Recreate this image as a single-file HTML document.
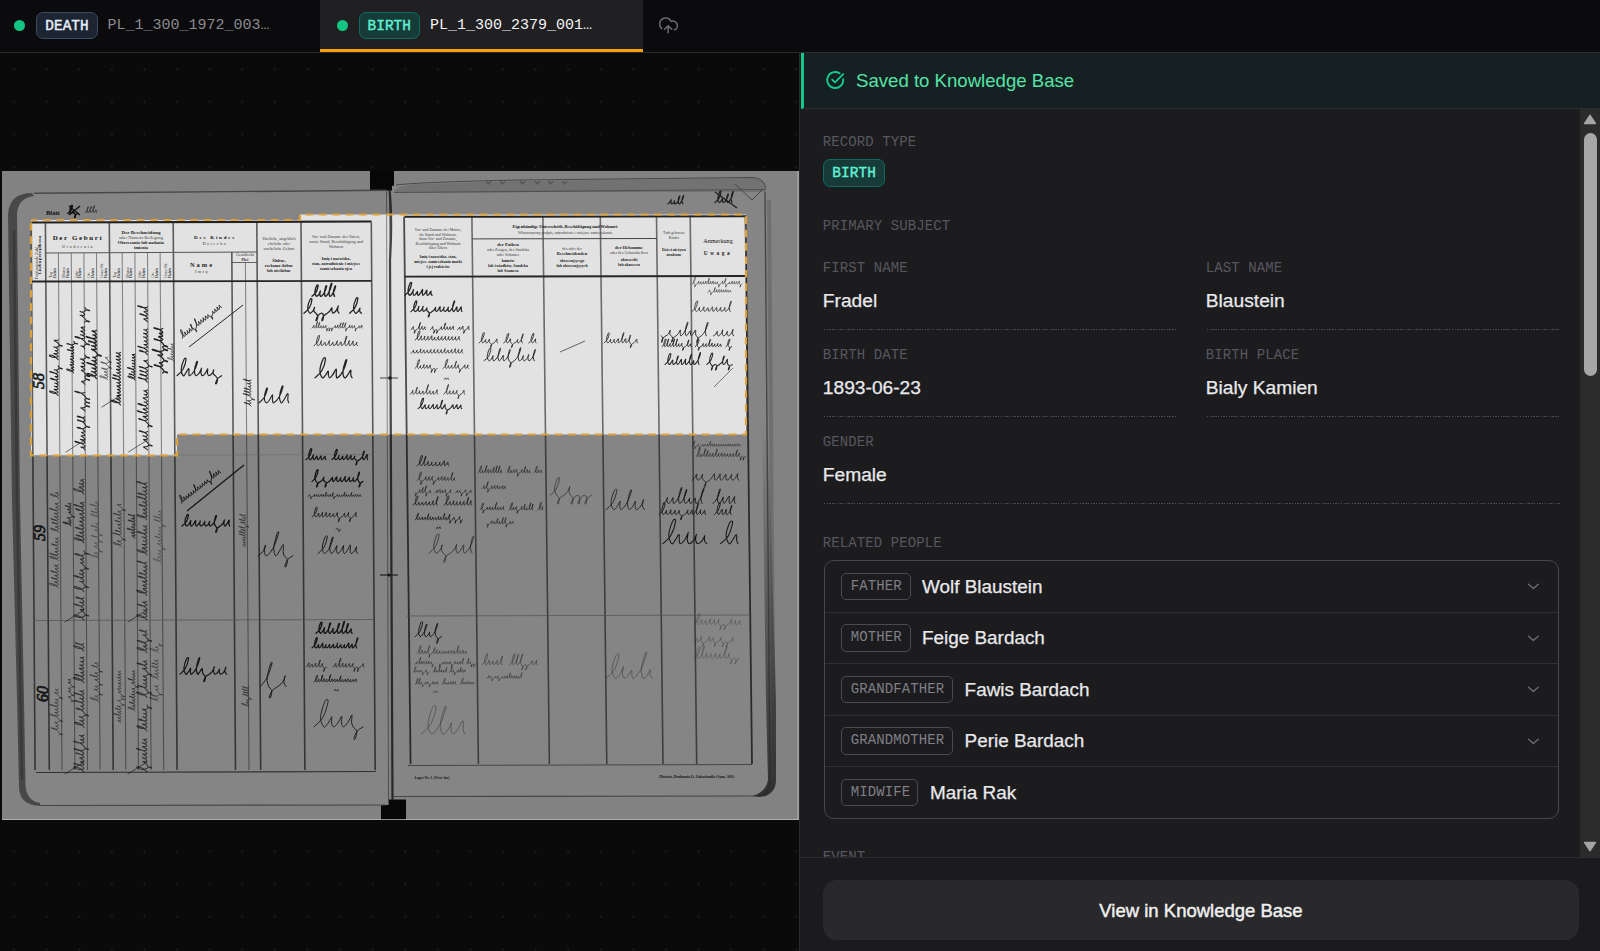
<!DOCTYPE html>
<html><head><meta charset="utf-8">
<style>
*{box-sizing:border-box;margin:0;padding:0}
html,body{width:1600px;height:951px;overflow:hidden;background:#0b0b0d;font-family:"Liberation Sans",sans-serif}
.mono{font-family:"Liberation Mono",monospace}
#tabs{position:absolute;left:0;top:0;width:1600px;height:53px;background:#0b0b0d;border-bottom:1px solid #2a2a2d}
.tab{position:absolute;top:0;height:52px}
.dot{position:absolute;width:11px;height:11px;border-radius:50%;background:#12c585;top:19.5px}
.badge{position:absolute;top:12px;height:27px;border-radius:7px;font-family:"Liberation Mono",monospace;font-weight:400;-webkit-text-stroke:0.45px currentColor;font-size:14.4px;line-height:26.5px;text-align:center;border:1.4px solid;letter-spacing:0.1px}
.fname{position:absolute;top:16px;font-family:"Liberation Mono",monospace;font-size:15px;line-height:20px;white-space:pre}
#canvas{position:absolute;left:0;top:53px;width:799px;height:898px;background-color:#0a0a0b;
 background-image:radial-gradient(circle at 50% 50%, #1d1d20 0.9px, transparent 1.3px);
 background-size:32.6px 32.6px;background-position:-2.2px 0px}
#doc{position:absolute;left:0;top:0}
#panel{position:absolute;left:799px;top:53px;width:801px;height:898px;background:#1c1c1f;border-left:1px solid #2a2a2d}
#banner{position:absolute;left:1px;top:0;width:800px;height:56px;background:#152022;border-left:3px solid #12c98a;border-bottom:1px solid #2b3032}
#banner .txt{position:absolute;left:52px;top:15.9px;font-size:18.6px;line-height:24px;color:#55e3a8;white-space:pre}
.lbl{position:absolute;font-family:"Liberation Mono",monospace;font-size:14px;letter-spacing:0.1px;color:#57575e;line-height:16px;white-space:pre;margin-top:1.3px;margin-left:-1.3px}
.val{position:absolute;font-size:19.2px;color:#e9e9eb;-webkit-text-stroke:0.25px #e9e9eb;line-height:22px;white-space:pre;margin-top:1.5px;margin-left:-1.2px}
.dl{position:absolute;height:1px;width:352px;margin-left:-0.4px;background:repeating-linear-gradient(to right,#4d4d53 0 1.4px,transparent 1.4px 2.72px)}
#people{position:absolute;left:24px;top:507px;width:735px;height:259px;border:1.4px solid #46464d;border-radius:10px;overflow:hidden}
.prow{position:absolute;left:0;width:100%;height:51.5px;border-bottom:1.3px solid #313135}
.role{position:absolute;left:16.2px;top:11.5px;height:27.5px;border:1.3px solid #4a4a51;border-radius:5px;font-family:"Liberation Mono",monospace;font-size:14px;letter-spacing:0.1px;color:#7f7f86;line-height:25.5px;padding-left:8.5px}
.pname{position:absolute;top:14.8px;font-size:18.9px;color:#e9e9eb;-webkit-text-stroke:0.25px #e9e9eb;line-height:22px;white-space:pre;margin-left:-1px}
.chev{position:absolute;left:702px;top:20px}
#sb{position:absolute;left:780px;top:55px;width:21px;height:749px;background:#2b2b2c}
#footer{position:absolute;left:0;top:804px;width:801px;height:94px;background:#1b1b1e;border-top:1px solid #2c2c30}
#btn{position:absolute;left:23px;top:22px;width:756px;height:60px;border-radius:14px;background:#29292c;color:#f0f0f0;text-align:center;font-size:18.5px;font-weight:400;-webkit-text-stroke:0.45px #f0f0f0;line-height:61.5px}
</style></head><body>

<div id="canvas"></div>
<svg id="doc" width="799" height="951" viewBox="0 0 799 951">
<rect x="2" y="171" width="797" height="649" fill="#dedede"/>
<rect x="370" y="171" width="24" height="19.5" fill="#0d0d0e"/>
<rect x="381" y="799.5" width="25" height="20.5" fill="#0d0d0e"/>
<path d="M8 215 Q9 193 32 193 L386 190 L388 805 L40 806 Q20 805 19 788 L17 700 L12 500 Z" fill="#e2e2e2"/>
<path d="M8 215 Q9 193 32 193 L34 196 Q18 198 17 214 L20 500 L24 700 L25.5 786 Q27 801 40 803 L40 806 Q20 805 19 788 L17 700 L12 500 Z" fill="#626262" opacity="0.8"/>
<path d="M14 230 L17 500 L20.5 700 L22 780" stroke="#4a4a4a" stroke-width="2.5" opacity="0.5"/>
<path d="M40 805.5 L386 805" stroke="#777" stroke-width="1.2"/>
<path d="M34 193.3 L386 190.3" stroke="#7a7a7a" stroke-width="1.4"/>
<path d="M392 186 Q420 180 470 180 L754 177 Q765 178 765 190 L770 780 Q770 795 758 796 L392 797 Z" fill="#e2e2e2"/>
<path d="M394 192 Q396 185 420 184 L520 181 L754 178 Q764 179 766 188 L766 192 Z" fill="#c2c2c2"/>
<path d="M396 185 Q420 182 520 180 L754 177.5 Q764 179 766 188" fill="none" stroke="#7a7a7a" stroke-width="1"/>
<path d="M394 192.5 L766 189.5" stroke="#8a8a8a" stroke-width="1.2"/>
<path d="M486 181 l2.5 3 l2.5 -3" fill="none" stroke="#444" stroke-width="1.3" opacity="0.4"/>
<path d="M500 181 l2.5 3 l2.5 -3" fill="none" stroke="#444" stroke-width="1.3" opacity="0.4"/>
<path d="M520 181 l2.5 3 l2.5 -3" fill="none" stroke="#444" stroke-width="1.3" opacity="0.4"/>
<path d="M535 181 l2.5 3 l2.5 -3" fill="none" stroke="#444" stroke-width="1.3" opacity="0.4"/>
<path d="M548 181 l2.5 3 l2.5 -3" fill="none" stroke="#444" stroke-width="1.3" opacity="0.4"/>
<path d="M562 181 l2.5 3 l2.5 -3" fill="none" stroke="#444" stroke-width="1.3" opacity="0.4"/>
<path d="M735 184 L752 200 L762 190" fill="none" stroke="#777" stroke-width="1"/>
<path d="M765 192 L770 780 Q770 795 758 796" fill="none" stroke="#777" stroke-width="1.4"/>
<path d="M769 200 L774 770" stroke="#a8a8a8" stroke-width="4" opacity="0.6"/>
<defs><linearGradient id="rg" x1="0" y1="0" x2="0" y2="1"><stop offset="0" stop-color="#555" stop-opacity="0"/><stop offset="0.55" stop-color="#555" stop-opacity="0.55"/><stop offset="1" stop-color="#444" stop-opacity="0.9"/></linearGradient></defs>
<path d="M762 420 L768 420 L776 700 L776 782 Q774 797 758 797 L752 796 Q766 792 768 780 L766 700 Z" fill="url(#rg)"/>
<path d="M392 796.5 L758 796" stroke="#777" stroke-width="1.2"/>
<path d="M386.5 190 L388.5 805" stroke="#888" stroke-width="1"/>
<path d="M389.5 190 Q392.5 220 390 260 L392.5 800" stroke="#444" stroke-width="2.2"/>
<path d="M380 575 H398" stroke="#333" stroke-width="1.2"/>
<circle cx="389" cy="575" r="1.6" fill="#222"/>
<path d="M380 378 H398" stroke="#444" stroke-width="1"/>
<circle cx="390" cy="378" r="1.8" fill="#222"/>
<line x1="31.2" y1="222.5" x2="35.1" y2="770" stroke="#5a5a5a" stroke-width="1.6"/>
<line x1="45.4" y1="222.5" x2="49.3" y2="770" stroke="#5a5a5a" stroke-width="1.6"/>
<line x1="58.4" y1="253" x2="62" y2="770" stroke="#858585" stroke-width="1.1"/>
<line x1="71.3" y1="253" x2="74.9" y2="770" stroke="#858585" stroke-width="1.1"/>
<line x1="83.9" y1="253" x2="87.5" y2="770" stroke="#858585" stroke-width="1.1"/>
<line x1="96.5" y1="253" x2="100.1" y2="770" stroke="#858585" stroke-width="1.1"/>
<line x1="109.3" y1="222.5" x2="113.2" y2="770" stroke="#5a5a5a" stroke-width="1.6"/>
<line x1="122.2" y1="253" x2="125.8" y2="770" stroke="#858585" stroke-width="1.1"/>
<line x1="134.9" y1="253" x2="138.5" y2="770" stroke="#858585" stroke-width="1.1"/>
<line x1="147.5" y1="253" x2="151.1" y2="770" stroke="#858585" stroke-width="1.1"/>
<line x1="160.1" y1="253" x2="163.7" y2="770" stroke="#858585" stroke-width="1.1"/>
<line x1="173.2" y1="222.5" x2="177.1" y2="770" stroke="#5a5a5a" stroke-width="1.6"/>
<line x1="231.8" y1="252" x2="235.5" y2="770" stroke="#5a5a5a" stroke-width="1.6"/>
<line x1="245.4" y1="262.5" x2="249" y2="770" stroke="#858585" stroke-width="1.1"/>
<line x1="256.8" y1="222.5" x2="260.7" y2="770" stroke="#5a5a5a" stroke-width="1.6"/>
<line x1="301" y1="222.5" x2="304.9" y2="770" stroke="#5a5a5a" stroke-width="1.6"/>
<line x1="371.3" y1="222.5" x2="375.2" y2="770" stroke="#5a5a5a" stroke-width="1.6"/>
<line x1="31.5" y1="222.5" x2="371.6" y2="221.5" stroke="#222" stroke-width="2.2"/>
<line x1="45.7" y1="253" x2="257" y2="252" stroke="#555" stroke-width="1"/>
<line x1="231.9" y1="262.5" x2="257" y2="262.5" stroke="#444" stroke-width="0.8"/>
<line x1="31.5" y1="281.5" x2="371.6" y2="280.8" stroke="#262626" stroke-width="1.8"/>
<line x1="33" y1="620.5" x2="374" y2="619.5" stroke="#888" stroke-width="0.7"/>
<line x1="33" y1="455.5" x2="374" y2="454.5" stroke="#aaa" stroke-width="0.5"/>
<line x1="36" y1="772.5" x2="376" y2="771.5" stroke="#555" stroke-width="1.2"/>
<text transform="rotate(-90 38 263)" x="38" y="263" font-family="Liberation Serif" font-size="4.6"  text-anchor="middle" fill="#3a3a3a" letter-spacing="0">Fortlaufende Zahl</text>
<g transform="rotate(-90 41 255)"><text x="41" y="255" font-family="Liberation Serif" font-size="4.6" font-weight="bold" text-anchor="middle" fill="#1e1e1e" letter-spacing="0">Liczba porządkowa</text></g>
<text x="78" y="240" font-family="Liberation Serif" font-size="7" font-weight="bold" text-anchor="middle" fill="#151515" letter-spacing="1.6">Der Geburt</text>
<text x="78" y="248" font-family="Liberation Serif" font-size="4.5"  text-anchor="middle" fill="#3a3a3a" letter-spacing="1.5">Urodzenia</text>
<text x="141" y="234" font-family="Liberation Serif" font-size="5" font-weight="bold" text-anchor="middle" fill="#1e1e1e" letter-spacing="0">Der Beschneidung</text>
<text x="141" y="238.5" font-family="Liberation Serif" font-size="4.5"  text-anchor="middle" fill="#444" letter-spacing="0">oder Namens-Beilegung</text>
<text x="141" y="244" font-family="Liberation Serif" font-size="4.5" font-weight="bold" text-anchor="middle" fill="#1e1e1e" letter-spacing="0">Obrzezania lub nadania</text>
<text x="141" y="249" font-family="Liberation Serif" font-size="4.5" font-weight="bold" text-anchor="middle" fill="#1e1e1e" letter-spacing="0">imienia</text>
<g transform="rotate(-90 52 278)"><text x="52" y="278" font-family="Liberation Serif" font-size="4.2"  text-anchor="start" fill="#444" letter-spacing="0">Tag</text><text x="52" y="281.5" font-family="Liberation Serif" font-size="4" font-weight="bold" text-anchor="start" fill="#1e1e1e" letter-spacing="0">Dzień</text></g>
<g transform="rotate(-90 65 278)"><text x="65" y="278" font-family="Liberation Serif" font-size="4.2"  text-anchor="start" fill="#444" letter-spacing="0">Monat</text><text x="65" y="281.5" font-family="Liberation Serif" font-size="4" font-weight="bold" text-anchor="start" fill="#1e1e1e" letter-spacing="0">Dzień</text></g>
<g transform="rotate(-90 77.5 278)"><text x="77.5" y="278" font-family="Liberation Serif" font-size="4.2"  text-anchor="start" fill="#444" letter-spacing="0">Jahr</text><text x="77.5" y="281.5" font-family="Liberation Serif" font-size="4" font-weight="bold" text-anchor="start" fill="#1e1e1e" letter-spacing="0">Dzień</text></g>
<g transform="rotate(-90 90 278)"><text x="90" y="278" font-family="Liberation Serif" font-size="4.2"  text-anchor="start" fill="#444" letter-spacing="0">Ort</text><text x="90" y="281.5" font-family="Liberation Serif" font-size="4" font-weight="bold" text-anchor="start" fill="#1e1e1e" letter-spacing="0">Dzień</text></g>
<g transform="rotate(-90 103 278)"><text x="103" y="278" font-family="Liberation Serif" font-size="4.2"  text-anchor="start" fill="#444" letter-spacing="0">Haus-Nr.</text><text x="103" y="281.5" font-family="Liberation Serif" font-size="4" font-weight="bold" text-anchor="start" fill="#1e1e1e" letter-spacing="0">Dzień</text></g>
<g transform="rotate(-90 116 278)"><text x="116" y="278" font-family="Liberation Serif" font-size="4.2"  text-anchor="start" fill="#444" letter-spacing="0">Tag</text><text x="116" y="281.5" font-family="Liberation Serif" font-size="4" font-weight="bold" text-anchor="start" fill="#1e1e1e" letter-spacing="0">Dzień</text></g>
<g transform="rotate(-90 128.5 278)"><text x="128.5" y="278" font-family="Liberation Serif" font-size="4.2"  text-anchor="start" fill="#444" letter-spacing="0">Monat</text><text x="128.5" y="281.5" font-family="Liberation Serif" font-size="4" font-weight="bold" text-anchor="start" fill="#1e1e1e" letter-spacing="0">Dzień</text></g>
<g transform="rotate(-90 141 278)"><text x="141" y="278" font-family="Liberation Serif" font-size="4.2"  text-anchor="start" fill="#444" letter-spacing="0">Jahr</text><text x="141" y="281.5" font-family="Liberation Serif" font-size="4" font-weight="bold" text-anchor="start" fill="#1e1e1e" letter-spacing="0">Dzień</text></g>
<g transform="rotate(-90 154 278)"><text x="154" y="278" font-family="Liberation Serif" font-size="4.2"  text-anchor="start" fill="#444" letter-spacing="0">Ort</text><text x="154" y="281.5" font-family="Liberation Serif" font-size="4" font-weight="bold" text-anchor="start" fill="#1e1e1e" letter-spacing="0">Dzień</text></g>
<g transform="rotate(-90 167 278)"><text x="167" y="278" font-family="Liberation Serif" font-size="4.2"  text-anchor="start" fill="#444" letter-spacing="0">Haus-Nr.</text><text x="167" y="281.5" font-family="Liberation Serif" font-size="4" font-weight="bold" text-anchor="start" fill="#1e1e1e" letter-spacing="0">Dzień</text></g>
<text x="215" y="239" font-family="Liberation Serif" font-size="5" font-weight="bold" text-anchor="middle" fill="#151515" letter-spacing="1.8">Des Kindes</text>
<text x="215" y="245" font-family="Liberation Serif" font-size="4.5"  text-anchor="middle" fill="#444" letter-spacing="1.5">Dziecka</text>
<text x="202" y="267" font-family="Liberation Serif" font-size="6.5" font-weight="bold" text-anchor="middle" fill="#1e1e1e" letter-spacing="2">Name</text>
<text x="202" y="273" font-family="Liberation Serif" font-size="4.5"  text-anchor="middle" fill="#3a3a3a" letter-spacing="1.5">Imię</text>
<text x="245" y="256" font-family="Liberation Serif" font-size="4"  text-anchor="middle" fill="#2e2e2e" letter-spacing="0">Geschlecht</text>
<text x="245" y="260.5" font-family="Liberation Serif" font-size="4" font-weight="bold" text-anchor="middle" fill="#1e1e1e" letter-spacing="0">Płeć</text>
<text x="279" y="240" font-family="Liberation Serif" font-size="4.2"  text-anchor="middle" fill="#3a3a3a" letter-spacing="0">Eheliche, angeblich</text>
<text x="279" y="245" font-family="Liberation Serif" font-size="4.2"  text-anchor="middle" fill="#3a3a3a" letter-spacing="0">eheliche oder</text>
<text x="279" y="250" font-family="Liberation Serif" font-size="4.2"  text-anchor="middle" fill="#3a3a3a" letter-spacing="0">uneheliche Geburt</text>
<text x="279" y="262" font-family="Liberation Serif" font-size="4.2" font-weight="bold" text-anchor="middle" fill="#1e1e1e" letter-spacing="0">Ślubne,</text>
<text x="279" y="267" font-family="Liberation Serif" font-size="4.2" font-weight="bold" text-anchor="middle" fill="#1e1e1e" letter-spacing="0">rzekomo ślubne</text>
<text x="279" y="272" font-family="Liberation Serif" font-size="4.2" font-weight="bold" text-anchor="middle" fill="#1e1e1e" letter-spacing="0">lub nieślubne</text>
<text x="336" y="238" font-family="Liberation Serif" font-size="4.2"  text-anchor="middle" fill="#3a3a3a" letter-spacing="0">Vor- und Zuname des Vaters,</text>
<text x="336" y="243" font-family="Liberation Serif" font-size="4.2"  text-anchor="middle" fill="#3a3a3a" letter-spacing="0">sowie Stand, Beschäftigung und</text>
<text x="336" y="248" font-family="Liberation Serif" font-size="4.2"  text-anchor="middle" fill="#3a3a3a" letter-spacing="0">Wohnort</text>
<text x="336" y="260" font-family="Liberation Serif" font-size="4.2" font-weight="bold" text-anchor="middle" fill="#1e1e1e" letter-spacing="0">Imię i nazwisko,</text>
<text x="336" y="265" font-family="Liberation Serif" font-size="4.2" font-weight="bold" text-anchor="middle" fill="#1e1e1e" letter-spacing="0">stan, zatrudnienie i miejsce</text>
<text x="336" y="270" font-family="Liberation Serif" font-size="4.2" font-weight="bold" text-anchor="middle" fill="#1e1e1e" letter-spacing="0">zamieszkania ojca</text>
<text x="46" y="215" font-family="Liberation Serif" font-size="6.5" font-weight="bold" text-anchor="start" fill="#151515" letter-spacing="0">Blatt</text>
<path d="M68 213.4C68.5 212.9 70.1 211.8 70.8 210.5C71.6 209.3 72.3 206.7 72.3 206C72.4 205.2 71.7 205.2 71.3 206C70.9 206.7 70 209.3 70 210.5C70 211.8 70.8 213.1 71.2 213.4C71.6 213.7 72.2 212.8 72.5 212.4C72.9 211.9 73.3 211 73.5 210.7C73.7 210.5 73.6 210.5 73.6 210.7C73.6 211 73.5 211.9 73.6 212.4C73.7 212.8 74.1 212.9 74.4 213.4C74.7 213.8 75.4 214.2 75.5 214.8C75.6 215.5 75.2 216.8 75.1 217.2C74.9 217.6 74.5 217.6 74.6 217.2C74.7 216.8 75.1 215.5 75.6 214.8C76.1 214.2 77.2 213.6 77.5 213.4" stroke="#222" stroke-width="1.6" fill="none" stroke-linecap="round" stroke-linejoin="round"/>
<line x1="69" y1="206" x2="80" y2="215" stroke="#222" stroke-width="1.4"/>
<line x1="80" y1="206" x2="69" y2="215" stroke="#222" stroke-width="1.4"/>
<path d="M85 212.6C85.3 212.2 86.5 211.4 87 210.5C87.6 209.6 88.2 207.6 88.3 207.1C88.5 206.5 88.1 206.5 87.9 207.1C87.7 207.6 87.1 209.6 87.1 210.5C87.1 211.4 87.4 212.6 87.9 212.6C88.4 212.6 89.4 211.4 90 210.4C90.5 209.5 91.1 207.6 91.3 207C91.4 206.4 91 206.4 90.8 207C90.6 207.6 90.1 209.5 90.1 210.4C90.1 211.4 90.3 212.6 90.8 212.6C91.3 212.5 92.4 211.2 93 210.1C93.6 209.1 94.3 206.8 94.4 206.2C94.6 205.5 94.2 205.5 94 206.2C93.8 206.8 93.1 209.1 93.1 210.1C93 211.2 93.5 212.3 93.8 212.6C94.1 212.8 94.5 212 94.9 211.6C95.2 211.2 95.6 210.4 95.8 210.1C96 209.8 96 209.8 96.1 210.1C96.1 210.4 96 211.2 96.1 211.6C96.2 212 96.6 212.4 96.7 212.6" stroke="#555" stroke-width="1" fill="none" stroke-linecap="round" stroke-linejoin="round"/>
<line x1="404.1" y1="216.8" x2="410.6" y2="764" stroke="#4a4a4a" stroke-width="1.8"/>
<line x1="471.9" y1="216.8" x2="478.4" y2="764" stroke="#6a6a6a" stroke-width="1.6"/>
<line x1="542.9" y1="216.8" x2="549.4" y2="764" stroke="#6a6a6a" stroke-width="1.6"/>
<line x1="600.3" y1="216.8" x2="606.8" y2="764" stroke="#6a6a6a" stroke-width="1.6"/>
<line x1="656.5" y1="216.8" x2="663" y2="764" stroke="#6a6a6a" stroke-width="1.6"/>
<line x1="690.2" y1="216.8" x2="696.7" y2="764" stroke="#6a6a6a" stroke-width="1.6"/>
<line x1="745.5" y1="216.8" x2="752" y2="764" stroke="#4a4a4a" stroke-width="1.8"/>
<line x1="404.6" y1="216.8" x2="746" y2="216.3" stroke="#222" stroke-width="2"/>
<line x1="472.4" y1="238.9" x2="657" y2="238.5" stroke="#444" stroke-width="1"/>
<line x1="404.6" y1="276.7" x2="746" y2="276" stroke="#262626" stroke-width="1.8"/>
<line x1="406" y1="616" x2="750" y2="615" stroke="#888" stroke-width="0.7"/>
<line x1="408" y1="765.5" x2="752" y2="764.5" stroke="#777" stroke-width="1"/>
<text x="438" y="231" font-family="Liberation Serif" font-size="4"  text-anchor="middle" fill="#3a3a3a" letter-spacing="0">Vor- und Zuname der Mutter,</text>
<text x="438" y="235.5" font-family="Liberation Serif" font-size="4"  text-anchor="middle" fill="#3a3a3a" letter-spacing="0">ihr Stand und Wohnort,</text>
<text x="438" y="240" font-family="Liberation Serif" font-size="4"  text-anchor="middle" fill="#3a3a3a" letter-spacing="0">dann Vor- und Zuname,</text>
<text x="438" y="244.5" font-family="Liberation Serif" font-size="4"  text-anchor="middle" fill="#3a3a3a" letter-spacing="0">Beschäftigung und Wohnort</text>
<text x="438" y="249" font-family="Liberation Serif" font-size="4"  text-anchor="middle" fill="#3a3a3a" letter-spacing="0">ihrer Eltern</text>
<text x="438" y="258" font-family="Liberation Serif" font-size="4" font-weight="bold" text-anchor="middle" fill="#1e1e1e" letter-spacing="0">Imię i nazwisko, stan,</text>
<text x="438" y="263" font-family="Liberation Serif" font-size="4" font-weight="bold" text-anchor="middle" fill="#1e1e1e" letter-spacing="0">miejsce zamieszkania matki</text>
<text x="438" y="268" font-family="Liberation Serif" font-size="4" font-weight="bold" text-anchor="middle" fill="#1e1e1e" letter-spacing="0">i jej rodziców</text>
<text x="565" y="228" font-family="Liberation Serif" font-size="4.4" font-weight="bold" text-anchor="middle" fill="#151515" letter-spacing="0">Eigenhändige Unterschrift, Beschäftigung und Wohnort</text>
<text x="565" y="233.5" font-family="Liberation Serif" font-size="4"  text-anchor="middle" fill="#3a3a3a" letter-spacing="0">Własnoręczny podpis, zatrudnienie i miejsce zamieszkania</text>
<text x="508" y="246" font-family="Liberation Serif" font-size="4.6" font-weight="bold" text-anchor="middle" fill="#1e1e1e" letter-spacing="0">der Pathen</text>
<text x="508" y="251" font-family="Liberation Serif" font-size="4"  text-anchor="middle" fill="#3a3a3a" letter-spacing="0">oder Zeugen, des Sandeka</text>
<text x="508" y="256" font-family="Liberation Serif" font-size="4"  text-anchor="middle" fill="#3a3a3a" letter-spacing="0">oder Schames</text>
<text x="508" y="262" font-family="Liberation Serif" font-size="4" font-weight="bold" text-anchor="middle" fill="#1e1e1e" letter-spacing="0">kumów</text>
<text x="508" y="267" font-family="Liberation Serif" font-size="4" font-weight="bold" text-anchor="middle" fill="#1e1e1e" letter-spacing="0">lub świadków, Sandeka</text>
<text x="508" y="272" font-family="Liberation Serif" font-size="4" font-weight="bold" text-anchor="middle" fill="#1e1e1e" letter-spacing="0">lub Szamesa</text>
<text x="572" y="250" font-family="Liberation Serif" font-size="4"  text-anchor="middle" fill="#3a3a3a" letter-spacing="0">des oder der</text>
<text x="572" y="255" font-family="Liberation Serif" font-size="4.4" font-weight="bold" text-anchor="middle" fill="#1e1e1e" letter-spacing="0">Beschneidenden</text>
<text x="572" y="262" font-family="Liberation Serif" font-size="4" font-weight="bold" text-anchor="middle" fill="#1e1e1e" letter-spacing="0">obrzezującego</text>
<text x="572" y="267" font-family="Liberation Serif" font-size="4" font-weight="bold" text-anchor="middle" fill="#1e1e1e" letter-spacing="0">lub obrzezujących</text>
<text x="629" y="249" font-family="Liberation Serif" font-size="4.6" font-weight="bold" text-anchor="middle" fill="#1e1e1e" letter-spacing="0">der Hebamme</text>
<text x="629" y="254" font-family="Liberation Serif" font-size="4"  text-anchor="middle" fill="#3a3a3a" letter-spacing="0">oder des Geburtshelfers</text>
<text x="629" y="261" font-family="Liberation Serif" font-size="4" font-weight="bold" text-anchor="middle" fill="#1e1e1e" letter-spacing="0">akuszerki</text>
<text x="629" y="266" font-family="Liberation Serif" font-size="4" font-weight="bold" text-anchor="middle" fill="#1e1e1e" letter-spacing="0">lub akuszera</text>
<text x="674" y="234" font-family="Liberation Serif" font-size="3.8"  text-anchor="middle" fill="#3a3a3a" letter-spacing="0">Todt geborene</text>
<text x="674" y="239" font-family="Liberation Serif" font-size="3.8"  text-anchor="middle" fill="#3a3a3a" letter-spacing="0">Kinder</text>
<text x="674" y="251" font-family="Liberation Serif" font-size="3.8" font-weight="bold" text-anchor="middle" fill="#1e1e1e" letter-spacing="0">Dzieci nieżywo</text>
<text x="674" y="256" font-family="Liberation Serif" font-size="3.8" font-weight="bold" text-anchor="middle" fill="#1e1e1e" letter-spacing="0">urodzone</text>
<text x="718" y="243" font-family="Liberation Serif" font-size="6.2"  text-anchor="middle" fill="#151515" letter-spacing="0">Anmerkung</text>
<text x="718" y="255" font-family="Liberation Serif" font-size="5.4" font-weight="bold" text-anchor="middle" fill="#151515" letter-spacing="2.5">Uwaga</text>
<text x="432" y="779" font-family="Liberation Serif" font-size="3.6" font-weight="bold" text-anchor="middle" fill="#1e1e1e" letter-spacing="0">Lager Nr. 1. (Netz. lar)</text>
<text x="697" y="777.5" font-family="Liberation Serif" font-size="3.6" font-weight="bold" text-anchor="middle" fill="#1e1e1e" letter-spacing="0">Zbiorów, Drukarnia O. Zakarkanila i Syna. 3031.</text>
<path d="M668 203.9C668.3 203.7 669.1 203.1 669.6 202.4C670.1 201.8 670.6 200.4 670.9 200C671.2 199.6 671.1 199.6 671.1 200C671.1 200.4 670.9 201.8 671 202.4C671.1 203.1 671.3 203.9 671.7 203.9C672.1 204 673 203.3 673.5 202.8C674 202.3 674.4 201.2 674.5 200.9C674.7 200.6 674.5 200.6 674.4 200.9C674.4 201.2 674.2 202.3 674.3 202.8C674.5 203.3 674.8 204.2 675.4 203.9C676 203.6 677.3 202.3 678.1 201.1C678.8 199.9 679.6 197.3 679.8 196.6C680 195.8 679.5 195.8 679.2 196.6C678.9 197.3 678.2 199.9 678.2 201.1C678.2 202.3 678.5 204 679.1 203.9C679.7 203.9 681.1 202.2 681.8 200.9C682.6 199.6 683.4 196.9 683.6 196.1C683.8 195.3 683.3 195.3 683.1 196.1C682.8 196.9 682 199.6 681.9 200.9C681.9 202.2 682.7 203.4 682.9 203.9" stroke="#333" stroke-width="1.2" fill="none" stroke-linecap="round" stroke-linejoin="round"/>
<path d="M715 202.5C715.6 201.8 717.9 200.2 718.9 198.4C719.9 196.7 720.9 193 721 191.9C721.1 190.8 720.1 190.8 719.6 191.9C719.1 193 717.8 196.7 717.8 198.4C717.7 200.2 718.7 202.1 719.2 202.5C719.8 202.9 720.6 201.6 721.1 200.9C721.7 200.3 722.3 198.8 722.5 198.4C722.8 198 722.6 198 722.6 198.4C722.7 198.8 722.4 200.3 722.5 200.9C722.7 201.6 722.8 202.7 723.5 202.5C724.1 202.2 725.7 200.7 726.5 199.4C727.3 198 728.2 195.2 728.4 194.4C728.6 193.5 728 193.5 727.7 194.4C727.4 195.2 726.6 198 726.6 199.4C726.6 200.7 727 202.6 727.7 202.5C728.5 202.3 730 200.3 731 198.6C731.9 196.9 733 193.3 733.2 192.3C733.5 191.2 732.9 191.2 732.6 192.3C732.2 193.3 731.2 196.9 731.1 198.6C731 200.3 731.8 201.8 732 202.5" stroke="#333" stroke-width="1.2" fill="none" stroke-linecap="round" stroke-linejoin="round"/>
<line x1="715" y1="192" x2="737" y2="208" stroke="#333" stroke-width="1.2"/>
<text transform="rotate(-90 39 381) translate(0 5)" font-style="italic" stroke="#242424" stroke-width="0.7" x="39" y="381" font-family="Liberation Serif" font-size="16"  text-anchor="middle" fill="#242424" letter-spacing="0">58</text>
<g transform="translate(54.6 395.5) rotate(-90)"><path d="M0 3.5C0.5 3 2.2 1.8 3 0.5C3.7 -0.8 4.5 -3.6 4.5 -4.4C4.6 -5.2 3.9 -5.2 3.5 -4.4C3 -3.6 2.1 -0.8 2.1 0.5C2.1 1.8 2.9 3.2 3.3 3.5C3.7 3.7 4.2 2.7 4.6 2.1C5.1 1.5 5.6 0.2 5.9 -0.1C6.1 -0.5 6.1 -0.5 6.2 -0.1C6.2 0.2 6 1.5 6 2.1C6.1 2.7 6.2 3.5 6.6 3.5C6.9 3.5 7.8 2.7 8.2 2.2C8.7 1.6 9.1 0.5 9.3 0.1C9.4 -0.2 9.2 -0.2 9.2 0.1C9.1 0.5 8.9 1.6 9 2.2C9.1 2.7 9.4 3.5 9.9 3.5C10.3 3.5 11.1 2.8 11.5 2.3C12 1.8 12.4 0.8 12.5 0.4C12.6 0.1 12.4 0.1 12.3 0.4C12.3 0.8 12 1.8 12.2 2.3C12.3 2.8 12.6 3.7 13.2 3.5C13.7 3.2 14.9 1.9 15.6 0.7C16.3 -0.5 17 -3 17.2 -3.7C17.4 -4.5 17 -4.5 16.7 -3.7C16.5 -3 15.7 -0.5 15.7 0.7C15.6 1.9 16.1 3.2 16.4 3.5C16.8 3.8 17.4 2.9 17.8 2.4C18.2 1.9 18.7 0.9 18.9 0.6C19.1 0.3 19 0.3 19 0.6C19 0.9 18.9 1.9 19 2.4C19.1 2.9 19.2 3.8 19.7 3.5C20.3 3.2 21.5 1.8 22.2 0.5C22.9 -0.8 23.8 -3.6 24 -4.4C24.2 -5.2 23.8 -5.2 23.5 -4.4C23.2 -3.6 22.4 -0.8 22.3 0.5C22.2 1.8 22.6 3.2 23 3.5C23.4 3.8 24.2 2.7 24.7 2.2C25.1 1.6 25.6 0.4 25.7 0C25.9 -0.3 25.7 -0.3 25.6 0C25.6 0.4 25.3 1.6 25.4 2.2C25.5 2.7 26 3 26.3 3.5C26.6 3.9 27.3 4.3 27.5 5C27.6 5.6 27.2 7 27 7.4C26.9 7.8 26.4 7.8 26.5 7.4C26.6 7 27 5.6 27.5 5C28.1 4.3 29.3 3.7 29.6 3.5M35.8 3.5C36.3 3 38 1.7 38.8 0.4C39.6 -0.9 40.3 -3.7 40.4 -4.6C40.5 -5.4 39.8 -5.4 39.3 -4.6C38.9 -3.7 38 -0.9 38 0.4C37.9 1.7 38.7 3.2 39.1 3.5C39.6 3.7 40.2 2.6 40.6 2C41.1 1.3 41.6 -0.1 41.9 -0.5C42.1 -0.9 42 -0.9 42 -0.5C42 -0.1 41.7 1.3 41.8 2C41.9 2.6 42.1 3.4 42.4 3.5C42.8 3.6 43.5 2.9 43.9 2.4C44.3 2 44.7 1 44.9 0.8C45 0.5 44.9 0.5 44.9 0.8C44.9 1 44.7 2 44.8 2.4C45 2.9 45.3 3.6 45.7 3.5C46.1 3.4 46.9 2.6 47.4 1.9C47.9 1.3 48.4 -0.1 48.6 -0.5C48.8 -1 48.6 -1 48.5 -0.5C48.4 -0.1 48.1 1.3 48.2 1.9C48.3 2.6 48.7 3 49 3.5C49.3 4 50 4.3 50.1 5C50.2 5.6 49.9 7 49.7 7.4C49.5 7.8 49.1 7.8 49.2 7.4C49.3 7 49.7 5.6 50.2 5C50.7 4.3 51.7 3.9 52.3 3.5C52.8 3 53.1 2.7 53.5 2.1C53.9 1.5 54.5 0.3 54.8 -0.1C55 -0.5 55.1 -0.5 55.2 -0.1C55.3 0.3 55.1 1.5 55.1 2.1C55.2 2.7 55.5 3.2 55.6 3.5" stroke="#242424" stroke-width="1.02" fill="none" stroke-linecap="round" stroke-linejoin="round"/></g>
<g transform="translate(70.7 373) rotate(-90)"><path d="M0 3C0.4 2.6 1.9 1.6 2.6 0.5C3.2 -0.6 3.8 -2.9 3.9 -3.5C3.9 -4.2 3.3 -4.2 2.9 -3.5C2.6 -2.9 1.8 -0.6 1.8 0.5C1.8 1.6 2.5 2.8 2.9 3C3.2 3.3 3.6 2.5 4 2.1C4.3 1.7 4.7 0.8 4.9 0.6C5.1 0.3 5.1 0.3 5.2 0.6C5.2 0.8 5.1 1.7 5.2 2.1C5.3 2.5 5.5 3.1 5.8 3C6 3 6.5 2.3 6.9 1.8C7.3 1.2 7.8 0 8 -0.3C8.3 -0.7 8.3 -0.7 8.4 -0.3C8.4 0 8.2 1.2 8.3 1.8C8.3 2.3 8.3 3 8.6 3C8.9 3.1 9.7 2.4 10.1 1.9C10.5 1.4 10.9 0.4 11 0.1C11.1 -0.2 11 -0.2 10.9 0.1C10.9 0.4 10.6 1.4 10.7 1.9C10.8 2.4 11.2 3.1 11.5 3C11.8 3 12.3 2.3 12.7 1.8C13.1 1.2 13.6 0 13.8 -0.3C14.1 -0.7 14.1 -0.7 14.1 -0.3C14.1 0 13.9 1.2 13.9 1.8C14 2.3 14.1 3 14.4 3C14.7 3.1 15.4 2.4 15.8 2C16.2 1.5 16.6 0.6 16.7 0.3C16.8 0 16.6 0 16.6 0.3C16.6 0.6 16.3 1.5 16.5 2C16.6 2.4 16.9 3 17.3 3C17.6 3.1 18 2.5 18.3 2.1C18.7 1.7 19.1 0.8 19.3 0.6C19.5 0.3 19.5 0.3 19.6 0.6C19.7 0.8 19.5 1.7 19.6 2.1C19.7 2.5 19.7 3.3 20.1 3C20.6 2.8 21.6 1.8 22.2 0.8C22.8 -0.2 23.4 -2.2 23.6 -2.9C23.7 -3.5 23.3 -3.5 23.1 -2.9C22.9 -2.2 22.3 -0.2 22.3 0.8C22.3 1.8 22.7 2.9 23 3C23.3 3.2 23.8 2.4 24.2 1.9C24.6 1.4 25 0.3 25.2 0C25.5 -0.3 25.5 -0.3 25.5 0C25.5 0.3 25.3 1.4 25.4 1.9C25.5 2.4 25.5 3.2 25.9 3C26.3 2.8 27.4 1.7 28 0.6C28.6 -0.4 29.3 -2.6 29.5 -3.3C29.6 -3.9 29.2 -3.9 29 -3.3C28.8 -2.6 28.1 -0.4 28.1 0.6C28.1 1.7 28.5 2.4 28.8 3C29.1 3.7 29.7 3.8 29.8 4.4C29.9 4.9 29.5 6.1 29.4 6.5C29.3 6.8 28.9 6.8 29 6.5C29 6.1 29.4 4.9 29.9 4.4C30.3 3.8 31.4 3.3 31.7 3" stroke="#242424" stroke-width="1.02" fill="none" stroke-linecap="round" stroke-linejoin="round"/></g>
<g transform="translate(81 450) rotate(-90)"><path d="M0 3.9C0.3 3.7 1.3 3.1 1.8 2.4C2.3 1.8 2.8 0.4 3 -0C3.2 -0.4 3.1 -0.4 3 -0C3 0.4 2.7 1.8 2.8 2.4C2.9 3.1 3.1 4.3 3.7 3.9C4.3 3.5 5.8 1.9 6.6 0.3C7.4 -1.3 8.4 -4.7 8.7 -5.6C9 -6.6 8.5 -6.6 8.1 -5.6C7.8 -4.7 6.8 -1.3 6.7 0.3C6.6 1.9 7 3.6 7.4 3.9C7.8 4.2 8.8 3 9.3 2.3C9.8 1.5 10.4 0 10.6 -0.4C10.8 -0.9 10.6 -0.9 10.5 -0.4C10.5 0 10.1 1.5 10.2 2.3C10.3 3 10.7 3.9 11.1 3.9C11.5 4 12 3.1 12.5 2.5C12.9 1.9 13.5 0.7 13.8 0.3C14.1 -0 14.2 -0 14.2 0.3C14.3 0.7 14.1 1.9 14.2 2.5C14.3 3.1 14.5 3.9 14.8 3.9C15.1 3.9 15.7 3.2 16.1 2.7C16.5 2.2 17 1.2 17.3 0.9C17.6 0.5 17.7 0.5 17.8 0.9C17.9 1.2 17.8 2.2 17.9 2.7C18 3.2 18 4.2 18.5 3.9C19 3.6 20.4 2.3 21.1 1.1C21.9 -0.1 22.7 -2.7 22.8 -3.5C23 -4.2 22.5 -4.2 22.3 -3.5C22 -2.7 21.3 -0.1 21.2 1.1C21.2 2.3 21.8 3.2 22.2 3.9C22.6 4.7 23.4 4.9 23.5 5.6C23.6 6.3 23.2 7.9 23 8.3C22.8 8.8 22.3 8.8 22.4 8.3C22.5 7.9 23 6.3 23.6 5.6C24.2 4.9 25.1 4.6 25.9 3.9C26.7 3.2 27.8 2.4 28.5 1.3C29.2 0.1 29.9 -2.3 30.1 -3C30.3 -3.7 29.8 -3.7 29.5 -3C29.3 -2.3 28.6 0.1 28.6 1.3C28.6 2.4 29 3.9 29.6 3.9C30.2 3.9 31.5 2.4 32.2 1.2C32.9 -0 33.7 -2.5 33.9 -3.3C34.1 -4 33.6 -4 33.3 -3.3C33.1 -2.5 32.3 -0 32.3 1.2C32.3 2.4 33.1 3.4 33.3 3.9M39.1 3.9C39.3 3.7 40.1 3.1 40.5 2.4C41 1.8 41.6 0.4 41.9 -0C42.2 -0.4 42.3 -0.4 42.3 -0C42.4 0.4 42.1 1.8 42.2 2.4C42.3 3.1 42.5 3.4 42.8 3.9C43.1 4.4 43.9 4.9 44.1 5.6C44.2 6.3 43.8 7.9 43.6 8.3C43.4 8.8 42.9 8.8 43 8.3C43.1 7.9 43.6 6.3 44.2 5.6C44.8 4.9 45.9 3.9 46.5 3.9C47.1 3.9 47.6 4.9 47.8 5.6C47.9 6.3 47.5 7.9 47.3 8.3C47.1 8.8 46.6 8.8 46.7 8.3C46.8 7.9 47.3 6.3 47.9 5.6C48.5 4.9 49.6 3.9 50.2 3.9C50.8 3.9 51.3 4.9 51.5 5.6C51.6 6.3 51.2 7.9 51 8.3C50.8 8.8 50.3 8.8 50.4 8.3C50.5 7.9 51 6.3 51.6 5.6C52.2 4.9 53 4.8 53.9 3.9C54.7 3 55.9 1.9 56.8 0.3C57.6 -1.2 58.6 -4.5 58.8 -5.5C59.1 -6.5 58.6 -6.5 58.3 -5.5C57.9 -4.5 57 -1.2 56.9 0.3C56.7 1.9 57.5 3.3 57.6 3.9M65.7 3.9C65.9 3.7 66.6 3.2 67 2.7C67.4 2.2 68 1.1 68.2 0.8C68.5 0.5 68.6 0.5 68.7 0.8C68.8 1.1 68.7 2.2 68.8 2.7C68.9 3.2 69.1 3.4 69.4 3.9C69.7 4.4 70.5 4.9 70.7 5.6C70.8 6.3 70.4 7.9 70.2 8.3C70 8.8 69.5 8.8 69.6 8.3C69.7 7.9 70.2 6.3 70.8 5.6C71.4 4.9 72.5 3.9 73.1 3.9C73.7 3.9 74.2 4.9 74.4 5.6C74.5 6.3 74.1 7.9 73.9 8.3C73.7 8.8 73.2 8.8 73.3 8.3C73.4 7.9 73.9 6.3 74.5 5.6C75.1 4.9 76.2 4.4 76.8 3.9C77.4 3.4 77.7 3.2 78.1 2.7C78.5 2.1 79.1 1 79.3 0.7C79.6 0.4 79.8 0.4 79.9 0.7C80 1 79.8 2.1 79.9 2.7C80 3.2 80.2 3.9 80.5 3.9C80.8 3.9 81.5 3.1 81.9 2.5C82.4 1.8 83 0.5 83.3 0.1C83.6 -0.3 83.6 -0.3 83.7 0.1C83.7 0.5 83.5 1.8 83.6 2.5C83.7 3.1 83.8 3.9 84.2 3.9C84.5 4 85.3 3.3 85.8 2.8C86.2 2.3 86.7 1.2 86.9 0.9C87.1 0.6 87 0.6 87 0.9C87 1.2 86.9 2.3 87 2.8C87.1 3.3 87.4 4 87.9 3.9C88.3 3.8 89.2 3 89.7 2.3C90.2 1.5 90.8 0 91 -0.4C91.2 -0.9 91.1 -0.9 91 -0.4C91 0 90.7 1.5 90.8 2.3C90.8 3 91.2 3.3 91.6 3.9C91.9 4.5 92.7 4.9 92.9 5.6C93 6.3 92.6 7.9 92.4 8.3C92.2 8.8 91.7 8.8 91.8 8.3C91.9 7.9 92.4 6.3 93 5.6C93.6 4.9 94.9 4.2 95.3 3.9M101.1 3.9C101.4 3.7 102.4 3.1 102.9 2.5C103.4 1.8 103.9 0.5 104.1 0.1C104.3 -0.3 104.1 -0.3 104 0.1C104 0.5 103.7 1.8 103.8 2.5C104 3.1 104.4 3.4 104.8 3.9C105.2 4.4 105.9 4.9 106.1 5.6C106.2 6.3 105.8 7.9 105.6 8.3C105.4 8.8 104.9 8.8 105 8.3C105.1 7.9 105.6 6.3 106.2 5.6C106.8 4.9 107.6 4.8 108.5 3.9C109.3 3 110.5 1.9 111.3 0.4C112.2 -1.2 113.2 -4.4 113.4 -5.4C113.6 -6.3 113.2 -6.3 112.8 -5.4C112.5 -4.4 111.6 -1.2 111.5 0.4C111.3 1.9 111.7 3.6 112.2 3.9C112.6 4.2 113.5 3 114.1 2.3C114.6 1.5 115.2 0.1 115.4 -0.4C115.6 -0.8 115.3 -0.8 115.3 -0.4C115.2 0.1 114.9 1.5 115 2.3C115.1 3 115.5 3.9 115.9 3.9C116.3 3.9 116.9 3 117.4 2.3C117.9 1.6 118.5 0.2 118.8 -0.2C119.1 -0.6 119.1 -0.6 119.1 -0.2C119.2 0.2 118.9 1.6 119 2.3C119.1 3 119.3 3.9 119.6 3.9C119.9 3.9 120.5 3.1 120.9 2.6C121.4 2 121.9 0.8 122.2 0.4C122.5 0 122.6 0 122.7 0.4C122.8 0.8 122.7 2 122.8 2.6C122.8 3.1 123.2 3.7 123.3 3.9M127.8 3.9C128 4.2 129 4.9 129.1 5.6C129.2 6.3 128.8 7.9 128.6 8.3C128.5 8.8 128 8.8 128.1 8.3C128.2 7.9 128.6 6.3 129.2 5.6C129.8 4.9 130.9 4.5 131.5 3.9C132.2 3.3 132.7 2.9 133.2 2.2C133.7 1.5 134.4 -0.1 134.6 -0.6C134.9 -1 134.8 -1 134.8 -0.6C134.8 -0.1 134.5 1.5 134.6 2.2C134.6 2.9 134.8 3.9 135.2 3.9C135.7 3.9 136.7 2.9 137.2 2.2C137.8 1.4 138.3 -0.1 138.5 -0.6C138.7 -1.1 138.4 -1.1 138.3 -0.6C138.2 -0.1 137.9 1.4 138 2.2C138.1 2.9 138.5 3.3 138.9 3.9C139.3 4.5 140.1 4.9 140.2 5.6C140.3 6.3 139.9 7.9 139.7 8.3C139.6 8.8 139.1 8.8 139.2 8.3C139.3 7.9 139.7 6.3 140.3 5.6C140.9 4.9 142.2 4.2 142.6 3.9" stroke="#242424" stroke-width="1.02" fill="none" stroke-linecap="round" stroke-linejoin="round"/><path d="M-2 -15 Q4 -6 10 4" stroke="#242424" stroke-width="0.918" fill="none" stroke-linecap="round" opacity="0.7"/></g>
<g transform="translate(92.5 378.5) rotate(-90)"><path d="M0 3.9C0.6 3.4 2.5 2 3.3 0.6C4.2 -0.8 5 -3.9 5.1 -4.8C5.1 -5.7 4.3 -5.7 3.8 -4.8C3.4 -3.9 2.4 -0.8 2.4 0.6C2.3 2 3.2 3.6 3.7 3.9C4.2 4.2 5.1 3 5.6 2.2C6.2 1.5 6.7 -0 6.9 -0.5C7.1 -0.9 6.9 -0.9 6.8 -0.5C6.7 -0 6.4 1.5 6.5 2.2C6.6 3 6.9 3.9 7.4 3.9C7.9 3.9 8.7 3 9.2 2.4C9.8 1.7 10.3 0.3 10.5 -0.1C10.7 -0.5 10.5 -0.5 10.4 -0.1C10.4 0.3 10 1.7 10.2 2.4C10.3 3 10.5 4.2 11.1 3.9C11.7 3.6 13.1 2 13.9 0.5C14.7 -0.9 15.6 -4 15.9 -4.9C16.1 -5.8 15.6 -5.8 15.3 -4.9C15 -4 14.1 -0.9 14 0.5C13.9 2 14.4 3.6 14.8 3.9C15.2 4.2 16.1 3 16.6 2.3C17.2 1.6 17.7 0.2 17.9 -0.3C18.1 -0.7 17.9 -0.7 17.9 -0.3C17.8 0.2 17.5 1.6 17.6 2.3C17.7 3 18.1 3.8 18.5 3.9C18.9 4 19.8 3.2 20.3 2.7C20.7 2.1 21.2 1 21.3 0.7C21.5 0.3 21.3 0.3 21.3 0.7C21.3 1 21 2.1 21.2 2.7C21.3 3.2 21.8 3.4 22.2 3.9C22.6 4.4 23.4 4.9 23.5 5.6C23.6 6.3 23.2 7.9 23 8.3C22.8 8.8 22.3 8.8 22.4 8.3C22.5 7.9 23 6.3 23.6 5.6C24.2 4.9 25.2 4.5 25.9 3.9C26.6 3.3 27 2.9 27.6 2.2C28.1 1.4 28.7 -0.1 29 -0.6C29.3 -1 29.2 -1 29.2 -0.6C29.2 -0.1 28.9 1.4 29 2.2C29 2.9 29.2 3.9 29.6 3.9C30 3.9 30.9 2.9 31.5 2.2C32 1.5 32.6 -0.1 32.8 -0.5C33 -1 32.8 -1 32.8 -0.5C32.7 -0.1 32.4 1.5 32.5 2.2C32.5 2.9 32.7 4.1 33.3 3.9C33.9 3.7 35.2 2.3 35.9 1.1C36.6 -0.1 37.4 -2.6 37.6 -3.4C37.8 -4.1 37.3 -4.1 37 -3.4C36.8 -2.6 36 -0.1 36 1.1C36 2.3 36.4 4.1 37 3.9C37.6 3.8 39.1 1.8 39.9 0.3C40.7 -1.3 41.7 -4.7 42 -5.7C42.3 -6.6 41.8 -6.6 41.4 -5.7C41.1 -4.7 40.1 -1.3 40 0.3C39.9 1.8 40.3 3.5 40.7 3.9C41.1 4.3 42 3.2 42.5 2.7C42.9 2.2 43.4 1.1 43.5 0.7C43.7 0.4 43.5 0.4 43.5 0.7C43.4 1.1 43.2 2.2 43.3 2.7C43.5 3.2 44 4 44.4 3.9C44.8 3.9 45.5 3 46 2.4C46.5 1.7 47 0.3 47.3 -0.1C47.6 -0.5 47.6 -0.5 47.6 -0.1C47.6 0.3 47.3 1.7 47.4 2.4C47.5 3 48 3.7 48.1 3.9" stroke="#242424" stroke-width="1.36" fill="none" stroke-linecap="round" stroke-linejoin="round"/></g>
<g transform="translate(104.8 380) rotate(-90)"><path d="M0 3C0.4 2.6 2 1.4 2.7 0.1C3.4 -1.1 4.1 -3.8 4.2 -4.6C4.3 -5.4 3.6 -5.4 3.3 -4.6C2.9 -3.8 2 -1.1 1.9 0.1C1.9 1.4 2.5 2.7 2.9 3C3.3 3.3 4 2.4 4.4 1.9C4.8 1.4 5.1 0.4 5.3 0.1C5.4 -0.2 5.2 -0.2 5.1 0.1C5.1 0.4 4.8 1.4 4.9 1.9C5 2.4 5.4 3.1 5.8 3C6.1 3 6.8 2.3 7.2 1.8C7.7 1.2 8.1 0 8.2 -0.3C8.4 -0.7 8.2 -0.7 8.2 -0.3C8.1 0 7.8 1.2 7.9 1.8C8 2.3 8.2 3.2 8.6 3C9.1 2.9 10.1 1.8 10.7 0.8C11.3 -0.2 11.9 -2.3 12.1 -2.9C12.2 -3.5 11.8 -3.5 11.6 -2.9C11.4 -2.3 10.8 -0.2 10.8 0.8C10.8 1.8 11.2 2.4 11.5 3C11.8 3.6 12.4 3.8 12.5 4.4C12.6 4.9 12.3 6.1 12.1 6.5C12 6.8 11.6 6.8 11.7 6.5C11.8 6.1 12.1 4.9 12.6 4.4C13 3.8 13.7 3.7 14.4 3C15 2.4 15.9 1.6 16.6 0.5C17.2 -0.6 17.9 -3 18.1 -3.7C18.2 -4.4 17.9 -4.4 17.6 -3.7C17.4 -3 16.7 -0.6 16.6 0.5C16.6 1.6 17 2.4 17.3 3C17.5 3.7 18.2 3.8 18.3 4.4C18.4 4.9 18 6.1 17.9 6.5C17.8 6.8 17.4 6.8 17.5 6.5C17.5 6.1 17.9 4.9 18.4 4.4C18.8 3.8 19.6 3.4 20.1 3C20.7 2.7 21.2 2.5 21.6 2.1C21.9 1.7 22.3 0.8 22.4 0.6C22.5 0.3 22.3 0.3 22.3 0.6C22.2 0.8 22 1.7 22.2 2.1C22.3 2.5 22.9 2.9 23 3" stroke="#242424" stroke-width="0.935" fill="none" stroke-linecap="round" stroke-linejoin="round" opacity="0.7"/></g>
<g transform="translate(117 405) rotate(-90)"><path d="M0 3.5C0.5 2.9 2.3 1.6 3.1 0.2C3.8 -1.3 4.7 -4.3 4.8 -5.2C4.9 -6 4.1 -6 3.7 -5.2C3.3 -4.3 2.3 -1.3 2.2 0.2C2.1 1.6 2.9 3.2 3.3 3.5C3.7 3.8 4.4 2.6 4.8 2C5.3 1.3 5.8 -0 6 -0.4C6.3 -0.8 6.2 -0.8 6.2 -0.4C6.2 -0 5.9 1.3 5.9 2C6 2.6 6.3 3.4 6.6 3.5C6.9 3.5 7.4 2.7 7.8 2.2C8.2 1.6 8.7 0.5 9 0.1C9.3 -0.2 9.4 -0.2 9.5 0.1C9.5 0.5 9.4 1.6 9.4 2.2C9.5 2.7 9.6 3.4 9.9 3.5C10.1 3.5 10.6 2.9 11 2.4C11.4 1.9 11.9 0.9 12.1 0.6C12.4 0.3 12.5 0.3 12.6 0.6C12.7 0.9 12.6 1.9 12.7 2.4C12.8 2.9 12.8 3.5 13.2 3.5C13.5 3.5 14.1 2.9 14.5 2.4C15 1.9 15.4 0.9 15.6 0.6C15.8 0.3 15.7 0.3 15.7 0.6C15.8 0.9 15.6 1.9 15.7 2.4C15.8 2.9 16.1 3.5 16.4 3.5C16.8 3.4 17.4 2.7 17.8 2.2C18.2 1.6 18.7 0.4 19 0.1C19.2 -0.3 19.2 -0.3 19.2 0.1C19.3 0.4 19.1 1.6 19.1 2.2C19.2 2.7 19.4 3.5 19.7 3.5C20.1 3.5 20.9 2.7 21.4 2.2C21.8 1.6 22.3 0.4 22.4 0.1C22.6 -0.3 22.4 -0.3 22.4 0.1C22.3 0.4 22.1 1.6 22.2 2.2C22.3 2.7 22.5 3.7 23 3.5C23.6 3.2 24.8 1.8 25.5 0.6C26.2 -0.7 27 -3.3 27.2 -4.1C27.4 -4.9 27 -4.9 26.7 -4.1C26.4 -3.3 25.6 -0.7 25.6 0.6C25.5 1.8 25.8 3.4 26.3 3.5C26.8 3.5 28 2 28.7 0.9C29.3 -0.3 30.1 -2.7 30.3 -3.4C30.4 -4.1 30 -4.1 29.8 -3.4C29.5 -2.7 28.8 -0.3 28.8 0.9C28.8 2 29.2 3.2 29.6 3.5C30 3.7 30.7 2.8 31.1 2.2C31.5 1.6 32 0.5 32.2 0.1C32.4 -0.2 32.3 -0.2 32.3 0.1C32.3 0.5 32.1 1.6 32.2 2.2C32.3 2.8 32.5 3.5 32.9 3.5C33.3 3.4 33.9 2.6 34.4 2C34.8 1.3 35.4 -0 35.6 -0.4C35.8 -0.8 35.8 -0.8 35.8 -0.4C35.8 -0 35.5 1.3 35.6 2C35.6 2.6 35.8 3.4 36.2 3.5C36.5 3.5 37.2 2.8 37.6 2.2C38.1 1.6 38.5 0.5 38.8 0.1C39 -0.2 38.9 -0.2 38.9 0.1C38.9 0.5 38.7 1.6 38.8 2.2C38.9 2.8 39.1 3.5 39.5 3.5C39.8 3.5 40.5 2.8 40.9 2.2C41.4 1.7 41.8 0.5 42 0.2C42.2 -0.1 42.1 -0.1 42.1 0.2C42.1 0.5 41.9 1.7 42 2.2C42.1 2.8 42.4 3.5 42.8 3.5C43.1 3.4 43.9 2.6 44.4 2C44.9 1.3 45.4 -0.1 45.6 -0.5C45.8 -0.9 45.6 -0.9 45.6 -0.5C45.5 -0.1 45.2 1.3 45.3 2C45.4 2.6 45.7 3.5 46 3.5C46.4 3.5 47 2.6 47.4 2C47.9 1.3 48.5 -0.1 48.7 -0.5C49 -0.9 49 -0.9 49 -0.5C49 -0.1 48.8 1.3 48.8 2C48.9 2.6 49 3.5 49.3 3.5C49.7 3.5 50.6 2.6 51 2C51.5 1.3 52 -0.1 52.2 -0.5C52.4 -0.9 52.2 -0.9 52.1 -0.5C52 -0.1 51.7 1.3 51.8 2C51.9 2.6 52.5 3.2 52.6 3.5" stroke="#242424" stroke-width="1.105" fill="none" stroke-linecap="round" stroke-linejoin="round"/><path d="M-2 -15 Q4 -6 10 4" stroke="#242424" stroke-width="0.9945" fill="none" stroke-linecap="round" opacity="0.7"/></g>
<g transform="translate(132 380) rotate(-90)"><path d="M0 3C0.4 2.6 1.9 1.6 2.6 0.5C3.2 -0.6 3.8 -2.9 3.9 -3.6C4 -4.2 3.3 -4.2 2.9 -3.6C2.6 -2.9 1.8 -0.6 1.8 0.5C1.8 1.6 2.4 3 2.9 3C3.4 3.1 4.4 1.8 4.9 0.9C5.5 0 6.1 -1.9 6.2 -2.5C6.3 -3.1 6 -3.1 5.8 -2.5C5.6 -1.9 5 0 5 0.9C5 1.8 5.4 2.9 5.8 3C6.1 3.2 6.8 2.3 7.3 1.8C7.7 1.3 8.1 0.1 8.2 -0.2C8.4 -0.6 8.2 -0.6 8.1 -0.2C8.1 0.1 7.8 1.3 7.9 1.8C8 2.3 8.1 3.3 8.6 3C9.1 2.8 10.2 1.5 10.8 0.4C11.5 -0.8 12.2 -3.2 12.4 -4C12.6 -4.7 12.2 -4.7 12 -4C11.7 -3.2 11 -0.8 10.9 0.4C10.8 1.5 11.2 2.7 11.5 3C11.8 3.3 12.5 2.5 12.9 2.1C13.3 1.7 13.6 0.8 13.7 0.6C13.9 0.3 13.7 0.3 13.6 0.6C13.6 0.8 13.4 1.7 13.5 2.1C13.7 2.5 14 3 14.4 3C14.8 3 15.5 2.5 15.8 2.1C16.2 1.6 16.6 0.7 16.7 0.5C16.8 0.2 16.6 0.2 16.5 0.5C16.5 0.7 16.3 1.6 16.4 2.1C16.5 2.5 16.9 3.1 17.3 3C17.7 3 18.4 2.4 18.8 1.9C19.2 1.5 19.5 0.4 19.7 0.1C19.8 -0.2 19.5 -0.2 19.5 0.1C19.4 0.4 19.2 1.5 19.3 1.9C19.4 2.4 19.8 3 20.1 3C20.5 3.1 21 2.5 21.3 2.1C21.7 1.7 22.1 0.8 22.2 0.5C22.4 0.3 22.4 0.3 22.4 0.5C22.4 0.8 22.3 1.7 22.4 2.1C22.5 2.5 22.7 3.1 23 3C23.3 3 23.8 2.5 24.1 2C24.5 1.6 24.9 0.6 25.1 0.3C25.3 0 25.4 0 25.4 0.3C25.5 0.6 25.3 1.6 25.4 2C25.5 2.5 25.8 2.9 25.9 3" stroke="#242424" stroke-width="1.02" fill="none" stroke-linecap="round" stroke-linejoin="round"/></g>
<g transform="translate(143.6 450) rotate(-90)"><path d="M0 3.9C0.2 3.7 0.9 3.1 1.3 2.5C1.8 1.9 2.4 0.6 2.7 0.3C3 -0.1 3.1 -0.1 3.2 0.3C3.3 0.6 3.1 1.9 3.2 2.5C3.3 3.1 3.4 3.4 3.7 3.9C4 4.4 4.9 4.9 5 5.6C5.1 6.3 4.7 7.9 4.5 8.3C4.3 8.8 3.8 8.8 3.9 8.3C4 7.9 4.5 6.3 5.1 5.6C5.7 4.9 6.8 4.4 7.4 3.9C8 3.4 8.3 3.1 8.8 2.5C9.2 1.8 9.8 0.5 10.1 0.1C10.4 -0.2 10.5 -0.2 10.6 0.1C10.7 0.5 10.5 1.8 10.6 2.5C10.7 3.1 10.7 3.9 11.1 3.9C11.5 3.9 12.5 3 13.1 2.3C13.6 1.6 14.1 0.1 14.3 -0.3C14.5 -0.7 14.2 -0.7 14.1 -0.3C14 0.1 13.7 1.6 13.8 2.3C13.9 3 14.2 4.1 14.8 3.9C15.4 3.7 16.7 2.3 17.5 1C18.2 -0.3 19 -3 19.2 -3.8C19.4 -4.6 18.9 -4.6 18.7 -3.8C18.4 -3 17.6 -0.3 17.6 1C17.6 2.3 18.3 3.4 18.5 3.9M23.1 3.9C23.3 4.2 24.2 4.9 24.4 5.6C24.5 6.3 24.1 7.9 23.9 8.3C23.7 8.8 23.2 8.8 23.3 8.3C23.4 7.9 23.9 6.3 24.5 5.6C25.1 4.9 25.9 4.7 26.8 3.9C27.6 3.1 28.7 2.2 29.5 0.8C30.3 -0.6 31.1 -3.4 31.4 -4.2C31.6 -5.1 31.1 -5.1 30.8 -4.2C30.5 -3.4 29.7 -0.6 29.6 0.8C29.6 2.2 30.1 3.7 30.5 3.9C30.9 4.2 31.5 3 32 2.3C32.5 1.6 33.2 0.1 33.4 -0.3C33.7 -0.8 33.7 -0.8 33.8 -0.3C33.8 0.1 33.5 1.6 33.6 2.3C33.7 3 33.6 4.2 34.2 3.9C34.8 3.6 36.2 1.8 37.1 0.2C37.9 -1.4 38.9 -4.7 39.2 -5.7C39.5 -6.7 39 -6.7 38.6 -5.7C38.3 -4.7 37.3 -1.4 37.2 0.2C37.1 1.8 37.5 3.6 37.9 3.9C38.2 4.3 38.8 3 39.3 2.4C39.8 1.7 40.4 0.3 40.7 -0.1C41 -0.6 41.1 -0.6 41.2 -0.1C41.2 0.3 41 1.7 41.1 2.4C41.1 3 41 4.2 41.6 3.9C42.1 3.6 43.6 2 44.4 0.5C45.2 -1 46.2 -4.1 46.4 -5C46.6 -5.9 46.1 -5.9 45.8 -5C45.5 -4.1 44.6 -1 44.5 0.5C44.4 2 44.8 3.5 45.3 3.9C45.7 4.3 46.6 3.2 47.1 2.7C47.6 2.2 48 1.2 48.1 0.8C48.3 0.5 48 0.5 48 0.8C47.9 1.2 47.7 2.2 47.9 2.7C48 3.2 48.6 4 49 3.9C49.4 3.8 49.9 3 50.4 2.3C50.9 1.6 51.5 0.1 51.9 -0.3C52.2 -0.7 52.3 -0.7 52.3 -0.3C52.4 0.1 52.1 1.6 52.2 2.3C52.3 3 52.3 3.8 52.7 3.9C53.1 4 54 3.2 54.5 2.7C54.9 2.2 55.4 1.2 55.5 0.8C55.7 0.5 55.4 0.5 55.4 0.8C55.4 1.2 55.1 2.2 55.3 2.7C55.5 3.2 55.9 3.9 56.4 3.9C56.8 3.9 57.6 3.2 58 2.6C58.5 2 59 0.8 59.2 0.4C59.4 0.1 59.3 0.1 59.3 0.4C59.3 0.8 59.1 2 59.2 2.6C59.4 3.2 59.9 3.7 60.1 3.9M67.9 3.9C68.4 3.4 69.9 2.1 70.7 0.7C71.5 -0.7 72.4 -3.7 72.6 -4.5C72.8 -5.4 72.3 -5.4 72 -4.5C71.7 -3.7 70.9 -0.7 70.8 0.7C70.8 2.1 71.1 3.8 71.6 3.9C72.2 4 73.6 2.4 74.3 1.2C75 -0.1 75.8 -2.6 75.9 -3.3C76.1 -4 75.6 -4 75.4 -3.3C75.1 -2.6 74.4 -0.1 74.4 1.2C74.4 2.4 74.8 3.9 75.3 3.9C75.9 3.9 77.2 2.4 77.9 1.2C78.7 0 79.4 -2.4 79.6 -3.1C79.8 -3.9 79.3 -3.9 79 -3.1C78.8 -2.4 78.1 0 78.1 1.2C78.1 2.4 78.4 4 79 3.9C79.7 3.9 81 2.2 81.7 0.9C82.5 -0.4 83.3 -3.1 83.5 -3.9C83.7 -4.7 83.2 -4.7 83 -3.9C82.7 -3.1 81.9 -0.4 81.8 0.9C81.8 2.2 82.4 3.1 82.7 3.9C83.1 4.7 83.9 4.9 84 5.6C84.2 6.3 83.7 7.9 83.5 8.3C83.4 8.8 82.9 8.8 83 8.3C83.1 7.9 83.6 6.3 84.1 5.6C84.7 4.9 85.8 4.4 86.4 3.9C87.1 3.4 87.6 3.2 88.1 2.6C88.5 2 89 0.8 89.2 0.5C89.5 0.1 89.4 0.1 89.4 0.5C89.4 0.8 89.2 2 89.3 2.6C89.4 3.2 90 3.7 90.1 3.9M95.2 3.9C95.7 3.4 97.2 2.3 97.9 1C98.6 -0.3 99.5 -2.9 99.7 -3.7C99.9 -4.5 99.4 -4.5 99.1 -3.7C98.8 -2.9 98 -0.3 98 1C98 2.3 98.3 4 98.9 3.9C99.6 3.8 101 2 101.8 0.4C102.6 -1.1 103.5 -4.2 103.8 -5.1C104 -6.1 103.5 -6.1 103.2 -5.1C102.9 -4.2 102 -1.1 101.9 0.4C101.8 2 102.3 3.5 102.6 3.9C103 4.3 103.8 3.2 104.2 2.7C104.7 2.1 105.2 1 105.4 0.7C105.6 0.3 105.5 0.3 105.6 0.7C105.6 1 105.4 2.1 105.5 2.7C105.6 3.2 105.9 3.9 106.3 3.9C106.8 3.9 107.6 3.2 108.1 2.7C108.6 2.2 109 1.1 109.2 0.8C109.3 0.5 109.1 0.5 109.1 0.8C109.1 1.1 108.8 2.2 109 2.7C109.2 3.2 109.6 3.9 110 3.9C110.5 3.9 111.4 3.1 111.9 2.5C112.4 1.9 112.9 0.6 113.1 0.2C113.2 -0.2 113 -0.2 113 0.2C112.9 0.6 112.6 1.9 112.8 2.5C112.9 3.1 113.3 3.9 113.7 3.9C114.2 3.9 115 3.1 115.5 2.5C116 1.8 116.5 0.5 116.7 0.2C116.9 -0.2 116.7 -0.2 116.7 0.2C116.7 0.5 116.4 1.8 116.5 2.5C116.7 3.1 117 3.9 117.4 3.9C117.9 3.9 118.8 3.2 119.3 2.6C119.7 2 120.2 0.8 120.4 0.4C120.6 0.1 120.3 0.1 120.3 0.4C120.2 0.8 120 2 120.1 2.6C120.3 3.2 121 3.7 121.1 3.9M128.2 3.9C128.4 3.7 129.1 3.2 129.5 2.6C130 2 130.6 0.8 130.9 0.4C131.1 0 131.3 0 131.3 0.4C131.4 0.8 131.3 2 131.3 2.6C131.4 3.2 131.4 4.1 131.9 3.9C132.4 3.7 133.8 2.4 134.5 1.2C135.2 0 136 -2.5 136.2 -3.2C136.3 -3.9 135.8 -3.9 135.6 -3.2C135.3 -2.5 134.6 0 134.6 1.2C134.6 2.4 135.2 3.7 135.6 3.9C136 4.1 136.5 3.2 137 2.6C137.4 2.1 138 0.9 138.2 0.6C138.5 0.2 138.6 0.2 138.6 0.6C138.7 0.9 138.6 2.1 138.7 2.6C138.8 3.2 138.7 4.3 139.3 3.9C139.9 3.5 141.3 1.9 142.2 0.3C143 -1.2 144 -4.5 144.2 -5.5C144.5 -6.4 144 -6.4 143.7 -5.5C143.3 -4.5 142.4 -1.2 142.3 0.3C142.2 1.9 142.9 3.3 143 3.9" stroke="#242424" stroke-width="1.02" fill="none" stroke-linecap="round" stroke-linejoin="round"/><path d="M-2 -15 Q4 -6 10 4" stroke="#242424" stroke-width="0.918" fill="none" stroke-linecap="round" opacity="0.7"/></g>
<g transform="translate(158.8 373) rotate(-90)"><path d="M0 3.9C0.2 4.2 1.2 4.9 1.3 5.6C1.4 6.3 1 7.9 0.8 8.3C0.6 8.8 0.1 8.8 0.2 8.3C0.3 7.9 0.8 6.3 1.4 5.6C2 4.9 2.9 4.7 3.7 3.9C4.5 3.1 5.6 2.2 6.4 0.9C7.1 -0.3 8 -3 8.2 -3.8C8.4 -4.6 7.9 -4.6 7.6 -3.8C7.3 -3 6.5 -0.3 6.5 0.9C6.5 2.2 7 3.6 7.4 3.9C7.8 4.2 8.5 3.2 8.9 2.7C9.4 2.2 9.9 1 10.1 0.7C10.3 0.4 10.3 0.4 10.3 0.7C10.3 1 10.2 2.2 10.3 2.7C10.4 3.2 10.7 3.4 11.1 3.9C11.4 4.4 12.3 4.9 12.4 5.6C12.5 6.3 12.1 7.9 11.9 8.3C11.7 8.8 11.2 8.8 11.3 8.3C11.4 7.9 11.9 6.3 12.5 5.6C13.1 4.9 14.1 4.5 14.8 3.9C15.5 3.3 16 2.9 16.6 2.2C17.1 1.4 17.7 -0.1 17.9 -0.6C18.2 -1 18.1 -1 18.1 -0.6C18 -0.1 17.7 1.4 17.8 2.2C17.8 2.9 17.9 4.2 18.5 3.9C19.1 3.6 20.6 1.8 21.4 0.2C22.3 -1.4 23.3 -4.8 23.6 -5.8C23.8 -6.8 23.3 -6.8 23 -5.8C22.6 -4.8 21.6 -1.4 21.5 0.2C21.4 1.8 21.9 3 22.2 3.9C22.5 4.8 23.4 4.9 23.5 5.6C23.6 6.3 23.2 7.9 23 8.3C22.8 8.8 22.3 8.8 22.4 8.3C22.5 7.9 23 6.3 23.6 5.6C24.2 4.9 25.3 3.9 25.9 3.9C26.5 3.9 27.1 4.9 27.2 5.6C27.3 6.3 26.9 7.9 26.7 8.3C26.5 8.8 26 8.8 26.1 8.3C26.2 7.9 26.7 6.3 27.3 5.6C27.9 4.9 28.8 4.7 29.6 3.9C30.4 3.1 31.6 2.2 32.3 0.8C33.1 -0.5 33.9 -3.3 34.1 -4.1C34.3 -4.9 33.9 -4.9 33.6 -4.1C33.3 -3.3 32.5 -0.5 32.4 0.8C32.4 2.2 32.9 3.6 33.3 3.9C33.7 4.2 34.3 3.1 34.8 2.5C35.2 1.9 35.8 0.5 36.1 0.2C36.4 -0.2 36.4 -0.2 36.5 0.2C36.5 0.5 36.3 1.9 36.4 2.5C36.5 3.1 36.7 3.9 37 3.9C37.3 4 38 3.3 38.4 2.8C38.8 2.3 39.3 1.3 39.6 0.9C39.8 0.6 39.8 0.6 39.9 0.9C40 1.3 39.8 2.3 40 2.8C40.1 3.3 40.1 4.2 40.7 3.9C41.3 3.6 42.7 2.2 43.4 0.8C44.2 -0.5 45 -3.3 45.2 -4.2C45.5 -5 45 -5 44.7 -4.2C44.4 -3.3 43.6 -0.5 43.5 0.8C43.5 2.2 44.2 3.4 44.4 3.9" stroke="#242424" stroke-width="1.36" fill="none" stroke-linecap="round" stroke-linejoin="round"/></g>
<g transform="translate(171 361) rotate(-90)"><path d="M0 2.6C0.4 2.2 1.7 1.4 2.2 0.4C2.8 -0.6 3.3 -2.6 3.4 -3.2C3.4 -3.8 2.9 -3.8 2.6 -3.2C2.3 -2.6 1.6 -0.6 1.6 0.4C1.6 1.4 2.1 2.4 2.5 2.6C2.8 2.8 3.3 2.1 3.7 1.6C4 1.2 4.3 0.3 4.5 0.1C4.6 -0.2 4.5 -0.2 4.4 0.1C4.4 0.3 4.2 1.2 4.3 1.6C4.4 2.1 4.6 2.6 4.9 2.6C5.2 2.6 5.9 2 6.2 1.6C6.6 1.1 6.9 0.2 7 -0.1C7.1 -0.4 7 -0.4 6.9 -0.1C6.9 0.2 6.7 1.1 6.7 1.6C6.8 2 7.1 2.6 7.4 2.6C7.7 2.6 8.3 2.1 8.7 1.7C9 1.3 9.3 0.5 9.4 0.3C9.5 0.1 9.3 0.1 9.3 0.3C9.2 0.5 9 1.3 9.1 1.7C9.2 2.1 9.4 2.8 9.9 2.6C10.3 2.4 11.2 1.3 11.8 0.3C12.3 -0.7 12.9 -2.8 13.1 -3.4C13.3 -4 12.9 -4 12.7 -3.4C12.5 -2.8 11.9 -0.7 11.8 0.3C11.8 1.3 12.1 2.3 12.3 2.6C12.6 2.9 13.2 2.2 13.5 1.8C13.8 1.5 14.1 0.8 14.2 0.6C14.3 0.4 14.2 0.4 14.1 0.6C14.1 0.8 14 1.5 14.1 1.8C14.2 2.2 14.5 2.6 14.8 2.6C15.1 2.6 15.7 2 16 1.6C16.3 1.2 16.7 0.2 16.8 -0C17 -0.3 16.8 -0.3 16.8 -0C16.8 0.2 16.6 1.2 16.7 1.6C16.7 2 17.2 2.4 17.3 2.6" stroke="#242424" stroke-width="0.85" fill="none" stroke-linecap="round" stroke-linejoin="round" opacity="0.7"/></g>
<g transform="translate(184 340) rotate(-38)"><path d="M0 -2.4C0.4 -2.9 2 -4 2.7 -5.2C3.3 -6.4 4 -8.9 4.1 -9.6C4.2 -10.4 3.5 -10.4 3.1 -9.6C2.8 -8.9 1.9 -6.4 1.9 -5.2C1.9 -4 2.5 -2.7 2.9 -2.4C3.3 -2.2 4 -3.1 4.4 -3.7C4.8 -4.3 5.3 -5.4 5.4 -5.8C5.6 -6.1 5.4 -6.1 5.4 -5.8C5.3 -5.4 5 -4.3 5.1 -3.7C5.2 -3.1 5.5 -2.4 5.8 -2.4C6.2 -2.4 6.9 -3.1 7.3 -3.6C7.7 -4.1 8.1 -5.2 8.3 -5.5C8.4 -5.8 8.2 -5.8 8.2 -5.5C8.1 -5.2 7.9 -4.1 8 -3.6C8.1 -3.1 8.4 -2.4 8.8 -2.4C9.1 -2.4 9.6 -3.1 9.9 -3.6C10.3 -4.2 10.8 -5.3 11 -5.6C11.3 -5.9 11.3 -5.9 11.3 -5.6C11.3 -5.3 11.1 -4.2 11.2 -3.6C11.3 -3.1 11.2 -2.3 11.7 -2.4C12.1 -2.6 13.2 -3.7 13.7 -4.6C14.3 -5.6 14.9 -7.6 15.1 -8.2C15.2 -8.8 14.8 -8.8 14.6 -8.2C14.4 -7.6 13.8 -5.6 13.8 -4.6C13.8 -3.7 14.3 -3 14.6 -2.4C14.9 -1.8 15.5 -1.7 15.6 -1.1C15.7 -0.5 15.4 0.7 15.2 1.1C15.1 1.4 14.7 1.4 14.8 1.1C14.9 0.7 15.2 -0.5 15.7 -1.1C16.1 -1.7 16.8 -1.7 17.5 -2.4C18.2 -3.1 19.1 -4 19.8 -5.2C20.4 -6.5 21.2 -9 21.4 -9.8C21.6 -10.6 21.2 -10.6 21 -9.8C20.7 -9 19.9 -6.5 19.9 -5.2C19.8 -4 20.1 -2.7 20.4 -2.4C20.7 -2.1 21.4 -3.1 21.8 -3.6C22.2 -4.1 22.6 -5.2 22.8 -5.5C23 -5.8 22.9 -5.8 22.8 -5.5C22.8 -5.2 22.6 -4.1 22.7 -3.6C22.8 -3.1 23.1 -2.4 23.3 -2.4C23.6 -2.4 24 -3.1 24.4 -3.5C24.8 -4 25.2 -5.1 25.5 -5.4C25.7 -5.7 25.8 -5.7 25.9 -5.4C25.9 -5.1 25.8 -4 25.9 -3.5C25.9 -3.1 26 -2.4 26.3 -2.4C26.5 -2.4 27.2 -3.1 27.6 -3.7C28 -4.2 28.4 -5.3 28.6 -5.7C28.8 -6 28.8 -6 28.7 -5.7C28.7 -5.3 28.5 -4.2 28.6 -3.7C28.7 -3.1 28.9 -2.4 29.2 -2.4C29.5 -2.4 29.9 -3.1 30.3 -3.6C30.7 -4.1 31.1 -5.2 31.4 -5.6C31.6 -5.9 31.7 -5.9 31.8 -5.6C31.8 -5.2 31.6 -4.1 31.7 -3.6C31.8 -3.1 31.8 -2.5 32.1 -2.4C32.3 -2.4 32.8 -3 33.1 -3.4C33.5 -3.9 33.9 -4.8 34.2 -5.1C34.4 -5.3 34.5 -5.3 34.5 -5.1C34.6 -4.8 34.5 -3.9 34.6 -3.4C34.6 -3 34.8 -2.8 35 -2.4C35.3 -2 35.9 -1.7 36 -1.1C36.1 -0.5 35.8 0.7 35.6 1.1C35.5 1.4 35.1 1.4 35.2 1.1C35.3 0.7 35.7 -0.5 36.1 -1.1C36.6 -1.7 37.4 -2 37.9 -2.4C38.5 -2.8 38.9 -3 39.3 -3.4C39.7 -3.8 40 -4.7 40.2 -5C40.3 -5.3 40.2 -5.3 40.1 -5C40.1 -4.7 40 -3.8 40.1 -3.4C40.2 -3 40.5 -2.4 40.8 -2.4C41.2 -2.4 41.7 -3.1 42.1 -3.5C42.5 -4 42.9 -5.1 43.1 -5.4C43.3 -5.7 43.3 -5.7 43.3 -5.4C43.3 -5.1 43.1 -4 43.2 -3.5C43.3 -3.1 43.4 -2.4 43.8 -2.4C44.1 -2.4 44.8 -3.1 45.2 -3.6C45.6 -4.2 46 -5.3 46.2 -5.6C46.3 -5.9 46.2 -5.9 46.2 -5.6C46.1 -5.3 45.9 -4.2 46 -3.6C46 -3.1 46.4 -2.4 46.7 -2.4C47 -2.4 47.4 -3.1 47.8 -3.6C48.2 -4.1 48.6 -5.2 48.9 -5.5C49.1 -5.9 49.2 -5.9 49.3 -5.5C49.3 -5.2 49.1 -4.1 49.2 -3.6C49.2 -3.1 49.5 -2.6 49.6 -2.4" stroke="#242424" stroke-width="0.9" fill="none" stroke-linecap="round" stroke-linejoin="round"/></g>
<line x1="189" y1="347" x2="243" y2="305" stroke="#242424" stroke-width="1.0"/>
<path d="M177 375.7C178 374.7 181.3 372.2 182.9 369.5C184.4 366.8 185.9 361.1 186.1 359.4C186.3 357.8 184.8 357.8 184 359.4C183.2 361.1 181.3 366.8 181.2 369.5C181.1 372.2 182.6 375.1 183.4 375.7C184.1 376.3 184.9 374.3 185.7 373.2C186.5 372.1 187.5 369.8 188.1 369.1C188.6 368.4 188.8 368.4 189 369.1C189.1 369.8 188.8 372.1 188.9 373.2C189 374.3 188.8 376.1 189.7 375.7C190.6 375.3 193.1 372.9 194.3 370.7C195.6 368.5 197 363.9 197.4 362.5C197.7 361.1 196.9 361.1 196.4 362.5C195.9 363.9 194.6 368.5 194.5 370.7C194.5 372.9 195.3 375.3 196.1 375.7C196.9 376.1 198.3 374.2 199.2 373.1C200 371.9 201 369.5 201.3 368.8C201.7 368 201.4 368 201.4 368.8C201.3 369.5 200.8 371.9 201 373.1C201.2 374.2 201.7 375.7 202.5 375.7C203.2 375.8 204.4 374.3 205.3 373.2C206.1 372.2 207 369.9 207.4 369.2C207.8 368.6 207.7 368.6 207.7 369.2C207.8 369.9 207.3 372.2 207.5 373.2C207.7 374.3 208.1 375.7 208.8 375.7C209.6 375.8 211.1 374.6 211.9 373.7C212.8 372.8 213.5 370.9 213.7 370.3C214 369.8 213.6 369.8 213.5 370.3C213.4 370.9 213 372.8 213.3 373.7C213.6 374.6 214.5 374.9 215.2 375.7C215.9 376.5 217.2 377.4 217.4 378.6C217.6 379.9 216.9 382.6 216.6 383.3C216.3 384.1 215.4 384.1 215.6 383.3C215.8 382.6 216.6 379.9 217.6 378.6C218.6 377.4 220.9 376.2 221.6 375.7" stroke="#242424" stroke-width="1.2000000000000002" fill="none" stroke-linecap="round" stroke-linejoin="round"/>
<g transform="translate(248 406) rotate(-90)"><path d="M0 3C0.4 2.6 1.5 1.7 2.1 0.6C2.7 -0.5 3.4 -2.7 3.6 -3.4C3.8 -4 3.4 -4 3.1 -3.4C2.9 -2.7 2.3 -0.5 2.2 0.6C2.2 1.7 2.5 2.9 2.9 3C3.2 3.2 3.8 2.3 4.2 1.7C4.6 1.1 5.1 -0.1 5.3 -0.4C5.5 -0.8 5.4 -0.8 5.4 -0.4C5.4 -0.1 5.2 1.1 5.2 1.7C5.3 2.3 5.5 2.6 5.8 3C6 3.5 6.7 3.8 6.8 4.4C6.9 4.9 6.5 6.1 6.4 6.5C6.2 6.8 5.9 6.8 5.9 6.5C6 6.1 6.4 4.9 6.8 4.4C7.3 3.8 8 3.7 8.6 3C9.3 2.3 10.2 1.4 10.9 0.2C11.5 -1.1 12.3 -3.7 12.5 -4.5C12.8 -5.3 12.4 -5.3 12.1 -4.5C11.8 -3.7 11.1 -1.1 11 0.2C10.9 1.4 11.1 3 11.5 3C12 3.1 13.1 1.6 13.7 0.5C14.3 -0.6 15 -3 15.2 -3.7C15.4 -4.3 15 -4.3 14.7 -3.7C14.5 -3 13.8 -0.6 13.8 0.5C13.7 1.6 13.9 3 14.4 3C14.9 3 15.9 1.6 16.5 0.5C17.1 -0.6 17.8 -2.8 18 -3.5C18.2 -4.2 17.8 -4.2 17.6 -3.5C17.3 -2.8 16.7 -0.6 16.6 0.5C16.6 1.6 16.9 2.8 17.3 3C17.6 3.3 18.3 2.5 18.6 2.1C19 1.7 19.3 0.8 19.5 0.6C19.6 0.3 19.4 0.3 19.4 0.6C19.4 0.8 19.2 1.7 19.3 2.1C19.5 2.5 19.8 3.1 20.1 3C20.5 3 21.2 2.3 21.6 1.7C22 1.2 22.4 0 22.6 -0.3C22.8 -0.7 22.6 -0.7 22.6 -0.3C22.6 0 22.3 1.2 22.4 1.7C22.4 2.3 22.5 3.3 23 3C23.5 2.8 24.6 1.4 25.3 0.2C25.9 -1 26.7 -3.6 26.9 -4.4C27.1 -5.1 26.7 -5.1 26.5 -4.4C26.2 -3.6 25.4 -1 25.4 0.2C25.3 1.4 25.8 2.6 25.9 3" stroke="#242424" stroke-width="0.85" fill="none" stroke-linecap="round" stroke-linejoin="round"/></g>
<path d="M259 402.8C259.9 402 262.8 399.9 264.2 397.5C265.6 395.2 267.1 390.4 267.4 389C267.8 387.6 266.8 387.6 266.3 389C265.8 390.4 264.4 395.2 264.4 397.5C264.4 399.9 265.6 402.4 266.4 402.8C267.3 403.3 268.5 401.3 269.5 400C270.4 398.8 271.5 396.2 272 395.5C272.6 394.7 272.6 394.7 272.6 395.5C272.7 396.2 272.3 398.8 272.5 400C272.7 401.3 272.7 403.4 273.9 402.8C275 402.3 277.8 399.4 279.3 396.8C280.8 394.1 282.5 388.6 282.9 387C283.3 385.3 282.3 385.3 281.8 387C281.2 388.6 279.6 394.1 279.5 396.8C279.4 399.4 280.5 402.4 281.3 402.8C282 403.3 283.1 401 284.1 399.6C285.1 398.1 286.4 395.1 287 394.3C287.7 393.4 288 393.4 288.1 394.3C288.2 395.1 287.7 398.1 287.8 399.6C287.9 401 288.6 402.3 288.7 402.8" stroke="#242424" stroke-width="1.1199999999999999" fill="none" stroke-linecap="round" stroke-linejoin="round"/>
<path d="M312 296.3C312.7 295.6 315 294 316 292.3C317 290.5 318 286.9 318.1 285.8C318.2 284.8 317.2 284.8 316.6 285.8C316.1 286.9 314.9 290.5 314.9 292.3C314.8 294 315.8 295.9 316.5 296.3C317.2 296.6 318.2 295.2 318.9 294.4C319.5 293.5 320.1 291.8 320.3 291.3C320.6 290.8 320.3 290.8 320.2 291.3C320.1 291.8 319.7 293.5 319.8 294.4C320 295.2 320.3 296.6 321 296.3C321.8 296 323.4 294.2 324.3 292.5C325.2 290.9 326.3 287.5 326.5 286.5C326.8 285.5 326.2 285.5 325.8 286.5C325.5 287.5 324.5 290.9 324.5 292.5C324.4 294.2 324.8 296.4 325.5 296.3C326.3 296.1 328.1 293.7 329.1 291.7C330.1 289.7 331.4 285.5 331.7 284.3C332 283 331.4 283 331 284.3C330.6 285.5 329.4 289.7 329.2 291.7C329.1 293.7 329.3 296.1 330 296.3C330.7 296.4 332.4 294.2 333.3 292.6C334.3 290.9 335.3 287.6 335.5 286.6C335.8 285.6 335.2 285.6 334.9 286.6C334.5 287.6 333.5 290.9 333.5 292.6C333.4 294.2 334.4 295.6 334.5 296.3" stroke="#242424" stroke-width="1.4400000000000002" fill="none" stroke-linecap="round" stroke-linejoin="round"/>
<path d="M304 313.2C304.9 312.3 307.9 310.3 309.2 308C310.5 305.8 311.8 301.1 311.9 299.7C312 298.3 310.7 298.3 310 299.7C309.3 301.1 307.7 305.8 307.7 308C307.7 310.3 309 312.6 309.8 313.2C310.7 313.7 312 312 312.8 311.1C313.6 310.2 314.3 308.3 314.5 307.8C314.7 307.2 314.3 307.2 314.2 307.8C314.1 308.3 313.7 310.2 314 311.1C314.2 312 315 312.4 315.7 313.2C316.3 313.9 317.5 314.7 317.7 315.8C317.9 317 317.2 319.4 316.9 320.1C316.7 320.9 315.9 320.9 316 320.1C316.2 319.4 317 317 317.9 315.8C318.8 314.7 320.6 313.2 321.5 313.2C322.4 313.2 323.3 314.7 323.5 315.8C323.7 317 323 319.4 322.8 320.1C322.5 320.9 321.7 320.9 321.9 320.1C322 319.4 322.8 317 323.7 315.8C324.6 314.7 326.3 313.9 327.3 313.2C328.3 312.4 329 312.1 329.7 311.2C330.4 310.3 331.2 308.6 331.6 308C332 307.5 331.9 307.5 332 308C332 308.6 331.8 310.3 332 311.2C332.2 312.1 332.5 313.3 333.2 313.2C333.9 313.1 335.3 311.7 336.2 310.5C337 309.4 337.9 307 338.2 306.3C338.5 305.6 338.2 305.6 338.1 306.3C338 307 337.4 309.4 337.6 310.5C337.7 311.7 338.8 312.7 339 313.2M349.7 313.2C350.6 312.2 353.6 310 355 307.6C356.4 305.2 357.7 300.2 357.9 298.7C358.1 297.2 356.7 297.2 356 298.7C355.3 300.2 353.6 305.2 353.5 307.6C353.4 310 354.7 312.5 355.5 313.2C356.3 313.8 357.5 312.1 358.2 311.3C358.9 310.5 359.6 308.9 359.9 308.4C360.2 307.9 359.9 307.9 359.9 308.4C359.8 308.9 359.5 310.5 359.8 311.3C360 312.1 361.1 312.9 361.4 313.2" stroke="#242424" stroke-width="1.2800000000000002" fill="none" stroke-linecap="round" stroke-linejoin="round"/>
<path d="M312 328C312.2 327.9 312.7 327.5 313 327C313.3 326.6 313.7 325.7 313.9 325.5C314 325.2 314 325.2 314.1 325.5C314.1 325.7 313.9 326.6 314 327C314 327.5 314 328.3 314.4 328C314.8 327.8 315.7 326.7 316.3 325.6C316.8 324.6 317.5 322.4 317.6 321.8C317.8 321.2 317.5 321.2 317.3 321.8C317 322.4 316.4 324.6 316.3 325.6C316.2 326.7 316.4 328 316.8 328C317.1 328.1 318 326.9 318.5 326C319 325.1 319.6 323.2 319.8 322.7C319.9 322.1 319.6 322.1 319.4 322.7C319.2 323.2 318.7 325.1 318.6 326C318.6 326.9 318.9 327.8 319.2 328C319.4 328.2 320 327.5 320.3 327.2C320.6 326.8 320.9 326 321 325.8C321.1 325.6 321 325.6 321 325.8C321 326 320.8 326.8 320.9 327.2C321 327.5 321.3 328 321.5 328C321.8 328 322.3 327.6 322.6 327.2C322.9 326.8 323.3 326.1 323.4 325.9C323.5 325.6 323.4 325.6 323.4 325.9C323.4 326.1 323.3 326.8 323.3 327.2C323.4 327.6 323.7 328 323.9 328C324.2 328 324.7 327.5 325 327.1C325.3 326.7 325.6 325.8 325.8 325.5C326 325.3 325.9 325.3 325.9 325.5C326 325.8 325.8 326.7 325.9 327.1C325.9 327.5 326.1 327.7 326.3 328C326.5 328.4 327.1 328.6 327.2 329.1C327.2 329.6 327 330.6 326.8 330.9C326.7 331.2 326.4 331.2 326.5 330.9C326.5 330.6 326.8 329.6 327.2 329.1C327.6 328.6 328.3 328 328.7 328C329.1 328 329.5 328.6 329.5 329.1C329.6 329.6 329.3 330.6 329.2 330.9C329.1 331.2 328.8 331.2 328.9 330.9C328.9 330.6 329.2 329.6 329.6 329.1C330 328.6 330.7 328 331.1 328C331.5 328 331.8 328.6 331.9 329.1C332 329.6 331.7 330.6 331.6 330.9C331.5 331.2 331.2 331.2 331.2 330.9C331.3 330.6 331.6 329.6 332 329.1C332.4 328.6 333.1 328.4 333.5 328C333.9 327.7 334.1 327.5 334.4 327.1C334.7 326.7 335.1 325.9 335.3 325.6C335.5 325.4 335.5 325.4 335.5 325.6C335.5 325.9 335.4 326.7 335.5 327.1C335.5 327.5 335.6 328.1 335.9 328C336.1 328 336.6 327.4 337 326.9C337.3 326.4 337.7 325.4 337.9 325.1C338 324.8 338 324.8 338 325.1C338 325.4 337.8 326.4 337.8 326.9C337.9 327.4 337.9 328.1 338.3 328C338.6 327.9 339.5 327 340 326.2C340.4 325.4 340.9 323.7 341.1 323.2C341.2 322.7 340.9 322.7 340.7 323.2C340.5 323.7 340 325.4 340 326.2C340 327 340.3 328 340.6 328C341 328 341.9 326.9 342.4 326.1C342.9 325.2 343.4 323.4 343.5 322.9C343.7 322.4 343.4 322.4 343.2 322.9C343 323.4 342.5 325.2 342.5 326.1C342.4 326.9 342.6 328 343 328C343.4 328 344.3 327 344.7 326.1C345.2 325.3 345.7 323.6 345.9 323.1C346 322.6 345.7 322.6 345.5 323.1C345.3 323.6 344.8 325.3 344.8 326.1C344.8 327 345.2 327.5 345.4 328C345.7 328.5 346.2 328.6 346.2 329.1C346.3 329.6 346 330.6 345.9 330.9C345.8 331.2 345.5 331.2 345.6 330.9C345.6 330.6 345.9 329.6 346.3 329.1C346.7 328.6 347.4 328.4 347.8 328C348.2 327.7 348.7 327.4 349 326.9C349.3 326.5 349.7 325.5 349.8 325.2C350 324.9 349.9 324.9 349.8 325.2C349.8 325.5 349.6 326.5 349.6 326.9C349.7 327.4 349.9 328 350.2 328C350.5 328.1 350.9 327.5 351.2 327.1C351.6 326.7 351.9 325.9 352 325.7C352.2 325.5 352.1 325.5 352.1 325.7C352.1 325.9 352 326.7 352 327.1C352.1 327.5 352.3 328 352.6 328C352.8 328 353.2 327.5 353.4 327.2C353.7 326.8 354.1 326 354.3 325.8C354.5 325.5 354.5 325.5 354.6 325.8C354.6 326 354.5 326.8 354.6 327.2C354.7 327.5 354.8 327.7 355 328C355.2 328.3 355.7 328.6 355.8 329.1C355.9 329.6 355.6 330.6 355.5 330.9C355.4 331.2 355.1 331.2 355.1 330.9C355.2 330.6 355.5 329.6 355.9 329.1C356.2 328.6 356.9 328.3 357.3 328C357.8 327.7 358.1 327.6 358.4 327.2C358.7 326.9 359 326.2 359.1 326C359.2 325.8 359.2 325.8 359.2 326C359.2 326.2 359.1 326.9 359.2 327.2C359.3 327.6 359.5 328.1 359.7 328C360 328 360.4 327.4 360.7 327C361 326.5 361.5 325.5 361.6 325.2C361.8 325 361.9 325 361.9 325.2C361.9 325.5 361.7 326.5 361.8 327C361.8 327.4 362.1 327.8 362.1 328" stroke="#242424" stroke-width="0.7200000000000001" fill="none" stroke-linecap="round" stroke-linejoin="round"/>
<path d="M314 345.7C314.6 345.1 316.7 343.6 317.6 342C318.5 340.4 319.4 337.1 319.5 336.1C319.6 335.1 318.7 335.1 318.2 336.1C317.7 337.1 316.6 340.4 316.6 342C316.5 343.6 317.4 345.4 318 345.7C318.6 346 319.5 344.7 320.1 343.9C320.6 343.1 321.2 341.4 321.5 340.9C321.7 340.4 321.4 340.4 321.3 340.9C321.3 341.4 320.9 343.1 321 343.9C321.1 344.7 321.6 345.6 322 345.7C322.3 345.8 322.9 345 323.3 344.5C323.8 343.9 324.3 342.8 324.6 342.5C324.9 342.2 325.1 342.2 325.2 342.5C325.3 342.8 325.2 343.9 325.3 344.5C325.4 345 325.5 345.8 325.9 345.7C326.3 345.6 327.2 344.7 327.8 343.9C328.3 343.1 329 341.5 329.2 341C329.5 340.5 329.4 340.5 329.4 341C329.4 341.5 329.1 343.1 329.2 343.9C329.2 344.7 329.5 345.6 329.9 345.7C330.3 345.8 331 345 331.5 344.5C332 344 332.5 342.9 332.7 342.5C333 342.2 332.9 342.2 333 342.5C333 342.9 332.9 344 333 344.5C333.2 345 333.4 345.8 333.9 345.7C334.4 345.6 335.4 344.7 335.9 344C336.5 343.2 337.1 341.6 337.3 341.1C337.5 340.7 337.3 340.7 337.2 341.1C337.1 341.6 336.7 343.2 336.9 344C337 344.7 337.5 345.6 337.9 345.7C338.3 345.8 338.9 344.9 339.3 344.3C339.8 343.7 340.4 342.5 340.7 342.1C341 341.7 341.1 341.7 341.2 342.1C341.3 342.5 341.1 343.7 341.2 344.3C341.3 344.9 341.2 346 341.8 345.7C342.4 345.4 344 343.7 344.8 342.2C345.7 340.7 346.6 337.6 346.9 336.6C347.1 335.7 346.6 335.7 346.3 336.6C345.9 337.6 345 340.7 344.9 342.2C344.9 343.7 345.3 345.4 345.8 345.7C346.3 346 347.2 344.7 347.8 343.9C348.4 343.1 349 341.4 349.2 340.9C349.5 340.4 349.3 340.4 349.2 340.9C349.2 341.4 348.8 343.1 348.9 343.9C349 344.7 349.4 345.7 349.8 345.7C350.3 345.7 351.1 344.7 351.6 344C352.1 343.2 352.8 341.7 353 341.2C353.3 340.8 353.2 340.8 353.2 341.2C353.2 341.7 352.9 343.2 353 344C353.1 344.7 353.3 345.6 353.8 345.7C354.2 345.8 355.1 345 355.6 344.5C356.1 343.9 356.6 342.8 356.8 342.5C357 342.1 356.7 342.1 356.7 342.5C356.7 342.8 356.5 343.9 356.6 344.5C356.8 345 357.6 345.5 357.8 345.7" stroke="#242424" stroke-width="0.8800000000000001" fill="none" stroke-linecap="round" stroke-linejoin="round"/>
<path d="M315 377.8C316.1 376.6 320 373.8 321.8 370.7C323.6 367.6 325.3 361.1 325.5 359.1C325.8 357.2 324 357.2 323.1 359.1C322.2 361.1 320 367.6 319.9 370.7C319.8 373.8 321.5 377.1 322.4 377.8C323.3 378.6 324.4 376.5 325.3 375.4C326.2 374.4 327.2 372.2 327.7 371.5C328.2 370.9 328.3 370.9 328.4 371.5C328.5 372.2 328.2 374.4 328.4 375.4C328.7 376.5 329.1 378 329.9 377.8C330.6 377.7 331.8 376.1 332.8 374.7C333.7 373.4 334.9 370.5 335.6 369.7C336.2 368.9 336.3 368.9 336.4 369.7C336.6 370.5 336.1 373.4 336.2 374.7C336.4 376.1 336.2 378.4 337.3 377.8C338.4 377.3 341.3 374.2 342.8 371.4C344.4 368.5 346.2 362.6 346.6 360.9C347.1 359.2 346.1 359.2 345.5 360.9C344.9 362.6 343.2 368.5 343 371.4C342.9 374.2 343.9 377.2 344.7 377.8C345.5 378.5 346.7 376.3 347.6 375.1C348.5 373.9 349.7 371.4 350.2 370.7C350.8 370 350.8 370 350.9 370.7C351 371.4 350.6 373.9 350.8 375.1C351 376.3 351.9 377.4 352.1 377.8" stroke="#242424" stroke-width="1.2800000000000002" fill="none" stroke-linecap="round" stroke-linejoin="round"/>
<text transform="rotate(-90 40 533) translate(0 5)" font-style="italic" stroke="#242424" stroke-width="0.7" x="40" y="533" font-family="Liberation Serif" font-size="16"  text-anchor="middle" fill="#242424" letter-spacing="0">59</text>
<g transform="translate(55 588) rotate(-90)"><path d="M0 3.5C0.5 2.9 2.3 1.6 3.1 0.2C3.9 -1.3 4.7 -4.3 4.8 -5.2C4.9 -6.1 4.1 -6.1 3.7 -5.2C3.3 -4.3 2.3 -1.3 2.2 0.2C2.1 1.6 2.9 3.2 3.3 3.5C3.7 3.8 4.3 2.6 4.8 2C5.3 1.4 5.8 0 6 -0.4C6.2 -0.8 6.2 -0.8 6.2 -0.4C6.2 0 5.9 1.4 6 2C6 2.6 6.1 3.7 6.6 3.5C7.1 3.3 8.3 2 8.9 0.9C9.6 -0.2 10.3 -2.6 10.5 -3.3C10.7 -4 10.2 -4 10 -3.3C9.8 -2.6 9.1 -0.2 9 0.9C9 2 9.5 3.3 9.9 3.5C10.2 3.7 10.8 2.7 11.3 2.1C11.7 1.5 12.2 0.2 12.5 -0.1C12.7 -0.5 12.7 -0.5 12.7 -0.1C12.7 0.2 12.5 1.5 12.6 2.1C12.7 2.7 12.7 3.7 13.2 3.5C13.7 3.2 14.9 1.9 15.6 0.6C16.3 -0.6 17.1 -3.2 17.3 -4C17.5 -4.7 17 -4.7 16.8 -4C16.5 -3.2 15.8 -0.6 15.7 0.6C15.6 1.9 16.1 3.2 16.4 3.5C16.8 3.7 17.4 2.8 17.8 2.2C18.2 1.7 18.7 0.6 18.9 0.3C19.1 -0.1 19.2 -0.1 19.2 0.3C19.2 0.6 19.1 1.7 19.1 2.2C19.2 2.8 19.4 3.5 19.7 3.5C20.1 3.4 20.7 2.6 21.1 2C21.6 1.3 22.1 -0 22.4 -0.4C22.7 -0.9 22.7 -0.9 22.7 -0.4C22.7 -0 22.5 1.3 22.5 2C22.6 2.6 22.9 3.2 23 3.5M27.1 3.5C27.6 2.9 29.3 1.7 30.1 0.3C30.9 -1.1 31.7 -4 31.8 -4.9C31.9 -5.7 31.1 -5.7 30.7 -4.9C30.3 -4 29.3 -1.1 29.3 0.3C29.2 1.7 29.8 3.5 30.4 3.5C31 3.5 32.2 1.7 32.9 0.3C33.6 -1 34.5 -3.9 34.7 -4.7C34.9 -5.6 34.5 -5.6 34.2 -4.7C33.9 -3.9 33.1 -1 33 0.3C32.9 1.7 33.3 3.2 33.7 3.5C34 3.8 34.5 2.8 35 2.2C35.4 1.6 35.9 0.5 36.1 0.1C36.4 -0.2 36.4 -0.2 36.5 0.1C36.5 0.5 36.3 1.6 36.4 2.2C36.5 2.8 36.6 3.5 36.9 3.5C37.3 3.5 38.1 2.8 38.5 2.3C39 1.8 39.4 0.7 39.5 0.4C39.7 0.1 39.5 0.1 39.5 0.4C39.4 0.7 39.2 1.8 39.3 2.3C39.5 2.8 39.7 3.7 40.2 3.5C40.8 3.2 41.9 2 42.6 0.9C43.2 -0.2 44 -2.5 44.1 -3.2C44.3 -3.9 43.9 -3.9 43.6 -3.2C43.4 -2.5 42.7 -0.2 42.7 0.9C42.7 2 43.1 3.2 43.5 3.5C43.9 3.7 44.7 2.8 45.2 2.3C45.6 1.8 46 0.7 46.2 0.4C46.3 0.1 46 0.1 46 0.4C45.9 0.7 45.7 1.8 45.8 2.3C46 2.8 46.4 3.5 46.8 3.5C47.2 3.5 47.7 2.9 48.1 2.4C48.5 1.9 48.9 0.9 49.2 0.6C49.4 0.3 49.4 0.3 49.5 0.6C49.5 0.9 49.4 1.9 49.5 2.4C49.6 2.9 50 3.3 50.1 3.5M55.4 3.5C55.9 3 57.6 1.8 58.4 0.6C59.1 -0.7 59.8 -3.4 59.9 -4.2C60 -4.9 59.2 -4.9 58.8 -4.2C58.4 -3.4 57.5 -0.7 57.5 0.6C57.5 1.8 58.2 3.2 58.7 3.5C59.2 3.8 59.9 2.8 60.4 2.4C60.8 1.9 61.2 0.9 61.3 0.5C61.4 0.2 61.2 0.2 61.1 0.5C61.1 0.9 60.9 1.9 61 2.4C61.1 2.8 61.4 3.7 62 3.5C62.5 3.3 63.7 2.1 64.3 1.1C64.9 0 65.6 -2.1 65.8 -2.8C65.9 -3.4 65.5 -3.4 65.3 -2.8C65 -2.1 64.4 0 64.4 1.1C64.4 2.1 64.7 3.5 65.3 3.5C65.8 3.4 67 1.9 67.7 0.7C68.4 -0.5 69.1 -2.9 69.3 -3.7C69.5 -4.4 69.1 -4.4 68.8 -3.7C68.6 -2.9 67.8 -0.5 67.8 0.7C67.8 1.9 68.2 3.3 68.6 3.5C69 3.7 69.7 2.6 70.2 2C70.7 1.4 71.2 0 71.4 -0.4C71.6 -0.8 71.4 -0.8 71.4 -0.4C71.3 0 71 1.4 71.1 2C71.2 2.6 71.5 3.5 71.9 3.5C72.2 3.5 72.8 2.6 73.3 2C73.7 1.3 74.3 -0.1 74.6 -0.5C74.8 -0.9 74.8 -0.9 74.8 -0.5C74.8 -0.1 74.5 1.3 74.6 2C74.7 2.6 74.6 3.8 75.1 3.5C75.7 3.2 77 1.6 77.7 0.2C78.5 -1.2 79.4 -4.2 79.6 -5.1C79.8 -6 79.4 -6 79.1 -5.1C78.8 -4.2 77.9 -1.2 77.8 0.2C77.7 1.6 78.1 3.1 78.4 3.5C78.8 3.8 79.5 2.9 79.9 2.5C80.3 2 80.7 1.1 80.9 0.8C81 0.5 80.9 0.5 80.9 0.8C80.9 1.1 80.7 2 80.9 2.5C81 2.9 81.4 3.5 81.7 3.5C82.1 3.4 82.7 2.8 83.1 2.3C83.5 1.7 84 0.6 84.2 0.3C84.4 -0 84.4 -0 84.4 0.3C84.5 0.6 84.3 1.7 84.4 2.3C84.5 2.8 84.9 3.3 85 3.5M89.5 3.5C90 3 91.7 1.8 92.5 0.5C93.2 -0.9 94 -3.6 94.1 -4.4C94.2 -5.2 93.4 -5.2 93 -4.4C92.6 -3.6 91.7 -0.9 91.6 0.5C91.6 1.8 92.3 3.1 92.8 3.5C93.3 3.8 94 2.9 94.4 2.4C94.9 1.9 95.2 1 95.4 0.7C95.5 0.4 95.2 0.4 95.2 0.7C95.2 1 94.9 1.9 95.1 2.4C95.2 2.9 95.9 3.3 96.1 3.5" stroke="#242424" stroke-width="0.935" fill="none" stroke-linecap="round" stroke-linejoin="round" opacity="0.64"/></g>
<g transform="translate(68 526) rotate(-90)"><path d="M0 3C0.4 2.6 2 1.4 2.7 0.2C3.4 -1 4.1 -3.6 4.1 -4.4C4.2 -5.2 3.6 -5.2 3.2 -4.4C2.8 -3.6 2 -1 1.9 0.2C1.9 1.4 2.5 2.7 2.9 3C3.2 3.4 3.7 2.5 4.1 2.1C4.4 1.7 4.8 0.9 5 0.7C5.1 0.4 5.1 0.4 5.1 0.7C5.1 0.9 5 1.7 5.1 2.1C5.2 2.5 5.4 3.1 5.8 3C6.1 3 6.6 2.3 6.9 1.7C7.3 1.2 7.8 -0 8.1 -0.4C8.3 -0.7 8.3 -0.7 8.4 -0.4C8.4 -0 8.2 1.2 8.2 1.7C8.3 2.3 8.4 2.6 8.6 3C8.9 3.5 9.5 3.8 9.6 4.4C9.7 4.9 9.4 6.1 9.3 6.5C9.1 6.8 8.7 6.8 8.8 6.5C8.9 6.1 9.3 4.9 9.7 4.4C10.2 3.8 11 3.4 11.5 3C12 2.7 12.3 2.5 12.7 2.1C13 1.8 13.4 0.9 13.6 0.7C13.7 0.5 13.7 0.5 13.7 0.7C13.8 0.9 13.6 1.8 13.8 2.1C13.9 2.5 14.1 3.1 14.4 3C14.7 3 15.1 2.3 15.5 1.8C15.9 1.3 16.4 0.1 16.6 -0.2C16.9 -0.5 16.9 -0.5 17 -0.2C17 0.1 16.9 1.3 16.9 1.8C17 2.3 16.9 3.2 17.3 3C17.7 2.9 18.7 1.9 19.3 0.9C19.8 0 20.4 -1.9 20.6 -2.5C20.7 -3 20.3 -3 20.1 -2.5C19.9 -1.9 19.4 0 19.4 0.9C19.4 1.9 19.8 2.9 20.1 3C20.5 3.2 21.1 2.5 21.5 2C21.9 1.6 22.2 0.7 22.4 0.4C22.5 0.2 22.4 0.2 22.4 0.4C22.3 0.7 22.1 1.6 22.3 2C22.4 2.5 22.9 2.9 23 3" stroke="#242424" stroke-width="1.02" fill="none" stroke-linecap="round" stroke-linejoin="round" opacity="0.75"/></g>
<g transform="translate(80 620) rotate(-90)"><path d="M0 3.9C0.6 3.3 2.5 1.9 3.4 0.4C4.3 -1.2 5.1 -4.4 5.2 -5.4C5.3 -6.3 4.5 -6.3 4 -5.4C3.6 -4.4 2.5 -1.2 2.4 0.4C2.4 1.9 3.3 3 3.7 3.9C4.1 4.8 4.9 4.9 5 5.6C5.1 6.3 4.7 7.9 4.5 8.3C4.3 8.8 3.8 8.8 3.9 8.3C4 7.9 4.5 6.3 5.1 5.6C5.7 4.9 6.8 4.4 7.4 3.9C8 3.4 8.4 3.2 8.9 2.6C9.3 2 9.9 0.8 10.1 0.5C10.4 0.1 10.4 0.1 10.4 0.5C10.5 0.8 10.3 2 10.4 2.6C10.5 3.2 10.5 4.3 11.1 3.9C11.7 3.5 13.1 1.9 13.9 0.4C14.8 -1.1 15.7 -4.3 16 -5.2C16.2 -6.2 15.7 -6.2 15.4 -5.2C15.1 -4.3 14.1 -1.1 14 0.4C13.9 1.9 14.4 3.6 14.8 3.9C15.2 4.2 16.2 3.1 16.7 2.4C17.3 1.7 17.8 0.4 17.9 -0C18.1 -0.5 17.8 -0.5 17.7 -0C17.7 0.4 17.3 1.7 17.5 2.4C17.6 3.1 17.9 4.1 18.5 3.9C19.1 3.7 20.4 2.3 21.2 1C21.9 -0.3 22.7 -2.9 22.9 -3.7C23.1 -4.5 22.6 -4.5 22.3 -3.7C22.1 -2.9 21.3 -0.3 21.3 1C21.2 2.3 22 3.4 22.2 3.9M28.4 3.9C29 3.3 30.9 2 31.7 0.5C32.6 -1 33.4 -4.1 33.5 -5C33.6 -6 32.8 -6 32.3 -5C31.9 -4.1 30.8 -1 30.8 0.5C30.8 2 31.7 3.1 32.1 3.9C32.5 4.8 33.2 4.9 33.4 5.6C33.5 6.3 33.1 7.9 32.9 8.3C32.7 8.8 32.2 8.8 32.3 8.3C32.4 7.9 32.9 6.3 33.5 5.6C34.1 4.9 35.1 4.4 35.8 3.9C36.5 3.4 37.2 3.1 37.7 2.5C38.2 1.9 38.7 0.6 38.8 0.2C39 -0.2 38.7 -0.2 38.7 0.2C38.6 0.6 38.3 1.9 38.4 2.5C38.6 3.1 38.8 4.3 39.5 3.9C40.1 3.6 41.5 1.9 42.3 0.4C43.2 -1.2 44.2 -4.4 44.4 -5.4C44.7 -6.3 44.2 -6.3 43.8 -5.4C43.5 -4.4 42.6 -1.2 42.5 0.4C42.4 1.9 42.8 3.6 43.2 3.9C43.6 4.2 44.5 3 45.1 2.3C45.6 1.6 46.1 0.1 46.3 -0.3C46.5 -0.8 46.3 -0.8 46.3 -0.3C46.2 0.1 45.9 1.6 46 2.3C46.1 3 46.5 3.9 46.9 3.9C47.3 4 47.9 3.2 48.4 2.6C48.9 2 49.4 0.8 49.6 0.4C49.9 0.1 49.9 0.1 49.9 0.4C50 0.8 49.8 2 49.9 2.6C50 3.2 50.3 3.4 50.6 3.9C50.9 4.4 51.7 4.9 51.9 5.6C52 6.3 51.6 7.9 51.4 8.3C51.2 8.8 50.7 8.8 50.8 8.3C50.9 7.9 51.4 6.3 52 5.6C52.6 4.9 53.7 4.4 54.3 3.9C54.9 3.4 55.2 3.2 55.7 2.7C56.1 2.2 56.6 1.1 56.9 0.8C57.1 0.5 57.2 0.5 57.3 0.8C57.3 1.1 57.2 2.2 57.3 2.7C57.4 3.2 57.7 3.9 58 3.9C58.3 3.9 58.9 3.2 59.3 2.6C59.8 2.1 60.3 0.9 60.6 0.6C60.9 0.2 61 0.2 61.1 0.6C61.2 0.9 61 2.1 61.1 2.6C61.2 3.2 61.1 4.2 61.7 3.9C62.2 3.6 63.7 2.1 64.5 0.7C65.2 -0.8 66.2 -3.7 66.4 -4.6C66.6 -5.5 66.1 -5.5 65.8 -4.6C65.5 -3.7 64.6 -0.8 64.6 0.7C64.5 2.1 65 3.1 65.4 3.9C65.7 4.7 66.5 4.9 66.7 5.6C66.8 6.3 66.4 7.9 66.2 8.3C66 8.8 65.5 8.8 65.6 8.3C65.7 7.9 66.2 6.3 66.8 5.6C67.4 4.9 68.7 4.2 69.1 3.9M77.2 3.9C77.7 3.3 79.6 2 80.5 0.6C81.3 -0.9 82.2 -3.9 82.2 -4.9C82.3 -5.8 81.5 -5.8 81 -4.9C80.6 -3.9 79.6 -0.9 79.5 0.6C79.5 2 80.2 3.8 80.9 3.9C81.5 4 82.8 2.4 83.5 1.2C84.2 -0 85 -2.5 85.1 -3.3C85.3 -4 84.8 -4 84.6 -3.3C84.3 -2.5 83.6 -0 83.6 1.2C83.6 2.4 84.1 3.7 84.6 3.9C85 4.1 85.7 3 86.2 2.4C86.7 1.7 87.3 0.3 87.5 -0.2C87.8 -0.6 87.7 -0.6 87.7 -0.2C87.7 0.3 87.4 1.7 87.5 2.4C87.6 3 87.7 4.2 88.3 3.9C88.8 3.6 90.2 2.2 91 0.8C91.7 -0.5 92.6 -3.4 92.8 -4.2C93 -5.1 92.5 -5.1 92.3 -4.2C92 -3.4 91.1 -0.5 91.1 0.8C91 2.2 91.5 3.6 92 3.9C92.4 4.2 93.3 3 93.8 2.4C94.3 1.7 94.8 0.3 95 -0.1C95.2 -0.5 95 -0.5 95 -0.1C94.9 0.3 94.6 1.7 94.8 2.4C94.9 3 95.3 3.9 95.7 3.9C96 3.9 96.6 3 97.1 2.4C97.6 1.7 98.2 0.3 98.5 -0.1C98.8 -0.5 98.9 -0.5 98.9 -0.1C99 0.3 98.8 1.7 98.8 2.4C98.9 3 99 3.9 99.4 3.9C99.7 3.9 100.5 3.2 101 2.6C101.5 2 102 0.8 102.2 0.5C102.4 0.1 102.3 0.1 102.3 0.5C102.3 0.8 102.1 2 102.2 2.6C102.3 3.2 102.7 4 103.1 3.9C103.4 3.9 104.1 3 104.6 2.3C105 1.6 105.7 0.2 105.9 -0.2C106.2 -0.6 106.3 -0.6 106.3 -0.2C106.4 0.2 106.1 1.6 106.2 2.3C106.3 3 106.2 4.1 106.8 3.9C107.3 3.7 108.7 2.3 109.4 1C110.2 -0.3 111 -2.9 111.2 -3.7C111.4 -4.5 110.9 -4.5 110.6 -3.7C110.3 -2.9 109.6 -0.3 109.5 1C109.5 2.3 109.8 4 110.5 3.9C111.1 3.8 112.5 1.9 113.3 0.3C114.2 -1.3 115.2 -4.6 115.4 -5.6C115.7 -6.6 115.2 -6.6 114.9 -5.6C114.5 -4.6 113.6 -1.3 113.4 0.3C113.3 1.9 113.8 3.5 114.2 3.9C114.5 4.3 115.2 3.2 115.7 2.6C116.2 2 116.7 0.8 116.9 0.4C117.2 0.1 117.1 0.1 117.2 0.4C117.2 0.8 117 2 117.1 2.6C117.2 3.2 117.7 3.7 117.9 3.9M126 3.9C126.5 3.3 128.5 1.8 129.4 0.3C130.3 -1.3 131.2 -4.7 131.3 -5.7C131.4 -6.6 130.5 -6.6 130.1 -5.7C129.6 -4.7 128.5 -1.3 128.4 0.3C128.4 1.8 129.2 3.6 129.7 3.9C130.1 4.2 130.7 2.9 131.2 2.2C131.7 1.4 132.3 -0.1 132.6 -0.6C133 -1.1 133 -1.1 133.1 -0.6C133.1 -0.1 132.9 1.4 132.9 2.2C132.9 2.9 133 3.9 133.4 3.9C133.8 3.9 134.7 3 135.3 2.3C135.8 1.6 136.3 0.1 136.5 -0.3C136.7 -0.8 136.5 -0.8 136.4 -0.3C136.4 0.1 136 1.6 136.1 2.3C136.2 3 136.7 3.8 137.1 3.9C137.5 4 138.1 3.3 138.5 2.8C138.9 2.3 139.4 1.2 139.7 0.9C139.9 0.6 139.9 0.6 140 0.9C140 1.2 139.9 2.3 140 2.8C140.1 3.3 140.6 3.7 140.8 3.9" stroke="#242424" stroke-width="1.02" fill="none" stroke-linecap="round" stroke-linejoin="round" opacity="0.75"/><path d="M-2 -15 Q4 -6 10 4" stroke="#242424" stroke-width="0.918" fill="none" stroke-linecap="round" opacity="0.7"/></g>
<g transform="translate(95 559) rotate(-90)"><path d="M0 3.5C0.5 2.9 2.3 1.6 3.1 0.2C3.9 -1.3 4.7 -4.3 4.8 -5.2C4.9 -6.1 4.1 -6.1 3.7 -5.2C3.3 -4.3 2.3 -1.3 2.2 0.2C2.1 1.6 2.9 3.2 3.3 3.5C3.7 3.8 4.3 2.6 4.8 2C5.2 1.4 5.8 0 6 -0.4C6.2 -0.8 6.2 -0.8 6.2 -0.4C6.2 0 5.9 1.4 6 2C6 2.6 6.3 3 6.6 3.5C6.9 4 7.6 4.3 7.7 5C7.8 5.6 7.4 7 7.3 7.4C7.1 7.8 6.7 7.8 6.8 7.4C6.9 7 7.3 5.6 7.8 5C8.3 4.3 9.3 4 9.9 3.5C10.4 3 10.7 2.6 11.2 2C11.6 1.3 12.2 -0.1 12.5 -0.5C12.8 -0.9 12.9 -0.9 12.9 -0.5C12.9 -0.1 12.7 1.3 12.7 2C12.8 2.6 12.9 3.4 13.2 3.5C13.4 3.5 14.1 2.7 14.5 2.1C14.9 1.6 15.4 0.3 15.7 -0C15.9 -0.4 16 -0.4 16 -0C16 0.3 15.8 1.6 15.9 2.1C16 2.7 16.2 3 16.4 3.5C16.7 3.9 17.5 4.3 17.6 5C17.7 5.6 17.3 7 17.2 7.4C17 7.8 16.6 7.8 16.7 7.4C16.7 7 17.2 5.6 17.7 5C18.2 4.3 19 4.1 19.7 3.5C20.5 2.8 21.4 2 22.1 0.9C22.7 -0.2 23.5 -2.5 23.6 -3.2C23.8 -3.9 23.4 -3.9 23.1 -3.2C22.9 -2.5 22.2 -0.2 22.2 0.9C22.2 2 22.7 2.8 23 3.5C23.3 4.1 24 4.3 24.2 5C24.3 5.6 23.9 7 23.7 7.4C23.6 7.8 23.1 7.8 23.2 7.4C23.3 7 23.7 5.6 24.3 5C24.8 4.3 25.7 3.9 26.3 3.5C26.9 3 27.2 2.7 27.6 2.1C28.1 1.5 28.6 0.3 28.8 -0.1C29.1 -0.4 29.1 -0.4 29.2 -0.1C29.2 0.3 29 1.5 29.1 2.1C29.1 2.7 29.1 3.7 29.6 3.5C30.1 3.3 31.3 2 32 0.8C32.7 -0.4 33.4 -2.8 33.6 -3.5C33.8 -4.2 33.3 -4.2 33.1 -3.5C32.8 -2.8 32.1 -0.4 32.1 0.8C32.1 2 32.5 3.2 32.9 3.5C33.2 3.7 33.8 2.9 34.2 2.4C34.6 1.9 35 0.9 35.3 0.6C35.5 0.3 35.5 0.3 35.5 0.6C35.6 0.9 35.4 1.9 35.5 2.4C35.6 2.9 36.1 3.3 36.2 3.5M40.8 3.5C41.3 3 43 1.9 43.7 0.6C44.5 -0.7 45.2 -3.3 45.2 -4C45.3 -4.8 44.5 -4.8 44.1 -4C43.8 -3.3 42.9 -0.7 42.9 0.6C42.9 1.9 43.5 3.4 44.1 3.5C44.7 3.5 45.8 1.9 46.5 0.7C47.2 -0.5 47.9 -3 48.1 -3.7C48.3 -4.4 47.9 -4.4 47.6 -3.7C47.4 -3 46.6 -0.5 46.6 0.7C46.5 1.9 47 3.2 47.4 3.5C47.7 3.7 48.2 2.7 48.6 2.1C49 1.5 49.6 0.3 49.9 -0C50.1 -0.4 50.2 -0.4 50.3 -0C50.3 0.3 50.1 1.5 50.2 2.1C50.3 2.7 50.2 3.8 50.7 3.5C51.1 3.2 52.4 1.8 53.2 0.4C53.9 -0.9 54.7 -3.7 54.9 -4.5C55.1 -5.3 54.7 -5.3 54.4 -4.5C54.2 -3.7 53.3 -0.9 53.3 0.4C53.2 1.8 53.6 3.2 53.9 3.5C54.3 3.8 54.9 2.8 55.3 2.3C55.7 1.8 56.1 0.8 56.4 0.5C56.6 0.1 56.6 0.1 56.6 0.5C56.7 0.8 56.5 1.8 56.6 2.3C56.7 2.8 57.1 3.3 57.2 3.5" stroke="#242424" stroke-width="0.85" fill="none" stroke-linecap="round" stroke-linejoin="round" opacity="0.41"/></g>
<g transform="translate(118 547) rotate(-90)"><path d="M0 3.5C0.5 3 2.2 1.8 3 0.5C3.7 -0.9 4.5 -3.6 4.6 -4.4C4.6 -5.2 3.9 -5.2 3.5 -4.4C3.1 -3.6 2.2 -0.9 2.1 0.5C2.1 1.8 2.8 3.2 3.3 3.5C3.8 3.7 4.6 2.6 5.1 2C5.6 1.4 6 0 6.2 -0.4C6.3 -0.8 6.1 -0.8 6 -0.4C5.9 0 5.6 1.4 5.7 2C5.8 2.6 6.2 3 6.6 3.5C6.9 4 7.6 4.3 7.7 5C7.8 5.6 7.4 7 7.3 7.4C7.1 7.8 6.7 7.8 6.8 7.4C6.9 7 7.3 5.6 7.8 5C8.3 4.3 9.1 4.2 9.9 3.5C10.6 2.7 11.7 1.7 12.4 0.4C13.1 -0.9 14 -3.7 14.2 -4.6C14.4 -5.4 14 -5.4 13.7 -4.6C13.4 -3.7 12.6 -0.9 12.5 0.4C12.4 1.7 12.7 3.4 13.2 3.5C13.6 3.6 14.8 2.2 15.5 1.1C16.1 0.1 16.7 -2 16.9 -2.7C17 -3.3 16.6 -3.3 16.4 -2.7C16.2 -2 15.5 0.1 15.5 1.1C15.6 2.2 16 3.3 16.4 3.5C16.9 3.7 17.6 2.8 18.1 2.2C18.5 1.7 18.9 0.6 19.1 0.3C19.2 -0.1 19.1 -0.1 19 0.3C19 0.6 18.7 1.7 18.8 2.2C19 2.8 19.3 3.5 19.7 3.5C20.1 3.4 20.8 2.6 21.2 2C21.7 1.4 22.2 0 22.5 -0.4C22.7 -0.8 22.6 -0.8 22.6 -0.4C22.6 0 22.3 1.4 22.4 2C22.5 2.6 22.5 3.6 23 3.5C23.5 3.3 24.7 2.1 25.3 1.1C25.9 0.1 26.6 -2.1 26.8 -2.7C26.9 -3.3 26.5 -3.3 26.3 -2.7C26 -2.1 25.4 0.1 25.4 1.1C25.4 2.1 25.9 3.3 26.3 3.5C26.7 3.6 27.5 2.7 28 2.1C28.5 1.5 28.9 0.3 29.1 -0C29.2 -0.4 29 -0.4 28.9 -0C28.9 0.3 28.6 1.5 28.7 2.1C28.8 2.7 29 3.7 29.6 3.5C30.2 3.2 31.4 1.8 32.1 0.5C32.8 -0.8 33.6 -3.5 33.8 -4.3C34 -5.1 33.6 -5.1 33.3 -4.3C33 -3.5 32.2 -0.8 32.2 0.5C32.1 1.8 32.6 3.2 32.9 3.5C33.2 3.8 33.7 2.8 34.2 2.2C34.6 1.6 35.1 0.5 35.3 0.1C35.6 -0.2 35.7 -0.2 35.7 0.1C35.8 0.5 35.6 1.6 35.7 2.2C35.7 2.8 35.9 3 36.2 3.5C36.4 3.9 37.2 4.3 37.3 5C37.4 5.6 37 7 36.9 7.4C36.7 7.8 36.3 7.8 36.4 7.4C36.5 7 36.9 5.6 37.4 5C37.9 4.3 38.9 4 39.5 3.5C40 3 40.3 2.6 40.8 2C41.2 1.3 41.8 -0 42.1 -0.4C42.4 -0.9 42.4 -0.9 42.5 -0.4C42.5 -0 42.3 1.3 42.3 2C42.4 2.6 42.7 3.2 42.8 3.5" stroke="#242424" stroke-width="0.935" fill="none" stroke-linecap="round" stroke-linejoin="round" opacity="0.6"/></g>
<g transform="translate(132 538) rotate(-90)"><path d="M0 3C0.2 2.9 0.7 2.5 1.1 2.1C1.4 1.6 1.8 0.8 2 0.5C2.3 0.2 2.3 0.2 2.4 0.5C2.4 0.8 2.3 1.6 2.4 2.1C2.5 2.5 2.6 3.1 2.9 3C3.2 3 3.8 2.3 4.2 1.7C4.6 1.1 5.1 -0.1 5.3 -0.5C5.5 -0.8 5.4 -0.8 5.4 -0.5C5.4 -0.1 5.2 1.1 5.2 1.7C5.3 2.3 5.3 3.3 5.8 3C6.2 2.8 7.4 1.4 8 0.2C8.7 -1.1 9.5 -3.7 9.7 -4.4C9.9 -5.2 9.5 -5.2 9.2 -4.4C9 -3.7 8.2 -1.1 8.1 0.2C8 1.4 8.3 2.8 8.6 3C9 3.3 9.6 2.3 10 1.7C10.4 1.2 10.9 -0 11.1 -0.4C11.2 -0.7 11.1 -0.7 11.1 -0.4C11.1 -0 10.8 1.2 10.9 1.7C11 2.3 11.2 3 11.5 3C11.8 3.1 12.5 2.5 12.9 2.1C13.2 1.7 13.6 0.8 13.7 0.5C13.9 0.3 13.7 0.3 13.7 0.5C13.7 0.8 13.5 1.7 13.6 2.1C13.7 2.5 13.9 3.3 14.4 3C14.9 2.8 15.9 1.7 16.5 0.6C17.1 -0.4 17.8 -2.6 17.9 -3.2C18.1 -3.9 17.7 -3.9 17.5 -3.2C17.3 -2.6 16.6 -0.4 16.6 0.6C16.6 1.7 17 2.8 17.3 3C17.6 3.2 18.1 2.3 18.4 1.8C18.8 1.2 19.3 0.1 19.5 -0.3C19.8 -0.6 19.8 -0.6 19.8 -0.3C19.9 0.1 19.7 1.2 19.7 1.8C19.8 2.3 19.7 3.2 20.1 3C20.6 2.8 21.7 1.7 22.3 0.6C22.8 -0.4 23.5 -2.6 23.7 -3.2C23.8 -3.9 23.5 -3.9 23.2 -3.2C23 -2.6 22.4 -0.4 22.3 0.6C22.3 1.7 22.9 2.6 23 3" stroke="#242424" stroke-width="1.02" fill="none" stroke-linecap="round" stroke-linejoin="round" opacity="0.75"/></g>
<g transform="translate(143 620) rotate(-90)"><path d="M0 3.9C0.6 3.3 2.5 1.9 3.4 0.3C4.3 -1.3 5.2 -4.6 5.3 -5.5C5.4 -6.5 4.5 -6.5 4.1 -5.5C3.6 -4.6 2.5 -1.3 2.5 0.3C2.4 1.9 3.2 3.5 3.7 3.9C4.2 4.3 4.8 3.3 5.3 2.8C5.7 2.3 6.2 1.2 6.4 0.9C6.6 0.6 6.5 0.6 6.5 0.9C6.5 1.2 6.3 2.3 6.5 2.8C6.6 3.3 7 3.9 7.4 3.9C7.8 3.9 8.7 3.3 9.2 2.8C9.6 2.3 10 1.2 10.2 0.9C10.4 0.6 10.1 0.6 10.1 0.9C10.1 1.2 9.9 2.3 10 2.8C10.2 3.3 10.5 4.3 11.1 3.9C11.7 3.5 13.1 2 13.9 0.6C14.7 -0.8 15.6 -3.9 15.8 -4.8C16.1 -5.6 15.6 -5.6 15.3 -4.8C15 -3.9 14.1 -0.8 14 0.6C13.9 2 14.4 3.6 14.8 3.9C15.2 4.2 15.9 3.1 16.3 2.4C16.8 1.7 17.4 0.4 17.7 -0C18 -0.4 17.9 -0.4 18 -0C18 0.4 17.8 1.7 17.9 2.4C17.9 3.1 18.4 3.7 18.5 3.9M24.5 3.9C25.1 3.3 27 1.9 27.9 0.3C28.8 -1.2 29.6 -4.5 29.8 -5.4C29.9 -6.4 29 -6.4 28.5 -5.4C28.1 -4.5 27 -1.2 26.9 0.3C26.9 1.9 27.8 3.5 28.2 3.9C28.6 4.3 29.1 3.1 29.5 2.5C30 1.9 30.6 0.6 30.9 0.3C31.2 -0.1 31.3 -0.1 31.4 0.3C31.5 0.6 31.3 1.9 31.4 2.5C31.5 3.1 31.6 3.9 31.9 3.9C32.2 3.9 32.9 3.1 33.4 2.5C33.8 1.9 34.4 0.6 34.7 0.2C35 -0.2 35 -0.2 35 0.2C35.1 0.6 34.9 1.9 35 2.5C35.1 3.1 35.2 3.9 35.6 3.9C36 3.9 36.8 3 37.3 2.3C37.8 1.6 38.3 0.2 38.6 -0.3C38.9 -0.7 38.8 -0.7 38.8 -0.3C38.8 0.2 38.5 1.6 38.6 2.3C38.7 3 38.7 4.2 39.3 3.9C39.9 3.6 41.3 2.1 42 0.7C42.8 -0.6 43.7 -3.5 43.9 -4.4C44.1 -5.2 43.6 -5.2 43.3 -4.4C43 -3.5 42.2 -0.6 42.1 0.7C42.1 2.1 42.4 3.8 43 3.9C43.6 4 44.9 2.3 45.6 1.1C46.3 -0.1 47.1 -2.6 47.3 -3.4C47.5 -4.1 47 -4.1 46.7 -3.4C46.5 -2.6 45.7 -0.1 45.7 1.1C45.7 2.3 46.3 3.6 46.7 3.9C47.1 4.2 47.8 3.2 48.2 2.7C48.7 2.2 49.1 1.1 49.4 0.8C49.6 0.5 49.5 0.5 49.6 0.8C49.6 1.1 49.4 2.2 49.6 2.7C49.7 3.2 50 3.9 50.4 3.9C50.8 3.9 51.6 3.3 52 2.8C52.5 2.3 52.9 1.2 53.1 0.9C53.3 0.6 53.2 0.6 53.2 0.9C53.2 1.2 53 2.3 53.1 2.8C53.3 3.3 53.5 4.3 54.1 3.9C54.7 3.5 56.1 2 56.9 0.4C57.7 -1.1 58.7 -4.2 58.9 -5.1C59.2 -6.1 58.7 -6.1 58.4 -5.1C58.1 -4.2 57.1 -1.1 57 0.4C56.9 2 57.7 3.3 57.8 3.9M65.1 3.9C65.7 3.3 67.6 1.9 68.5 0.4C69.3 -1.1 70.2 -4.3 70.3 -5.2C70.4 -6.1 69.5 -6.1 69.1 -5.2C68.6 -4.3 67.6 -1.1 67.5 0.4C67.5 1.9 68.3 3.6 68.8 3.9C69.3 4.2 69.8 2.9 70.3 2.2C70.8 1.5 71.5 -0.1 71.8 -0.5C72.1 -1 72.2 -1 72.2 -0.5C72.2 -0.1 72 1.5 72 2.2C72.1 2.9 72.1 3.9 72.5 3.9C72.9 3.9 73.8 2.9 74.4 2.2C74.9 1.4 75.5 -0.1 75.7 -0.6C75.9 -1.1 75.8 -1.1 75.7 -0.6C75.6 -0.1 75.3 1.4 75.4 2.2C75.5 2.9 75.8 3.8 76.2 3.9C76.7 4 77.6 3.2 78.1 2.7C78.6 2.1 79 1 79.1 0.6C79.3 0.3 79 0.3 78.9 0.6C78.9 1 78.6 2.1 78.8 2.7C78.9 3.2 79.4 4 79.9 3.9C80.4 3.8 81.3 2.9 81.9 2.2C82.4 1.5 83 -0.1 83.2 -0.6C83.4 -1 83.1 -1 83 -0.6C82.9 -0.1 82.6 1.5 82.6 2.2C82.7 2.9 83 4.2 83.6 3.9C84.2 3.6 85.6 1.9 86.5 0.4C87.3 -1.2 88.3 -4.4 88.5 -5.3C88.7 -6.3 88.3 -6.3 87.9 -5.3C87.6 -4.4 86.7 -1.2 86.6 0.4C86.5 1.9 86.9 3.5 87.3 3.9C87.7 4.3 88.3 3.2 88.8 2.7C89.2 2.2 89.7 1.2 89.9 0.9C90.2 0.5 90.2 0.5 90.2 0.9C90.2 1.2 90.1 2.2 90.2 2.7C90.4 3.2 90.6 3.9 91 3.9C91.4 3.9 92.3 3.2 92.8 2.7C93.3 2.1 93.7 1 93.9 0.7C94 0.4 93.8 0.4 93.7 0.7C93.7 1 93.5 2.1 93.6 2.7C93.8 3.2 94.5 3.7 94.7 3.9M100.2 3.9C100.7 3.3 102.7 1.9 103.5 0.4C104.4 -1.1 105.2 -4.3 105.3 -5.2C105.4 -6.1 104.6 -6.1 104.1 -5.2C103.7 -4.3 102.6 -1.1 102.6 0.4C102.5 1.9 103.4 3.5 103.9 3.9C104.3 4.3 104.9 3.2 105.3 2.7C105.8 2.1 106.3 1 106.5 0.6C106.8 0.3 106.8 0.3 106.9 0.6C106.9 1 106.7 2.1 106.9 2.7C107 3.2 107.2 3.9 107.6 3.9C107.9 3.9 108.4 3.2 108.9 2.6C109.3 2 109.9 0.8 110.2 0.5C110.5 0.1 110.6 0.1 110.7 0.5C110.8 0.8 110.6 2 110.7 2.6C110.8 3.2 110.7 4.2 111.3 3.9C111.8 3.7 113.2 2.3 113.9 1.1C114.6 -0.1 115.4 -2.7 115.6 -3.5C115.8 -4.2 115.3 -4.2 115 -3.5C114.8 -2.7 114 -0.1 114 1.1C114 2.3 114.5 3.7 115 3.9C115.4 4.1 116.3 3 116.9 2.4C117.4 1.7 117.9 0.3 118.1 -0.1C118.3 -0.5 118 -0.5 117.9 -0.1C117.9 0.3 117.5 1.7 117.7 2.4C117.8 3 118 4.2 118.7 3.9C119.3 3.6 120.7 1.9 121.5 0.4C122.3 -1.1 123.3 -4.4 123.5 -5.3C123.8 -6.2 123.3 -6.2 123 -5.3C122.7 -4.4 121.7 -1.1 121.6 0.4C121.5 1.9 121.8 3.9 122.4 3.9C122.9 4 124.3 2.1 125.1 0.7C125.9 -0.7 126.8 -3.7 127 -4.6C127.2 -5.4 126.8 -5.4 126.5 -4.6C126.2 -3.7 125.3 -0.7 125.2 0.7C125.2 2.1 125.6 3.6 126.1 3.9C126.5 4.2 127.4 3.1 127.9 2.6C128.4 2 128.9 0.7 129 0.4C129.2 0 128.9 0 128.9 0.4C128.8 0.7 128.6 2 128.7 2.6C128.9 3.1 129.3 3.9 129.8 3.9C130.2 3.9 131.1 3.1 131.6 2.4C132.2 1.8 132.7 0.4 132.8 0C133 -0.4 132.8 -0.4 132.7 0C132.6 0.4 132.3 1.8 132.5 2.4C132.6 3.1 132.8 4.3 133.5 3.9C134.1 3.5 135.5 1.8 136.4 0.2C137.2 -1.5 138.3 -4.9 138.5 -5.9C138.8 -6.9 138.3 -6.9 138 -5.9C137.6 -4.9 136.6 -1.5 136.5 0.2C136.3 1.8 137 3.3 137.2 3.9" stroke="#242424" stroke-width="1.02" fill="none" stroke-linecap="round" stroke-linejoin="round" opacity="0.75"/><path d="M-2 -15 Q4 -6 10 4" stroke="#242424" stroke-width="0.918" fill="none" stroke-linecap="round" opacity="0.7"/></g>
<g transform="translate(158 563) rotate(-90)"><path d="M0 3.5C0.5 3 2.2 1.8 3 0.5C3.7 -0.8 4.4 -3.5 4.5 -4.3C4.6 -5.1 3.8 -5.1 3.4 -4.3C3 -3.5 2.1 -0.8 2.1 0.5C2.1 1.8 2.9 3.2 3.3 3.5C3.7 3.7 4.3 2.7 4.7 2.2C5.1 1.6 5.6 0.4 5.8 0C6.1 -0.3 6.1 -0.3 6.1 0C6.1 0.4 5.9 1.6 6 2.2C6 2.7 6.3 3.5 6.6 3.5C6.9 3.5 7.4 2.8 7.9 2.2C8.3 1.7 8.8 0.6 9 0.2C9.3 -0.1 9.3 -0.1 9.4 0.2C9.4 0.6 9.2 1.7 9.3 2.2C9.4 2.8 9.5 3.4 9.9 3.5C10.2 3.5 11 2.9 11.4 2.4C11.8 2 12.2 1.1 12.4 0.8C12.5 0.5 12.3 0.5 12.3 0.8C12.3 1.1 12.1 2 12.2 2.4C12.4 2.9 12.8 3 13.2 3.5C13.5 3.9 14.2 4.3 14.3 5C14.4 5.6 14 7 13.9 7.4C13.7 7.8 13.3 7.8 13.4 7.4C13.5 7 13.9 5.6 14.4 5C14.9 4.3 15.8 4 16.4 3.5C17 3 17.6 2.6 18 1.9C18.5 1.3 19 -0.1 19.2 -0.5C19.5 -0.9 19.4 -0.9 19.3 -0.5C19.3 -0.1 19 1.3 19.1 1.9C19.1 2.6 19.4 3.4 19.7 3.5C20 3.5 20.5 2.8 20.9 2.3C21.3 1.8 21.8 0.7 22.1 0.4C22.3 0.1 22.4 0.1 22.5 0.4C22.6 0.7 22.5 1.8 22.6 2.3C22.6 2.8 22.6 3.7 23 3.5C23.5 3.3 24.7 2.1 25.4 1C26 -0.1 26.7 -2.4 26.9 -3C27 -3.7 26.6 -3.7 26.4 -3C26.1 -2.4 25.5 -0.1 25.5 1C25.4 2.1 25.9 3.3 26.3 3.5C26.7 3.7 27.3 2.8 27.8 2.2C28.2 1.7 28.7 0.6 28.9 0.2C29.1 -0.1 29 -0.1 29 0.2C29 0.6 28.8 1.7 28.9 2.2C29 2.8 29.3 3.4 29.6 3.5C29.9 3.5 30.5 2.9 30.9 2.4C31.2 1.9 31.7 1 31.9 0.7C32.2 0.4 32.2 0.4 32.2 0.7C32.3 1 32.2 1.9 32.3 2.4C32.4 2.9 32.6 3.5 32.9 3.5C33.2 3.5 33.6 2.9 34 2.5C34.4 2 34.8 1.1 35.1 0.8C35.4 0.5 35.5 0.5 35.6 0.8C35.7 1.1 35.6 2 35.7 2.5C35.8 2.9 35.9 3.1 36.2 3.5C36.4 3.9 37.2 4.3 37.3 5C37.4 5.6 37 7 36.9 7.4C36.7 7.8 36.3 7.8 36.4 7.4C36.5 7 36.9 5.6 37.4 5C37.9 4.3 38.7 4.2 39.5 3.5C40.2 2.8 41.2 2 41.9 0.8C42.5 -0.4 43.3 -2.9 43.5 -3.6C43.7 -4.3 43.2 -4.3 43 -3.6C42.7 -2.9 42 -0.4 42 0.8C41.9 2 42.2 3.5 42.8 3.5C43.3 3.4 44.5 1.8 45.2 0.5C45.9 -0.7 46.7 -3.4 46.9 -4.2C47.1 -5 46.7 -5 46.4 -4.2C46.2 -3.4 45.4 -0.7 45.3 0.5C45.3 1.8 45.7 3.2 46 3.5C46.4 3.8 47.1 2.8 47.5 2.4C47.9 1.9 48.4 0.9 48.5 0.6C48.7 0.3 48.6 0.3 48.6 0.6C48.6 0.9 48.4 1.9 48.5 2.4C48.6 2.8 48.9 3.5 49.3 3.5C49.7 3.5 50.5 2.9 51 2.4C51.4 1.9 51.8 0.9 51.9 0.7C52 0.4 51.8 0.4 51.7 0.7C51.7 0.9 51.5 1.9 51.6 2.4C51.8 2.9 52.5 3.3 52.6 3.5" stroke="#242424" stroke-width="0.85" fill="none" stroke-linecap="round" stroke-linejoin="round" opacity="0.41"/></g>
<g transform="translate(183 505) rotate(-38)"><path d="M0 -2.4C0.4 -2.8 1.9 -3.9 2.6 -5C3.3 -6.1 3.9 -8.4 4 -9.1C4 -9.8 3.3 -9.8 3 -9.1C2.6 -8.4 1.9 -6.1 1.9 -5C1.8 -3.9 2.5 -2.6 2.9 -2.4C3.3 -2.2 4 -3.2 4.4 -3.7C4.8 -4.3 5.3 -5.5 5.4 -5.8C5.6 -6.2 5.4 -6.2 5.4 -5.8C5.3 -5.5 5.1 -4.3 5.1 -3.7C5.2 -3.2 5.5 -2.5 5.8 -2.4C6.1 -2.4 6.5 -3 6.9 -3.4C7.2 -3.9 7.6 -4.8 7.9 -5.1C8.1 -5.3 8.2 -5.3 8.3 -5.1C8.4 -4.8 8.3 -3.9 8.3 -3.4C8.4 -3 8.5 -2.4 8.8 -2.4C9 -2.4 9.6 -3.1 10 -3.6C10.4 -4.1 10.8 -5.1 11 -5.4C11.2 -5.8 11.2 -5.8 11.2 -5.4C11.2 -5.1 11.1 -4.1 11.1 -3.6C11.2 -3.1 11.3 -2.4 11.7 -2.4C12 -2.4 12.8 -3 13.2 -3.5C13.6 -4 13.9 -5 14.1 -5.3C14.2 -5.6 14 -5.6 13.9 -5.3C13.9 -5 13.6 -4 13.8 -3.5C13.9 -3 14.2 -2.4 14.6 -2.4C15 -2.4 15.7 -3 16 -3.4C16.4 -3.9 16.8 -4.8 16.9 -5.1C17 -5.3 16.8 -5.3 16.8 -5.1C16.7 -4.8 16.5 -3.9 16.7 -3.4C16.8 -3 17 -2.2 17.5 -2.4C18 -2.7 19.1 -3.9 19.7 -5C20.3 -6.1 21 -8.4 21.2 -9.1C21.4 -9.8 21 -9.8 20.7 -9.1C20.5 -8.4 19.8 -6.1 19.8 -5C19.7 -3.9 20.1 -2.7 20.4 -2.4C20.7 -2.2 21.1 -3 21.5 -3.4C21.8 -3.9 22.2 -4.8 22.5 -5C22.7 -5.3 22.8 -5.3 22.9 -5C22.9 -4.8 22.8 -3.9 22.9 -3.4C23 -3 23.1 -2.4 23.3 -2.4C23.6 -2.4 24.2 -2.9 24.6 -3.3C24.9 -3.7 25.3 -4.5 25.5 -4.8C25.6 -5 25.5 -5 25.5 -4.8C25.6 -4.5 25.4 -3.7 25.5 -3.3C25.7 -2.9 26 -2.4 26.3 -2.4C26.6 -2.4 27 -3 27.4 -3.4C27.7 -3.8 28.1 -4.7 28.3 -4.9C28.5 -5.2 28.6 -5.2 28.6 -4.9C28.7 -4.7 28.5 -3.8 28.6 -3.4C28.7 -3 28.9 -2.4 29.2 -2.4C29.5 -2.4 30.1 -3.1 30.5 -3.5C30.9 -4 31.3 -5.1 31.5 -5.4C31.7 -5.7 31.6 -5.7 31.5 -5.4C31.5 -5.1 31.3 -4 31.4 -3.5C31.5 -3.1 31.8 -2.4 32.1 -2.4C32.4 -2.4 32.9 -3 33.2 -3.4C33.6 -3.8 34 -4.7 34.2 -5C34.4 -5.2 34.4 -5.2 34.4 -5C34.5 -4.7 34.3 -3.8 34.4 -3.4C34.5 -3 34.7 -2.8 35 -2.4C35.3 -2 35.9 -1.7 36 -1.1C36.1 -0.5 35.8 0.7 35.6 1.1C35.5 1.4 35.1 1.4 35.2 1.1C35.3 0.7 35.7 -0.5 36.1 -1.1C36.6 -1.7 37.2 -1.7 37.9 -2.4C38.6 -3.1 39.5 -4 40.2 -5.3C40.9 -6.5 41.7 -9.2 41.9 -9.9C42.1 -10.7 41.7 -10.7 41.4 -9.9C41.1 -9.2 40.4 -6.5 40.3 -5.3C40.2 -4 40.6 -2.7 40.8 -2.4C41.1 -2.1 41.6 -3.1 41.9 -3.6C42.3 -4.2 42.8 -5.3 43.1 -5.6C43.3 -6 43.4 -6 43.5 -5.6C43.5 -5.3 43.4 -4.2 43.4 -3.6C43.4 -3.1 43.5 -2.4 43.8 -2.4C44 -2.4 44.7 -3.1 45.1 -3.7C45.5 -4.2 45.9 -5.3 46.1 -5.7C46.3 -6 46.3 -6 46.3 -5.7C46.3 -5.3 46 -4.2 46.1 -3.7C46.2 -3.1 46.4 -2.4 46.7 -2.4C47 -2.4 47.5 -3 47.8 -3.5C48.2 -4 48.6 -5 48.9 -5.3C49.1 -5.6 49.1 -5.6 49.1 -5.3C49.2 -5 49 -4 49.1 -3.5C49.2 -3 49.5 -2.6 49.6 -2.4" stroke="#242424" stroke-width="0.9" fill="none" stroke-linecap="round" stroke-linejoin="round"/></g>
<line x1="187" y1="511" x2="244" y2="465" stroke="#242424" stroke-width="1.3"/>
<path d="M182 526C182.7 525.3 185.2 523.7 186.2 521.9C187.3 520.1 188.3 516.3 188.4 515.2C188.5 514.1 187.4 514.1 186.9 515.2C186.3 516.3 185 520.1 185 521.9C185 523.7 186.1 525.7 186.8 526C187.5 526.4 188.4 524.9 189.1 524C189.8 523.1 190.5 521.3 190.8 520.7C191 520.2 190.8 520.2 190.8 520.7C190.7 521.3 190.3 523.1 190.4 524C190.6 524.9 191 526 191.5 526C192.1 526 192.9 524.9 193.5 524C194.2 523.2 194.9 521.3 195.3 520.8C195.7 520.2 195.7 520.2 195.7 520.8C195.8 521.3 195.4 523.2 195.5 524C195.6 524.9 195.8 526 196.3 526C196.8 526.1 198 525 198.6 524.2C199.3 523.5 199.9 521.8 200.2 521.3C200.4 520.9 200.1 520.9 200.1 521.3C200 521.8 199.7 523.5 199.8 524.2C200 525 200.5 526 201.1 526C201.7 526.1 202.7 525.1 203.3 524.4C203.9 523.7 204.5 522.1 204.8 521.7C205 521.2 204.8 521.2 204.8 521.7C204.8 522.1 204.5 523.7 204.7 524.4C204.9 525.1 205.3 526 205.9 526C206.5 526 207.6 525.1 208.2 524.4C208.8 523.7 209.4 522.2 209.6 521.8C209.8 521.4 209.5 521.4 209.4 521.8C209.4 522.2 209.1 523.7 209.3 524.4C209.5 525.1 209.8 526.4 210.6 526C211.4 525.7 213.1 523.9 214.1 522.3C215 520.6 216.1 517.2 216.4 516.2C216.6 515.1 216 515.1 215.6 516.2C215.3 517.2 214.3 520.6 214.2 522.3C214.2 523.9 214.9 525 215.4 526C215.9 527 216.9 527.3 217.1 528.2C217.2 529.2 216.7 531.2 216.5 531.8C216.2 532.3 215.6 532.3 215.7 531.8C215.9 531.2 216.5 529.2 217.2 528.2C218 527.3 219.3 526.8 220.2 526C221.1 525.3 221.9 524.8 222.6 523.9C223.3 522.9 224 520.9 224.3 520.3C224.6 519.7 224.4 519.7 224.3 520.3C224.2 520.9 223.7 522.9 223.9 523.9C224 524.8 224.4 526 225 526C225.5 526 226.4 524.8 227 523.9C227.7 523 228.5 521 228.8 520.4C229.2 519.9 229.2 519.9 229.2 520.4C229.2 521 228.9 523 228.9 523.9C229 524.8 229.6 525.7 229.7 526" stroke="#242424" stroke-width="1.2800000000000002" fill="none" stroke-linecap="round" stroke-linejoin="round"/>
<g transform="translate(243 547) rotate(-90)"><path d="M0 2.6C0.2 2.4 0.8 2 1.2 1.6C1.5 1.1 1.9 0.2 2 -0.1C2.2 -0.4 2.1 -0.4 2.1 -0.1C2 0.2 1.8 1.1 1.9 1.6C2 2 2.2 2.6 2.5 2.6C2.8 2.6 3.4 2.1 3.7 1.7C4 1.3 4.4 0.4 4.5 0.1C4.6 -0.1 4.4 -0.1 4.4 0.1C4.4 0.4 4.2 1.3 4.3 1.7C4.4 2.1 4.6 2.6 4.9 2.6C5.2 2.6 5.7 2 6 1.5C6.4 1 6.8 0 7 -0.3C7.1 -0.6 7.1 -0.6 7.1 -0.3C7.1 0 6.9 1 6.9 1.5C7 2 7.2 2.6 7.4 2.6C7.6 2.6 8.1 2.1 8.4 1.6C8.7 1.2 9.1 0.3 9.3 0C9.5 -0.2 9.5 -0.2 9.5 0C9.5 0.3 9.4 1.2 9.4 1.6C9.5 2.1 9.5 2.8 9.9 2.6C10.2 2.4 11.2 1.4 11.7 0.4C12.3 -0.6 12.9 -2.6 13 -3.2C13.2 -3.8 12.9 -3.8 12.7 -3.2C12.5 -2.6 11.9 -0.6 11.8 0.4C11.7 1.4 11.9 2.6 12.3 2.6C12.7 2.6 13.7 1.2 14.3 0.2C14.8 -0.9 15.5 -3.1 15.7 -3.8C15.8 -4.4 15.5 -4.4 15.3 -3.8C15.1 -3.1 14.4 -0.9 14.3 0.2C14.3 1.2 14.4 2.5 14.8 2.6C15.2 2.7 16.1 1.6 16.5 0.8C17 0.1 17.5 -1.6 17.6 -2C17.7 -2.5 17.4 -2.5 17.2 -2C17.1 -1.6 16.6 0.1 16.6 0.8C16.6 1.6 16.8 2.7 17.3 2.6C17.7 2.5 18.6 1.2 19.2 0.2C19.8 -0.9 20.4 -3.2 20.6 -3.8C20.8 -4.5 20.5 -4.5 20.2 -3.8C20 -3.2 19.4 -0.9 19.3 0.2C19.2 1.2 19.5 2 19.7 2.6C20 3.2 20.5 3.2 20.6 3.7C20.7 4.2 20.4 5.3 20.3 5.6C20.1 5.9 19.8 5.9 19.9 5.6C20 5.3 20.3 4.2 20.7 3.7C21 3.2 21.7 3.1 22.2 2.6C22.7 2.1 23.5 1.6 23.9 0.8C24.4 0.1 24.9 -1.6 25 -2C25.1 -2.5 24.8 -2.5 24.6 -2C24.5 -1.6 24 0.1 24 0.8C24 1.6 24.2 2.7 24.7 2.6C25.1 2.5 26 1.3 26.5 0.3C27.1 -0.7 27.7 -2.7 27.9 -3.4C28 -4 27.7 -4 27.5 -3.4C27.3 -2.7 26.7 -0.7 26.6 0.3C26.6 1.3 26.8 2.4 27.1 2.6C27.4 2.8 28 2 28.3 1.6C28.7 1.1 29 0.2 29.2 -0.1C29.3 -0.4 29.2 -0.4 29.2 -0.1C29.1 0.2 28.9 1.1 29 1.6C29.1 2 29.2 2.8 29.6 2.6C30 2.4 30.9 1.4 31.5 0.4C32 -0.6 32.6 -2.6 32.7 -3.2C32.9 -3.7 32.6 -3.7 32.4 -3.2C32.2 -2.6 31.6 -0.6 31.5 0.4C31.5 1.4 32 2.2 32.1 2.6" stroke="#242424" stroke-width="0.85" fill="none" stroke-linecap="round" stroke-linejoin="round" opacity="0.6"/></g>
<path d="M258 555.7C258.8 555.1 261.3 553.6 262.6 551.9C263.8 550.2 265.1 546.7 265.5 545.7C266 544.7 265.4 544.7 265.2 545.7C265 546.7 264.2 550.2 264.5 551.9C264.7 553.6 265.2 556.5 266.8 555.7C268.3 555 271.6 550.9 273.6 547.2C275.5 543.5 277.9 535.7 278.5 533.4C279.1 531.1 277.9 531.1 277.2 533.4C276.4 535.7 274.1 543.5 273.8 547.2C273.5 550.9 274.6 555 275.5 555.7C276.4 556.5 277.9 553.5 279 551.7C280.2 550 281.8 546.3 282.5 545.2C283.3 544.2 283.4 544.2 283.6 545.2C283.7 546.3 283 550 283.1 551.7C283.3 553.5 283.6 554.4 284.3 555.7C284.9 557.1 287 558 287.3 559.7C287.6 561.5 286.6 565.1 286.2 566.2C285.7 567.3 284.6 567.3 284.8 566.2C285.1 565.1 286.2 561.5 287.6 559.7C288.9 558 292.1 556.4 293 555.7" stroke="#242424" stroke-width="0.96" fill="none" stroke-linecap="round" stroke-linejoin="round"/>
<path d="M306 459.7C306.6 459 308.7 457.5 309.7 455.8C310.6 454.1 311.6 450.5 311.7 449.4C311.9 448.4 310.9 448.4 310.4 449.4C309.9 450.5 308.7 454.1 308.7 455.8C308.6 457.5 309.4 459.3 310 459.7C310.5 460.1 311.3 458.7 311.9 458C312.4 457.2 313.1 455.6 313.3 455.1C313.6 454.7 313.4 454.7 313.4 455.1C313.3 455.6 313 457.2 313.1 458C313.2 458.7 313.6 459.6 314 459.7C314.3 459.8 314.9 459 315.4 458.4C315.8 457.9 316.4 456.7 316.7 456.4C317 456 317.1 456 317.2 456.4C317.3 456.7 317.1 457.9 317.3 458.4C317.4 459 317.6 459.7 317.9 459.7C318.3 459.7 319 458.9 319.5 458.4C320 457.8 320.6 456.5 320.8 456.2C321.1 455.8 321.1 455.8 321.1 456.2C321.2 456.5 321 457.8 321.1 458.4C321.3 458.9 321.5 459.7 321.9 459.7C322.3 459.7 323 459 323.4 458.5C323.9 457.9 324.4 456.8 324.7 456.5C325 456.2 325 456.2 325 456.5C325.1 456.8 325 457.9 325.1 458.5C325.2 459 325.8 459.5 325.9 459.7M331.8 459.7C332.4 459.1 334.5 457.7 335.4 456.1C336.3 454.5 337.2 451.2 337.3 450.2C337.4 449.2 336.5 449.2 336 450.2C335.5 451.2 334.4 454.5 334.4 456.1C334.3 457.7 335.2 459.4 335.8 459.7C336.3 460 337.2 458.8 337.8 458.2C338.3 457.5 338.8 456.1 339 455.7C339.2 455.3 339 455.3 338.9 455.7C338.8 456.1 338.5 457.5 338.7 458.2C338.8 458.8 339.3 459.6 339.7 459.7C340.2 459.8 340.9 459 341.4 458.5C341.8 457.9 342.3 456.8 342.6 456.5C342.8 456.1 342.8 456.1 342.8 456.5C342.9 456.8 342.7 457.9 342.8 458.5C343 459 343.3 459.8 343.7 459.7C344.2 459.6 344.9 458.7 345.4 458C346 457.2 346.6 455.7 346.9 455.2C347.2 454.8 347.2 454.8 347.2 455.2C347.2 455.7 346.9 457.2 347 458C347.1 458.7 347.3 459.7 347.7 459.7C348.1 459.7 348.8 458.8 349.3 458.1C349.8 457.5 350.4 456 350.7 455.6C351 455.2 351.1 455.2 351.1 455.6C351.2 456 350.9 457.5 351 458.1C351.1 458.8 351.3 459.7 351.7 459.7C352.1 459.7 353.1 459 353.6 458.4C354.1 457.9 354.5 456.7 354.7 456.4C354.9 456 354.7 456 354.6 456.4C354.6 456.7 354.4 457.9 354.5 458.4C354.7 459 355.2 459.2 355.7 459.7C356.1 460.2 356.9 460.7 357 461.5C357.2 462.3 356.7 464 356.5 464.5C356.3 465 355.8 465 355.9 464.5C356 464 356.5 462.3 357.2 461.5C357.8 460.7 358.7 460.5 359.6 459.7C360.5 458.9 361.7 458 362.5 456.6C363.3 455.3 364.1 452.5 364.3 451.7C364.5 450.8 364 450.8 363.7 451.7C363.4 452.5 362.6 455.3 362.6 456.6C362.6 458 363.2 459.5 363.6 459.7C364 459.9 364.6 458.7 365.2 457.9C365.7 457 366.4 455.4 366.8 454.9C367.1 454.4 367.3 454.4 367.3 454.9C367.4 455.4 367.1 457 367.2 457.9C367.2 458.7 367.5 459.4 367.6 459.7" stroke="#242424" stroke-width="1.2000000000000002" fill="none" stroke-linecap="round" stroke-linejoin="round"/>
<path d="M312 481.5C312.7 480.8 314.9 479.1 315.9 477.3C316.9 475.5 318 471.7 318.1 470.5C318.2 469.4 317.3 469.4 316.7 470.5C316.2 471.7 314.9 475.5 314.8 477.3C314.8 479.1 315.8 480.5 316.2 481.5C316.7 482.5 317.6 482.6 317.7 483.4C317.9 484.3 317.4 486 317.2 486.6C317 487.1 316.4 487.1 316.5 486.6C316.6 486 317.2 484.3 317.8 483.4C318.5 482.6 319.7 482.1 320.5 481.5C321.3 480.9 322 480.6 322.6 479.9C323.1 479.3 323.7 477.9 323.9 477.5C324.1 477.1 323.8 477.1 323.8 477.5C323.7 477.9 323.4 479.3 323.6 479.9C323.7 480.6 324.3 480.9 324.7 481.5C325.2 482.1 326.1 482.6 326.2 483.4C326.4 484.3 325.9 486 325.7 486.6C325.5 487.1 324.9 487.1 325 486.6C325.1 486 325.7 484.3 326.3 483.4C327 482.6 328.3 482.1 329 481.5C329.7 480.9 330.1 480.6 330.6 480C331.1 479.3 331.7 478 332.1 477.6C332.4 477.2 332.4 477.2 332.5 477.6C332.5 478 332.3 479.3 332.5 480C332.6 480.6 332.8 481.5 333.2 481.5C333.6 481.5 334.3 480.6 334.8 479.8C335.4 479.1 336 477.6 336.4 477.2C336.7 476.8 336.8 476.8 336.9 477.2C337 477.6 336.7 479.1 336.8 479.8C336.9 480.6 337 481.4 337.5 481.5C337.9 481.5 338.9 480.7 339.5 480.1C340 479.5 340.5 478.3 340.7 477.9C340.9 477.6 340.6 477.6 340.6 477.9C340.6 478.3 340.3 479.5 340.5 480.1C340.7 480.7 341.2 481.6 341.7 481.5C342.2 481.4 343.1 480.4 343.7 479.6C344.3 478.8 345 477.2 345.2 476.7C345.5 476.2 345.3 476.2 345.3 476.7C345.3 477.2 344.9 478.8 345 479.6C345.1 480.4 345.5 481.4 345.9 481.5C346.4 481.5 347.2 480.6 347.7 479.9C348.3 479.2 348.9 477.8 349.2 477.4C349.5 476.9 349.4 476.9 349.4 477.4C349.5 477.8 349.2 479.2 349.3 479.9C349.5 480.6 349.7 481.4 350.2 481.5C350.7 481.5 351.7 480.7 352.3 480.1C352.8 479.5 353.3 478.3 353.5 477.9C353.6 477.6 353.3 477.6 353.3 477.9C353.3 478.3 353 479.5 353.2 480.1C353.4 480.7 353.7 481.8 354.4 481.5C355.1 481.2 356.6 479.6 357.5 478.2C358.3 476.8 359.2 473.8 359.5 472.9C359.7 472 359.1 472 358.8 472.9C358.5 473.8 357.6 476.8 357.6 478.2C357.6 479.6 358.3 480.6 358.7 481.5C359.1 482.4 360 482.6 360.2 483.4C360.3 484.3 359.8 486 359.6 486.6C359.4 487.1 358.8 487.1 358.9 486.6C359.1 486 359.6 484.3 360.3 483.4C360.9 482.6 362.5 481.8 362.9 481.5" stroke="#242424" stroke-width="1.2800000000000002" fill="none" stroke-linecap="round" stroke-linejoin="round"/>
<path d="M308 496.5C308.2 496.3 308.8 496.1 309.1 495.8C309.4 495.5 309.6 494.9 309.7 494.7C309.8 494.5 309.7 494.5 309.6 494.7C309.6 494.9 309.5 495.5 309.6 495.8C309.7 496.1 310 496.2 310.3 496.5C310.6 496.7 311.1 496.9 311.2 497.3C311.3 497.7 311.1 498.5 311 498.7C310.9 498.9 310.6 498.9 310.6 498.7C310.7 498.5 310.9 497.7 311.2 497.3C311.6 496.9 312.2 496.7 312.6 496.5C313 496.2 313.4 496.1 313.7 495.7C314 495.4 314.2 494.8 314.3 494.6C314.4 494.4 314.3 494.4 314.3 494.6C314.3 494.8 314.2 495.4 314.3 495.7C314.4 496.1 314.6 496.5 314.9 496.5C315.2 496.5 315.5 496 315.8 495.7C316.1 495.4 316.4 494.7 316.6 494.5C316.7 494.3 316.7 494.3 316.7 494.5C316.8 494.7 316.7 495.4 316.7 495.7C316.8 496 316.9 496.4 317.2 496.5C317.5 496.5 318 496.1 318.3 495.8C318.5 495.6 318.8 495 318.9 494.9C319 494.7 318.8 494.7 318.8 494.9C318.8 495 318.7 495.6 318.8 495.8C318.9 496.1 319.2 496.5 319.5 496.5C319.8 496.4 320.1 496 320.4 495.7C320.6 495.3 321 494.6 321.1 494.4C321.3 494.2 321.4 494.2 321.4 494.4C321.4 494.6 321.3 495.3 321.4 495.7C321.5 496 321.6 496.5 321.8 496.5C322 496.5 322.5 496 322.8 495.7C323.1 495.3 323.4 494.6 323.5 494.4C323.7 494.2 323.6 494.2 323.6 494.4C323.6 494.6 323.5 495.3 323.6 495.7C323.6 496 323.7 496.6 324.1 496.5C324.5 496.3 325.3 495.6 325.7 494.9C326.1 494.2 326.6 492.7 326.7 492.3C326.8 491.9 326.5 491.9 326.3 492.3C326.2 492.7 325.7 494.2 325.8 494.9C325.8 495.6 326.2 496.3 326.4 496.5C326.6 496.6 327 496.1 327.2 495.8C327.5 495.5 327.8 495 327.9 494.8C328.1 494.6 328.1 494.6 328.2 494.8C328.2 495 328.2 495.5 328.3 495.8C328.3 496.1 328.4 496.5 328.7 496.5C329 496.4 329.5 496 329.8 495.7C330.1 495.3 330.4 494.6 330.5 494.4C330.6 494.2 330.5 494.2 330.4 494.4C330.4 494.6 330.3 495.3 330.4 495.7C330.4 496 330.6 496.6 331 496.5C331.4 496.4 332.1 495.7 332.5 495.1C332.9 494.4 333.3 493.2 333.4 492.8C333.5 492.4 333.2 492.4 333.1 492.8C332.9 493.2 332.6 494.4 332.6 495.1C332.6 495.7 333 496.1 333.3 496.5C333.6 496.8 334.1 496.9 334.2 497.3C334.3 497.7 334.1 498.5 334 498.7C333.9 498.9 333.6 498.9 333.6 498.7C333.7 498.5 333.9 497.7 334.2 497.3C334.6 496.9 335.2 496.7 335.6 496.5C336 496.2 336.2 496.1 336.4 495.7C336.7 495.4 337 494.8 337.2 494.6C337.4 494.4 337.4 494.4 337.4 494.6C337.5 494.8 337.4 495.4 337.5 495.7C337.6 496.1 337.6 496.4 337.9 496.5C338.2 496.5 338.7 496.1 339 495.8C339.3 495.6 339.5 495 339.6 494.8C339.7 494.7 339.5 494.7 339.5 494.8C339.5 495 339.3 495.6 339.5 495.8C339.6 496.1 339.9 496.5 340.2 496.5C340.5 496.5 341 496.1 341.3 495.9C341.6 495.6 341.8 495.1 341.9 494.9C342 494.7 341.8 494.7 341.8 494.9C341.7 495.1 341.6 495.6 341.8 495.9C341.9 496.1 342.1 496.6 342.5 496.5C342.9 496.3 343.7 495.6 344.1 494.9C344.5 494.3 344.9 492.8 345 492.4C345.1 492 344.8 492 344.7 492.4C344.5 492.8 344.1 494.3 344.1 494.9C344.2 495.6 344.5 496.3 344.8 496.5C345.1 496.6 345.6 496 345.9 495.7C346.2 495.3 346.5 494.6 346.6 494.4C346.7 494.1 346.6 494.1 346.6 494.4C346.6 494.6 346.4 495.3 346.5 495.7C346.6 496 346.8 496.4 347.1 496.5C347.4 496.5 347.8 496.1 348.1 495.8C348.4 495.6 348.6 495 348.7 494.8C348.8 494.7 348.7 494.7 348.8 494.8C348.8 495 348.7 495.6 348.8 495.8C348.9 496.1 349 496.6 349.4 496.5C349.8 496.3 350.5 495.6 350.9 495C351.4 494.4 351.8 493.1 351.9 492.7C351.9 492.3 351.6 492.3 351.5 492.7C351.4 493.1 351 494.4 351 495C351 495.6 351.4 496.3 351.7 496.5C352 496.6 352.3 496.1 352.6 495.9C352.8 495.6 353.1 495.1 353.2 495C353.4 494.8 353.3 494.8 353.4 495C353.4 495.1 353.4 495.6 353.5 495.9C353.6 496.1 353.7 496.5 354 496.5C354.3 496.4 354.7 496 355 495.7C355.3 495.3 355.6 494.6 355.7 494.4C355.8 494.2 355.8 494.2 355.8 494.4C355.8 494.6 355.7 495.3 355.8 495.7C355.9 496 356.1 496.4 356.3 496.5C356.5 496.5 356.9 496.1 357.1 495.8C357.4 495.4 357.7 494.8 357.9 494.6C358 494.4 358.1 494.4 358.1 494.6C358.2 494.8 358.1 495.4 358.2 495.8C358.3 496.1 358.4 496.5 358.6 496.5C358.8 496.5 359.4 496.1 359.7 495.8C359.9 495.5 360.2 494.8 360.3 494.7C360.4 494.5 360.3 494.5 360.3 494.7C360.3 494.8 360.2 495.5 360.3 495.8C360.4 496.1 360.8 496.3 360.9 496.5" stroke="#242424" stroke-width="0.7200000000000001" fill="none" stroke-linecap="round" stroke-linejoin="round"/>
<path d="M312 516.9C312.6 516.3 314.5 514.9 315.4 513.4C316.3 511.8 317.1 508.6 317.2 507.7C317.3 506.7 316.5 506.7 316 507.7C315.6 508.6 314.5 511.8 314.4 513.4C314.4 514.9 315.3 516.6 315.7 516.9C316.2 517.3 316.7 516.1 317.2 515.5C317.6 514.9 318.2 513.7 318.5 513.3C318.8 512.9 318.8 512.9 318.8 513.3C318.9 513.7 318.7 514.9 318.8 515.5C318.9 516.1 319 517 319.4 516.9C319.8 516.9 320.8 516 321.3 515.3C321.8 514.5 322.4 513 322.6 512.6C322.8 512.1 322.6 512.1 322.6 512.6C322.5 513 322.2 514.5 322.3 515.3C322.3 516 322.7 516.9 323.1 516.9C323.6 516.9 324.4 516 325 515.3C325.5 514.6 326.1 513.1 326.3 512.6C326.5 512.2 326.3 512.2 326.3 512.6C326.3 513.1 325.9 514.6 326 515.3C326.1 516 326.5 516.9 326.9 516.9C327.2 517 327.9 516.1 328.4 515.5C328.8 514.9 329.4 513.6 329.7 513.2C329.9 512.9 329.9 512.9 330 513.2C330 513.6 329.8 514.9 329.9 515.5C330 516.1 330.2 516.9 330.6 516.9C330.9 517 331.6 516.2 332.1 515.7C332.5 515.2 333 514.1 333.2 513.8C333.5 513.5 333.4 513.5 333.5 513.8C333.5 514.1 333.3 515.2 333.5 515.7C333.6 516.2 333.8 517 334.3 516.9C334.7 516.9 335.5 516 336 515.4C336.6 514.7 337.1 513.3 337.3 512.8C337.6 512.4 337.4 512.4 337.4 512.8C337.4 513.3 337.1 514.7 337.2 515.4C337.3 516 337.6 516.4 338 516.9C338.3 517.5 339.1 517.9 339.3 518.6C339.4 519.4 339 520.9 338.8 521.4C338.6 521.8 338.1 521.8 338.2 521.4C338.3 520.9 338.8 519.4 339.4 518.6C340 517.9 341 517.4 341.7 516.9C342.4 516.4 342.9 516.1 343.4 515.5C343.9 514.9 344.4 513.6 344.6 513.2C344.8 512.9 344.7 512.9 344.7 513.2C344.7 513.6 344.4 514.9 344.5 515.5C344.7 516.1 344.9 516.9 345.4 516.9C345.9 516.9 346.8 516.1 347.4 515.4C347.9 514.7 348.4 513.3 348.6 512.9C348.7 512.5 348.5 512.5 348.4 512.9C348.3 513.3 348 514.7 348.1 515.4C348.2 516.1 348.7 516.4 349.1 516.9C349.5 517.5 350.3 517.9 350.4 518.6C350.6 519.4 350.1 520.9 349.9 521.4C349.8 521.8 349.3 521.8 349.4 521.4C349.5 520.9 350 519.4 350.5 518.6C351.1 517.9 352.2 517.5 352.8 516.9C353.5 516.4 354 516 354.5 515.3C355 514.6 355.6 513.2 355.8 512.7C356.1 512.3 356.1 512.3 356.1 512.7C356.1 513.2 355.8 514.6 355.9 515.3C356 516 356.4 516.7 356.6 516.9" stroke="#242424" stroke-width="0.8800000000000001" fill="none" stroke-linecap="round" stroke-linejoin="round"/>
<path d="M336 529.5C336.2 529.4 336.7 529.1 336.9 528.9C337.2 528.6 337.4 528.1 337.6 527.9C337.7 527.8 337.6 527.8 337.6 527.9C337.7 528.1 337.6 528.6 337.7 528.9C337.8 529.1 338.1 529.2 338.3 529.5C338.5 529.7 339.1 529.9 339.2 530.3C339.3 530.7 339.1 531.5 339 531.7C338.9 531.9 338.6 531.9 338.6 531.7C338.7 531.5 338.9 530.7 339.2 530.3C339.6 529.9 340.4 529.6 340.6 529.5" stroke="#242424" stroke-width="0.7200000000000001" fill="none" stroke-linecap="round" stroke-linejoin="round"/>
<path d="M318 553.5C319 552.5 322.5 550 324 547.2C325.6 544.5 327.1 538.8 327.3 537.1C327.5 535.4 326 535.4 325.1 537.1C324.3 538.8 322.4 544.5 322.3 547.2C322.3 550 323.4 553.4 324.6 553.5C325.8 553.6 328.2 550.2 329.6 547.6C331 545.1 332.7 539.7 333.1 538.1C333.5 536.5 332.6 536.5 332.1 538.1C331.5 539.7 329.9 545.1 329.8 547.6C329.7 550.2 330.5 553 331.3 553.5C332 554 333.4 551.9 334.3 550.7C335.2 549.5 336.2 546.9 336.6 546.2C337.1 545.4 336.9 545.4 336.9 546.2C336.9 546.9 336.4 549.5 336.5 550.7C336.7 551.9 337.2 553.5 337.9 553.5C338.6 553.5 340.1 551.9 341 550.6C341.9 549.3 342.9 546.7 343.4 545.9C343.8 545.1 343.6 545.1 343.6 545.9C343.6 546.7 343 549.3 343.2 550.6C343.3 551.9 343.8 553.5 344.5 553.5C345.2 553.5 346.4 551.8 347.3 550.5C348.2 549.1 349.4 546.4 349.9 545.5C350.4 544.7 350.5 544.7 350.6 545.5C350.6 546.4 350.1 549.1 350.2 550.5C350.3 551.8 350.5 553.4 351.1 553.5C351.8 553.6 353.5 552.1 354.3 551.1C355.2 550 356.1 547.8 356.4 547.1C356.8 546.4 356.4 546.4 356.3 547.1C356.3 547.8 355.8 550 356.1 551.1C356.3 552.1 357.5 553.1 357.8 553.5" stroke="#242424" stroke-width="0.96" fill="none" stroke-linecap="round" stroke-linejoin="round"/>
<text transform="rotate(-90 43 694) translate(0 5)" font-style="italic" stroke="#242424" stroke-width="0.7" x="43" y="694" font-family="Liberation Serif" font-size="16"  text-anchor="middle" fill="#242424" letter-spacing="0">60</text>
<g transform="translate(55 735) rotate(-90)"><path d="M0 3.5C0.2 3.7 1 4.3 1.1 5C1.3 5.6 0.9 7 0.7 7.4C0.6 7.8 0.1 7.8 0.2 7.4C0.3 7 0.7 5.6 1.2 5C1.8 4.3 2.6 4.2 3.3 3.5C4 2.8 5 2 5.7 0.9C6.3 -0.3 7.1 -2.7 7.2 -3.4C7.4 -4.1 7 -4.1 6.7 -3.4C6.5 -2.7 5.8 -0.3 5.8 0.9C5.7 2 6.2 3.2 6.6 3.5C6.9 3.7 7.5 2.9 7.9 2.5C8.3 2 8.7 1.1 8.9 0.8C9.1 0.6 9.1 0.6 9.1 0.8C9.1 1.1 9 2 9.1 2.5C9.3 2.9 9.5 3.5 9.9 3.5C10.2 3.4 10.8 2.7 11.3 2.1C11.7 1.5 12.2 0.2 12.5 -0.1C12.7 -0.5 12.7 -0.5 12.7 -0.1C12.7 0.2 12.5 1.5 12.6 2.1C12.6 2.7 12.9 3 13.2 3.5C13.4 4 14.2 4.3 14.3 5C14.4 5.6 14 7 13.9 7.4C13.7 7.8 13.3 7.8 13.4 7.4C13.5 7 13.9 5.6 14.4 5C14.9 4.3 15.7 4.2 16.4 3.5C17.2 2.7 18.2 1.7 19 0.4C19.7 -1 20.5 -3.8 20.8 -4.6C21 -5.4 20.5 -5.4 20.3 -4.6C20 -3.8 19.1 -1 19.1 0.4C19 1.7 19.4 3.2 19.7 3.5C20.1 3.8 20.6 2.7 21 2.2C21.5 1.6 22 0.5 22.2 0.1C22.5 -0.2 22.5 -0.2 22.5 0.1C22.6 0.5 22.4 1.6 22.5 2.2C22.6 2.7 22.7 3.5 23 3.5C23.3 3.5 23.9 2.8 24.3 2.3C24.7 1.7 25.2 0.6 25.5 0.3C25.7 -0 25.7 -0 25.8 0.3C25.8 0.6 25.7 1.7 25.7 2.3C25.8 2.8 25.8 3.8 26.3 3.5C26.8 3.2 28.1 1.7 28.8 0.4C29.6 -1 30.4 -3.8 30.7 -4.7C30.9 -5.5 30.4 -5.5 30.1 -4.7C29.9 -3.8 29 -1 28.9 0.4C28.8 1.7 29.2 3.2 29.6 3.5C30 3.8 30.6 2.7 31.1 2.1C31.5 1.5 32 0.3 32.2 -0C32.4 -0.4 32.4 -0.4 32.4 -0C32.4 0.3 32.1 1.5 32.2 2.1C32.3 2.7 32.5 3.4 32.9 3.5C33.3 3.5 34.1 2.8 34.5 2.3C35 1.9 35.4 0.8 35.5 0.5C35.6 0.2 35.4 0.2 35.3 0.5C35.3 0.8 35 1.9 35.2 2.3C35.3 2.8 35.8 3 36.2 3.5C36.5 3.9 37.2 4.3 37.3 5C37.4 5.6 37 7 36.9 7.4C36.7 7.8 36.3 7.8 36.4 7.4C36.5 7 36.9 5.6 37.4 5C37.9 4.3 38.8 4 39.5 3.5C40.1 3 40.7 2.7 41.1 2C41.6 1.4 42.1 0.1 42.3 -0.3C42.4 -0.7 42.3 -0.7 42.2 -0.3C42.1 0.1 41.8 1.4 41.9 2C42 2.7 42.4 3.4 42.8 3.5C43.1 3.5 43.8 2.8 44.2 2.3C44.6 1.8 45.1 0.7 45.3 0.4C45.4 0.1 45.4 0.1 45.4 0.4C45.4 0.7 45.2 1.8 45.3 2.3C45.4 2.8 45.9 3.3 46 3.5" stroke="#242424" stroke-width="0.85" fill="none" stroke-linecap="round" stroke-linejoin="round" opacity="0.6"/></g>
<g transform="translate(68 702) rotate(-90)"><path d="M0 3C0.2 3.3 0.9 3.8 1 4.4C1.1 4.9 0.8 6.1 0.6 6.5C0.5 6.8 0.1 6.8 0.2 6.5C0.3 6.1 0.6 4.9 1.1 4.4C1.5 3.8 2.4 3.4 2.9 3C3.4 2.7 3.7 2.5 4.1 2C4.4 1.6 4.8 0.7 5 0.4C5.2 0.1 5.2 0.1 5.2 0.4C5.2 0.7 5.1 1.6 5.2 2C5.3 2.5 5.5 2.7 5.8 3C6 3.4 6.7 3.8 6.8 4.4C6.9 4.9 6.5 6.1 6.4 6.5C6.2 6.8 5.9 6.8 5.9 6.5C6 6.1 6.4 4.9 6.8 4.4C7.3 3.8 8.2 3.4 8.6 3C9.1 2.7 9.3 2.5 9.6 2.1C10 1.7 10.4 0.8 10.6 0.5C10.9 0.3 11 0.3 11 0.5C11.1 0.8 11 1.7 11.1 2.1C11.2 2.5 11.3 3 11.5 3C11.8 3 12.3 2.5 12.6 2C13 1.6 13.4 0.7 13.6 0.4C13.8 0.1 13.8 0.1 13.9 0.4C13.9 0.7 13.8 1.6 13.9 2C13.9 2.5 14.1 2.7 14.4 3C14.6 3.4 15.3 3.8 15.4 4.4C15.5 4.9 15.1 6.1 15 6.5C14.9 6.8 14.5 6.8 14.6 6.5C14.6 6.1 15 4.9 15.5 4.4C15.9 3.8 16.7 3.4 17.3 3C17.8 2.6 18.2 2.4 18.6 2C19 1.5 19.4 0.5 19.5 0.2C19.7 -0.1 19.6 -0.1 19.6 0.2C19.6 0.5 19.4 1.5 19.5 2C19.6 2.4 19.8 3 20.1 3C20.5 3 21.2 2.4 21.6 2C22 1.5 22.3 0.6 22.5 0.3C22.6 0 22.4 0 22.3 0.3C22.3 0.6 22.1 1.5 22.2 2C22.3 2.4 22.9 2.9 23 3" stroke="#242424" stroke-width="0.85" fill="none" stroke-linecap="round" stroke-linejoin="round" opacity="0.75"/></g>
<g transform="translate(80 772) rotate(-90)"><path d="M0 3.9C0.6 3.3 2.5 1.9 3.4 0.3C4.3 -1.3 5.2 -4.6 5.3 -5.6C5.4 -6.6 4.6 -6.6 4.1 -5.6C3.6 -4.6 2.5 -1.3 2.5 0.3C2.4 1.9 3 3.9 3.7 3.9C4.4 3.9 5.7 1.9 6.6 0.3C7.4 -1.2 8.4 -4.5 8.6 -5.4C8.9 -6.4 8.4 -6.4 8.1 -5.4C7.7 -4.5 6.8 -1.2 6.7 0.3C6.6 1.9 7.1 3.5 7.4 3.9C7.7 4.3 8.2 3.3 8.7 2.8C9.1 2.3 9.6 1.2 9.9 0.9C10.2 0.6 10.3 0.6 10.4 0.9C10.5 1.2 10.4 2.3 10.5 2.8C10.6 3.3 10.7 4 11.1 3.9C11.4 3.8 12.1 3 12.6 2.4C13.1 1.7 13.7 0.3 14 -0.1C14.3 -0.5 14.3 -0.5 14.3 -0.1C14.3 0.3 14.1 1.7 14.2 2.4C14.3 3 14.3 4.1 14.8 3.9C15.3 3.7 16.7 2.3 17.4 1.1C18.2 -0.1 18.9 -2.7 19.1 -3.4C19.3 -4.2 18.8 -4.2 18.6 -3.4C18.3 -2.7 17.6 -0.1 17.5 1.1C17.5 2.3 17.9 4 18.5 3.9C19.1 3.8 20.5 1.9 21.3 0.4C22.2 -1.1 23.1 -4.3 23.4 -5.3C23.6 -6.2 23.1 -6.2 22.8 -5.3C22.5 -4.3 21.6 -1.1 21.5 0.4C21.4 1.9 21.9 3 22.2 3.9C22.5 4.8 23.4 4.9 23.5 5.6C23.6 6.3 23.2 7.9 23 8.3C22.8 8.8 22.3 8.8 22.4 8.3C22.5 7.9 23 6.3 23.6 5.6C24.2 4.9 25 4.8 25.9 3.9C26.8 3 28 1.8 28.8 0.3C29.6 -1.3 30.6 -4.7 30.9 -5.7C31.2 -6.6 30.7 -6.6 30.3 -5.7C30 -4.7 29 -1.3 28.9 0.3C28.8 1.8 29.2 3.5 29.6 3.9C30 4.3 30.9 3.2 31.4 2.7C31.9 2.1 32.3 1 32.5 0.7C32.6 0.4 32.4 0.4 32.3 0.7C32.3 1 32.1 2.1 32.2 2.7C32.4 3.2 32.8 4 33.3 3.9C33.8 3.8 34.6 3 35.1 2.3C35.6 1.6 36.2 0.2 36.4 -0.3C36.6 -0.7 36.5 -0.7 36.4 -0.3C36.4 0.2 36.1 1.6 36.2 2.3C36.3 3 36.9 3.6 37 3.9M44.7 3.9C45.3 3.4 47.2 2 48.1 0.6C48.9 -0.8 49.7 -3.9 49.8 -4.8C49.9 -5.6 49 -5.6 48.6 -4.8C48.1 -3.9 47.1 -0.8 47.1 0.6C47.1 2 47.9 3.6 48.4 3.9C49 4.2 49.7 3.1 50.2 2.5C50.7 1.8 51.2 0.5 51.4 0.1C51.6 -0.3 51.5 -0.3 51.4 0.1C51.4 0.5 51.1 1.8 51.2 2.5C51.3 3.1 51.7 3.9 52.1 3.9C52.6 3.9 53.4 3 53.9 2.2C54.4 1.5 55 0 55.2 -0.4C55.5 -0.9 55.4 -0.9 55.3 -0.4C55.3 0 55 1.5 55.1 2.2C55.2 3 55.5 3.3 55.8 3.9C56.2 4.5 57 4.9 57.1 5.6C57.3 6.3 56.8 7.9 56.6 8.3C56.5 8.8 56 8.8 56.1 8.3C56.2 7.9 56.7 6.3 57.2 5.6C57.8 4.9 58.7 4.7 59.5 3.9C60.4 3.2 61.5 2.3 62.2 1.1C62.9 -0.1 63.7 -2.6 63.9 -3.4C64.1 -4.1 63.6 -4.1 63.3 -3.4C63 -2.6 62.3 -0.1 62.3 1.1C62.3 2.3 62.8 3.6 63.2 3.9C63.7 4.2 64.3 3.3 64.8 2.7C65.2 2.2 65.7 1.2 65.9 0.9C66.1 0.5 66.1 0.5 66.1 0.9C66.1 1.2 66 2.2 66.1 2.7C66.2 3.3 66.3 4.2 66.9 3.9C67.5 3.6 68.9 2.1 69.7 0.7C70.5 -0.7 71.4 -3.6 71.6 -4.4C71.8 -5.3 71.3 -5.3 71 -4.4C70.7 -3.6 69.9 -0.7 69.8 0.7C69.7 2.1 70.2 3.6 70.6 3.9C71.1 4.2 72 3.1 72.5 2.5C73 1.8 73.5 0.5 73.7 0.1C73.9 -0.3 73.6 -0.3 73.6 0.1C73.5 0.5 73.2 1.8 73.3 2.5C73.5 3.1 73.7 4.3 74.3 3.9C75 3.6 76.4 1.9 77.2 0.3C78 -1.2 79 -4.5 79.3 -5.5C79.5 -6.4 79 -6.4 78.7 -5.5C78.4 -4.5 77.4 -1.2 77.3 0.3C77.2 1.9 77.6 3.6 78 3.9C78.5 4.3 79.3 3.1 79.8 2.4C80.3 1.8 80.8 0.5 81 0.1C81.2 -0.3 81.1 -0.3 81.1 0.1C81 0.5 80.7 1.8 80.9 2.4C81 3.1 81.6 3.7 81.7 3.9M89.3 3.9C89.9 3.3 91.8 1.8 92.7 0.2C93.6 -1.5 94.6 -4.9 94.7 -5.9C94.8 -6.9 93.9 -6.9 93.5 -5.9C93 -4.9 91.9 -1.5 91.8 0.2C91.7 1.8 92.3 3.8 93 3.9C93.7 4 95 2 95.8 0.6C96.6 -0.9 97.5 -4 97.7 -4.9C98 -5.8 97.5 -5.8 97.2 -4.9C96.9 -4 96 -0.9 95.9 0.6C95.8 2 96.3 3.5 96.7 3.9C97.1 4.3 97.9 3.3 98.3 2.8C98.8 2.3 99.2 1.2 99.4 0.9C99.6 0.6 99.5 0.6 99.5 0.9C99.5 1.2 99.3 2.3 99.4 2.8C99.6 3.3 100 4 100.4 3.9C100.8 3.8 101.5 3 102 2.2C102.5 1.5 103.1 -0.1 103.4 -0.5C103.7 -1 103.7 -1 103.7 -0.5C103.7 -0.1 103.4 1.5 103.5 2.2C103.5 3 103.7 3.9 104.1 3.9C104.5 3.9 105.2 3.1 105.7 2.5C106.2 1.8 106.7 0.5 107 0.1C107.2 -0.2 107.1 -0.2 107.1 0.1C107.1 0.5 106.9 1.8 107 2.5C107.1 3.1 107.4 3.9 107.8 3.9C108.2 4 109 3.3 109.5 2.8C109.9 2.3 110.4 1.2 110.5 0.9C110.7 0.6 110.5 0.6 110.5 0.9C110.5 1.2 110.3 2.3 110.5 2.8C110.6 3.3 111 3.9 111.5 3.9C112 3.9 112.8 3.2 113.3 2.6C113.8 2 114.3 0.8 114.4 0.4C114.6 0.1 114.4 0.1 114.3 0.4C114.3 0.8 114 2 114.2 2.6C114.3 3.2 115 3.7 115.2 3.9M121 3.9C121.5 3.3 123.5 1.9 124.4 0.3C125.3 -1.3 126.2 -4.6 126.3 -5.6C126.4 -6.6 125.5 -6.6 125.1 -5.6C124.6 -4.6 123.5 -1.3 123.4 0.3C123.4 1.9 124 3.8 124.7 3.9C125.3 4 126.6 2.1 127.4 0.8C128.2 -0.6 129 -3.4 129.3 -4.3C129.5 -5.1 129 -5.1 128.7 -4.3C128.4 -3.4 127.6 -0.6 127.5 0.8C127.5 2.1 128.2 3.4 128.4 3.9" stroke="#242424" stroke-width="1.02" fill="none" stroke-linecap="round" stroke-linejoin="round" opacity="0.75"/><path d="M-2 -15 Q4 -6 10 4" stroke="#242424" stroke-width="0.918" fill="none" stroke-linecap="round" opacity="0.7"/></g>
<g transform="translate(95 702) rotate(-90)"><path d="M0 3.5C0.5 3 2.2 1.8 3 0.5C3.7 -0.8 4.4 -3.5 4.5 -4.3C4.6 -5.2 3.9 -5.2 3.4 -4.3C3 -3.5 2.1 -0.8 2.1 0.5C2.1 1.8 2.9 3.2 3.3 3.5C3.7 3.8 4.3 2.8 4.7 2.3C5.2 1.7 5.6 0.6 5.8 0.3C6 -0 6 -0 6 0.3C6 0.6 5.8 1.7 5.9 2.3C6 2.8 6.3 3 6.6 3.5C6.9 3.9 7.6 4.3 7.7 5C7.8 5.6 7.4 7 7.3 7.4C7.1 7.8 6.7 7.8 6.8 7.4C6.9 7 7.3 5.6 7.8 5C8.3 4.3 9.3 4 9.9 3.5C10.5 3 11 2.6 11.5 1.9C12 1.3 12.5 -0.1 12.7 -0.5C12.9 -0.9 12.8 -0.9 12.7 -0.5C12.7 -0.1 12.4 1.3 12.4 1.9C12.5 2.6 12.8 3.4 13.2 3.5C13.5 3.5 14.1 2.8 14.5 2.3C14.9 1.8 15.4 0.7 15.6 0.4C15.8 0.1 15.8 0.1 15.9 0.4C15.9 0.7 15.7 1.8 15.8 2.3C15.9 2.8 16.1 3 16.4 3.5C16.7 3.9 17.5 4.3 17.6 5C17.7 5.6 17.3 7 17.2 7.4C17 7.8 16.6 7.8 16.7 7.4C16.7 7 17.2 5.6 17.7 5C18.2 4.3 19.1 3.9 19.7 3.5C20.3 3 20.9 2.7 21.4 2.1C21.8 1.5 22.3 0.3 22.5 -0C22.6 -0.4 22.4 -0.4 22.4 -0C22.4 0.3 22.1 1.5 22.2 2.1C22.3 2.7 22.5 3.8 23 3.5C23.6 3.2 24.8 1.7 25.5 0.4C26.3 -0.9 27.1 -3.7 27.3 -4.5C27.5 -5.4 27.1 -5.4 26.8 -4.5C26.5 -3.7 25.7 -0.9 25.6 0.4C25.5 1.7 26 3.2 26.3 3.5C26.6 3.8 27.1 2.7 27.5 2.2C27.9 1.6 28.5 0.4 28.8 0.1C29 -0.3 29.1 -0.3 29.2 0.1C29.2 0.4 29.1 1.6 29.1 2.2C29.2 2.7 29.3 3 29.6 3.5C29.9 3.9 30.6 4.3 30.7 5C30.9 5.6 30.5 7 30.3 7.4C30.2 7.8 29.7 7.8 29.8 7.4C29.9 7 30.3 5.6 30.8 5C31.4 4.3 32.2 4.1 32.9 3.5C33.6 2.8 34.6 2 35.2 0.9C35.9 -0.2 36.6 -2.5 36.8 -3.2C36.9 -3.8 36.5 -3.8 36.3 -3.2C36 -2.5 35.4 -0.2 35.3 0.9C35.3 2 35.8 3.3 36.2 3.5C36.6 3.7 37.3 2.7 37.7 2.1C38.2 1.6 38.7 0.4 38.8 -0C39 -0.4 38.9 -0.4 38.9 -0C38.9 0.4 38.6 1.6 38.7 2.1C38.8 2.7 39.3 3.3 39.5 3.5" stroke="#242424" stroke-width="0.85" fill="none" stroke-linecap="round" stroke-linejoin="round" opacity="0.6"/></g>
<g transform="translate(118 723) rotate(-90)"><path d="M0 3C0.2 2.8 1 2.4 1.4 1.9C1.7 1.4 2.2 0.3 2.3 -0C2.5 -0.3 2.4 -0.3 2.4 -0C2.4 0.3 2.1 1.4 2.2 1.9C2.3 2.4 2.5 3 2.9 3C3.2 3 3.9 2.4 4.3 1.9C4.6 1.4 5.1 0.3 5.2 0C5.4 -0.3 5.3 -0.3 5.2 0C5.2 0.3 5 1.4 5.1 1.9C5.2 2.4 5.3 3.3 5.8 3C6.2 2.8 7.3 1.6 7.9 0.4C8.6 -0.7 9.3 -3.1 9.5 -3.9C9.7 -4.6 9.3 -4.6 9 -3.9C8.8 -3.1 8.1 -0.7 8 0.4C8 1.6 8.3 2.8 8.6 3C8.9 3.3 9.4 2.3 9.8 1.8C10.1 1.3 10.6 0.1 10.9 -0.2C11.1 -0.5 11.2 -0.5 11.2 -0.2C11.3 0.1 11.1 1.3 11.1 1.8C11.2 2.3 11.1 3.2 11.5 3C11.9 2.9 13 1.9 13.5 1C14.1 0.1 14.7 -1.8 14.8 -2.4C14.9 -3 14.6 -3 14.4 -2.4C14.2 -1.8 13.6 0.1 13.6 1C13.6 1.9 14 2.9 14.4 3C14.8 3.2 15.4 2.3 15.8 1.7C16.2 1.2 16.7 -0 16.8 -0.4C17 -0.7 16.9 -0.7 16.9 -0.4C16.8 -0 16.6 1.2 16.6 1.7C16.7 2.3 17 2.6 17.3 3C17.5 3.5 18.2 3.8 18.3 4.4C18.4 4.9 18 6.1 17.9 6.5C17.8 6.8 17.4 6.8 17.5 6.5C17.5 6.1 17.9 4.9 18.4 4.4C18.8 3.8 19.6 3.5 20.1 3C20.7 2.6 21.1 2.3 21.5 1.8C21.9 1.2 22.3 0.1 22.5 -0.2C22.7 -0.6 22.6 -0.6 22.6 -0.2C22.6 0.1 22.3 1.2 22.4 1.8C22.5 2.3 22.8 2.6 23 3C23.3 3.5 23.9 3.8 24 4.4C24.1 4.9 23.8 6.1 23.6 6.5C23.5 6.8 23.1 6.8 23.2 6.5C23.3 6.1 23.7 4.9 24.1 4.4C24.6 3.8 25.4 3 25.9 3C26.4 3 26.8 3.8 26.9 4.4C27 4.9 26.7 6.1 26.5 6.5C26.4 6.8 26 6.8 26.1 6.5C26.2 6.1 26.5 4.9 27 4.4C27.4 3.8 28.3 3.4 28.8 3C29.3 2.6 29.6 2.5 30 2C30.4 1.6 30.8 0.6 30.9 0.4C31.1 0.1 31.1 0.1 31.1 0.4C31.1 0.6 31 1.6 31 2C31.1 2.5 31.4 3.1 31.7 3C31.9 3 32.4 2.3 32.8 1.7C33.2 1.2 33.7 -0 33.9 -0.4C34.2 -0.8 34.3 -0.8 34.3 -0.4C34.4 -0 34.1 1.2 34.2 1.7C34.2 2.3 34.3 3 34.5 3C34.8 3.1 35.2 2.5 35.6 2.1C35.9 1.8 36.3 0.9 36.5 0.7C36.7 0.5 36.8 0.5 36.8 0.7C36.9 0.9 36.8 1.8 36.9 2.1C37 2.5 37.1 3.1 37.4 3C37.7 3 38.5 2.4 38.9 1.9C39.3 1.4 39.7 0.3 39.8 0C39.9 -0.3 39.7 -0.3 39.7 0C39.6 0.3 39.4 1.4 39.5 1.9C39.6 2.4 40 3 40.3 3C40.6 3.1 41.1 2.5 41.4 2.2C41.8 1.8 42.1 1 42.3 0.7C42.5 0.5 42.5 0.5 42.5 0.7C42.5 1 42.4 1.8 42.5 2.2C42.6 2.5 42.8 3.1 43.2 3C43.5 3 44.3 2.3 44.7 1.7C45.1 1.1 45.6 -0.1 45.7 -0.4C45.9 -0.8 45.6 -0.8 45.6 -0.4C45.5 -0.1 45.2 1.1 45.3 1.7C45.3 2.3 45.7 3 46 3C46.3 3.1 46.8 2.4 47.1 2C47.5 1.5 47.9 0.5 48.1 0.2C48.4 -0.1 48.4 -0.1 48.5 0.2C48.5 0.5 48.4 1.5 48.5 2C48.5 2.4 48.7 3 48.9 3C49.2 3.1 49.7 2.5 50 2.1C50.3 1.6 50.7 0.7 51 0.5C51.2 0.2 51.2 0.2 51.3 0.5C51.3 0.7 51.2 1.6 51.3 2.1C51.4 2.5 51.7 2.9 51.8 3" stroke="#242424" stroke-width="0.85" fill="none" stroke-linecap="round" stroke-linejoin="round" opacity="0.6"/></g>
<g transform="translate(132 711) rotate(-90)"><path d="M0 3C0.4 2.6 1.9 1.6 2.6 0.5C3.2 -0.6 3.8 -2.9 3.9 -3.6C4 -4.3 3.3 -4.3 3 -3.6C2.6 -2.9 1.8 -0.6 1.8 0.5C1.8 1.6 2.5 2.8 2.9 3C3.3 3.3 3.9 2.5 4.3 2.1C4.6 1.7 5 0.9 5.1 0.6C5.2 0.4 5 0.4 5 0.6C5 0.9 4.8 1.7 4.9 2.1C5 2.5 5.3 3.2 5.8 3C6.2 2.8 7.2 1.9 7.8 1C8.3 0.1 8.9 -1.8 9 -2.4C9.2 -2.9 8.8 -2.9 8.6 -2.4C8.4 -1.8 7.8 0.1 7.9 1C7.9 1.9 8.3 2.9 8.6 3C9 3.2 9.6 2.5 10 2C10.4 1.6 10.7 0.7 10.9 0.4C11 0.2 10.9 0.2 10.8 0.4C10.8 0.7 10.6 1.6 10.8 2C10.9 2.5 11 3.2 11.5 3C12 2.9 13 1.9 13.5 0.9C14.1 0 14.7 -1.9 14.8 -2.4C14.9 -3 14.6 -3 14.4 -2.4C14.2 -1.9 13.6 0 13.6 0.9C13.6 1.9 14 2.9 14.4 3C14.8 3.2 15.5 2.4 15.9 1.8C16.3 1.3 16.7 0.2 16.8 -0.1C17 -0.5 16.8 -0.5 16.7 -0.1C16.7 0.2 16.4 1.3 16.5 1.8C16.6 2.4 16.9 3 17.3 3C17.6 3.1 18.2 2.5 18.5 2.1C18.9 1.7 19.3 0.9 19.4 0.6C19.6 0.4 19.4 0.4 19.4 0.6C19.4 0.9 19.3 1.7 19.4 2.1C19.5 2.5 19.8 3.1 20.1 3C20.5 3 21.2 2.4 21.6 1.9C22 1.5 22.4 0.5 22.5 0.2C22.6 -0.1 22.4 -0.1 22.4 0.2C22.3 0.5 22.1 1.5 22.2 1.9C22.3 2.4 22.7 2.6 23 3C23.3 3.4 23.9 3.8 24 4.4C24.1 4.9 23.8 6.1 23.6 6.5C23.5 6.8 23.1 6.8 23.2 6.5C23.3 6.1 23.7 4.9 24.1 4.4C24.6 3.8 25.4 3.5 25.9 3C26.4 2.6 26.6 2.4 27 1.8C27.3 1.3 27.8 0.2 28.1 -0.1C28.3 -0.5 28.4 -0.5 28.5 -0.1C28.5 0.2 28.4 1.3 28.4 1.8C28.5 2.4 28.4 3.3 28.8 3C29.2 2.8 30.3 1.6 31 0.4C31.6 -0.7 32.3 -3.1 32.5 -3.8C32.7 -4.5 32.3 -4.5 32 -3.8C31.8 -3.1 31.1 -0.7 31 0.4C31 1.6 31.4 2.8 31.7 3C31.9 3.3 32.4 2.5 32.8 2.1C33.1 1.7 33.5 0.9 33.7 0.6C33.9 0.4 33.9 0.4 33.9 0.6C34 0.9 33.8 1.7 33.9 2.1C34 2.5 34.2 3 34.5 3C34.9 3 35.6 2.5 35.9 2.1C36.3 1.7 36.6 0.8 36.8 0.5C36.9 0.3 36.7 0.3 36.7 0.5C36.6 0.8 36.5 1.7 36.6 2.1C36.7 2.5 37.1 3 37.4 3C37.7 3 38.2 2.5 38.6 2.1C38.9 1.7 39.3 0.9 39.5 0.7C39.6 0.4 39.6 0.4 39.7 0.7C39.7 0.9 39.6 1.7 39.7 2.1C39.8 2.5 40.2 2.9 40.3 3" stroke="#242424" stroke-width="0.85" fill="none" stroke-linecap="round" stroke-linejoin="round" opacity="0.75"/></g>
<g transform="translate(143 772) rotate(-90)"><path d="M0 3.9C0.6 3.3 2.5 1.9 3.4 0.3C4.3 -1.3 5.2 -4.7 5.3 -5.6C5.4 -6.6 4.6 -6.6 4.1 -5.6C3.6 -4.7 2.5 -1.3 2.5 0.3C2.4 1.9 3.3 3 3.7 3.9C4.1 4.8 4.9 4.9 5 5.6C5.1 6.3 4.7 7.9 4.5 8.3C4.3 8.8 3.8 8.8 3.9 8.3C4 7.9 4.5 6.3 5.1 5.6C5.7 4.9 6.7 4.4 7.4 3.9C8.1 3.4 8.5 3.1 9 2.4C9.5 1.7 10.1 0.4 10.3 -0C10.6 -0.4 10.5 -0.4 10.5 -0C10.5 0.4 10.3 1.7 10.4 2.4C10.5 3.1 10.7 3.9 11.1 3.9C11.5 3.9 12.5 3 13.1 2.3C13.6 1.6 14.1 0.1 14.3 -0.3C14.5 -0.7 14.2 -0.7 14.1 -0.3C14 0.1 13.7 1.6 13.8 2.3C13.9 3 14.4 3.9 14.8 3.9C15.2 3.9 15.9 3.1 16.3 2.4C16.8 1.8 17.4 0.5 17.6 0.1C17.9 -0.3 17.9 -0.3 18 0.1C18 0.5 17.8 1.8 17.8 2.4C17.9 3.1 17.9 4.3 18.5 3.9C19.1 3.5 20.6 1.8 21.4 0.2C22.3 -1.5 23.3 -4.9 23.6 -5.9C23.8 -6.9 23.3 -6.9 23 -5.9C22.7 -4.9 21.7 -1.5 21.5 0.2C21.4 1.8 21.8 3.6 22.2 3.9C22.6 4.3 23.3 3 23.8 2.3C24.3 1.6 24.9 0.1 25.2 -0.3C25.5 -0.8 25.4 -0.8 25.5 -0.3C25.5 0.1 25.2 1.6 25.3 2.3C25.3 3 25.5 3.9 25.9 3.9C26.3 3.9 27.3 2.9 27.8 2.2C28.4 1.4 28.9 -0.1 29.1 -0.6C29.3 -1 29.1 -1 29 -0.6C29 -0.1 28.6 1.4 28.7 2.2C28.8 2.9 29.2 3.8 29.6 3.9C30 4 30.7 3.2 31.2 2.6C31.6 2 32.1 0.8 32.4 0.5C32.6 0.1 32.6 0.1 32.6 0.5C32.6 0.8 32.4 2 32.5 2.6C32.6 3.2 33.2 3.7 33.3 3.9M41 3.9C41.6 3.3 43.5 1.9 44.4 0.4C45.3 -1.2 46.1 -4.4 46.3 -5.3C46.4 -6.3 45.5 -6.3 45 -5.3C44.6 -4.4 43.5 -1.2 43.5 0.4C43.4 1.9 44.2 3.6 44.7 3.9C45.2 4.2 45.8 3 46.3 2.3C46.8 1.6 47.4 0.1 47.7 -0.3C48 -0.8 48 -0.8 48 -0.3C48 0.1 47.7 1.6 47.8 2.3C47.9 3 47.9 4.1 48.4 3.9C49 3.7 50.4 2.3 51.1 1C51.8 -0.3 52.7 -3 52.9 -3.8C53.1 -4.5 52.6 -4.5 52.3 -3.8C52 -3 51.2 -0.3 51.2 1C51.2 2.3 51.7 3.7 52.1 3.9C52.6 4.1 53.5 3.1 54 2.4C54.5 1.8 55 0.4 55.2 0C55.4 -0.4 55.1 -0.4 55.1 0C55 0.4 54.7 1.8 54.9 2.4C55 3.1 55.4 3.9 55.8 3.9C56.3 4 57.1 3.3 57.6 2.8C58 2.2 58.5 1.2 58.6 0.9C58.8 0.6 58.6 0.6 58.5 0.9C58.5 1.2 58.3 2.2 58.5 2.8C58.6 3.3 59 4 59.5 3.9C60 3.8 60.8 3 61.3 2.3C61.8 1.5 62.4 0 62.6 -0.4C62.9 -0.9 62.7 -0.9 62.7 -0.4C62.7 0 62.4 1.5 62.5 2.3C62.5 3 62.9 3.3 63.2 3.9C63.6 4.5 64.4 4.9 64.5 5.6C64.6 6.3 64.2 7.9 64 8.3C63.8 8.8 63.4 8.8 63.5 8.3C63.6 7.9 64 6.3 64.6 5.6C65.2 4.9 66.5 4.2 66.9 3.9M74.5 3.9C75.1 3.3 77 1.8 77.9 0.2C78.8 -1.4 79.8 -4.8 79.9 -5.8C80 -6.8 79.1 -6.8 78.7 -5.8C78.2 -4.8 77.1 -1.4 77 0.2C76.9 1.8 77.8 3 78.2 3.9C78.6 4.8 79.4 4.9 79.5 5.6C79.6 6.3 79.2 7.9 79 8.3C78.8 8.8 78.3 8.8 78.4 8.3C78.5 7.9 79 6.3 79.6 5.6C80.2 4.9 81.1 4.7 81.9 3.9C82.8 3.1 83.9 2.1 84.7 0.7C85.5 -0.8 86.4 -3.7 86.6 -4.6C86.8 -5.5 86.3 -5.5 86 -4.6C85.7 -3.7 84.9 -0.8 84.8 0.7C84.7 2.1 85.2 3.6 85.6 3.9C86 4.2 86.9 3.2 87.3 2.7C87.8 2.1 88.3 1 88.5 0.6C88.6 0.3 88.4 0.3 88.4 0.6C88.4 1 88.2 2.1 88.3 2.7C88.5 3.2 88.9 3.9 89.3 3.9C89.7 3.9 90.5 3.2 91 2.6C91.4 2.1 91.9 0.9 92.1 0.6C92.3 0.2 92.2 0.2 92.2 0.6C92.2 0.9 92 2.1 92.1 2.6C92.2 3.2 92.6 3.9 93 3.9C93.4 3.9 94 3.1 94.5 2.5C94.9 1.9 95.5 0.6 95.8 0.2C96.1 -0.2 96.1 -0.2 96.1 0.2C96.2 0.6 96 1.9 96.1 2.5C96.2 3.1 96.4 3.4 96.7 3.9C97 4.4 97.9 4.9 98 5.6C98.1 6.3 97.7 7.9 97.5 8.3C97.3 8.8 96.8 8.8 96.9 8.3C97 7.9 97.5 6.3 98.1 5.6C98.7 4.9 99.7 4.5 100.4 3.9C101.1 3.4 101.6 3 102.1 2.3C102.6 1.6 103.2 0.1 103.4 -0.3C103.7 -0.7 103.6 -0.7 103.6 -0.3C103.6 0.1 103.3 1.6 103.4 2.3C103.5 3 103.5 4.2 104.1 3.9C104.7 3.6 106.1 1.9 107 0.4C107.8 -1.2 108.8 -4.4 109 -5.4C109.3 -6.3 108.8 -6.3 108.5 -5.4C108.1 -4.4 107.2 -1.2 107.1 0.4C107 1.9 107.4 3.5 107.8 3.9C108.2 4.3 109 3.2 109.4 2.6C109.9 2.1 110.4 0.9 110.6 0.6C110.8 0.2 110.7 0.2 110.7 0.6C110.7 0.9 110.5 2.1 110.6 2.6C110.8 3.2 111.4 3.7 111.5 3.9M119.3 3.9C119.8 3.3 121.8 2 122.6 0.4C123.5 -1.1 124.3 -4.2 124.4 -5.2C124.5 -6.1 123.7 -6.1 123.2 -5.2C122.8 -4.2 121.7 -1.1 121.7 0.4C121.6 2 122.5 3.5 123 3.9C123.4 4.3 123.9 3.2 124.4 2.7C124.8 2.1 125.3 1 125.6 0.7C125.9 0.3 125.9 0.3 126 0.7C126 1 125.9 2.1 126 2.7C126.1 3.2 126.1 4.3 126.7 3.9C127.2 3.5 128.7 2 129.5 0.5C130.3 -1 131.2 -4.1 131.5 -5.1C131.7 -6 131.2 -6 130.9 -5.1C130.6 -4.1 129.7 -1 129.6 0.5C129.5 2 130 3.1 130.4 3.9C130.7 4.8 131.5 4.9 131.6 5.6C131.8 6.3 131.3 7.9 131.2 8.3C131 8.8 130.5 8.8 130.6 8.3C130.7 7.9 131.2 6.3 131.8 5.6C132.3 4.9 133.4 4.4 134.1 3.9C134.7 3.4 135.2 3.1 135.7 2.5C136.2 1.9 136.7 0.7 136.9 0.3C137.1 -0 137 -0 137.1 0.3C137.1 0.7 136.8 1.9 136.9 2.5C137.1 3.1 137.2 4.1 137.8 3.9C138.3 3.7 139.7 2.4 140.4 1.2C141.1 0.1 141.8 -2.4 142 -3.1C142.2 -3.8 141.7 -3.8 141.4 -3.1C141.2 -2.4 140.5 0.1 140.5 1.2C140.5 2.4 141.3 3.5 141.5 3.9" stroke="#242424" stroke-width="1.02" fill="none" stroke-linecap="round" stroke-linejoin="round" opacity="0.75"/><path d="M-2 -15 Q4 -6 10 4" stroke="#242424" stroke-width="0.918" fill="none" stroke-linecap="round" opacity="0.7"/></g>
<g transform="translate(155 702) rotate(-90)"><path d="M0 3.5C0.5 2.9 2.2 1.6 3 0.2C3.8 -1.2 4.6 -4.1 4.7 -5C4.8 -5.9 4.1 -5.9 3.6 -5C3.2 -4.1 2.3 -1.2 2.2 0.2C2.1 1.6 2.7 3.4 3.3 3.5C3.9 3.5 5.1 1.8 5.8 0.5C6.5 -0.7 7.3 -3.4 7.5 -4.2C7.7 -5 7.3 -5 7 -4.2C6.7 -3.4 5.9 -0.7 5.9 0.5C5.8 1.8 6.3 2.7 6.6 3.5C6.9 4.2 7.6 4.3 7.7 5C7.8 5.6 7.4 7 7.3 7.4C7.1 7.8 6.7 7.8 6.8 7.4C6.9 7 7.3 5.6 7.8 5C8.3 4.3 9.3 3.9 9.9 3.5C10.4 3.1 10.6 2.9 11 2.5C11.4 2 11.8 1.1 12.1 0.8C12.3 0.5 12.4 0.5 12.5 0.8C12.6 1.1 12.5 2 12.6 2.5C12.7 2.9 12.8 3.5 13.2 3.5C13.5 3.4 14.2 2.6 14.7 2C15.1 1.4 15.7 0 15.9 -0.4C16.1 -0.8 16 -0.8 16 -0.4C16 0 15.7 1.4 15.8 2C15.9 2.6 16.3 3.2 16.4 3.5M22.3 3.5C22.8 3 24.5 1.8 25.2 0.4C26 -0.9 26.8 -3.7 26.8 -4.5C26.9 -5.3 26.2 -5.3 25.8 -4.5C25.3 -3.7 24.4 -0.9 24.4 0.4C24.4 1.8 25.1 3.2 25.5 3.5C26 3.7 26.8 2.7 27.2 2.1C27.7 1.4 28.2 0.2 28.3 -0.2C28.5 -0.6 28.3 -0.6 28.3 -0.2C28.2 0.2 27.9 1.4 28 2.1C28.1 2.7 28.5 3.4 28.8 3.5C29.2 3.5 29.6 2.8 30 2.3C30.4 1.8 30.9 0.8 31.1 0.5C31.4 0.2 31.5 0.2 31.6 0.5C31.7 0.8 31.5 1.8 31.6 2.3C31.7 2.8 31.6 3.7 32.1 3.5C32.6 3.2 33.8 2.1 34.5 1C35.1 -0.1 35.8 -2.4 36 -3.1C36.2 -3.8 35.7 -3.8 35.5 -3.1C35.3 -2.4 34.6 -0.1 34.6 1C34.6 2.1 34.9 3.5 35.4 3.5C35.9 3.5 37.1 2.1 37.7 1.1C38.3 0 39 -2.1 39.2 -2.8C39.3 -3.4 38.9 -3.4 38.7 -2.8C38.5 -2.1 37.8 0 37.8 1.1C37.8 2.1 38.3 3.3 38.7 3.5C39.1 3.6 39.7 2.6 40.2 2C40.6 1.4 41.2 0 41.4 -0.4C41.6 -0.8 41.6 -0.8 41.6 -0.4C41.6 0 41.3 1.4 41.4 2C41.4 2.6 41.9 3.2 42 3.5M49 3.5C49.5 2.9 51.3 1.7 52.1 0.3C52.8 -1 53.6 -3.9 53.7 -4.7C53.8 -5.6 53 -5.6 52.6 -4.7C52.2 -3.9 51.3 -1 51.2 0.3C51.2 1.7 51.9 3.1 52.3 3.5C52.8 3.8 53.6 2.9 54 2.4C54.4 1.9 54.8 1 54.9 0.7C55 0.4 54.8 0.4 54.7 0.7C54.7 1 54.5 1.9 54.6 2.4C54.8 2.9 55.3 3 55.6 3.5C56 3.9 56.6 4.3 56.8 5C56.9 5.6 56.5 7 56.3 7.4C56.2 7.8 55.7 7.8 55.8 7.4C55.9 7 56.4 5.6 56.9 5C57.4 4.3 58.6 3.7 58.9 3.5" stroke="#242424" stroke-width="0.85" fill="none" stroke-linecap="round" stroke-linejoin="round" opacity="0.52"/></g>
<path d="M180 674.2C180.9 673.2 184 670.8 185.4 668.3C186.8 665.7 188.3 660.3 188.5 658.7C188.7 657.2 187.3 657.2 186.6 658.7C185.8 660.3 184.1 665.7 183.9 668.3C183.8 670.8 185.1 673.5 185.8 674.2C186.6 674.8 187.6 672.9 188.3 672C189.1 671.1 189.9 669.1 190.3 668.5C190.7 667.9 190.6 667.9 190.6 668.5C190.6 669.1 190.3 671.1 190.4 672C190.6 672.9 190.7 674.8 191.7 674.2C192.6 673.5 194.9 670.9 196.3 668.3C197.6 665.7 199.2 660.4 199.6 658.8C200.1 657.2 199.3 657.2 198.7 658.8C198.2 660.4 196.6 665.7 196.4 668.3C196.2 670.9 197 673.5 197.5 674.2C198 674.8 198.9 673 199.6 672.2C200.3 671.3 201.1 669.5 201.6 669C202.1 668.4 202.2 668.4 202.4 669C202.5 669.5 202.3 671.3 202.5 672.2C202.6 673 202.9 673.4 203.3 674.2C203.8 674.9 205.2 675.7 205.4 676.8C205.6 678 204.9 680.4 204.6 681.1C204.3 681.9 203.6 681.9 203.7 681.1C203.9 680.4 204.6 678 205.5 676.8C206.4 675.7 208.1 675 209.2 674.2C210.3 673.3 211.4 672.7 212.3 671.5C213.1 670.4 214 668 214.3 667.3C214.6 666.6 214.2 666.6 214 667.3C213.9 668 213.3 670.4 213.5 671.5C213.7 672.7 214.3 674 215 674.2C215.7 674.3 217 673.1 217.7 672.3C218.5 671.5 219.1 669.9 219.4 669.4C219.7 668.9 219.3 668.9 219.3 669.4C219.3 669.9 218.9 671.5 219.2 672.3C219.5 673.1 220.1 674.3 220.8 674.2C221.6 674.1 223.1 672.8 223.9 671.8C224.8 670.7 225.5 668.5 225.8 667.9C226.1 667.3 225.6 667.3 225.5 667.9C225.3 668.5 224.8 670.7 225 671.8C225.2 672.8 226.4 673.8 226.7 674.2" stroke="#242424" stroke-width="1.2000000000000002" fill="none" stroke-linecap="round" stroke-linejoin="round"/>
<g transform="translate(246 707) rotate(-90)"><path d="M0 2.6C0.4 2.2 1.7 1.2 2.3 0.1C2.9 -1 3.5 -3.2 3.6 -3.9C3.7 -4.6 3.1 -4.6 2.8 -3.9C2.5 -3.2 1.7 -1 1.7 0.1C1.6 1.2 2.1 2.3 2.5 2.6C2.8 2.9 3.3 2.1 3.6 1.7C3.9 1.4 4.2 0.6 4.4 0.3C4.5 0.1 4.4 0.1 4.4 0.3C4.4 0.6 4.3 1.4 4.3 1.7C4.4 2.1 4.7 2.6 4.9 2.6C5.2 2.6 5.6 2.2 5.9 1.8C6.2 1.5 6.5 0.7 6.7 0.5C6.9 0.3 6.9 0.3 6.9 0.5C6.9 0.7 6.8 1.5 6.9 1.8C7 2.2 7.2 2.3 7.4 2.6C7.6 2.9 8.2 3.2 8.3 3.7C8.3 4.2 8.1 5.3 7.9 5.6C7.8 5.9 7.5 5.9 7.6 5.6C7.6 5.3 7.9 4.2 8.3 3.7C8.7 3.2 9.3 3.1 9.9 2.6C10.4 2.1 11.2 1.4 11.7 0.5C12.2 -0.4 12.8 -2.4 12.9 -2.9C13.1 -3.5 12.8 -3.5 12.6 -2.9C12.4 -2.4 11.8 -0.4 11.8 0.5C11.7 1.4 11.9 2.6 12.3 2.6C12.7 2.6 13.6 1.5 14.1 0.7C14.6 -0.2 15.1 -1.9 15.3 -2.5C15.4 -3 15.1 -3 14.9 -2.5C14.7 -1.9 14.2 -0.2 14.2 0.7C14.2 1.5 14.4 2.7 14.8 2.6C15.2 2.5 16.1 1.3 16.7 0.3C17.2 -0.6 17.8 -2.7 18 -3.3C18.2 -3.9 17.8 -3.9 17.6 -3.3C17.4 -2.7 16.8 -0.6 16.7 0.3C16.7 1.3 16.9 2.6 17.3 2.6C17.7 2.6 18.6 1.3 19.1 0.3C19.7 -0.7 20.3 -2.8 20.5 -3.4C20.6 -4 20.3 -4 20.1 -3.4C19.9 -2.8 19.3 -0.7 19.2 0.3C19.2 1.3 19.6 2.2 19.7 2.6" stroke="#242424" stroke-width="0.85" fill="none" stroke-linecap="round" stroke-linejoin="round" opacity="0.6"/></g>
<path d="M260 686.7C261.1 685.3 264.9 681.8 266.9 678C268.8 674.2 271.3 666.3 271.9 664C272.5 661.6 271.3 661.6 270.5 664C269.7 666.3 267.4 674.2 267.1 678C266.8 681.8 268 684.6 268.8 686.7C269.5 688.9 271.5 689 271.8 690.7C272.1 692.5 271.1 696.1 270.7 697.2C270.2 698.3 269.1 698.3 269.3 697.2C269.6 696.1 270.7 692.5 272.1 690.7C273.4 689 275.8 688.1 277.5 686.7C279.2 685.4 280.8 684.5 282.1 682.8C283.4 681.1 284.7 677.6 285.1 676.5C285.5 675.5 285 675.5 284.8 676.5C284.6 677.6 283.8 681.1 284 682.8C284.2 684.5 285.9 686.1 286.3 686.7" stroke="#242424" stroke-width="0.96" fill="none" stroke-linecap="round" stroke-linejoin="round"/>
<path d="M316 633.3C316.7 632.6 319 631 320 629.3C321 627.6 322 624 322.1 622.9C322.2 621.8 321.2 621.8 320.6 622.9C320.1 624 318.9 627.6 318.9 629.3C318.8 631 319.9 632.9 320.5 633.3C321.1 633.6 322 632.1 322.7 631.3C323.3 630.4 324 628.6 324.3 628C324.6 627.5 324.4 627.5 324.4 628C324.3 628.6 323.9 630.4 324 631.3C324.1 632.1 324.3 633.5 325 633.3C325.7 633 327.4 631.2 328.3 629.6C329.2 628 330.2 624.6 330.5 623.6C330.8 622.7 330.2 622.7 329.8 623.6C329.5 624.6 328.5 628 328.4 629.6C328.4 631.2 329 632.9 329.5 633.3C330.1 633.6 331 632.3 331.6 631.5C332.2 630.8 332.8 629.2 333.1 628.7C333.4 628.3 333.2 628.3 333.2 628.7C333.1 629.2 332.8 630.8 333 631.5C333.1 632.3 333.3 633.6 334 633.3C334.7 633 336.4 631.3 337.3 629.7C338.2 628.2 339.2 625 339.4 624.1C339.6 623.1 339 623.1 338.7 624.1C338.4 625 337.4 628.2 337.4 629.7C337.4 631.3 337.8 633.4 338.5 633.3C339.3 633.1 341 630.9 342 629.1C343 627.2 344.1 623.4 344.4 622.3C344.7 621.2 344.1 621.2 343.7 622.3C343.4 623.4 342.2 627.2 342.1 629.1C342 630.9 342.4 633.1 343.1 633.3C343.7 633.4 345.4 631.3 346.3 629.9C347.1 628.4 348.1 625.3 348.3 624.3C348.6 623.4 348 623.4 347.6 624.3C347.3 625.3 346.4 628.4 346.4 629.9C346.4 631.3 347 633 347.6 633.3C348.1 633.6 348.9 632.4 349.4 631.7C350 631 350.6 629.6 350.9 629.2C351.2 628.7 351.1 628.7 351.2 629.2C351.2 629.6 351 631 351.1 631.7C351.3 632.4 351.9 633 352.1 633.3" stroke="#242424" stroke-width="1.36" fill="none" stroke-linecap="round" stroke-linejoin="round"/>
<path d="M312 647.9C312.6 647.3 314.5 645.8 315.4 644.2C316.3 642.6 317.2 639.3 317.4 638.3C317.5 637.3 316.6 637.3 316.1 638.3C315.7 639.3 314.6 642.6 314.5 644.2C314.4 645.8 315.2 647.5 315.7 647.9C316.2 648.3 316.8 647.2 317.3 646.7C317.8 646.1 318.2 645 318.5 644.7C318.7 644.4 318.6 644.4 318.6 644.7C318.6 645 318.4 646.1 318.6 646.7C318.7 647.2 319 648 319.4 647.9C319.8 647.8 320.4 647 320.9 646.2C321.4 645.5 322.1 644 322.4 643.5C322.7 643.1 322.8 643.1 322.8 643.5C322.9 644 322.6 645.5 322.7 646.2C322.7 647 322.8 647.8 323.1 647.9C323.5 648 324.5 647.3 324.9 646.8C325.4 646.2 325.8 645.2 326 644.9C326.1 644.6 325.9 644.6 325.8 644.9C325.8 645.2 325.6 646.2 325.7 646.8C325.9 647.3 326.4 647.9 326.9 647.9C327.3 647.9 328 647.2 328.4 646.7C328.9 646.1 329.4 645 329.6 644.6C329.8 644.3 329.8 644.3 329.8 644.6C329.8 645 329.6 646.1 329.7 646.7C329.9 647.2 330.2 647.9 330.6 647.9C330.9 647.9 331.5 647.2 332 646.6C332.4 646.1 333 644.9 333.2 644.5C333.5 644.2 333.6 644.2 333.6 644.5C333.7 644.9 333.5 646.1 333.6 646.6C333.7 647.2 333.8 648 334.3 647.9C334.7 647.8 335.8 646.9 336.3 646.2C336.9 645.4 337.4 643.9 337.6 643.4C337.8 642.9 337.5 642.9 337.4 643.4C337.3 643.9 336.9 645.4 337 646.2C337.1 646.9 337.6 647.8 338 647.9C338.4 648 339 647.2 339.4 646.7C339.9 646.2 340.4 645.1 340.6 644.8C340.9 644.5 340.9 644.5 340.9 644.8C341 645.1 340.8 646.2 341 646.7C341.1 647.2 341.3 647.9 341.7 647.9C342.1 647.9 342.9 647.3 343.4 646.8C343.9 646.2 344.3 645.2 344.5 644.9C344.7 644.6 344.5 644.6 344.5 644.9C344.5 645.2 344.3 646.2 344.4 646.8C344.6 647.3 345 648 345.4 647.9C345.8 647.8 346.4 646.9 346.9 646.2C347.4 645.4 348 643.9 348.4 643.4C348.7 642.9 348.8 642.9 348.9 643.4C348.9 643.9 348.7 645.4 348.7 646.2C348.8 646.9 348.8 647.9 349.1 647.9C349.4 648 350.1 647.2 350.5 646.6C351 646 351.5 644.8 351.8 644.4C352.1 644.1 352.2 644.1 352.2 644.4C352.3 644.8 352.1 646 352.2 646.6C352.3 647.2 352.3 648.3 352.8 647.9C353.4 647.5 354.9 645.9 355.7 644.3C356.5 642.8 357.5 639.5 357.8 638.5C358 637.6 357.6 637.6 357.2 638.5C356.9 639.5 355.9 642.8 355.8 644.3C355.7 645.9 356.4 647.3 356.6 647.9" stroke="#242424" stroke-width="1.2000000000000002" fill="none" stroke-linecap="round" stroke-linejoin="round"/>
<path d="M306 667.1C306.2 666.9 307 666.3 307.4 665.6C307.9 664.9 308.5 663.5 308.8 663.1C309.1 662.6 309.1 662.6 309.1 663.1C309.1 663.5 308.9 664.9 308.9 665.6C309 666.3 309.1 667.1 309.4 667.1C309.7 667.2 310.3 666.5 310.7 666C311.1 665.5 311.6 664.5 311.9 664.2C312.1 663.9 312.2 663.9 312.2 664.2C312.3 664.5 312.2 665.5 312.3 666C312.4 666.5 312.6 667.2 312.9 667.1C313.2 667.1 313.8 666.3 314.3 665.7C314.7 665.1 315.3 663.7 315.6 663.3C315.9 663 315.9 663 315.9 663.3C316 663.7 315.7 665.1 315.8 665.7C315.9 666.3 315.8 667.3 316.3 667.1C316.8 667 318.1 665.7 318.8 664.6C319.4 663.5 320.2 661.2 320.3 660.5C320.5 659.8 320 659.8 319.8 660.5C319.6 661.2 318.9 663.5 318.9 664.6C318.9 665.7 319.4 666.9 319.8 667.1C320.2 667.3 320.8 666.4 321.2 665.8C321.6 665.2 322.2 664 322.4 663.7C322.7 663.3 322.7 663.3 322.7 663.7C322.7 664 322.5 665.2 322.6 665.8C322.7 666.4 322.9 666.7 323.2 667.1C323.5 667.6 324.3 668 324.4 668.7C324.6 669.4 324.1 670.8 324 671.3C323.8 671.7 323.4 671.7 323.5 671.3C323.6 670.8 324 669.4 324.5 668.7C325.1 668 326.3 667.4 326.7 667.1M332.9 667.1C333.2 666.9 333.9 666.4 334.3 665.8C334.8 665.2 335.3 663.9 335.6 663.5C335.8 663.2 335.9 663.2 335.9 663.5C336 663.9 335.8 665.2 335.8 665.8C335.9 666.4 335.8 667.4 336.4 667.1C336.9 666.8 338.3 665.3 339 663.9C339.8 662.5 340.7 659.6 340.9 658.7C341.1 657.8 340.7 657.8 340.4 658.7C340.1 659.6 339.2 662.5 339.1 663.9C339 665.3 339.5 666.8 339.8 667.1C340.2 667.4 340.7 666.3 341.2 665.7C341.6 665 342.2 663.7 342.5 663.3C342.8 662.9 342.9 662.9 342.9 663.3C343 663.7 342.8 665 342.8 665.7C342.9 666.3 342.9 667.1 343.3 667.1C343.6 667.2 344.5 666.4 345 665.9C345.4 665.4 345.9 664.2 346 663.9C346.2 663.6 346 663.6 345.9 663.9C345.9 664.2 345.6 665.4 345.8 665.9C345.9 666.4 346.4 667.2 346.7 667.1C347.1 667.1 347.6 666.4 348 665.8C348.4 665.2 349 664 349.3 663.7C349.5 663.3 349.7 663.3 349.7 663.7C349.8 664 349.6 665.2 349.7 665.8C349.8 666.4 349.8 667.1 350.2 667.1C350.5 667.1 351.4 666.4 351.9 665.8C352.4 665.2 352.8 664 353 663.7C353.1 663.3 352.9 663.3 352.9 663.7C352.8 664 352.6 665.2 352.7 665.8C352.8 666.4 353.3 666.7 353.6 667.1C354 667.6 354.7 668 354.8 668.7C354.9 669.4 354.5 670.8 354.4 671.3C354.2 671.7 353.8 671.7 353.8 671.3C353.9 670.8 354.4 669.4 354.9 668.7C355.5 668 356.5 667.1 357.1 667.1C357.6 667.1 358.1 668 358.3 668.7C358.4 669.4 358 670.8 357.8 671.3C357.7 671.7 357.2 671.7 357.3 671.3C357.4 670.8 357.8 669.4 358.4 668.7C358.9 668 359.9 667.6 360.5 667.1C361.1 666.7 361.4 666.4 361.8 665.9C362.3 665.3 362.8 664.2 363 663.8C363.3 663.5 363.4 663.5 363.4 663.8C363.5 664.2 363.3 665.3 363.4 665.9C363.5 666.4 363.9 666.9 364 667.1" stroke="#242424" stroke-width="0.7200000000000001" fill="none" stroke-linecap="round" stroke-linejoin="round"/>
<path d="M314 681.8C314.4 681.4 315.8 680.5 316.4 679.5C316.9 678.5 317.5 676.4 317.6 675.8C317.6 675.2 317 675.2 316.7 675.8C316.4 676.4 315.7 678.5 315.7 679.5C315.7 680.5 316.3 681.6 316.7 681.8C317 682 317.5 681.2 317.8 680.8C318.2 680.4 318.5 679.5 318.7 679.2C318.9 678.9 318.8 678.9 318.8 679.2C318.8 679.5 318.6 680.4 318.7 680.8C318.8 681.2 318.9 682 319.3 681.8C319.7 681.6 320.8 680.4 321.3 679.3C321.9 678.3 322.6 676 322.8 675.3C322.9 674.7 322.6 674.7 322.4 675.3C322.1 676 321.5 678.3 321.4 679.3C321.3 680.4 321.7 681.6 322 681.8C322.2 682 322.7 681.1 323.1 680.6C323.5 680.1 323.9 679 324.1 678.7C324.3 678.4 324.3 678.4 324.3 678.7C324.3 679 324.1 680.1 324.2 680.6C324.2 681.1 324.3 681.8 324.6 681.8C324.9 681.8 325.5 681.3 325.9 680.8C326.2 680.4 326.6 679.5 326.7 679.3C326.8 679 326.7 679 326.7 679.3C326.7 679.5 326.5 680.4 326.6 680.8C326.7 681.3 326.8 682.1 327.3 681.8C327.7 681.5 328.7 680.3 329.3 679.2C329.9 678.1 330.6 675.7 330.8 675C331 674.3 330.7 674.3 330.4 675C330.2 675.7 329.5 678.1 329.4 679.2C329.3 680.3 329.6 681.5 329.9 681.8C330.2 682.1 330.7 681.2 331.1 680.8C331.4 680.3 331.8 679.4 332 679.1C332.2 678.8 332.1 678.8 332.1 679.1C332.1 679.4 331.9 680.3 332 680.8C332.1 681.2 332.3 681.8 332.6 681.8C332.8 681.8 333.2 681.2 333.5 680.8C333.9 680.3 334.3 679.4 334.5 679.1C334.7 678.8 334.8 678.8 334.9 679.1C334.9 679.4 334.8 680.3 334.9 680.8C334.9 681.2 335 681.8 335.2 681.8C335.4 681.8 335.9 681.3 336.2 680.9C336.5 680.5 336.9 679.7 337.1 679.4C337.3 679.2 337.3 679.2 337.4 679.4C337.4 679.7 337.3 680.5 337.4 680.9C337.5 681.3 337.5 682 337.9 681.8C338.3 681.6 339.3 680.6 339.8 679.7C340.3 678.8 340.9 676.9 341 676.3C341.2 675.8 340.8 675.8 340.6 676.3C340.4 676.9 339.9 678.8 339.9 679.7C339.8 680.6 340.3 681.6 340.5 681.8C340.8 682 341.2 681.3 341.5 681C341.8 680.6 342.1 679.9 342.3 679.6C342.5 679.4 342.6 679.4 342.7 679.6C342.7 679.9 342.6 680.6 342.7 681C342.8 681.3 342.9 681.8 343.2 681.8C343.4 681.8 343.8 681.3 344.1 680.9C344.4 680.5 344.8 679.7 345 679.5C345.2 679.2 345.3 679.2 345.4 679.5C345.5 679.7 345.4 680.5 345.4 680.9C345.5 681.3 345.6 681.8 345.8 681.8C346.1 681.8 346.7 681.2 347 680.7C347.4 680.3 347.8 679.3 347.9 679C348.1 678.7 348 678.7 348 679C348 679.3 347.8 680.3 347.9 680.7C348 681.2 348.2 681.8 348.5 681.8C348.8 681.8 349.4 681.3 349.8 680.9C350.1 680.6 350.4 679.8 350.5 679.6C350.6 679.3 350.5 679.3 350.4 679.6C350.4 679.8 350.2 680.6 350.4 680.9C350.5 681.3 350.8 681.8 351.1 681.8C351.4 681.8 351.8 681.3 352.1 681C352.4 680.6 352.8 679.9 352.9 679.6C353.1 679.4 353.2 679.4 353.3 679.6C353.3 679.9 353.2 680.6 353.3 681C353.4 681.3 353.5 681.8 353.8 681.8C354 681.8 354.5 681.2 354.9 680.8C355.2 680.3 355.6 679.4 355.8 679.1C356 678.8 356 678.8 356 679.1C356.1 679.4 355.9 680.3 356 680.8C356 681.2 356.4 681.6 356.4 681.8" stroke="#242424" stroke-width="0.8800000000000001" fill="none" stroke-linecap="round" stroke-linejoin="round"/>
<path d="M334 690.7C334.2 690.6 334.7 690.4 334.9 690.2C335.2 689.9 335.4 689.5 335.5 689.3C335.6 689.2 335.6 689.2 335.6 689.3C335.6 689.5 335.5 689.9 335.7 690.2C335.8 690.4 336 690.7 336.3 690.7C336.6 690.7 337 690.4 337.2 690.2C337.5 689.9 337.7 689.5 337.8 689.3C337.9 689.2 337.9 689.2 337.9 689.3C337.9 689.5 337.9 689.9 338 690.2C338.1 690.4 338.5 690.6 338.6 690.7" stroke="#242424" stroke-width="0.7200000000000001" fill="none" stroke-linecap="round" stroke-linejoin="round"/>
<path d="M314 726.9C315.5 725.2 320.7 721.4 323.1 717.1C325.4 712.9 327.8 704.1 328.1 701.4C328.5 698.8 326.2 698.8 324.9 701.4C323.7 704.1 320.7 712.9 320.6 717.1C320.4 721.4 322.6 725.8 323.8 726.9C325.1 727.9 326.7 724.8 328 723.2C329.2 721.7 330.6 718.4 331.3 717.4C331.9 716.4 331.8 716.4 331.8 717.4C331.9 718.4 331.3 721.7 331.6 723.2C331.9 724.8 332.6 726.9 333.6 726.9C334.7 726.8 336.6 724.7 337.8 723C339.1 721.4 340.6 717.9 341.2 716.8C341.9 715.8 341.8 715.8 341.8 716.8C341.9 717.9 341.3 721.4 341.5 723C341.8 724.7 342.4 726.9 343.4 726.9C344.5 726.8 346.4 724.5 347.7 722.6C349 720.8 350.6 716.9 351.3 715.8C352 714.6 352 714.6 352 715.8C352.1 716.9 351.3 720.8 351.6 722.6C351.8 724.5 352.4 725.4 353.2 726.9C354.1 728.3 356.3 729.4 356.7 731.3C357 733.3 355.8 737.4 355.4 738.6C354.9 739.8 353.6 739.8 353.9 738.6C354.1 737.4 355.4 733.3 357 731.3C358.5 729.4 362 727.6 363.1 726.9" stroke="#242424" stroke-width="0.8800000000000001" fill="none" stroke-linecap="round" stroke-linejoin="round"/>
<path d="M405 295.3C405.7 294.5 408.1 292.7 409.2 290.7C410.3 288.7 411.4 284.5 411.6 283.3C411.7 282.1 410.7 282.1 410.1 283.3C409.5 284.5 408.1 288.7 408 290.7C407.9 292.7 408.9 294.8 409.5 295.3C410.1 295.7 411.2 294.1 411.8 293.2C412.5 292.3 413.2 290.5 413.4 289.9C413.7 289.4 413.4 289.4 413.3 289.9C413.2 290.5 412.8 292.3 412.9 293.2C413 294.1 413.5 295.2 414 295.3C414.5 295.4 415.4 294.5 415.9 293.8C416.5 293.2 417 291.9 417.3 291.6C417.6 291.2 417.4 291.2 417.5 291.6C417.5 291.9 417.3 293.2 417.5 293.8C417.6 294.5 418 295.4 418.5 295.3C419 295.2 419.8 294.1 420.4 293.2C421.1 292.3 421.8 290.4 422.2 289.9C422.6 289.3 422.6 289.3 422.6 289.9C422.6 290.4 422.3 292.3 422.4 293.2C422.4 294.1 422.6 295.2 423 295.3C423.5 295.3 424.4 294.2 425 293.4C425.6 292.6 426.3 290.9 426.6 290.4C426.9 290 426.9 290 426.9 290.4C426.9 290.9 426.6 292.6 426.7 293.4C426.8 294.2 427.1 295.2 427.5 295.3C428 295.3 428.9 294.5 429.4 293.8C429.9 293.2 430.5 291.9 430.8 291.5C431.1 291.1 431 291.1 431 291.5C431.1 291.9 430.9 293.2 431 293.8C431.2 294.5 431.9 295 432.1 295.3" stroke="#242424" stroke-width="1.2800000000000002" fill="none" stroke-linecap="round" stroke-linejoin="round"/>
<path d="M411 311.5C411.6 310.9 413.8 309.4 414.8 307.7C415.8 306.1 416.7 302.7 416.8 301.6C416.9 300.6 415.9 300.6 415.4 301.6C414.9 302.7 413.7 306.1 413.7 307.7C413.7 309.4 414.6 311.2 415.2 311.5C415.9 311.8 416.9 310.4 417.5 309.7C418.1 308.9 418.7 307.2 418.9 306.7C419.1 306.2 418.8 306.2 418.7 306.7C418.6 307.2 418.2 308.9 418.3 309.7C418.5 310.4 418.9 311.5 419.5 311.5C420 311.5 421.1 310.4 421.7 309.6C422.3 308.8 422.9 307.1 423.1 306.6C423.4 306.1 423.1 306.1 423 306.6C422.9 307.1 422.5 308.8 422.6 309.6C422.8 310.4 423.2 311.4 423.7 311.5C424.2 311.6 425.1 310.7 425.6 310.2C426.1 309.6 426.6 308.4 426.9 308C427.1 307.7 426.9 307.7 426.9 308C426.9 308.4 426.7 309.6 426.9 310.2C427.1 310.7 427.5 310.9 428 311.5C428.4 312 429.3 312.6 429.5 313.4C429.6 314.3 429.1 316 428.9 316.6C428.7 317.1 428.1 317.1 428.2 316.6C428.4 316 428.9 314.3 429.6 313.4C430.2 312.6 431.5 312.1 432.2 311.5C433 310.9 433.5 310.6 434.1 310C434.6 309.4 435.2 308 435.4 307.6C435.7 307.2 435.6 307.2 435.6 307.6C435.6 308 435.3 309.4 435.5 310C435.6 310.6 436 311.5 436.5 311.5C436.9 311.4 437.7 310.5 438.2 309.8C438.7 309 439.4 307.4 439.7 307C440.1 306.5 440.1 306.5 440.1 307C440.2 307.4 439.9 309 440 309.8C440.1 310.5 440.2 311.5 440.7 311.5C441.2 311.5 442.3 310.6 442.9 309.9C443.5 309.2 444 307.7 444.2 307.3C444.4 306.9 444 306.9 444 307.3C443.9 307.7 443.6 309.2 443.7 309.9C443.9 310.6 444.4 311.5 444.9 311.5C445.5 311.5 446.3 310.6 446.9 310C447.4 309.3 448 307.9 448.2 307.5C448.5 307.1 448.3 307.1 448.3 307.5C448.3 307.9 448 309.3 448.1 310C448.3 310.6 448.5 311.9 449.2 311.5C449.9 311.1 451.5 309.3 452.4 307.7C453.3 306 454.3 302.6 454.6 301.6C454.9 300.5 454.3 300.5 454 301.6C453.6 302.6 452.6 306 452.5 307.7C452.4 309.3 453 311.1 453.4 311.5C453.9 311.8 454.6 310.6 455.2 309.8C455.7 309.1 456.3 307.6 456.7 307.2C457 306.7 457 306.7 457 307.2C457.1 307.6 456.8 309.1 456.9 309.8C457 310.6 457.3 311.5 457.7 311.5C458.1 311.5 458.8 310.5 459.3 309.8C459.9 309.1 460.5 307.6 460.9 307.1C461.2 306.7 461.3 306.7 461.3 307.1C461.4 307.6 461.2 309.1 461.3 309.8C461.4 310.5 461.8 311.2 461.9 311.5" stroke="#242424" stroke-width="1.2000000000000002" fill="none" stroke-linecap="round" stroke-linejoin="round"/>
<path d="M411 329.6C411.2 329.4 411.8 329 412.2 328.5C412.5 328 413 327 413.2 326.7C413.4 326.5 413.4 326.5 413.4 326.7C413.5 327 413.3 328 413.4 328.5C413.5 329 413.7 329.2 413.9 329.6C414.2 330 414.8 330.3 414.9 330.9C415 331.5 414.7 332.7 414.6 333.1C414.4 333.4 414 333.4 414.1 333.1C414.2 332.7 414.6 331.5 415 330.9C415.5 330.3 416.2 330.2 416.8 329.6C417.5 328.9 418.4 328.1 419 327C419.6 325.9 420.3 323.6 420.5 322.9C420.7 322.2 420.3 322.2 420.1 322.9C419.8 323.6 419.2 325.9 419.1 327C419 328.1 419.4 329.3 419.8 329.6C420.1 329.8 420.7 328.9 421.1 328.4C421.5 327.9 421.9 326.8 422.1 326.5C422.3 326.2 422.2 326.2 422.2 326.5C422.2 326.8 421.9 327.9 422 328.4C422.1 328.9 422.3 329.5 422.7 329.6C423 329.6 423.6 329 424 328.6C424.4 328.2 424.8 327.3 424.9 327C425 326.7 424.9 326.7 424.9 327C424.9 327.3 424.7 328.2 424.8 328.6C424.9 329 425.5 329.4 425.6 329.6M430.4 329.6C430.6 329.4 431.3 329 431.6 328.5C432 328 432.4 327 432.6 326.7C432.9 326.4 432.9 326.4 432.9 326.7C432.9 327 432.7 328 432.8 328.5C432.9 329 433.1 329.2 433.3 329.6C433.6 330 434.3 330.3 434.4 330.9C434.5 331.5 434.1 332.7 434 333.1C433.8 333.4 433.5 333.4 433.5 333.1C433.6 332.7 434 331.5 434.4 330.9C434.9 330.3 435.8 329.6 436.3 329.6C436.7 329.6 437.2 330.3 437.3 330.9C437.4 331.5 437 332.7 436.9 333.1C436.8 333.4 436.4 333.4 436.5 333.1C436.5 332.7 436.9 331.5 437.4 330.9C437.8 330.3 438.7 330 439.2 329.6C439.7 329.2 440.1 329 440.5 328.5C440.9 328 441.3 327.1 441.4 326.8C441.6 326.5 441.5 326.5 441.5 326.8C441.5 327.1 441.3 328 441.4 328.5C441.5 329 441.6 329.8 442.1 329.6C442.6 329.4 443.6 328.2 444.2 327.2C444.8 326.1 445.5 324 445.7 323.3C445.8 322.7 445.4 322.7 445.2 323.3C445 324 444.4 326.1 444.3 327.2C444.3 328.2 444.7 329.3 445 329.6C445.3 329.8 445.9 329 446.3 328.6C446.7 328.1 447.1 327.2 447.2 327C447.4 326.7 447.3 326.7 447.3 327C447.3 327.2 447.1 328.1 447.3 328.6C447.4 329 447.6 329.6 447.9 329.6C448.3 329.6 449 329 449.4 328.6C449.8 328.1 450.2 327.2 450.3 326.9C450.4 326.6 450.2 326.6 450.1 326.9C450.1 327.2 449.8 328.1 450 328.6C450.1 329 450.5 329.6 450.9 329.6C451.2 329.5 451.6 328.9 452 328.3C452.4 327.8 452.9 326.6 453.1 326.3C453.4 326 453.4 326 453.5 326.3C453.5 326.6 453.3 327.8 453.3 328.3C453.4 328.9 453.7 329.4 453.8 329.6M457.5 329.6C457.7 329.4 458.3 329.1 458.6 328.7C459 328.3 459.4 327.4 459.6 327.2C459.7 326.9 459.7 326.9 459.7 327.2C459.8 327.4 459.6 328.3 459.8 328.7C459.9 329.1 460.1 329.6 460.4 329.6C460.7 329.5 461.2 328.9 461.5 328.3C461.9 327.8 462.4 326.7 462.6 326.3C462.9 326 462.9 326 463 326.3C463 326.7 462.8 327.8 462.9 328.3C462.9 328.9 463.1 329.2 463.3 329.6C463.5 330 464.2 330.3 464.3 330.9C464.4 331.5 464.1 332.7 463.9 333.1C463.8 333.4 463.4 333.4 463.5 333.1C463.6 332.7 463.9 331.5 464.4 330.9C464.9 330.3 465.7 330 466.2 329.6C466.7 329.2 467 328.9 467.4 328.3C467.8 327.8 468.2 326.7 468.5 326.3C468.7 326 468.8 326 468.8 326.3C468.8 326.7 468.7 327.8 468.7 328.3C468.8 328.9 469.1 329.4 469.1 329.6" stroke="#242424" stroke-width="0.8800000000000001" fill="none" stroke-linecap="round" stroke-linejoin="round"/>
<path d="M415 340.1C415.5 339.6 417.3 338.3 418.2 336.8C419 335.4 419.8 332.3 419.9 331.4C420 330.5 419.2 330.5 418.8 331.4C418.3 332.3 417.3 335.4 417.3 336.8C417.2 338.3 418 339.8 418.4 340.1C418.9 340.4 419.7 339.3 420.2 338.6C420.7 337.9 421.2 336.6 421.4 336.1C421.6 335.7 421.4 335.7 421.3 336.1C421.3 336.6 420.9 337.9 421 338.6C421.1 339.3 421.5 340.1 421.9 340.1C422.3 340.2 423.1 339.3 423.6 338.7C424.1 338 424.6 336.7 424.8 336.3C425 335.9 424.8 335.9 424.8 336.3C424.7 336.7 424.4 338 424.5 338.7C424.6 339.3 424.9 340.1 425.3 340.1C425.8 340.2 426.6 339.4 427 338.8C427.5 338.2 428 337 428.1 336.7C428.3 336.3 428.1 336.3 428.1 336.7C428 337 427.8 338.2 427.9 338.8C428 339.4 428.4 340.2 428.8 340.1C429.2 340.1 429.7 339.3 430.2 338.6C430.6 337.9 431.2 336.5 431.5 336C431.8 335.6 431.9 335.6 431.9 336C432 336.5 431.7 337.9 431.8 338.6C431.8 339.3 431.9 340.1 432.2 340.1C432.6 340.2 433.4 339.5 433.8 339.1C434.3 338.6 434.7 337.7 434.8 337.4C435 337.1 434.8 337.1 434.8 337.4C434.8 337.7 434.6 338.6 434.7 339.1C434.9 339.5 435.2 340.2 435.7 340.1C436.1 340.1 437 339.4 437.5 338.8C438 338.2 438.4 337 438.5 336.7C438.7 336.3 438.4 336.3 438.4 336.7C438.3 337 438 338.2 438.1 338.8C438.3 339.4 438.7 340.1 439.1 340.1C439.6 340.1 440.3 339.4 440.8 338.9C441.3 338.3 441.7 337.1 441.9 336.8C442.1 336.4 441.9 336.4 441.8 336.8C441.8 337.1 441.6 338.3 441.7 338.9C441.8 339.4 442.2 340.2 442.6 340.1C443 340.1 443.6 339.4 444.1 338.7C444.5 338.1 445 336.9 445.3 336.5C445.5 336.1 445.5 336.1 445.5 336.5C445.5 336.9 445.3 338.1 445.4 338.7C445.5 339.4 445.6 340.1 446 340.1C446.4 340.2 447.2 339.4 447.7 338.8C448.1 338.3 448.6 337.1 448.8 336.7C449 336.4 448.8 336.4 448.8 336.7C448.7 337.1 448.5 338.3 448.6 338.8C448.7 339.4 449.1 340.1 449.5 340.1C449.9 340.1 450.6 339.4 451 338.9C451.5 338.3 451.9 337.2 452.1 336.8C452.4 336.5 452.2 336.5 452.2 336.8C452.2 337.2 452 338.3 452.1 338.9C452.3 339.4 452.5 340.1 452.9 340.1C453.3 340.1 454.1 339.4 454.6 338.9C455 338.4 455.5 337.2 455.6 336.9C455.8 336.6 455.6 336.6 455.6 336.9C455.6 337.2 455.3 338.4 455.4 338.9C455.6 339.4 456 340.2 456.4 340.1C456.8 340.1 457.4 339.4 457.9 338.8C458.3 338.2 458.8 337 459 336.7C459.3 336.3 459.2 336.3 459.2 336.7C459.2 337 459 338.2 459.1 338.8C459.2 339.4 459.7 339.9 459.8 340.1" stroke="#242424" stroke-width="0.8800000000000001" fill="none" stroke-linecap="round" stroke-linejoin="round"/>
<path d="M411 353.1C411.3 353 412.1 352.5 412.5 352C412.9 351.5 413.4 350.5 413.6 350.2C413.8 349.9 413.7 349.9 413.7 350.2C413.7 350.5 413.5 351.5 413.6 352C413.7 352.5 414 353.1 414.4 353.1C414.9 353.1 415.7 352.5 416.1 352C416.6 351.6 417 350.6 417.1 350.3C417.2 350 417 350 417 350.3C416.9 350.6 416.7 351.6 416.9 352C417 352.5 417.4 353.2 417.9 353.1C418.4 353.1 419.2 352.3 419.7 351.6C420.2 351 420.7 349.6 420.9 349.2C421 348.7 420.8 348.7 420.8 349.2C420.7 349.6 420.4 351 420.5 351.6C420.6 352.3 421 353.1 421.3 353.1C421.7 353.2 422.4 352.5 422.8 352C423.2 351.5 423.7 350.4 423.9 350.1C424.1 349.8 424.1 349.8 424.1 350.1C424.1 350.4 423.9 351.5 424 352C424.2 352.5 424.5 353.1 424.8 353.1C425.1 353.2 425.6 352.5 426 352.1C426.4 351.6 426.9 350.7 427.1 350.4C427.4 350.1 427.5 350.1 427.6 350.4C427.7 350.7 427.6 351.6 427.7 352.1C427.8 352.5 427.8 353.2 428.2 353.1C428.6 353.1 429.5 352.4 430 351.8C430.5 351.2 430.9 350 431.1 349.7C431.2 349.3 431 349.3 430.9 349.7C430.9 350 430.6 351.2 430.7 351.8C430.8 352.4 431.2 353.1 431.7 353.1C432.1 353.1 433 352.4 433.5 351.8C434 351.2 434.4 350 434.6 349.6C434.7 349.2 434.4 349.2 434.4 349.6C434.3 350 434 351.2 434.1 351.8C434.3 352.4 434.7 353.1 435.1 353.1C435.6 353.1 436.3 352.4 436.8 351.8C437.2 351.2 437.7 350 437.9 349.6C438.1 349.3 437.9 349.3 437.9 349.6C437.9 350 437.6 351.2 437.7 351.8C437.9 352.4 438.2 353.1 438.6 353.1C439 353.2 439.7 352.4 440.1 351.9C440.6 351.3 441.1 350.2 441.2 349.9C441.4 349.5 441.3 349.5 441.3 349.9C441.3 350.2 441.1 351.3 441.2 351.9C441.3 352.4 441.6 353.2 442 353.1C442.4 353.1 443.2 352.2 443.7 351.6C444.2 350.9 444.8 349.4 445 349C445.2 348.6 445 348.6 445 349C445 349.4 444.6 350.9 444.7 351.6C444.8 352.2 445.1 353.1 445.5 353.1C445.8 353.2 446.5 352.5 446.9 352C447.3 351.6 447.7 350.5 448 350.2C448.2 349.9 448.1 349.9 448.2 350.2C448.2 350.5 448.1 351.6 448.2 352C448.3 352.5 448.5 353.2 448.9 353.1C449.3 353.1 450 352.4 450.5 351.8C451 351.2 451.5 349.9 451.7 349.6C451.9 349.2 451.8 349.2 451.8 349.6C451.8 349.9 451.5 351.2 451.6 351.8C451.7 352.4 452 353.2 452.4 353.1C452.8 353.1 453.5 352.2 454 351.5C454.5 350.9 455 349.4 455.3 349C455.5 348.5 455.4 348.5 455.4 349C455.4 349.4 455.1 350.9 455.2 351.5C455.2 352.2 455.4 353.1 455.8 353.1C456.2 353.2 457.2 352.4 457.6 351.7C458.1 351.1 458.6 349.8 458.7 349.5C458.9 349.1 458.6 349.1 458.5 349.5C458.5 349.8 458.2 351.1 458.3 351.7C458.4 352.4 458.8 353.1 459.3 353.1C459.7 353.1 460.5 352.4 461 351.8C461.4 351.2 461.9 350 462.1 349.6C462.3 349.2 462.1 349.2 462 349.6C462 350 461.7 351.2 461.8 351.8C461.9 352.4 462.6 352.9 462.7 353.1" stroke="#242424" stroke-width="0.8" fill="none" stroke-linecap="round" stroke-linejoin="round"/>
<path d="M415 368.4C415.5 367.8 417.2 366.6 417.9 365.2C418.7 363.8 419.5 361 419.6 360.1C419.7 359.3 419 359.3 418.5 360.1C418.1 361 417.2 363.8 417.1 365.2C417.1 366.6 417.7 368 418.2 368.4C418.6 368.7 419.3 367.8 419.7 367.3C420.1 366.9 420.5 365.9 420.6 365.7C420.8 365.4 420.6 365.4 420.5 365.7C420.5 365.9 420.3 366.9 420.4 367.3C420.6 367.8 420.9 368.4 421.4 368.4C421.8 368.3 422.6 367.6 423.1 367C423.5 366.4 424 365.1 424.1 364.7C424.3 364.3 424 364.3 424 364.7C423.9 365.1 423.6 366.4 423.7 367C423.8 367.6 424.2 368.3 424.5 368.4C424.9 368.4 425.4 367.7 425.8 367.2C426.2 366.7 426.7 365.6 426.9 365.3C427.1 364.9 427.2 364.9 427.2 365.3C427.3 365.6 427.1 366.7 427.2 367.2C427.3 367.7 427.4 368.4 427.7 368.4C428.1 368.4 428.7 367.7 429.1 367.1C429.6 366.6 430 365.5 430.2 365.1C430.4 364.8 430.4 364.8 430.4 365.1C430.4 365.5 430.1 366.6 430.2 367.1C430.3 367.7 430.6 367.9 430.9 368.4C431.2 368.8 431.9 369.2 432 369.8C432.1 370.5 431.8 371.8 431.6 372.2C431.5 372.6 431 372.6 431.1 372.2C431.2 371.8 431.6 370.5 432.1 369.8C432.6 369.2 433.6 368.4 434.1 368.4C434.6 368.4 435.1 369.2 435.2 369.8C435.3 370.5 434.9 371.8 434.8 372.2C434.6 372.6 434.2 372.6 434.3 372.2C434.4 371.8 434.8 370.5 435.3 369.8C435.8 369.2 436.9 368.6 437.3 368.4M443.1 368.4C443.6 367.8 445.3 366.5 446.1 365.1C446.8 363.7 447.6 360.8 447.8 359.9C447.9 359 447.1 359 446.7 359.9C446.3 360.8 445.3 363.7 445.3 365.1C445.2 366.5 445.9 368 446.3 368.4C446.7 368.7 447.2 367.8 447.6 367.4C448 366.9 448.4 366 448.6 365.8C448.8 365.5 448.7 365.5 448.7 365.8C448.8 366 448.6 366.9 448.8 367.4C448.9 367.8 449.1 368.4 449.5 368.4C449.8 368.3 450.5 367.7 450.9 367.2C451.4 366.7 451.8 365.7 451.9 365.4C452.1 365.1 452 365.1 451.9 365.4C451.9 365.7 451.7 366.7 451.8 367.2C452 367.7 452.1 368.6 452.6 368.4C453.2 368.1 454.3 366.9 455 365.8C455.6 364.7 456.3 362.4 456.5 361.7C456.7 361 456.2 361 456 361.7C455.8 362.4 455.1 364.7 455.1 365.8C455 366.9 455.4 368.1 455.8 368.4C456.2 368.6 456.9 367.6 457.3 367.1C457.8 366.5 458.2 365.4 458.4 365C458.6 364.7 458.5 364.7 458.4 365C458.4 365.4 458.2 366.5 458.3 367.1C458.4 367.6 458.7 367.9 459 368.4C459.3 368.8 460 369.2 460.1 369.8C460.2 370.5 459.9 371.8 459.7 372.2C459.6 372.6 459.1 372.6 459.2 372.2C459.3 371.8 459.7 370.5 460.2 369.8C460.7 369.2 461.6 368.8 462.2 368.4C462.7 367.9 463.1 367.7 463.5 367.1C463.9 366.6 464.4 365.4 464.6 365.1C464.9 364.7 464.9 364.7 464.9 365.1C464.9 365.4 464.8 366.6 464.8 367.1C464.9 367.7 465 368.4 465.4 368.4C465.7 368.4 466.6 367.7 467.1 367.1C467.5 366.6 467.9 365.4 468 365.1C468.2 364.8 467.9 364.8 467.9 365.1C467.8 365.4 467.5 366.6 467.6 367.1C467.8 367.7 468.4 368.2 468.6 368.4" stroke="#242424" stroke-width="0.8" fill="none" stroke-linecap="round" stroke-linejoin="round"/>
<path d="M444 379.5C444.1 379.4 444.6 379.1 444.8 378.9C445.1 378.6 445.3 378 445.5 377.9C445.7 377.7 445.7 377.7 445.7 377.9C445.8 378 445.8 378.6 445.9 378.9C445.9 379.1 446.1 379.5 446.3 379.5C446.5 379.5 446.8 379.1 447.1 378.9C447.3 378.6 447.6 378.1 447.8 377.9C447.9 377.7 448 377.7 448.1 377.9C448.1 378.1 448.1 378.6 448.2 378.9C448.3 379.1 448.5 379.4 448.6 379.5" stroke="#242424" stroke-width="0.7200000000000001" fill="none" stroke-linecap="round" stroke-linejoin="round"/>
<path d="M410 394.1C410.3 393.9 411.2 393.4 411.7 392.7C412.2 392.1 412.7 390.9 412.9 390.5C413 390.1 412.8 390.1 412.8 390.5C412.7 390.9 412.5 392.1 412.6 392.7C412.7 393.4 412.9 394.3 413.4 394.1C414 394 415.2 392.8 415.9 391.7C416.5 390.6 417.2 388.4 417.4 387.7C417.5 387 417.1 387 416.8 387.7C416.6 388.4 416 390.6 416 391.7C416 392.8 416.5 393.9 416.9 394.1C417.3 394.3 418.1 393.4 418.5 392.9C419 392.4 419.4 391.2 419.6 390.9C419.8 390.6 419.6 390.6 419.6 390.9C419.6 391.2 419.3 392.4 419.5 392.9C419.6 393.4 420 394.1 420.3 394.1C420.7 394.2 421.3 393.5 421.7 393C422.1 392.5 422.6 391.4 422.8 391.1C423.1 390.8 423.1 390.8 423.1 391.1C423.2 391.4 423 392.5 423.1 393C423.2 393.5 423.2 394.5 423.8 394.1C424.3 393.8 425.7 392.2 426.5 390.7C427.3 389.3 428.2 386.2 428.4 385.2C428.7 384.3 428.2 384.3 427.9 385.2C427.6 386.2 426.7 389.3 426.6 390.7C426.5 392.2 426.9 393.8 427.2 394.1C427.6 394.5 428.3 393.4 428.7 392.9C429.2 392.3 429.6 391.2 429.9 390.9C430.1 390.5 430 390.5 430 390.9C430 391.2 429.8 392.3 430 392.9C430.1 393.4 430.3 394.1 430.7 394.1C431.1 394.2 431.9 393.5 432.4 393.1C432.8 392.6 433.2 391.6 433.3 391.3C433.5 391 433.2 391 433.2 391.3C433.2 391.6 433 392.6 433.1 393.1C433.3 393.5 433.7 394.2 434.1 394.1C434.6 394.1 435.2 393.2 435.7 392.6C436.2 391.9 436.8 390.4 437 390C437.3 389.6 437.2 389.6 437.2 390C437.2 390.4 436.9 391.9 437 392.6C437 393.2 437.5 393.9 437.6 394.1M443.9 394.1C444.3 393.6 445.8 392.2 446.6 390.7C447.3 389.2 448.3 386.1 448.5 385.2C448.8 384.2 448.3 384.2 448 385.2C447.7 386.1 446.8 389.2 446.7 390.7C446.5 392.2 446.9 393.8 447.3 394.1C447.7 394.5 448.6 393.4 449 392.9C449.5 392.4 449.9 391.3 450.1 390.9C450.2 390.6 450 390.6 449.9 390.9C449.9 391.3 449.6 392.4 449.8 392.9C449.9 393.4 450.3 394.1 450.8 394.1C451.2 394.1 451.9 393.5 452.3 392.9C452.7 392.4 453.2 391.3 453.4 390.9C453.6 390.6 453.5 390.6 453.5 390.9C453.5 391.3 453.3 392.4 453.4 392.9C453.5 393.5 453.8 394.2 454.2 394.1C454.6 394.1 455.5 393.4 456 392.8C456.5 392.2 456.9 391 457 390.7C457.2 390.3 456.9 390.3 456.9 390.7C456.8 391 456.5 392.2 456.7 392.8C456.8 393.4 457.3 393.7 457.6 394.1C458 394.6 458.7 395 458.8 395.7C459 396.4 458.6 397.8 458.4 398.3C458.2 398.7 457.8 398.7 457.9 398.3C458 397.8 458.4 396.4 458.9 395.7C459.5 395 460.5 394.6 461.1 394.1C461.7 393.6 462.1 393.3 462.5 392.7C463 392.1 463.5 390.7 463.8 390.3C464.1 389.9 464.1 389.9 464.1 390.3C464.2 390.7 463.9 392.1 464 392.7C464.1 393.3 464.5 393.9 464.5 394.1" stroke="#242424" stroke-width="0.8" fill="none" stroke-linecap="round" stroke-linejoin="round"/>
<path d="M418 408.7C418.6 408.1 420.7 406.6 421.6 405C422.5 403.3 423.5 399.9 423.6 398.9C423.7 397.9 422.8 397.9 422.3 398.9C421.8 399.9 420.6 403.3 420.6 405C420.6 406.6 421.5 408.3 422 408.7C422.5 409.1 423 407.9 423.5 407.3C424 406.7 424.5 405.5 424.8 405.1C425.1 404.7 425.2 404.7 425.3 405.1C425.3 405.5 425.2 406.7 425.3 407.3C425.4 407.9 425.5 408.7 426 408.7C426.4 408.7 427.4 407.9 428 407.4C428.5 406.8 428.9 405.6 429.1 405.2C429.3 404.8 428.9 404.8 428.9 405.2C428.8 405.6 428.5 406.8 428.7 407.4C428.9 407.9 429.5 408.7 429.9 408.7C430.4 408.7 431 407.8 431.5 407.1C432 406.4 432.6 405 432.9 404.6C433.2 404.1 433.3 404.1 433.4 404.6C433.5 405 433.2 406.4 433.3 407.1C433.4 407.8 433.5 408.7 433.9 408.7C434.3 408.7 435.1 407.9 435.6 407.2C436.1 406.6 436.7 405.3 436.9 404.9C437.2 404.5 437.1 404.5 437.2 404.9C437.2 405.3 437 406.6 437.1 407.2C437.2 407.9 437.3 409 437.9 408.7C438.5 408.4 439.9 407 440.7 405.7C441.5 404.4 442.3 401.7 442.5 400.9C442.7 400.1 442.2 400.1 441.9 400.9C441.6 401.7 440.8 404.4 440.8 405.7C440.8 407 441.4 408.4 441.9 408.7C442.3 409 443 407.9 443.4 407.3C443.9 406.6 444.5 405.3 444.8 404.9C445.1 404.5 445.1 404.5 445.2 404.9C445.2 405.3 445 406.6 445.1 407.3C445.2 407.9 445.5 408.2 445.8 408.7C446.2 409.2 447.1 409.7 447.2 410.5C447.4 411.3 446.9 413 446.7 413.5C446.5 414 446 414 446.1 413.5C446.2 413 446.7 411.3 447.3 410.5C448 409.7 449.2 409.2 449.8 408.7C450.5 408.2 450.8 407.9 451.2 407.3C451.7 406.7 452.3 405.5 452.6 405.1C452.9 404.8 453.1 404.8 453.2 405.1C453.3 405.5 453.1 406.7 453.2 407.3C453.3 407.9 453.4 408.7 453.8 408.7C454.2 408.7 454.8 407.9 455.3 407.3C455.8 406.6 456.4 405.3 456.7 404.9C457 404.6 457.1 404.6 457.1 404.9C457.2 405.3 457 406.6 457.1 407.3C457.2 407.9 457.4 408.7 457.8 408.7C458.1 408.7 458.9 408 459.3 407.4C459.8 406.9 460.3 405.7 460.6 405.4C460.9 405 460.9 405 460.9 405.4C461 405.7 460.8 406.9 461 407.4C461.1 408 461.6 408.5 461.8 408.7" stroke="#242424" stroke-width="1.04" fill="none" stroke-linecap="round" stroke-linejoin="round"/>
<path d="M479 342.9C479.6 342.3 481.5 340.8 482.4 339.2C483.3 337.6 484.2 334.3 484.4 333.3C484.5 332.3 483.6 332.3 483.1 333.3C482.7 334.3 481.6 337.6 481.5 339.2C481.4 340.8 482.3 342.5 482.7 342.9C483.2 343.3 483.8 342.2 484.2 341.7C484.7 341.2 485.2 340 485.4 339.7C485.6 339.4 485.6 339.4 485.7 339.7C485.7 340 485.5 341.2 485.7 341.7C485.8 342.2 486 342.9 486.4 342.9C486.9 342.9 487.8 342.2 488.3 341.6C488.8 341 489.3 339.7 489.4 339.4C489.6 339 489.3 339 489.3 339.4C489.2 339.7 488.9 341 489.1 341.6C489.2 342.2 489.7 342.4 490.1 342.9C490.5 343.4 491.3 343.9 491.4 344.6C491.6 345.4 491.1 346.9 490.9 347.4C490.8 347.8 490.3 347.8 490.4 347.4C490.5 346.9 491 345.4 491.5 344.6C492.1 343.9 493.2 343.4 493.9 342.9C494.5 342.4 494.9 342.1 495.3 341.5C495.8 340.9 496.4 339.5 496.7 339.2C496.9 338.8 497 338.8 497 339.2C497.1 339.5 496.8 340.9 496.9 341.5C497 342.1 497.5 342.7 497.6 342.9M503.7 342.9C504.3 342.4 506.2 341 507 339.6C507.9 338.1 508.7 335 508.8 334.1C508.9 333.2 508 333.2 507.6 334.1C507.1 335 506.1 338.1 506.1 339.6C506.1 341 506.9 342.6 507.4 342.9C507.9 343.2 508.5 342.1 509 341.4C509.5 340.8 510.1 339.4 510.3 339C510.6 338.6 510.5 338.6 510.6 339C510.6 339.4 510.3 340.8 510.4 341.4C510.5 342.1 510.8 342.4 511.1 342.9C511.5 343.5 512.3 343.9 512.4 344.6C512.6 345.4 512.1 346.9 511.9 347.4C511.8 347.8 511.3 347.8 511.4 347.4C511.5 346.9 511.9 345.4 512.5 344.6C513.1 343.9 514.1 343.4 514.8 342.9C515.5 342.4 516.2 342.2 516.7 341.7C517.1 341.1 517.6 340 517.7 339.6C517.9 339.3 517.7 339.3 517.6 339.6C517.6 340 517.3 341.1 517.5 341.7C517.6 342.2 517.9 343.2 518.6 342.9C519.2 342.6 520.5 341.1 521.3 339.7C522.1 338.3 523 335.4 523.2 334.5C523.4 333.6 523 333.6 522.7 334.5C522.4 335.4 521.5 338.3 521.4 339.7C521.4 341.1 522.1 342.4 522.3 342.9M528.7 342.9C529.3 342.3 531.2 341 532.1 339.5C533 338 533.8 334.9 533.9 334C534 333 533.1 333 532.7 334C532.2 334.9 531.2 338 531.1 339.5C531.1 341 532 342.6 532.4 342.9C532.9 343.2 533.5 342.1 534 341.4C534.5 340.8 535 339.5 535.3 339.1C535.6 338.7 535.6 338.7 535.6 339.1C535.6 339.5 535.4 340.8 535.5 341.4C535.6 342.1 536 342.7 536.2 342.9" stroke="#242424" stroke-width="0.8800000000000001" fill="none" stroke-linecap="round" stroke-linejoin="round"/>
<path d="M484 360.8C484.8 360.1 487.4 358.3 488.5 356.3C489.7 354.4 490.8 350.3 490.9 349.1C491 347.9 489.8 347.9 489.2 349.1C488.6 350.3 487.3 354.4 487.2 356.3C487.2 358.3 488.3 360.4 489 360.8C489.7 361.3 490.7 359.8 491.4 359C492 358.2 492.7 356.6 492.9 356.1C493.2 355.6 493 355.6 493 356.1C493 356.6 492.6 358.2 492.8 359C493 359.8 493.2 361.3 494.1 360.8C494.9 360.4 496.8 358.3 497.9 356.4C498.9 354.4 500.2 350.4 500.5 349.2C500.8 348 500.1 348 499.7 349.2C499.3 350.4 498.1 354.4 498 356.4C497.9 358.3 498.6 360.4 499.1 360.8C499.6 361.2 500.5 359.7 501.2 358.9C501.8 358 502.6 356.3 503 355.7C503.3 355.2 503.3 355.2 503.4 355.7C503.4 356.3 503.1 358 503.2 358.9C503.4 359.7 503.4 361.2 504.2 360.8C504.9 360.5 506.8 358.5 507.8 356.8C508.8 355 510 351.3 510.2 350.2C510.5 349.1 509.9 349.1 509.5 350.2C509.1 351.3 508 355 508 356.8C507.9 358.5 508.7 359.8 509.2 360.8C509.7 361.9 510.8 362.1 510.9 363.1C511.1 364.1 510.5 366.2 510.3 366.9C510.1 367.5 509.4 367.5 509.5 366.9C509.7 366.2 510.3 364.1 511.1 363.1C511.9 362.1 513.1 362 514.2 360.8C515.4 359.7 517 358.2 518.1 356.1C519.2 354.1 520.5 349.8 520.8 348.6C521.1 347.3 520.5 347.3 520 348.6C519.6 349.8 518.4 354.1 518.2 356.1C518.1 358.2 518.7 360.4 519.3 360.8C519.9 361.3 521.1 359.8 521.8 359C522.5 358.1 523.1 356.4 523.4 355.9C523.6 355.4 523.2 355.4 523.2 355.9C523.1 356.4 522.7 358.1 522.9 359C523.1 359.8 523.6 360.9 524.3 360.8C525 360.8 526.2 359.5 526.9 358.6C527.7 357.6 528.4 355.5 528.7 354.9C528.9 354.3 528.6 354.3 528.5 354.9C528.4 355.5 527.9 357.6 528.1 358.6C528.2 359.5 528.5 361.1 529.3 360.8C530.2 360.5 532 358.6 533 356.8C534 355.1 535.1 351.4 535.4 350.3C535.7 349.2 535 349.2 534.6 350.3C534.3 351.4 533.2 355.1 533.1 356.8C533.1 358.6 534.2 360.2 534.4 360.8" stroke="#242424" stroke-width="0.96" fill="none" stroke-linecap="round" stroke-linejoin="round"/>
<line x1="560" y1="352" x2="585" y2="341" stroke="#555" stroke-width="0.9"/>
<path d="M604 342.9C604.6 342.3 606.5 340.9 607.4 339.3C608.3 337.8 609.2 334.5 609.3 333.5C609.4 332.6 608.5 332.6 608.1 333.5C607.6 334.5 606.5 337.8 606.5 339.3C606.4 340.9 607.2 342.6 607.7 342.9C608.2 343.3 609 342.1 609.4 341.5C609.9 340.9 610.4 339.7 610.6 339.3C610.8 338.9 610.7 338.9 610.7 339.3C610.7 339.7 610.4 340.9 610.5 341.5C610.7 342.1 611 342.9 611.4 342.9C611.9 342.9 612.8 342.2 613.2 341.6C613.7 341.1 614.2 339.9 614.3 339.6C614.5 339.2 614.3 339.2 614.2 339.6C614.2 339.9 613.9 341.1 614.1 341.6C614.2 342.2 614.7 343 615.1 342.9C615.6 342.9 616.1 342.1 616.6 341.4C617.1 340.7 617.7 339.4 618 339C618.3 338.6 618.3 338.6 618.4 339C618.4 339.4 618.2 340.7 618.3 341.4C618.4 342.1 618.3 343.3 618.9 342.9C619.4 342.6 620.9 340.8 621.8 339.2C622.6 337.6 623.6 334.3 623.9 333.3C624.1 332.3 623.6 332.3 623.3 333.3C623 334.3 622 337.6 621.9 339.2C621.7 340.8 622.2 342.6 622.6 342.9C622.9 343.3 623.5 342 624 341.4C624.4 340.7 625.1 339.3 625.4 338.8C625.7 338.4 625.8 338.4 625.9 338.8C626 339.3 625.7 340.7 625.8 341.4C625.9 342 625.8 343.1 626.3 342.9C626.8 342.7 628.2 341.3 628.9 340.1C629.7 338.9 630.4 336.3 630.6 335.5C630.8 334.8 630.3 334.8 630.1 335.5C629.8 336.3 629 338.9 629 340.1C629 341.3 629.6 342.2 630 342.9C630.4 343.7 631.1 343.9 631.3 344.6C631.4 345.4 631 346.9 630.8 347.4C630.6 347.8 630.1 347.8 630.2 347.4C630.3 346.9 630.8 345.4 631.4 344.6C632 343.9 633.1 343.4 633.7 342.9C634.3 342.4 634.6 342.2 635.1 341.6C635.5 341 636.1 339.7 636.4 339.4C636.7 339 636.8 339 636.9 339.4C637 339.7 636.8 341 636.9 341.6C637 342.2 637.3 342.7 637.4 342.9" stroke="#242424" stroke-width="0.8800000000000001" fill="none" stroke-linecap="round" stroke-linejoin="round"/>
<path d="M661 335.8C661.3 336.2 662.6 337.1 662.8 338.1C662.9 339.1 662.3 341.2 662.1 341.9C661.9 342.5 661.2 342.5 661.3 341.9C661.5 341.2 662.1 339.1 662.9 338.1C663.7 337.1 665.1 336.5 666 335.8C667 335.1 667.8 334.7 668.5 333.8C669.2 332.9 669.9 331.1 670.1 330.6C670.4 330 670.2 330 670.1 330.6C670.1 331.1 669.7 332.9 669.8 333.8C670 334.7 670.6 335.1 671.1 335.8C671.6 336.5 672.6 337.1 672.8 338.1C673 339.1 672.4 341.2 672.2 341.9C671.9 342.5 671.3 342.5 671.4 341.9C671.5 341.2 672.2 339.1 673 338.1C673.8 337.1 675.2 336.6 676.1 335.8C677 335.1 677.6 334.6 678.3 333.7C678.9 332.8 679.7 330.9 680.1 330.3C680.5 329.8 680.4 329.8 680.5 330.3C680.5 330.9 680.1 332.8 680.3 333.7C680.4 334.6 680.4 336.3 681.2 335.8C682 335.4 683.9 333.1 685.1 331C686.2 328.8 687.5 324.4 687.9 323.1C688.2 321.8 687.6 321.8 687.1 323.1C686.7 324.4 685.4 328.8 685.2 331C685.1 333.1 685.7 335.3 686.2 335.8C686.7 336.3 687.4 334.8 688 334C688.6 333.3 689.4 331.7 689.8 331.2C690.2 330.7 690.3 330.7 690.4 331.2C690.6 331.7 690.3 333.3 690.5 334C690.6 334.8 690.8 335.9 691.2 335.8C691.7 335.8 692.5 334.7 693.1 333.8C693.8 332.9 694.6 331 695 330.5C695.4 329.9 695.6 329.9 695.7 330.5C695.8 331 695.5 332.9 695.6 333.8C695.7 334.7 695.9 335.1 696.3 335.8C696.7 336.5 697.8 337.1 698 338.1C698.2 339.1 697.6 341.2 697.4 341.9C697.1 342.5 696.5 342.5 696.6 341.9C696.7 341.2 697.4 339.1 698.2 338.1C699 337.1 700.1 337 701.3 335.8C702.5 334.6 704.1 333.1 705.2 331C706.3 328.9 707.6 324.5 708 323.3C708.3 322 707.7 322 707.2 323.3C706.8 324.5 705.5 328.9 705.3 331C705.2 333.1 706.2 335 706.3 335.8M713.5 335.8C713.8 335.6 715.1 334.9 715.7 334.2C716.4 333.5 717 332 717.2 331.6C717.5 331.2 717.3 331.2 717.2 331.6C717.2 332 717 333.5 717.2 334.2C717.4 334.9 717.8 335.9 718.5 335.8C719.1 335.7 720.3 334.6 721.1 333.7C721.8 332.7 722.5 330.8 722.8 330.2C723 329.6 722.7 329.6 722.6 330.2C722.6 330.8 722.1 332.7 722.3 333.7C722.4 334.6 722.9 335.7 723.5 335.8C724.2 335.9 725.4 334.9 726 334.2C726.7 333.5 727.2 332 727.4 331.6C727.6 331.2 727.3 331.2 727.2 331.6C727.1 332 726.8 333.5 727 334.2C727.3 334.9 727.9 335.9 728.6 335.8C729.2 335.7 730.4 334.5 731.1 333.5C731.8 332.5 732.6 330.4 732.9 329.8C733.2 329.2 733 329.2 732.9 329.8C732.8 330.4 732.4 332.5 732.5 333.5C732.6 334.5 733.4 335.4 733.6 335.8" stroke="#242424" stroke-width="0.96" fill="none" stroke-linecap="round" stroke-linejoin="round"/>
<path d="M662 346.6C662.4 346.1 664 345 664.6 343.9C665.3 342.7 666 340.2 666.1 339.5C666.2 338.7 665.5 338.7 665.1 339.5C664.8 340.2 663.9 342.7 663.9 343.9C663.9 345 664.4 346.6 664.9 346.6C665.5 346.6 666.5 345.1 667.1 343.9C667.8 342.7 668.5 340.2 668.7 339.5C668.9 338.8 668.5 338.8 668.3 339.5C668 340.2 667.3 342.7 667.2 343.9C667.2 345.1 667.5 346.3 667.8 346.6C668.2 346.8 668.9 345.9 669.3 345.4C669.7 345 670.1 343.9 670.2 343.6C670.4 343.3 670.2 343.3 670.1 343.6C670.1 343.9 669.8 345 669.9 345.4C670 345.9 670.2 346.9 670.8 346.6C671.3 346.3 672.4 345 673 343.8C673.6 342.6 674.4 340.1 674.6 339.4C674.8 338.6 674.4 338.6 674.1 339.4C673.9 340.1 673.2 342.6 673.1 343.8C673 345 673.2 346.6 673.7 346.6C674.1 346.6 675.3 345.1 675.9 343.9C676.5 342.7 677.3 340.2 677.5 339.5C677.7 338.8 677.3 338.8 677 339.5C676.8 340.2 676.1 342.7 676 343.9C675.9 345.1 676.3 346.3 676.6 346.6C676.9 346.9 677.5 346 677.9 345.6C678.2 345.1 678.6 344.2 678.8 343.9C679 343.7 678.9 343.7 678.9 343.9C678.9 344.2 678.7 345.1 678.8 345.6C678.9 346 679.2 346.6 679.5 346.6C679.8 346.6 680.4 345.9 680.8 345.4C681.2 344.9 681.7 343.8 681.9 343.5C682 343.1 682 343.1 681.9 343.5C681.9 343.8 681.7 344.9 681.8 345.4C681.9 345.9 682.1 346.2 682.4 346.6C682.7 347 683.3 347.3 683.4 347.9C683.5 348.5 683.2 349.7 683.1 350.1C682.9 350.4 682.5 350.4 682.6 350.1C682.7 349.7 683.1 348.5 683.5 347.9C684 347.3 684.7 347.2 685.3 346.6C686 346 686.9 345.2 687.5 344.2C688.1 343.1 688.7 341 688.9 340.3C689.1 339.7 688.7 339.7 688.5 340.3C688.2 341 687.6 343.1 687.6 344.2C687.5 345.2 687.9 346.3 688.3 346.6C688.6 346.8 689.1 346 689.4 345.6C689.8 345.2 690.2 344.3 690.4 344C690.6 343.7 690.6 343.7 690.6 344C690.6 344.3 690.5 345.2 690.6 345.6C690.7 346 691.1 346.4 691.2 346.6M695.1 346.6C695.5 346.1 697 345.1 697.7 344C698.4 342.8 699 340.4 699.1 339.7C699.1 339 698.5 339 698.1 339.7C697.8 340.4 697 342.8 696.9 344C696.9 345.1 697.6 345.9 698 346.6C698.3 347.2 698.9 347.3 699 347.9C699.1 348.5 698.8 349.7 698.6 350.1C698.5 350.4 698.1 350.4 698.2 350.1C698.3 349.7 698.6 348.5 699.1 347.9C699.5 347.3 700.4 347 700.9 346.6C701.5 346.2 702 346 702.4 345.5C702.8 345 703.2 344 703.3 343.7C703.4 343.4 703.2 343.4 703.2 343.7C703.1 344 702.9 345 703 345.5C703.1 346 703.4 346.6 703.8 346.6C704.2 346.6 704.9 346 705.3 345.5C705.7 345.1 706 344.2 706.1 343.9C706.3 343.6 706.1 343.6 706 343.9C706 344.2 705.8 345.1 705.9 345.5C706 346 706.2 346.8 706.7 346.6C707.2 346.3 708.3 345.1 708.9 344C709.5 342.9 710.3 340.5 710.4 339.8C710.6 339.1 710.2 339.1 710 339.8C709.8 340.5 709.1 342.9 709 344C709 345.1 709.3 346.4 709.7 346.6C710 346.8 710.6 345.9 711 345.3C711.4 344.7 711.9 343.6 712.1 343.2C712.3 342.9 712.2 342.9 712.2 343.2C712.1 343.6 711.9 344.7 712 345.3C712 345.9 712.3 346.5 712.6 346.6C712.9 346.6 713.5 346 713.9 345.6C714.3 345.2 714.6 344.3 714.8 344C714.9 343.8 714.8 343.8 714.8 344C714.8 344.3 714.6 345.2 714.7 345.6C714.9 346 715.1 346.6 715.5 346.6C715.9 346.6 716.5 346 716.9 345.5C717.3 345 717.7 344 717.8 343.7C718 343.4 717.8 343.4 717.8 343.7C717.8 344 717.6 345 717.7 345.5C717.8 346 718.1 346.6 718.4 346.6C718.7 346.6 719.2 346 719.6 345.6C719.9 345.2 720.3 344.4 720.5 344.1C720.7 343.9 720.7 343.9 720.7 344.1C720.8 344.4 720.7 345.2 720.8 345.6C720.8 346 721.2 346.4 721.3 346.6M725.9 346.6C726.3 346.1 727.8 345.1 728.5 343.9C729.2 342.8 729.8 340.4 729.9 339.7C730 338.9 729.3 338.9 728.9 339.7C728.6 340.4 727.8 342.8 727.8 343.9C727.7 345.1 728.5 345.9 728.8 346.6C729.1 347.2 729.7 347.3 729.8 347.9C729.9 348.5 729.6 349.7 729.4 350.1C729.3 350.4 728.9 350.4 729 350.1C729.1 349.7 729.4 348.5 729.9 347.9C730.4 347.3 731.4 346.8 731.7 346.6" stroke="#242424" stroke-width="0.96" fill="none" stroke-linecap="round" stroke-linejoin="round"/>
<path d="M665 364.5C665.6 363.8 667.8 362.3 668.8 360.6C669.8 358.9 670.8 355.4 670.9 354.3C671 353.3 670 353.3 669.5 354.3C668.9 355.4 667.8 358.9 667.7 360.6C667.7 362.3 668.7 364.1 669.2 364.5C669.8 364.9 670.4 363.6 670.9 362.9C671.4 362.3 672 360.9 672.3 360.4C672.7 360 672.7 360 672.8 360.4C672.9 360.9 672.7 362.3 672.8 362.9C672.9 363.6 672.9 364.7 673.5 364.5C674.1 364.2 675.7 362.8 676.5 361.4C677.3 360.1 678.1 357.4 678.3 356.5C678.5 355.7 678 355.7 677.7 356.5C677.4 357.4 676.6 360.1 676.6 361.4C676.6 362.8 677.3 364.3 677.7 364.5C678.2 364.7 678.8 363.5 679.4 362.7C679.9 361.9 680.7 360.2 681 359.7C681.4 359.2 681.5 359.2 681.5 359.7C681.6 360.2 681.3 361.9 681.4 362.7C681.5 363.5 681.5 364.5 682 364.5C682.4 364.5 683.4 363.4 684 362.5C684.6 361.7 685.3 359.9 685.6 359.3C685.9 358.8 685.7 358.8 685.7 359.3C685.7 359.9 685.3 361.7 685.4 362.5C685.5 363.4 685.5 364.8 686.2 364.5C686.9 364.2 688.5 362.4 689.4 360.8C690.3 359.2 691.3 355.9 691.5 354.9C691.8 353.9 691.2 353.9 690.9 354.9C690.5 355.9 689.6 359.2 689.5 360.8C689.4 362.4 690 364.1 690.5 364.5C690.9 364.9 691.8 363.7 692.3 363.1C692.8 362.4 693.4 361.1 693.6 360.8C693.9 360.4 693.8 360.4 693.8 360.8C693.8 361.1 693.6 362.4 693.7 363.1C693.9 363.7 694 364.9 694.7 364.5C695.4 364 697.1 362.1 698 360.3C699 358.4 700.2 354.6 700.5 353.5C700.7 352.3 700.2 352.3 699.8 353.5C699.4 354.6 698.3 358.4 698.1 360.3C698 362.1 698.8 363.8 698.9 364.5M706.8 364.5C707.4 363.8 709.7 362.2 710.7 360.4C711.7 358.6 712.7 354.9 712.8 353.8C712.9 352.7 711.9 352.7 711.4 353.8C710.9 354.9 709.6 358.6 709.6 360.4C709.5 362.2 710.5 363.5 711 364.5C711.5 365.5 712.3 365.6 712.5 366.4C712.6 367.3 712.1 369 711.9 369.6C711.7 370.1 711.2 370.1 711.3 369.6C711.4 369 712 367.3 712.6 366.4C713.3 365.6 714.6 364.5 715.3 364.5C715.9 364.5 716.6 365.6 716.7 366.4C716.9 367.3 716.4 369 716.2 369.6C716 370.1 715.4 370.1 715.5 369.6C715.6 369 716.2 367.3 716.9 366.4C717.5 365.6 718.6 365.3 719.5 364.5C720.4 363.6 721.7 362.8 722.5 361.4C723.3 360.1 724.1 357.3 724.3 356.5C724.5 355.7 724 355.7 723.7 356.5C723.4 357.3 722.6 360.1 722.6 361.4C722.6 362.8 723.3 364.3 723.7 364.5C724.2 364.7 725 363.4 725.6 362.6C726.1 361.8 726.8 360.1 727.2 359.6C727.5 359.1 727.5 359.1 727.5 359.6C727.5 360.1 727.2 361.8 727.3 362.6C727.4 363.4 727.6 363.8 728 364.5C728.3 365.1 729.3 365.6 729.5 366.4C729.6 367.3 729.1 369 728.9 369.6C728.7 370.1 728.1 370.1 728.3 369.6C728.4 369 728.9 367.3 729.6 366.4C730.3 365.6 731.8 364.8 732.2 364.5" stroke="#242424" stroke-width="1.04" fill="none" stroke-linecap="round" stroke-linejoin="round"/>
<line x1="733" y1="368" x2="714" y2="387" stroke="#555" stroke-width="0.8"/>
<path d="M692 284C692.4 283.6 693.6 282.7 694.2 281.6C694.8 280.6 695.4 278.4 695.5 277.7C695.5 277.1 695 277.1 694.7 277.7C694.4 278.4 693.7 280.6 693.6 281.6C693.6 282.7 694.1 283.4 694.4 284C694.7 284.6 695.1 284.6 695.2 285.1C695.3 285.6 695 286.6 694.9 286.9C694.8 287.2 694.5 287.2 694.5 286.9C694.6 286.6 694.9 285.6 695.3 285.1C695.7 284.6 696.3 284.4 696.8 284C697.2 283.7 697.6 283.4 698 283C698.3 282.5 698.7 281.6 698.8 281.3C698.9 281 698.8 281 698.8 281.3C698.7 281.6 698.5 282.5 698.6 283C698.7 283.4 698.9 284 699.2 284C699.4 284.1 700 283.6 700.3 283.2C700.6 282.9 700.9 282.1 701 281.9C701.1 281.7 701 281.7 701 281.9C700.9 282.1 700.8 282.9 700.9 283.2C701 283.6 701.3 284 701.5 284C701.8 284 702.3 283.5 702.6 283.1C702.9 282.8 703.2 282 703.4 281.7C703.5 281.5 703.5 281.5 703.5 281.7C703.5 282 703.3 282.8 703.4 283.1C703.5 283.5 703.7 284 703.9 284C704.2 284 704.6 283.4 704.9 283C705.3 282.5 705.7 281.6 705.8 281.3C706 281 706 281 706.1 281.3C706.1 281.6 705.9 282.5 706 283C706 283.4 706 284.2 706.3 284C706.7 283.8 707.6 282.8 708.1 281.9C708.6 281 709.2 279.1 709.4 278.5C709.5 277.9 709.2 277.9 709 278.5C708.8 279.1 708.2 281 708.2 281.9C708.1 282.8 708.4 283.8 708.7 284C709 284.2 709.5 283.4 709.9 283C710.2 282.5 710.6 281.6 710.7 281.3C710.9 281 710.8 281 710.7 281.3C710.7 281.6 710.5 282.5 710.5 283C710.6 283.4 710.8 284 711.1 284C711.4 284 711.9 283.4 712.2 282.9C712.5 282.4 712.9 281.5 713.1 281.2C713.3 280.9 713.2 280.9 713.2 281.2C713.2 281.5 713 282.4 713 282.9C713.1 283.4 713.2 284 713.5 284C713.7 284.1 714.1 283.6 714.4 283.2C714.7 282.9 715 282.2 715.2 282C715.4 281.7 715.4 281.7 715.4 282C715.4 282.2 715.3 282.9 715.4 283.2C715.5 283.6 715.6 284 715.9 284C716.1 284 716.7 283.6 717 283.3C717.2 282.9 717.5 282.2 717.7 282C717.8 281.8 717.7 281.8 717.7 282C717.7 282.2 717.5 282.9 717.6 283.3C717.7 283.6 718 283.7 718.3 284C718.5 284.3 719 284.6 719.1 285.1C719.2 285.6 718.9 286.6 718.8 286.9C718.7 287.2 718.3 287.2 718.4 286.9C718.5 286.6 718.8 285.6 719.2 285.1C719.5 284.6 720.2 284.4 720.6 284C721 283.7 721.3 283.4 721.6 282.9C721.9 282.4 722.3 281.4 722.6 281.1C722.8 280.8 722.8 280.8 722.8 281.1C722.9 281.4 722.7 282.4 722.7 282.9C722.8 283.4 722.7 284.2 723 284C723.4 283.9 724.3 282.9 724.8 282C725.3 281.1 725.8 279.3 726 278.7C726.1 278.2 725.8 278.2 725.6 278.7C725.4 279.3 724.9 281.1 724.9 282C724.8 282.9 725.2 283.5 725.4 284C725.6 284.5 726.2 284.6 726.2 285.1C726.3 285.6 726 286.6 725.9 286.9C725.8 287.2 725.5 287.2 725.6 286.9C725.6 286.6 725.9 285.6 726.3 285.1C726.7 284.6 727.4 284.3 727.8 284C728.2 283.7 728.6 283.6 728.9 283.3C729.2 283 729.5 282.3 729.6 282.1C729.7 281.9 729.6 281.9 729.5 282.1C729.5 282.3 729.4 283 729.5 283.3C729.6 283.6 729.9 284.1 730.2 284C730.5 284 730.9 283.4 731.3 283C731.6 282.5 732 281.6 732.1 281.3C732.3 281 732.3 281 732.3 281.3C732.3 281.6 732.1 282.5 732.1 283C732.2 283.4 732.3 284 732.6 284C732.8 284 733.3 283.5 733.7 283C734 282.6 734.3 281.7 734.5 281.4C734.7 281.2 734.6 281.2 734.6 281.4C734.6 281.7 734.4 282.6 734.5 283C734.5 283.5 734.7 284 735 284C735.2 284 735.7 283.5 736 283.2C736.3 282.8 736.6 282 736.8 281.8C736.9 281.5 736.9 281.5 736.9 281.8C736.9 282 736.8 282.8 736.8 283.2C736.9 283.5 737.1 284.1 737.3 284C737.6 284 738.3 283.4 738.6 283C738.9 282.5 739.3 281.6 739.4 281.3C739.5 281 739.4 281 739.3 281.3C739.3 281.6 739 282.5 739.1 283C739.2 283.4 739.5 283.7 739.7 284C740 284.4 740.5 284.6 740.6 285.1C740.7 285.6 740.4 286.6 740.3 286.9C740.1 287.2 739.8 287.2 739.9 286.9C740 286.6 740.3 285.6 740.6 285.1C741 284.6 741.9 284.2 742.1 284" stroke="#242424" stroke-width="0.7200000000000001" fill="none" stroke-linecap="round" stroke-linejoin="round" opacity="0.8"/>
<path d="M708 292.2C708.2 292.1 708.7 291.8 709 291.4C709.2 291 709.6 290.3 709.7 290C709.9 289.8 709.9 289.8 709.9 290C709.9 290.3 709.8 291 709.9 291.4C709.9 291.8 710.1 291.9 710.3 292.2C710.5 292.5 711 292.8 711.1 293.2C711.2 293.6 711 294.5 710.9 294.8C710.8 295 710.5 295 710.5 294.8C710.6 294.5 710.8 293.6 711.2 293.2C711.5 292.8 712.1 292.7 712.6 292.2C713.1 291.8 713.8 291.3 714.2 290.5C714.7 289.8 715.2 288.2 715.3 287.7C715.4 287.3 715.1 287.3 714.9 287.7C714.8 288.2 714.3 289.8 714.3 290.5C714.3 291.3 714.6 292.1 714.9 292.2C715.2 292.4 715.8 291.7 716.1 291.3C716.4 290.8 716.8 289.9 716.9 289.7C717 289.4 716.8 289.4 716.8 289.7C716.7 289.9 716.5 290.8 716.6 291.3C716.7 291.7 716.9 292.2 717.2 292.2C717.5 292.2 718.1 291.7 718.4 291.3C718.8 290.8 719.1 289.9 719.2 289.7C719.3 289.4 719.1 289.4 719.1 289.7C719 289.9 718.8 290.8 718.9 291.3C718.9 291.7 719.2 292.2 719.5 292.2C719.8 292.2 720.1 291.7 720.4 291.3C720.7 290.9 721 290.1 721.2 289.8C721.4 289.6 721.5 289.6 721.5 289.8C721.6 290.1 721.4 290.9 721.5 291.3C721.5 291.7 721.6 292.2 721.8 292.2C722 292.3 722.4 291.8 722.7 291.4C723 291 723.4 290.2 723.5 290C723.7 289.8 723.7 289.8 723.7 290C723.7 290.2 723.6 291 723.7 291.4C723.7 291.8 723.9 292.3 724.1 292.2C724.3 292.2 724.8 291.7 725.1 291.3C725.5 290.8 725.8 289.9 726 289.7C726.1 289.4 726.1 289.4 726.1 289.7C726.1 289.9 725.9 290.8 725.9 291.3C726 291.7 726.2 292.2 726.4 292.2C726.6 292.3 727 291.8 727.3 291.5C727.6 291.2 727.9 290.5 728.1 290.3C728.2 290.1 728.2 290.1 728.2 290.3C728.3 290.5 728.1 291.2 728.2 291.5C728.3 291.8 728.5 292.2 728.7 292.2C728.9 292.3 729.3 291.9 729.5 291.6C729.8 291.3 730.1 290.7 730.2 290.5C730.4 290.3 730.4 290.3 730.5 290.5C730.5 290.7 730.5 291.3 730.6 291.6C730.6 291.9 730.9 292.1 731 292.2" stroke="#242424" stroke-width="0.7200000000000001" fill="none" stroke-linecap="round" stroke-linejoin="round" opacity="0.8"/>
<path d="M692 311.5C692.6 310.9 694.8 309.4 695.8 307.8C696.7 306.1 697.6 302.7 697.7 301.7C697.8 300.7 696.9 300.7 696.3 301.7C695.8 302.7 694.7 306.1 694.7 307.8C694.7 309.4 695.7 311.1 696.2 311.5C696.8 311.8 697.6 310.6 698.2 309.9C698.7 309.3 699.3 307.8 699.5 307.4C699.8 307 699.6 307 699.6 307.4C699.6 307.8 699.4 309.3 699.5 309.9C699.6 310.6 700 311.5 700.5 311.5C701 311.5 701.9 310.5 702.4 309.8C703 309.1 703.6 307.6 703.9 307.1C704.1 306.7 704 306.7 704 307.1C704 307.6 703.7 309.1 703.8 309.8C703.9 310.5 704.3 311.4 704.7 311.5C705.2 311.5 705.8 310.7 706.3 310.1C706.8 309.5 707.4 308.3 707.7 307.9C708 307.5 708.1 307.5 708.2 307.9C708.2 308.3 708.1 309.5 708.2 310.1C708.3 310.7 708.6 311.5 709 311.5C709.4 311.4 710.1 310.5 710.6 309.8C711.1 309.1 711.8 307.6 712.2 307.1C712.5 306.7 712.6 306.7 712.7 307.1C712.7 307.6 712.5 309.1 712.6 309.8C712.7 310.5 712.9 311.4 713.2 311.5C713.6 311.5 714.3 310.7 714.8 310C715.3 309.4 715.9 308 716.2 307.6C716.6 307.2 716.7 307.2 716.8 307.6C716.8 308 716.7 309.4 716.8 310C716.9 310.7 717 311.5 717.5 311.5C717.9 311.5 718.8 310.7 719.3 310C719.8 309.4 720.4 308 720.6 307.6C720.9 307.2 720.8 307.2 720.8 307.6C720.8 308 720.6 309.4 720.8 310C720.9 310.7 721.2 311.5 721.7 311.5C722.2 311.5 723 310.7 723.6 310C724.1 309.4 724.7 308.1 724.9 307.7C725.1 307.3 725 307.3 725 307.7C725 308.1 724.8 309.4 724.9 310C725.1 310.7 725.3 311.9 725.9 311.5C726.6 311.1 728.2 309.4 729.1 307.8C730 306.2 731 302.8 731.3 301.8C731.5 300.8 731 300.8 730.6 301.8C730.3 302.8 729.3 306.2 729.2 307.8C729.2 309.4 730 310.9 730.2 311.5" stroke="#242424" stroke-width="0.8" fill="none" stroke-linecap="round" stroke-linejoin="round"/>
<path d="M417 465.7C417.6 465.1 419.7 463.6 420.6 462C421.5 460.4 422.4 457.1 422.5 456.1C422.6 455.1 421.7 455.1 421.2 456.1C420.7 457.1 419.6 460.4 419.6 462C419.5 463.6 420.3 465.6 421 465.7C421.7 465.8 423.1 463.8 423.9 462.3C424.7 460.9 425.7 457.8 425.9 456.9C426.1 456 425.6 456 425.3 456.9C425 457.8 424.1 460.9 424 462.3C424 463.8 424.5 465.4 425 465.7C425.4 466 426.3 464.8 426.9 464.1C427.4 463.4 428 462 428.2 461.6C428.4 461.2 428.2 461.2 428.2 461.6C428.1 462 427.8 463.4 428 464.1C428.1 464.8 428.4 465.7 428.9 465.7C429.4 465.7 430.4 465 430.9 464.4C431.5 463.9 431.9 462.7 432 462.3C432.2 462 431.9 462 431.8 462.3C431.8 462.7 431.5 463.9 431.7 464.4C431.9 465 432.4 465.7 432.9 465.7C433.4 465.7 434.3 465 434.8 464.4C435.3 463.9 435.8 462.7 436 462.4C436.1 462 435.9 462 435.9 462.4C435.8 462.7 435.6 463.9 435.8 464.4C435.9 465 436.4 465.7 436.9 465.7C437.4 465.7 438.4 465 438.9 464.4C439.4 463.8 439.9 462.6 440 462.2C440.2 461.9 439.9 461.9 439.8 462.2C439.8 462.6 439.5 463.8 439.7 464.4C439.8 465 440.4 465.8 440.9 465.7C441.3 465.6 441.9 464.7 442.5 464C443 463.2 443.6 461.7 444 461.2C444.3 460.8 444.4 460.8 444.4 461.2C444.5 461.7 444.2 463.2 444.3 464C444.4 464.7 444.5 465.6 444.8 465.7C445.2 465.8 445.9 465 446.4 464.5C446.8 463.9 447.4 462.8 447.6 462.4C447.9 462.1 447.9 462.1 448 462.4C448.1 462.8 447.9 463.9 448.1 464.5C448.2 465 448.7 465.5 448.8 465.7" stroke="#242424" stroke-width="0.8800000000000001" fill="none" stroke-linecap="round" stroke-linejoin="round"/>
<path d="M417 480.4C417.5 479.9 419.2 478.6 419.9 477.3C420.7 476 421.4 473.2 421.5 472.4C421.6 471.6 420.9 471.6 420.5 472.4C420.1 473.2 419.1 476 419.1 477.3C419 478.6 419.8 479.6 420.2 480.4C420.5 481.1 421.2 481.2 421.3 481.8C421.4 482.5 421 483.8 420.9 484.2C420.7 484.6 420.3 484.6 420.4 484.2C420.5 483.8 420.9 482.5 421.4 481.8C421.9 481.2 422.8 480.8 423.4 480.4C423.9 479.9 424.3 479.6 424.8 479C425.2 478.4 425.7 477.2 425.9 476.9C426.1 476.5 426.1 476.5 426.1 476.9C426.1 477.2 425.9 478.4 425.9 479C426 479.6 426.2 480.4 426.5 480.4C426.9 480.4 427.7 479.6 428.2 479.1C428.6 478.5 429.1 477.3 429.2 477C429.4 476.6 429.2 476.6 429.1 477C429 477.3 428.8 478.5 428.9 479.1C429 479.6 429.3 480.4 429.7 480.4C430.1 480.3 430.9 479.5 431.4 478.9C431.9 478.3 432.3 477 432.5 476.6C432.7 476.2 432.5 476.2 432.4 476.6C432.3 477 432 478.3 432.1 478.9C432.2 479.5 432.6 479.9 432.9 480.4C433.2 480.8 433.9 481.2 434 481.8C434.1 482.5 433.8 483.8 433.6 484.2C433.5 484.6 433 484.6 433.1 484.2C433.2 483.8 433.6 482.5 434.1 481.8C434.6 481.2 435.5 480.8 436.1 480.4C436.7 479.9 437.2 479.7 437.6 479.2C438 478.7 438.4 477.7 438.6 477.4C438.8 477 438.6 477 438.6 477.4C438.5 477.7 438.3 478.7 438.4 479.2C438.6 479.7 438.9 480.4 439.3 480.4C439.6 480.3 440.1 479.6 440.5 479C441 478.4 441.5 477.1 441.8 476.7C442 476.3 442.1 476.3 442.2 476.7C442.2 477.1 442 478.4 442 479C442.1 479.6 442.1 480.4 442.5 480.4C442.8 480.4 443.7 479.6 444.1 479C444.6 478.4 445 477.2 445.2 476.8C445.3 476.5 445.1 476.5 445 476.8C445 477.2 444.7 478.4 444.8 479C444.9 479.6 445.3 480.3 445.6 480.4C446 480.4 446.6 479.8 447 479.4C447.4 478.9 447.8 478 448 477.8C448.1 477.5 448 477.5 448 477.8C448.1 478 447.9 478.9 448 479.4C448.2 479.8 448.3 480.7 448.8 480.4C449.4 480.1 450.5 478.8 451.2 477.6C451.9 476.3 452.7 473.8 452.9 473C453 472.3 452.6 472.3 452.4 473C452.1 473.8 451.4 476.3 451.3 477.6C451.2 478.8 451.6 480.1 452 480.4C452.4 480.7 453.2 479.8 453.6 479.3C454 478.9 454.3 477.9 454.5 477.7C454.6 477.4 454.4 477.4 454.3 477.7C454.3 477.9 454.1 478.9 454.2 479.3C454.4 479.8 455 480.2 455.2 480.4" stroke="#242424" stroke-width="0.8" fill="none" stroke-linecap="round" stroke-linejoin="round" opacity="0.8"/>
<path d="M415 492.8C415.2 493 415.8 493.5 415.9 494C416 494.5 415.7 495.6 415.6 496C415.5 496.3 415.1 496.3 415.2 496C415.2 495.6 415.6 494.5 416 494C416.4 493.5 417.2 493.2 417.7 492.8C418.1 492.4 418.5 492.1 418.9 491.6C419.3 491.1 419.7 490.1 419.9 489.7C420 489.4 419.9 489.4 419.9 489.7C419.9 490.1 419.7 491.1 419.7 491.6C419.8 492.1 419.9 492.9 420.3 492.8C420.7 492.7 421.7 491.7 422.2 490.9C422.7 490.1 423.2 488.3 423.3 487.8C423.5 487.3 423.1 487.3 422.9 487.8C422.7 488.3 422.2 490.1 422.2 490.9C422.2 491.7 422.5 492.9 423 492.8C423.4 492.7 424.4 491.4 425 490.3C425.6 489.2 426.3 486.8 426.5 486.2C426.7 485.5 426.3 485.5 426.1 486.2C425.8 486.8 425.2 489.2 425.1 490.3C425 491.4 425.4 492.2 425.6 492.8C425.8 493.4 426.4 493.5 426.5 494C426.6 494.5 426.3 495.6 426.2 496C426.1 496.3 425.7 496.3 425.8 496C425.8 495.6 426.2 494.5 426.6 494C427 493.5 427.8 493.2 428.3 492.8C428.7 492.4 429.1 492.3 429.5 491.9C429.8 491.5 430.2 490.6 430.3 490.4C430.5 490.1 430.3 490.1 430.3 490.4C430.3 490.6 430.1 491.5 430.2 491.9C430.3 492.3 430.8 492.6 430.9 492.8M435.1 492.8C435.3 492.6 436 492.2 436.4 491.8C436.7 491.3 437.1 490.4 437.2 490.1C437.4 489.8 437.3 489.8 437.3 490.1C437.2 490.4 437 491.3 437.1 491.8C437.2 492.2 437.5 492.8 437.8 492.8C438 492.8 438.4 492.1 438.8 491.6C439.1 491.1 439.6 489.9 439.9 489.6C440.1 489.3 440.2 489.3 440.2 489.6C440.3 489.9 440.1 491.1 440.1 491.6C440.1 492.1 440.2 492.7 440.4 492.8C440.6 492.9 441.2 492.3 441.5 491.9C441.9 491.5 442.2 490.7 442.4 490.5C442.5 490.3 442.5 490.3 442.5 490.5C442.5 490.7 442.4 491.5 442.5 491.9C442.5 492.3 442.8 492.8 443.1 492.8C443.3 492.8 443.7 492.1 444.1 491.6C444.4 491.1 444.9 490.1 445.1 489.8C445.3 489.5 445.4 489.5 445.5 489.8C445.5 490.1 445.3 491.1 445.4 491.6C445.4 492.1 445.5 492.4 445.7 492.8C445.9 493.2 446.5 493.5 446.6 494C446.7 494.5 446.4 495.6 446.3 496C446.2 496.3 445.8 496.3 445.9 496C446 495.6 446.3 494.5 446.7 494C447.1 493.5 447.9 493.2 448.4 492.8C448.8 492.4 449.2 492.2 449.5 491.7C449.9 491.2 450.3 490.2 450.5 489.9C450.7 489.6 450.6 489.6 450.6 489.9C450.6 490.2 450.5 491.2 450.5 491.7C450.6 492.2 450.9 492.6 451 492.8M455.5 492.8C455.7 492.6 456.4 492.2 456.8 491.8C457.1 491.4 457.5 490.5 457.6 490.2C457.7 490 457.5 490 457.5 490.2C457.5 490.5 457.3 491.4 457.4 491.8C457.5 492.2 457.8 492.8 458.1 492.8C458.4 492.8 458.8 492.3 459.2 492C459.5 491.6 459.8 490.8 460 490.6C460.2 490.4 460.2 490.4 460.2 490.6C460.2 490.8 460.1 491.6 460.2 492C460.3 492.3 460.5 492.5 460.8 492.8C461 493.1 461.6 493.5 461.7 494C461.8 494.5 461.5 495.6 461.3 496C461.2 496.3 460.9 496.3 460.9 496C461 495.6 461.4 494.5 461.8 494C462.2 493.5 463 493.2 463.4 492.8C463.9 492.4 464.1 492.2 464.4 491.7C464.7 491.3 465.2 490.3 465.4 490C465.6 489.7 465.7 489.7 465.8 490C465.8 490.3 465.7 491.3 465.7 491.7C465.8 492.2 465.9 492.4 466.1 492.8C466.3 493.2 466.9 493.5 467 494C467.1 494.5 466.8 495.6 466.6 496C466.5 496.3 466.2 496.3 466.2 496C466.3 495.6 466.7 494.5 467.1 494C467.5 493.5 468.2 493.2 468.7 492.8C469.2 492.4 469.6 492.2 469.9 491.8C470.3 491.3 470.6 490.4 470.8 490.2C471 489.9 470.9 489.9 470.9 490.2C470.9 490.4 470.7 491.3 470.8 491.8C470.9 492.2 471.3 492.6 471.4 492.8" stroke="#242424" stroke-width="0.7200000000000001" fill="none" stroke-linecap="round" stroke-linejoin="round" opacity="0.8"/>
<path d="M413 505.1C413.5 504.6 415.3 503.3 416.1 501.9C417 500.4 417.8 497.4 417.9 496.5C418 495.7 417.2 495.7 416.7 496.5C416.3 497.4 415.3 500.4 415.3 501.9C415.2 503.3 416 504.8 416.4 505.1C416.9 505.5 417.5 504.5 417.9 504.1C418.3 503.6 418.7 502.6 418.9 502.4C419.1 502.1 419.1 502.1 419.1 502.4C419.1 502.6 419 503.6 419.1 504.1C419.2 504.5 419.6 505.1 419.9 505.1C420.2 505.1 420.8 504.5 421.2 504.1C421.5 503.6 422 502.6 422.3 502.3C422.5 502 422.6 502 422.7 502.3C422.7 502.6 422.6 503.6 422.7 504.1C422.8 504.5 423 505.2 423.3 505.1C423.7 505.1 424.3 504.5 424.7 503.9C425.1 503.4 425.6 502.3 425.9 502C426.1 501.7 426.1 501.7 426.2 502C426.2 502.3 426 503.4 426.1 503.9C426.3 504.5 426.4 505.1 426.8 505.1C427.2 505.1 427.9 504.5 428.3 503.9C428.8 503.4 429.2 502.3 429.4 502C429.6 501.7 429.5 501.7 429.5 502C429.5 502.3 429.3 503.4 429.4 503.9C429.5 504.5 429.8 505.2 430.2 505.1C430.7 505.1 431.6 504.2 432.1 503.6C432.6 502.9 433.1 501.4 433.3 501C433.5 500.6 433.2 500.6 433.1 501C433 501.4 432.7 502.9 432.8 503.6C432.9 504.2 433.1 505.4 433.7 505.1C434.3 504.9 435.5 503.4 436.3 502.1C437 500.8 437.9 498 438.1 497.2C438.3 496.4 437.8 496.4 437.5 497.2C437.3 498 436.4 500.8 436.4 502.1C436.3 503.4 437 504.6 437.1 505.1M443.9 505.1C444.5 504.6 446.3 503.3 447.1 501.8C447.9 500.4 448.7 497.4 448.8 496.5C448.9 495.6 448.1 495.6 447.7 496.5C447.2 497.4 446.3 500.4 446.2 501.8C446.2 503.3 446.9 504.8 447.4 505.1C447.8 505.5 448.3 504.4 448.8 503.9C449.2 503.3 449.7 502.2 449.9 501.9C450.2 501.5 450.2 501.5 450.2 501.9C450.3 502.2 450.1 503.3 450.2 503.9C450.3 504.4 450.4 505.2 450.8 505.1C451.2 505.1 452.2 504.3 452.7 503.6C453.2 502.9 453.7 501.5 453.8 501.1C454 500.7 453.8 500.7 453.7 501.1C453.6 501.5 453.3 502.9 453.4 503.6C453.5 504.3 453.8 505.1 454.3 505.1C454.7 505.2 455.5 504.5 455.9 503.9C456.4 503.4 456.8 502.3 457 501.9C457.1 501.6 457 501.6 456.9 501.9C456.9 502.3 456.7 503.4 456.8 503.9C456.9 504.5 457.3 505.2 457.7 505.1C458.1 505.1 458.9 504.4 459.3 503.8C459.8 503.2 460.3 502 460.5 501.6C460.7 501.3 460.5 501.3 460.5 501.6C460.5 502 460.3 503.2 460.4 503.8C460.5 504.4 460.8 505.1 461.2 505.1C461.5 505.1 462.2 504.4 462.7 503.8C463.1 503.2 463.6 501.9 463.9 501.6C464.1 501.2 464 501.2 464.1 501.6C464.1 501.9 463.8 503.2 463.9 503.8C464 504.4 464.1 505.4 464.6 505.1C465.1 504.9 466.4 503.6 467.1 502.3C467.8 501.1 468.6 498.5 468.8 497.8C469 497 468.5 497 468.3 497.8C468 498.5 467.3 501.1 467.2 502.3C467.2 503.6 467.7 504.9 468.1 505.1C468.5 505.3 469.2 504.2 469.7 503.5C470.1 502.8 470.7 501.4 471 500.9C471.2 500.5 471.1 500.5 471.1 500.9C471.1 501.4 470.8 502.8 470.9 503.5C470.9 504.2 471.4 504.9 471.5 505.1" stroke="#242424" stroke-width="0.8" fill="none" stroke-linecap="round" stroke-linejoin="round"/>
<path d="M415 519.8C415.4 519.4 416.8 518.5 417.4 517.4C418 516.4 418.6 514.2 418.6 513.6C418.7 512.9 418.1 512.9 417.8 513.6C417.4 514.2 416.7 516.4 416.7 517.4C416.7 518.5 417.3 519.5 417.7 519.8C418 520.1 418.3 519.3 418.6 518.9C418.9 518.6 419.3 517.8 419.5 517.5C419.7 517.3 419.8 517.3 419.8 517.5C419.9 517.8 419.8 518.6 419.9 518.9C420 519.3 420 519.8 420.3 519.8C420.6 519.8 421.1 519.2 421.5 518.8C421.8 518.4 422.2 517.4 422.3 517.2C422.5 516.9 422.5 516.9 422.5 517.2C422.5 517.4 422.3 518.4 422.4 518.8C422.5 519.2 422.7 519.8 423 519.8C423.2 519.8 423.6 519.3 424 518.9C424.3 518.5 424.7 517.6 424.9 517.3C425.1 517.1 425.1 517.1 425.2 517.3C425.2 517.6 425.1 518.5 425.2 518.9C425.2 519.3 425.2 520 425.6 519.8C426 519.6 427 518.6 427.5 517.7C428.1 516.7 428.7 514.8 428.8 514.2C429 513.6 428.6 513.6 428.4 514.2C428.2 514.8 427.6 516.7 427.6 517.7C427.6 518.6 427.9 519.6 428.3 519.8C428.6 520 429.1 519.2 429.5 518.7C429.9 518.2 430.3 517.2 430.4 516.9C430.6 516.6 430.5 516.6 430.5 516.9C430.5 517.2 430.3 518.2 430.4 518.7C430.4 519.2 430.6 519.8 430.9 519.8C431.2 519.8 431.9 519.3 432.3 518.8C432.6 518.4 432.9 517.6 433 517.3C433.2 517 433 517 432.9 517.3C432.9 517.6 432.7 518.4 432.8 518.8C432.9 519.3 433.3 519.8 433.6 519.8C433.9 519.8 434.2 519.3 434.6 519C434.9 518.6 435.2 517.8 435.4 517.6C435.6 517.4 435.6 517.4 435.7 517.6C435.7 517.8 435.6 518.6 435.7 519C435.8 519.3 435.9 519.9 436.2 519.8C436.5 519.7 437 519.1 437.4 518.6C437.8 518 438.2 516.9 438.4 516.6C438.6 516.2 438.6 516.2 438.6 516.6C438.6 516.9 438.4 518 438.4 518.6C438.5 519.1 438.6 519.8 438.9 519.8C439.2 519.8 439.8 519.2 440.2 518.8C440.6 518.4 440.9 517.5 441 517.2C441.1 516.9 441 516.9 440.9 517.2C440.9 517.5 440.7 518.4 440.8 518.8C440.9 519.2 441.1 520 441.5 519.8C442 519.6 442.9 518.5 443.5 517.5C444 516.5 444.7 514.5 444.8 513.8C445 513.2 444.6 513.2 444.4 513.8C444.2 514.5 443.6 516.5 443.6 517.5C443.5 518.5 443.9 519.6 444.2 519.8C444.4 520 444.9 519.3 445.2 518.9C445.5 518.5 445.9 517.6 446.1 517.4C446.3 517.1 446.3 517.1 446.3 517.4C446.4 517.6 446.3 518.5 446.3 518.9C446.4 519.3 446.4 520 446.8 519.8C447.2 519.6 448.2 518.7 448.7 517.8C449.2 516.9 449.8 515.1 449.9 514.5C450.1 514 449.7 514 449.5 514.5C449.3 515.1 448.8 516.9 448.8 517.8C448.8 518.7 449.2 519.3 449.5 519.8C449.7 520.3 450.3 520.5 450.4 521C450.5 521.5 450.2 522.6 450.1 523C449.9 523.3 449.6 523.3 449.6 523C449.7 522.6 450.1 521.5 450.5 521C450.9 520.5 451.7 520.2 452.1 519.8C452.6 519.4 452.9 519.3 453.2 518.9C453.6 518.5 453.9 517.7 454.1 517.4C454.3 517.2 454.2 517.2 454.2 517.4C454.3 517.7 454.1 518.5 454.2 518.9C454.3 519.3 454.5 519.4 454.8 519.8C455 520.2 455.6 520.5 455.7 521C455.8 521.5 455.5 522.6 455.4 523C455.2 523.3 454.9 523.3 455 523C455 522.6 455.4 521.5 455.8 521C456.2 520.5 456.9 520.2 457.4 519.8C457.9 519.4 458.3 519.1 458.7 518.6C459.1 518.1 459.5 517 459.7 516.7C459.8 516.4 459.7 516.4 459.7 516.7C459.7 517 459.4 518.1 459.5 518.6C459.6 519.1 459.8 519.4 460.1 519.8C460.3 520.2 460.9 520.5 461 521C461.1 521.5 460.8 522.6 460.7 523C460.5 523.3 460.2 523.3 460.3 523C460.3 522.6 460.7 521.5 461.1 521C461.5 520.5 462.5 520 462.7 519.8" stroke="#242424" stroke-width="0.8" fill="none" stroke-linecap="round" stroke-linejoin="round"/>
<path d="M436 528.7C436.1 528.6 436.5 528.3 436.8 528C437 527.8 437.3 527.2 437.5 527C437.7 526.8 437.7 526.8 437.8 527C437.9 527.2 437.8 527.8 437.9 528C438 528.3 438.1 528.7 438.3 528.7C438.5 528.7 438.9 528.3 439.2 528C439.5 527.7 439.8 527 439.9 526.8C440.1 526.6 440.1 526.6 440.1 526.8C440.1 527 440 527.7 440.1 528C440.2 528.3 440.5 528.6 440.6 528.7" stroke="#242424" stroke-width="0.7200000000000001" fill="none" stroke-linecap="round" stroke-linejoin="round"/>
<path d="M429 553.1C430.1 551.9 433.8 549.2 435.5 546.3C437.2 543.3 438.9 537.2 439.1 535.3C439.3 533.5 437.6 533.5 436.7 535.3C435.8 537.2 433.8 543.3 433.7 546.3C433.6 549.2 435.1 552.4 436.2 553.1C437.2 553.7 438.9 551.4 439.9 550.1C440.9 548.9 441.9 546.2 442.2 545.4C442.5 544.6 442 544.6 441.9 545.4C441.7 546.2 441.1 548.9 441.4 550.1C441.6 551.4 442.6 552 443.3 553.1C444.1 554.1 445.6 554.9 445.8 556.3C446.1 557.8 445.2 560.7 444.9 561.6C444.5 562.5 443.6 562.5 443.8 561.6C444 560.7 444.9 557.8 446 556.3C447.1 554.9 449.2 554.1 450.5 553.1C451.8 552 452.9 551.3 453.9 550C454.9 548.7 456 545.9 456.4 545.1C456.8 544.2 456.6 544.2 456.5 545.1C456.4 545.9 455.8 548.7 456 550C456.2 551.3 456.9 553 457.6 553.1C458.4 553.1 459.8 551.4 460.7 550.1C461.6 548.8 462.8 546.1 463.3 545.3C463.8 544.5 463.8 544.5 463.8 545.3C463.9 546.1 463.4 548.8 463.5 550.1C463.7 551.4 463.7 553.6 464.8 553.1C465.9 552.6 468.6 549.7 470.1 547.1C471.5 544.4 473.2 539 473.6 537.4C474.1 535.7 473.1 535.7 472.5 537.4C472 539 470.4 544.4 470.3 547.1C470.2 549.7 471.7 552.1 472 553.1" stroke="#242424" stroke-width="0.8" fill="none" stroke-linecap="round" stroke-linejoin="round" opacity="0.8"/>
<path d="M478 472.8C478.4 472.4 479.8 471.4 480.4 470.3C481 469.2 481.6 467 481.7 466.3C481.8 465.6 481.2 465.6 480.8 466.3C480.5 467 479.8 469.2 479.7 470.3C479.7 471.4 480.3 472.5 480.7 472.8C481 473.1 481.5 472.3 481.8 471.9C482.1 471.5 482.5 470.6 482.6 470.4C482.8 470.1 482.7 470.1 482.8 470.4C482.8 470.6 482.6 471.5 482.7 471.9C482.8 472.3 482.9 473.1 483.3 472.8C483.7 472.5 484.8 471.3 485.4 470.2C486 469 486.7 466.6 486.9 465.9C487.1 465.2 486.7 465.2 486.5 465.9C486.3 466.6 485.5 469 485.5 470.2C485.4 471.3 485.7 472.6 486 472.8C486.2 473 486.7 472.1 487 471.6C487.4 471 487.8 469.9 488.1 469.6C488.3 469.2 488.4 469.2 488.4 469.6C488.5 469.9 488.3 471 488.3 471.6C488.3 472.1 488.4 472.8 488.6 472.8C488.8 472.8 489.4 472.2 489.7 471.7C490.1 471.2 490.5 470.2 490.7 469.9C490.9 469.6 490.9 469.6 490.9 469.9C490.9 470.2 490.7 471.2 490.8 471.7C490.9 472.2 490.9 472.9 491.3 472.8C491.7 472.7 492.6 471.7 493.2 470.8C493.7 469.9 494.2 468.1 494.4 467.5C494.5 467 494.2 467 494 467.5C493.8 468.1 493.2 469.9 493.2 470.8C493.2 471.7 493.5 472.9 493.9 472.8C494.4 472.7 495.4 471.4 496 470.3C496.5 469.2 497.2 466.9 497.4 466.2C497.6 465.6 497.2 465.6 497 466.2C496.8 466.9 496.1 469.2 496 470.3C496 471.4 496.1 472.8 496.6 472.8C497 472.8 498 471.4 498.6 470.3C499.2 469.1 499.9 466.8 500.1 466.1C500.3 465.5 499.9 465.5 499.7 466.1C499.5 466.8 498.8 469.1 498.7 470.3C498.6 471.4 498.9 472.5 499.2 472.8C499.5 473.1 500.1 472.2 500.4 471.8C500.8 471.3 501.2 470.4 501.3 470.1C501.5 469.8 501.4 469.8 501.4 470.1C501.4 470.4 501.2 471.3 501.3 471.8C501.4 472.2 501.8 472.6 501.9 472.8M506.5 472.8C506.9 472.4 508.3 471.4 508.9 470.4C509.5 469.3 510.1 467.1 510.2 466.5C510.3 465.8 509.6 465.8 509.3 466.5C509 467.1 508.3 469.3 508.2 470.4C508.2 471.4 508.8 472.5 509.2 472.8C509.5 473.1 510.1 472.3 510.4 471.9C510.8 471.5 511.1 470.6 511.2 470.4C511.4 470.1 511.2 470.1 511.2 470.4C511.2 470.6 511 471.5 511.1 471.9C511.2 472.3 511.5 472.8 511.8 472.8C512.1 472.8 512.6 472.2 513 471.7C513.3 471.2 513.7 470.1 513.9 469.8C514.1 469.5 514.1 469.5 514.2 469.8C514.2 470.1 514 471.2 514 471.7C514.1 472.2 514.2 472.8 514.5 472.8C514.8 472.8 515.3 472.1 515.7 471.6C516.1 471 516.5 469.9 516.7 469.6C516.9 469.2 516.8 469.2 516.8 469.6C516.8 469.9 516.6 471 516.6 471.6C516.7 472.1 516.9 472.4 517.1 472.8C517.4 473.2 518 473.5 518.1 474C518.1 474.5 517.8 475.6 517.7 476C517.6 476.3 517.2 476.3 517.3 476C517.4 475.6 517.7 474.5 518.1 474C518.5 473.5 519.3 473.2 519.8 472.8C520.2 472.4 520.5 472.1 520.9 471.6C521.2 471.1 521.7 469.9 521.9 469.6C522.1 469.3 522.2 469.3 522.2 469.6C522.2 469.9 522 471.1 522.1 471.6C522.1 472.1 522 473 522.4 472.8C522.8 472.6 523.9 471.5 524.4 470.5C525 469.5 525.6 467.5 525.7 466.9C525.9 466.2 525.6 466.2 525.3 466.9C525.1 467.5 524.5 469.5 524.5 470.5C524.4 471.5 524.8 472.6 525.1 472.8C525.4 473 525.9 472.2 526.2 471.7C526.6 471.2 527 470.1 527.2 469.8C527.4 469.5 527.4 469.5 527.4 469.8C527.4 470.1 527.2 471.2 527.3 471.7C527.3 472.2 527.5 472.8 527.7 472.8C528 472.8 528.6 472.3 529 471.9C529.3 471.5 529.7 470.7 529.8 470.4C529.9 470.2 529.8 470.2 529.8 470.4C529.7 470.7 529.6 471.5 529.7 471.9C529.8 472.3 530.3 472.6 530.4 472.8M533.8 472.8C534.2 472.4 535.6 471.5 536.2 470.5C536.8 469.5 537.3 467.4 537.4 466.7C537.4 466.1 536.8 466.1 536.5 466.7C536.2 467.4 535.5 469.5 535.5 470.5C535.5 471.5 536.1 472.6 536.5 472.8C536.8 473 537.2 472.2 537.5 471.8C537.8 471.3 538.3 470.3 538.5 470.1C538.7 469.8 538.7 469.8 538.8 470.1C538.8 470.3 538.6 471.3 538.7 471.8C538.8 472.2 538.9 472.8 539.1 472.8C539.4 472.8 539.8 472.3 540.1 471.8C540.4 471.4 540.8 470.5 541.1 470.3C541.3 470 541.3 470 541.3 470.3C541.4 470.5 541.3 471.4 541.3 471.8C541.4 472.3 541.7 472.6 541.8 472.8" stroke="#242424" stroke-width="0.7200000000000001" fill="none" stroke-linecap="round" stroke-linejoin="round" opacity="0.8"/>
<path d="M482 488.8C482.2 488.6 482.7 488.1 483.1 487.6C483.4 487.1 483.9 486 484.1 485.6C484.4 485.3 484.4 485.3 484.4 485.6C484.4 486 484.2 487.1 484.3 487.6C484.3 488.1 484.3 489 484.7 488.8C485.1 488.6 486.1 487.4 486.7 486.3C487.3 485.2 488 482.9 488.2 482.2C488.3 481.5 488 481.5 487.8 482.2C487.5 482.9 486.8 485.2 486.8 486.3C486.7 487.4 487.1 488.2 487.3 488.8C487.5 489.4 488.1 489.5 488.2 490C488.3 490.5 488 491.6 487.9 492C487.8 492.3 487.4 492.3 487.5 492C487.5 491.6 487.9 490.5 488.3 490C488.7 489.5 489.5 489.2 490 488.8C490.4 488.4 490.8 488.2 491.2 487.8C491.5 487.3 491.9 486.4 492.1 486.1C492.2 485.8 492.1 485.8 492.1 486.1C492.1 486.4 491.9 487.3 492 487.8C492.1 488.2 492.3 488.8 492.6 488.8C492.9 488.8 493.4 488.1 493.8 487.6C494.2 487.1 494.6 486.1 494.8 485.8C495 485.5 494.9 485.5 494.9 485.8C494.9 486.1 494.7 487.1 494.8 487.6C494.8 488.1 495 488.8 495.3 488.8C495.5 488.8 496 488.1 496.3 487.6C496.7 487.1 497.1 486 497.4 485.7C497.6 485.3 497.7 485.3 497.7 485.7C497.7 486 497.5 487.1 497.6 487.6C497.6 488.1 497.7 488.7 497.9 488.8C498.2 488.9 498.8 488.3 499.1 488C499.4 487.6 499.7 486.8 499.9 486.6C500 486.4 499.9 486.4 499.9 486.6C499.9 486.8 499.8 487.6 499.9 488C500 488.3 500.3 488.9 500.6 488.8C500.9 488.7 501.3 488.1 501.6 487.6C501.9 487.1 502.4 486 502.6 485.7C502.9 485.4 502.9 485.4 503 485.7C503 486 502.9 487.1 502.9 487.6C502.9 488.1 502.9 488.8 503.2 488.8C503.5 488.8 504.2 488.2 504.6 487.8C504.9 487.4 505.3 486.5 505.4 486.2C505.5 486 505.3 486 505.3 486.2C505.2 486.5 505 487.4 505.1 487.8C505.2 488.2 505.7 488.6 505.9 488.8" stroke="#242424" stroke-width="0.7200000000000001" fill="none" stroke-linecap="round" stroke-linejoin="round" opacity="0.8"/>
<path d="M480 509.8C480.4 509.4 481.8 508.5 482.4 507.4C483 506.4 483.6 504.2 483.6 503.5C483.7 502.9 483.1 502.9 482.8 503.5C482.4 504.2 481.7 506.4 481.7 507.4C481.7 508.5 482.3 509.2 482.7 509.8C483 510.4 483.5 510.5 483.6 511C483.7 511.5 483.4 512.6 483.2 513C483.1 513.3 482.8 513.3 482.8 513C482.9 512.6 483.2 511.5 483.7 511C484.1 510.5 484.9 510.2 485.3 509.8C485.7 509.4 486 509.3 486.3 508.9C486.6 508.5 487 507.7 487.2 507.4C487.4 507.2 487.4 507.2 487.5 507.4C487.5 507.7 487.4 508.5 487.5 508.9C487.6 509.3 487.7 509.8 488 509.8C488.2 509.8 488.7 509.2 489.1 508.7C489.4 508.2 489.8 507.3 490 507C490.2 506.7 490.2 506.7 490.2 507C490.3 507.3 490.1 508.2 490.1 508.7C490.2 509.2 490.3 509.8 490.6 509.8C490.9 509.8 491.4 509.3 491.8 508.9C492.1 508.5 492.5 507.7 492.6 507.4C492.8 507.2 492.7 507.2 492.7 507.4C492.7 507.7 492.5 508.5 492.6 508.9C492.7 509.3 492.8 510.1 493.3 509.8C493.7 509.5 494.7 508.3 495.3 507.2C495.9 506.1 496.6 503.7 496.8 503C497 502.3 496.6 502.3 496.4 503C496.2 503.7 495.5 506.1 495.4 507.2C495.3 508.3 495.6 509.5 495.9 509.8C496.2 510.1 496.8 509.3 497.2 508.9C497.5 508.5 497.8 507.6 498 507.4C498.1 507.1 498 507.1 498 507.4C497.9 507.6 497.8 508.5 497.9 508.9C498 509.3 498.3 509.8 498.6 509.8C498.9 509.8 499.3 509.3 499.6 508.9C500 508.5 500.3 507.6 500.5 507.4C500.7 507.1 500.7 507.1 500.7 507.4C500.7 507.6 500.6 508.5 500.7 508.9C500.8 509.3 500.9 509.8 501.2 509.8C501.5 509.8 501.9 509.1 502.3 508.6C502.7 508.1 503.1 507 503.3 506.7C503.6 506.4 503.6 506.4 503.6 506.7C503.7 507 503.5 508.1 503.5 508.6C503.5 509.1 503.8 509.6 503.9 509.8M508.9 509.8C509.3 509.4 510.7 508.4 511.3 507.3C511.9 506.2 512.5 503.9 512.6 503.2C512.7 502.5 512.1 502.5 511.7 503.2C511.4 503.9 510.6 506.2 510.6 507.3C510.6 508.4 511.1 509.5 511.5 509.8C511.9 510.1 512.5 509.3 512.8 508.9C513.2 508.5 513.5 507.7 513.6 507.4C513.7 507.2 513.5 507.2 513.5 507.4C513.5 507.7 513.3 508.5 513.4 508.9C513.5 509.3 513.8 509.8 514.2 509.8C514.5 509.8 515.2 509.2 515.5 508.7C515.9 508.2 516.3 507.1 516.4 506.8C516.6 506.5 516.4 506.5 516.3 506.8C516.3 507.1 516.1 508.2 516.1 508.7C516.2 509.2 516.5 509.4 516.8 509.8C517.1 510.2 517.6 510.5 517.7 511C517.8 511.5 517.5 512.6 517.4 513C517.3 513.3 516.9 513.3 517 513C517.1 512.6 517.4 511.5 517.8 511C518.2 510.5 519 510.2 519.5 509.8C519.9 509.4 520.3 509.1 520.6 508.6C521 508 521.5 506.9 521.7 506.6C521.9 506.2 521.9 506.2 521.9 506.6C521.9 506.9 521.7 508 521.7 508.6C521.7 509.1 521.7 509.9 522.1 509.8C522.5 509.7 523.5 508.7 524 507.8C524.5 507 525.1 505.2 525.2 504.6C525.3 504.1 525 504.1 524.8 504.6C524.6 505.2 524.1 507 524.1 507.8C524.1 508.7 524.4 509.6 524.8 509.8C525.1 510 525.7 509.3 526.1 509C526.4 508.6 526.7 507.9 526.8 507.7C526.9 507.5 526.7 507.5 526.7 507.7C526.7 507.9 526.5 508.6 526.6 509C526.7 509.3 527 510.1 527.4 509.8C527.9 509.5 528.9 508.4 529.5 507.3C530 506.2 530.7 504 530.9 503.3C531.1 502.6 530.7 502.6 530.5 503.3C530.3 504 529.6 506.2 529.5 507.3C529.5 508.4 529.7 509.7 530.1 509.8C530.5 509.9 531.5 508.7 532 507.8C532.5 506.9 533.1 505 533.2 504.5C533.3 504 533 504 532.8 504.5C532.6 505 532.1 506.9 532 507.8C532 508.7 532.6 509.5 532.7 509.8M537.7 509.8C538.1 509.4 539.5 508.3 540.2 507.1C540.8 506 541.5 503.5 541.6 502.8C541.7 502.1 541 502.1 540.7 502.8C540.4 503.5 539.6 506 539.5 507.1C539.5 508.3 540 509.6 540.4 509.8C540.8 510 541.4 509.1 541.8 508.6C542.2 508.1 542.6 507 542.7 506.7C542.8 506.4 542.6 506.4 542.6 506.7C542.5 507 542.2 508.1 542.3 508.6C542.4 509.1 542.9 509.6 543 509.8" stroke="#242424" stroke-width="0.8" fill="none" stroke-linecap="round" stroke-linejoin="round" opacity="0.8"/>
<path d="M487 523.8C487.2 524 487.8 524.5 487.9 525C488 525.5 487.7 526.6 487.6 527C487.5 527.3 487.1 527.3 487.2 527C487.2 526.6 487.6 525.5 488 525C488.4 524.5 489.2 524.2 489.7 523.8C490.1 523.4 490.3 523.2 490.7 522.7C491 522.2 491.4 521.2 491.7 520.9C491.9 520.6 492 520.6 492 520.9C492.1 521.2 491.9 522.2 492 522.7C492 523.2 492.1 523.8 492.3 523.8C492.5 523.8 493.1 523.3 493.4 522.9C493.7 522.5 494.1 521.7 494.3 521.4C494.4 521.2 494.4 521.2 494.4 521.4C494.4 521.7 494.3 522.5 494.4 522.9C494.5 523.3 494.6 524 495 523.8C495.4 523.6 496.3 522.7 496.8 521.9C497.3 521.1 497.9 519.3 498 518.8C498.1 518.3 497.8 518.3 497.6 518.8C497.4 519.3 496.9 521.1 496.9 521.9C496.9 522.7 497.3 523.6 497.6 523.8C497.9 524 498.6 523.3 498.9 522.9C499.3 522.4 499.6 521.6 499.7 521.3C499.8 521.1 499.7 521.1 499.6 521.3C499.6 521.6 499.4 522.4 499.5 522.9C499.6 523.3 499.8 524 500.3 523.8C500.7 523.6 501.7 522.5 502.2 521.5C502.8 520.5 503.4 518.4 503.6 517.8C503.7 517.2 503.4 517.2 503.2 517.8C503 518.4 502.4 520.5 502.3 521.5C502.3 522.5 502.5 523.8 502.9 523.8C503.3 523.8 504.3 522.5 504.9 521.6C505.4 520.6 506 518.6 506.2 518C506.3 517.4 506 517.4 505.8 518C505.6 518.6 505 520.6 504.9 521.6C504.9 522.5 505.3 523.2 505.6 523.8C505.8 524.4 506.4 524.5 506.5 525C506.6 525.5 506.3 526.6 506.1 527C506 527.3 505.7 527.3 505.7 527C505.8 526.6 506.2 525.5 506.6 525C507 524.5 507.7 524.1 508.2 523.8C508.7 523.5 509.1 523.3 509.5 522.9C509.8 522.5 510.1 521.8 510.2 521.5C510.4 521.3 510.2 521.3 510.2 521.5C510.2 521.8 510 522.5 510.2 522.9C510.3 523.3 510.6 523.8 510.9 523.8C511.2 523.8 511.6 523.3 511.9 522.9C512.3 522.6 512.6 521.8 512.8 521.6C512.9 521.3 512.9 521.3 513 521.6C513 521.8 512.9 522.6 513 522.9C513.1 523.3 513.4 523.7 513.5 523.8" stroke="#242424" stroke-width="0.7200000000000001" fill="none" stroke-linecap="round" stroke-linejoin="round" opacity="0.8"/>
<path d="M550 495.3C551 494.2 554.6 491.7 556.2 489C557.8 486.2 559.4 480.4 559.5 478.7C559.7 477 558.1 477 557.3 478.7C556.4 480.4 554.5 486.2 554.5 489C554.4 491.7 556.1 493.7 556.9 495.3C557.7 496.9 559 497.1 559.3 498.4C559.5 499.8 558.7 502.7 558.4 503.5C558.1 504.4 557.2 504.4 557.3 503.5C557.5 502.7 558.4 499.8 559.5 498.4C560.6 497.1 562.5 496.3 563.8 495.3C565.1 494.2 566.3 493.5 567.2 492.2C568.2 490.8 569.3 488 569.7 487.2C570.1 486.4 569.7 486.4 569.6 487.2C569.6 488 568.9 490.8 569.1 492.2C569.3 493.5 570 494.2 570.7 495.3C571.4 496.3 572.8 497.1 573.1 498.4C573.3 499.8 572.5 502.7 572.2 503.5C571.9 504.4 570.9 504.4 571.1 503.5C571.3 502.7 572.2 499.8 573.3 498.4C574.4 497.1 576.5 495.3 577.6 495.3C578.7 495.3 579.7 497.1 580 498.4C580.2 499.8 579.4 502.7 579.1 503.5C578.8 504.4 577.8 504.4 578 503.5C578.2 502.7 579.1 499.8 580.2 498.4C581.3 497.1 583.4 495.3 584.5 495.3C585.6 495.3 586.6 497.1 586.9 498.4C587.1 499.8 586.3 502.7 586 503.5C585.6 504.4 584.7 504.4 584.9 503.5C585.1 502.7 586 499.8 587.1 498.4C588.2 497.1 590.7 495.8 591.4 495.3" stroke="#242424" stroke-width="0.7200000000000001" fill="none" stroke-linecap="round" stroke-linejoin="round" opacity="0.8"/>
<path d="M606 509.6C607.2 508.4 611.2 505.5 613 502.4C614.8 499.2 616.6 492.6 616.8 490.7C617 488.7 615.2 488.7 614.3 490.7C613.3 492.6 611.1 499.2 611 502.4C610.9 505.5 612.7 508.9 613.7 509.6C614.7 510.3 616 507.9 617 506.6C618 505.3 619.1 502.5 619.7 501.7C620.2 500.8 620.1 500.8 620.2 501.7C620.2 502.5 619.7 505.3 619.9 506.6C620.1 507.9 620.2 510.3 621.4 509.6C622.6 508.9 625.6 505.6 627.2 502.5C628.9 499.4 630.9 493 631.4 491.1C631.9 489.2 630.9 489.2 630.2 491.1C629.6 493 627.7 499.4 627.5 502.5C627.3 505.6 628.2 508.9 629.1 509.6C629.9 510.3 631.5 507.9 632.6 506.6C633.6 505.3 634.7 502.5 635.2 501.7C635.6 500.9 635.4 500.9 635.4 501.7C635.4 502.5 634.9 505.3 635.1 506.6C635.3 507.9 635.8 509.7 636.8 509.6C637.7 509.5 639.7 507.6 640.8 506C642 504.5 643.1 501.2 643.5 500.3C644 499.3 643.5 499.3 643.3 500.3C643.1 501.2 642.3 504.5 642.5 506C642.7 507.6 644.1 509 644.5 509.6" stroke="#242424" stroke-width="0.8" fill="none" stroke-linecap="round" stroke-linejoin="round"/>
<path d="M663 503.4C663.5 503 665.1 502.2 665.9 501.3C666.6 500.4 667.3 498.5 667.6 497.9C667.8 497.4 667.4 497.4 667.3 497.9C667.2 498.5 666.7 500.4 666.9 501.3C667.2 502.2 667.9 503.4 668.6 503.4C669.2 503.4 670.2 502.2 670.9 501.3C671.6 500.4 672.4 498.6 672.8 498C673.2 497.5 673.1 497.5 673.1 498C673.2 498.6 672.8 500.4 673 501.3C673.2 502.2 673.2 504 674.1 503.4C675.1 502.8 677.3 500.2 678.5 497.7C679.8 495.3 681.4 490.1 681.8 488.6C682.2 487 681.5 487 680.9 488.6C680.4 490.1 678.9 495.3 678.7 497.7C678.5 500.2 678.8 503.3 679.7 503.4C680.6 503.5 682.7 500.6 683.9 498.4C685.1 496.2 686.5 491.7 686.8 490.3C687.2 489 686.5 489 686 490.3C685.5 491.7 684.2 496.2 684.1 498.4C684 500.6 684.7 502.9 685.3 503.4C685.9 503.9 687.1 502.3 687.8 501.5C688.5 500.6 689.2 498.9 689.5 498.3C689.8 497.8 689.6 497.8 689.6 498.3C689.6 498.9 689.3 500.6 689.5 501.5C689.7 502.3 690.3 503.4 690.8 503.4C691.4 503.4 692.3 502.3 693 501.5C693.6 500.6 694.4 498.9 694.9 498.4C695.3 497.8 695.3 497.8 695.4 498.4C695.5 498.9 695.3 500.6 695.4 501.5C695.6 502.3 695.5 504 696.4 503.4C697.3 502.8 699.5 500.3 700.7 498C702 495.6 703.5 490.7 703.9 489.3C704.2 487.8 703.5 487.8 703 489.3C702.5 490.7 701.1 495.6 700.9 498C700.7 500.3 701.8 502.5 702 503.4M713 503.4C713.7 502.5 716.1 500.5 717.3 498.2C718.5 496 719.9 491.3 720.3 489.9C720.6 488.5 719.9 488.5 719.4 489.9C719 491.3 717.6 496 717.4 498.2C717.3 500.5 718 502.9 718.6 503.4C719.2 503.9 720.4 502.1 721.2 501.1C721.9 500.1 722.7 498 723.1 497.4C723.4 496.8 723.3 496.8 723.3 497.4C723.2 498 722.8 500.1 723 501.1C723.1 502.1 723.6 503.4 724.2 503.4C724.7 503.3 725.6 501.9 726.3 500.8C727.1 499.7 728.1 497.3 728.6 496.6C729.1 495.9 729.3 495.9 729.4 496.6C729.5 497.3 729.1 499.7 729.1 500.8C729.2 501.9 729.2 503.4 729.7 503.4C730.3 503.4 731.6 502 732.3 500.9C733.1 499.8 734 497.6 734.4 496.9C734.7 496.2 734.6 496.2 734.6 496.9C734.6 497.6 734.1 499.8 734.2 500.9C734.3 502 735.1 503 735.3 503.4" stroke="#242424" stroke-width="0.96" fill="none" stroke-linecap="round" stroke-linejoin="round"/>
<path d="M659 514.5C659.6 513.8 661.9 512.2 662.9 510.4C663.9 508.6 664.9 504.9 665 503.8C665.1 502.7 664.2 502.7 663.6 503.8C663.1 504.9 661.9 508.6 661.8 510.4C661.7 512.2 662.7 514.1 663.2 514.5C663.8 514.9 664.7 513.6 665.2 512.9C665.8 512.2 666.4 510.8 666.6 510.4C666.8 510 666.6 510 666.6 510.4C666.6 510.8 666.3 512.2 666.4 512.9C666.6 513.6 667 514.5 667.5 514.5C668 514.5 668.9 513.5 669.5 512.8C670 512.1 670.6 510.6 670.9 510.1C671.1 509.7 671 509.7 670.9 510.1C670.9 510.6 670.6 512.1 670.8 512.8C670.9 513.5 671.2 514.5 671.7 514.5C672.2 514.5 673.1 513.6 673.7 513C674.2 512.3 674.8 510.9 675 510.5C675.2 510.1 675.1 510.1 675.1 510.5C675.1 510.9 674.8 512.3 674.9 513C675.1 513.6 675.5 514.5 676 514.5C676.5 514.5 677.3 513.7 677.9 513C678.4 512.4 679 511.1 679.2 510.7C679.4 510.3 679.3 510.3 679.3 510.7C679.3 511.1 679 512.4 679.2 513C679.3 513.7 679.8 513.9 680.2 514.5C680.6 515 681.5 515.6 681.7 516.4C681.8 517.3 681.3 519 681.1 519.6C680.9 520.1 680.4 520.1 680.5 519.6C680.6 519 681.2 517.3 681.8 516.4C682.5 515.6 683.7 515.1 684.5 514.5C685.2 513.9 685.9 513.6 686.5 512.9C687.1 512.2 687.6 510.7 687.9 510.2C688.1 509.8 687.9 509.8 687.8 510.2C687.8 510.7 687.5 512.2 687.6 512.9C687.8 513.6 688.2 514.5 688.7 514.5C689.2 514.5 689.9 513.6 690.4 512.9C690.9 512.1 691.6 510.7 691.9 510.2C692.2 509.8 692.2 509.8 692.3 510.2C692.4 510.7 692.1 512.1 692.2 512.9C692.3 513.6 692.3 514.9 692.9 514.5C693.6 514 695.3 512.1 696.3 510.3C697.2 508.4 698.4 504.6 698.7 503.4C699 502.3 698.4 502.3 698.1 503.4C697.7 504.6 696.5 508.4 696.4 510.3C696.3 512.1 696.7 514.1 697.2 514.5C697.6 514.9 698.5 513.5 699.1 512.8C699.7 512.1 700.3 510.6 700.5 510.1C700.8 509.7 700.7 509.7 700.7 510.1C700.7 510.6 700.4 512.1 700.5 512.8C700.6 513.5 701 514.4 701.4 514.5C701.9 514.5 702.5 513.7 703 513C703.5 512.4 704.2 511.1 704.5 510.7C704.8 510.3 704.8 510.3 704.9 510.7C705 511.1 704.8 512.4 704.9 513C705.1 513.7 705.6 514.2 705.7 514.5M714.3 514.5C714.9 513.8 717.2 512.1 718.2 510.3C719.2 508.4 720.2 504.6 720.4 503.5C720.5 502.4 719.5 502.4 719 503.5C718.4 504.6 717.2 508.4 717.1 510.3C717 512.1 718 514.1 718.5 514.5C719 514.9 719.6 513.4 720.1 512.6C720.7 511.8 721.5 510 721.8 509.5C722.2 509 722.3 509 722.4 509.5C722.5 510 722.2 511.8 722.2 512.6C722.3 513.4 722.3 514.5 722.7 514.5C723.2 514.5 724.3 513.4 724.9 512.6C725.5 511.8 726.1 510.1 726.4 509.6C726.6 509.1 726.4 509.1 726.3 509.6C726.2 510.1 725.8 511.8 725.9 512.6C726 513.4 726.3 514.7 727 514.5C727.7 514.3 729.2 512.7 730 511.3C730.8 509.9 731.7 506.9 732 506.1C732.2 505.2 731.6 505.2 731.3 506.1C731 506.9 730.1 509.9 730.1 511.3C730.1 512.7 731 513.9 731.2 514.5" stroke="#242424" stroke-width="0.96" fill="none" stroke-linecap="round" stroke-linejoin="round"/>
<path d="M663 543.7C664.3 542.3 669 538.9 671.1 535.1C673.2 531.3 675.3 523.5 675.6 521.1C675.9 518.8 673.8 518.8 672.7 521.1C671.6 523.5 669 531.3 668.8 535.1C668.7 538.9 670.7 542.9 671.8 543.7C672.8 544.6 674 541.9 675 540.4C676.1 539 677.5 536 678.2 535.1C678.9 534.2 679.1 534.2 679.3 535.1C679.4 536 679 539 679.2 540.4C679.4 541.9 679.6 543.9 680.5 543.7C681.4 543.6 683.6 541.4 684.9 539.7C686.1 537.9 687.5 534.1 688.1 533C688.6 531.9 688.2 531.9 688.1 533C688 534.1 687.1 537.9 687.3 539.7C687.5 541.4 688.2 543.6 689.3 543.7C690.3 543.9 692.4 541.9 693.6 540.4C694.7 538.9 695.9 535.9 696.3 535C696.8 534.1 696.3 534.1 696.2 535C696.1 535.9 695.4 538.9 695.7 540.4C696 541.9 697 543.7 698 543.7C699.1 543.8 700.9 542.1 702 540.9C703.1 539.6 704.2 537 704.6 536.2C705.1 535.4 704.7 535.4 704.7 536.2C704.6 537 704.1 539.6 704.5 540.9C704.8 542.1 706.4 543.3 706.8 543.7M720.5 543.7C721.8 542.4 726.4 539.2 728.4 535.7C730.4 532.2 732.4 524.8 732.6 522.7C732.8 520.5 730.8 520.5 729.7 522.7C728.7 524.8 726.2 532.2 726.1 535.7C726.1 539.2 728.2 542.9 729.2 543.7C730.3 544.5 731.3 541.9 732.4 540.5C733.4 539.1 734.8 536.2 735.5 535.3C736.2 534.5 736.5 534.5 736.7 535.3C736.9 536.2 736.5 539.1 736.7 540.5C737 541.9 737.8 543.2 738 543.7" stroke="#242424" stroke-width="1.04" fill="none" stroke-linecap="round" stroke-linejoin="round"/>
<path d="M692 446.2C692.3 445.9 693.5 445.2 694 444.4C694.5 443.6 694.9 441.9 695 441.4C695 440.9 694.5 440.9 694.2 441.4C694 441.9 693.4 443.6 693.4 444.4C693.4 445.2 694 445.8 694.3 446.2C694.6 446.7 695 446.8 695.1 447.2C695.2 447.6 695 448.5 694.9 448.8C694.8 449 694.5 449 694.5 448.8C694.6 448.5 694.8 447.6 695.2 447.2C695.5 446.8 696.2 446.5 696.6 446.2C697 446 697.2 445.8 697.5 445.5C697.8 445.2 698.1 444.5 698.2 444.3C698.4 444.1 698.4 444.1 698.4 444.3C698.5 444.5 698.4 445.2 698.4 445.5C698.5 445.8 698.7 446 698.9 446.2C699.1 446.5 699.6 446.8 699.7 447.2C699.8 447.6 699.6 448.5 699.5 448.8C699.4 449 699.1 449 699.1 448.8C699.2 448.5 699.4 447.6 699.8 447.2C700.1 446.8 700.8 446.5 701.2 446.2C701.6 446 701.9 445.9 702.2 445.6C702.5 445.3 702.8 444.6 702.9 444.5C703 444.3 702.9 444.3 702.9 444.5C702.9 444.6 702.8 445.3 702.9 445.6C703 445.9 703.2 446.2 703.5 446.2C703.8 446.2 704.2 445.8 704.4 445.5C704.7 445.2 705 444.6 705.1 444.4C705.3 444.2 705.3 444.2 705.3 444.4C705.3 444.6 705.2 445.2 705.3 445.5C705.4 445.8 705.6 446.3 705.8 446.2C706 446.2 706.5 445.8 706.8 445.4C707.1 445 707.4 444.2 707.5 444C707.7 443.8 707.7 443.8 707.7 444C707.7 444.2 707.6 445 707.7 445.4C707.7 445.8 707.7 446.4 708.1 446.2C708.5 446.1 709.3 445.2 709.8 444.4C710.2 443.7 710.7 442 710.8 441.5C711 441.1 710.7 441.1 710.5 441.5C710.3 442 709.8 443.7 709.8 444.4C709.8 445.2 710.1 446.1 710.4 446.2C710.7 446.4 711.1 445.7 711.3 445.3C711.6 445 712 444.1 712.2 443.9C712.3 443.7 712.3 443.7 712.3 443.9C712.4 444.1 712.2 445 712.3 445.3C712.3 445.7 712.4 446.2 712.7 446.2C713 446.2 713.5 445.7 713.8 445.4C714.1 445 714.4 444.2 714.6 444C714.7 443.7 714.5 443.7 714.5 444C714.5 444.2 714.3 445 714.4 445.4C714.5 445.7 714.7 446.2 715 446.2C715.3 446.3 715.7 445.8 716 445.5C716.3 445.1 716.6 444.4 716.7 444.2C716.9 444 716.8 444 716.8 444.2C716.8 444.4 716.7 445.1 716.7 445.5C716.8 445.8 717 446.2 717.3 446.2C717.6 446.3 718.1 445.8 718.4 445.5C718.7 445.2 719 444.6 719.1 444.4C719.2 444.2 719 444.2 718.9 444.4C718.9 444.6 718.8 445.2 718.9 445.5C719 445.8 719.3 446.3 719.6 446.2C719.9 446.2 720.4 445.8 720.6 445.5C720.9 445.1 721.2 444.4 721.3 444.2C721.5 444 721.4 444 721.4 444.2C721.4 444.4 721.2 445.1 721.3 445.5C721.4 445.8 721.6 446.2 721.9 446.2C722.2 446.3 722.7 445.9 723 445.6C723.2 445.3 723.5 444.7 723.6 444.5C723.7 444.3 723.6 444.3 723.6 444.5C723.6 444.7 723.4 445.3 723.6 445.6C723.7 445.9 723.9 446.3 724.2 446.2C724.5 446.2 724.9 445.8 725.2 445.4C725.5 445.1 725.8 444.3 726 444.1C726.1 443.8 726 443.8 726 444.1C726.1 444.3 725.9 445.1 726 445.4C726.1 445.8 726.3 446.3 726.5 446.2C726.7 446.2 727.1 445.7 727.4 445.3C727.6 444.9 728 444.1 728.2 443.9C728.4 443.6 728.5 443.6 728.5 443.9C728.6 444.1 728.4 444.9 728.5 445.3C728.5 445.7 728.6 446.2 728.8 446.2C729 446.3 729.5 445.8 729.8 445.4C730.1 445.1 730.4 444.3 730.5 444.1C730.7 443.9 730.6 443.9 730.6 444.1C730.7 444.3 730.5 445.1 730.6 445.4C730.7 445.8 730.9 446.2 731.1 446.2C731.3 446.2 731.8 445.8 732.1 445.5C732.4 445.1 732.7 444.4 732.8 444.2C733 444 732.9 444 732.9 444.2C732.9 444.4 732.8 445.1 732.9 445.5C733 445.8 733.1 446.2 733.4 446.2C733.7 446.2 734.1 445.8 734.4 445.4C734.7 445.1 735 444.4 735.1 444.1C735.3 443.9 735.2 443.9 735.2 444.1C735.2 444.4 735.1 445.1 735.2 445.4C735.3 445.8 735.4 446.3 735.7 446.2C736 446.2 736.5 445.7 736.8 445.3C737.1 444.9 737.4 444.1 737.6 443.8C737.7 443.6 737.6 443.6 737.6 443.8C737.6 444.1 737.4 444.9 737.5 445.3C737.5 445.7 737.8 446.2 738 446.2C738.2 446.3 738.6 445.8 738.8 445.5C739.1 445.1 739.4 444.4 739.6 444.2C739.8 444 739.9 444 739.9 444.2C740 444.4 739.9 445.1 740 445.5C740 445.8 740.2 446.1 740.3 446.2" stroke="#242424" stroke-width="0.6400000000000001" fill="none" stroke-linecap="round" stroke-linejoin="round" opacity="0.7"/>
<path d="M696 456.6C696.4 456.1 698 455 698.7 453.7C699.4 452.5 700.1 449.9 700.2 449.1C700.3 448.3 699.6 448.3 699.2 449.1C698.9 449.9 698 452.5 697.9 453.7C697.9 455 698.6 456.3 698.9 456.6C699.3 456.9 699.7 456 700 455.6C700.4 455.2 700.8 454.4 701 454.1C701.2 453.9 701.2 453.9 701.3 454.1C701.3 454.4 701.2 455.2 701.3 455.6C701.4 456 701.4 456.9 701.8 456.6C702.3 456.3 703.4 455 704.1 453.8C704.7 452.6 705.5 450 705.7 449.2C705.9 448.5 705.5 448.5 705.3 449.2C705 450 704.3 452.6 704.2 453.8C704.1 455 704.3 456.5 704.8 456.6C705.2 456.7 706.3 455.4 706.8 454.4C707.4 453.5 708 451.5 708.1 450.9C708.3 450.4 707.9 450.4 707.7 450.9C707.5 451.5 706.9 453.5 706.9 454.4C706.9 455.4 707.4 456.4 707.7 456.6C708 456.7 708.4 455.9 708.8 455.4C709.1 454.9 709.6 453.9 709.8 453.6C710.1 453.2 710.2 453.2 710.2 453.6C710.3 453.9 710.1 454.9 710.2 455.4C710.2 455.9 710.3 456.6 710.6 456.6C710.9 456.6 711.5 455.9 711.9 455.4C712.3 454.8 712.7 453.7 712.9 453.4C713.1 453 713.1 453 713.1 453.4C713.1 453.7 712.8 454.8 712.9 455.4C713 455.9 713 456.8 713.5 456.6C714 456.3 715.1 455.1 715.7 453.9C716.4 452.7 717.1 450.3 717.3 449.5C717.5 448.8 717.1 448.8 716.9 449.5C716.6 450.3 715.9 452.7 715.8 453.9C715.7 455.1 716.1 456.3 716.4 456.6C716.8 456.8 717.6 455.9 718 455.4C718.4 454.9 718.8 453.8 718.9 453.5C719 453.2 718.8 453.2 718.7 453.5C718.6 453.8 718.4 454.9 718.5 455.4C718.6 455.9 719 456.6 719.3 456.6C719.7 456.6 720.1 455.8 720.5 455.3C720.9 454.7 721.4 453.5 721.7 453.2C721.9 452.8 721.9 452.8 722 453.2C722 453.5 721.8 454.7 721.9 455.3C721.9 455.8 722 456.6 722.3 456.6C722.5 456.6 723 455.9 723.3 455.4C723.7 454.9 724.2 453.9 724.4 453.6C724.6 453.3 724.7 453.3 724.8 453.6C724.9 453.9 724.7 454.9 724.8 455.4C724.8 455.9 724.9 456.6 725.2 456.6C725.4 456.6 726 456 726.3 455.6C726.7 455.1 727.1 454.2 727.3 453.9C727.5 453.6 727.5 453.6 727.6 453.9C727.6 454.2 727.5 455.1 727.5 455.6C727.6 456 727.8 456.6 728.1 456.6C728.4 456.6 729.1 456 729.5 455.6C729.9 455.1 730.3 454.2 730.4 453.9C730.5 453.7 730.3 453.7 730.3 453.9C730.3 454.2 730.1 455.1 730.2 455.6C730.3 456 730.7 456.6 731 456.6C731.4 456.6 731.9 455.9 732.3 455.4C732.6 455 733.1 453.9 733.3 453.6C733.5 453.3 733.4 453.3 733.4 453.6C733.4 453.9 733.3 455 733.3 455.4C733.4 455.9 733.5 456.8 733.9 456.6C734.4 456.4 735.5 455.3 736 454.2C736.6 453.2 737.3 451.1 737.4 450.4C737.6 449.8 737.2 449.8 737 450.4C736.8 451.1 736.2 453.2 736.1 454.2C736.1 455.3 736.5 456.4 736.8 456.6C737.2 456.8 737.9 455.9 738.3 455.3C738.8 454.8 739.2 453.6 739.3 453.3C739.5 452.9 739.3 452.9 739.3 453.3C739.2 453.6 738.9 454.8 739 455.3C739.1 455.9 739.5 456.1 739.8 456.6C740.1 457 740.7 457.3 740.8 457.9C740.9 458.5 740.5 459.7 740.4 460.1C740.3 460.4 739.9 460.4 739.9 460.1C740 459.7 740.4 458.5 740.9 457.9C741.3 457.3 742.2 456.6 742.7 456.6C743.1 456.6 743.6 457.3 743.7 457.9C743.8 458.5 743.4 459.7 743.3 460.1C743.2 460.4 742.8 460.4 742.9 460.1C742.9 459.7 743.3 458.5 743.8 457.9C744.2 457.3 745.3 456.8 745.6 456.6" stroke="#242424" stroke-width="0.7200000000000001" fill="none" stroke-linecap="round" stroke-linejoin="round" opacity="0.8"/>
<path d="M692 480.2C692.4 479.8 693.8 478.9 694.6 477.9C695.3 477 696.2 474.9 696.5 474.4C696.9 473.8 696.8 473.8 696.8 474.4C696.8 474.9 696.4 477 696.6 477.9C696.8 478.9 697.2 480.1 697.8 480.2C698.5 480.2 699.9 479 700.7 478C701.4 477.1 702.2 475.2 702.5 474.6C702.8 474 702.4 474 702.4 474.6C702.3 475.2 701.9 477.1 702.1 478C702.3 479 703.1 479.4 703.7 480.2C704.3 481 705.5 481.7 705.7 482.8C705.9 484 705.2 486.4 704.9 487.1C704.7 487.9 703.9 487.9 704 487.1C704.2 486.4 705 484 705.9 482.8C706.8 481.7 708.5 481 709.5 480.2C710.5 479.3 711 478.9 711.7 477.9C712.4 476.8 713.4 474.7 713.8 474.1C714.3 473.5 714.5 473.5 714.6 474.1C714.7 474.7 714.4 476.8 714.5 477.9C714.7 478.9 714.8 480.2 715.3 480.2C715.9 480.2 717.1 478.9 717.9 477.9C718.6 476.9 719.5 474.8 719.9 474.2C720.3 473.6 720.2 473.6 720.2 474.2C720.2 474.8 719.9 476.9 720 477.9C720.2 478.9 720.6 480.1 721.2 480.2C721.8 480.2 722.8 479 723.5 478.1C724.2 477.2 725.1 475.3 725.5 474.7C725.9 474.1 725.9 474.1 726 474.7C726.1 475.3 725.8 477.2 725.9 478.1C726.1 479 726.4 480.2 727 480.2C727.6 480.2 729 479 729.7 478.1C730.5 477.2 731.2 475.3 731.5 474.8C731.8 474.2 731.6 474.2 731.5 474.8C731.5 475.3 731.1 477.2 731.3 478.1C731.6 479 732.2 480.2 732.8 480.2C733.5 480.1 734.6 478.8 735.4 477.8C736.2 476.8 737.1 474.7 737.4 474C737.8 473.4 737.7 473.4 737.7 474C737.8 474.7 737.3 476.8 737.5 477.8C737.7 478.8 738.5 479.8 738.7 480.2" stroke="#242424" stroke-width="0.8" fill="none" stroke-linecap="round" stroke-linejoin="round"/>
<path d="M415 636.6C415.8 635.7 418.6 633.6 419.9 631.3C421.2 629 422.5 624.2 422.7 622.7C422.8 621.3 421.6 621.3 420.9 622.7C420.2 624.2 418.7 629 418.6 631.3C418.5 633.6 419.4 636.5 420.3 636.6C421.2 636.7 423.1 634.1 424.2 632.1C425.3 630.2 426.6 626.1 426.9 624.9C427.2 623.7 426.5 623.7 426.1 624.9C425.6 626.1 424.5 630.2 424.4 632.1C424.3 634.1 425 636.1 425.6 636.6C426.2 637.1 427.5 635.7 428.2 634.9C428.8 634.2 429.4 632.7 429.6 632.3C429.9 631.8 429.5 631.8 429.5 632.3C429.4 632.7 429.1 634.2 429.4 634.9C429.6 635.7 430 637.1 430.9 636.6C431.8 636.1 433.8 633.9 434.9 631.9C436 629.8 437.4 625.5 437.7 624.2C438 622.9 437.3 622.9 436.9 624.2C436.4 625.5 435.2 629.8 435.1 631.9C435 633.9 435.7 635.4 436.2 636.6C436.7 637.8 437.9 638 438.1 639C438.3 640.1 437.6 642.3 437.4 642.9C437.1 643.6 436.4 643.6 436.6 642.9C436.7 642.3 437.4 640.1 438.2 639C439 638 441 637 441.5 636.6" stroke="#242424" stroke-width="0.96" fill="none" stroke-linecap="round" stroke-linejoin="round"/>
<path d="M417 653.6C417.4 653.1 419 652 419.7 650.7C420.4 649.4 421.1 646.8 421.2 646.1C421.3 645.3 420.6 645.3 420.2 646.1C419.9 646.8 419 649.4 418.9 650.7C418.9 652 419.5 653.3 419.9 653.6C420.3 653.9 420.9 652.9 421.3 652.4C421.7 651.8 422.1 650.7 422.3 650.4C422.5 650.1 422.4 650.1 422.3 650.4C422.3 650.7 422.1 651.8 422.2 652.4C422.2 652.9 422.5 653.5 422.8 653.6C423.2 653.6 423.9 653 424.2 652.6C424.6 652.2 425 651.3 425.1 651C425.2 650.7 425.1 650.7 425 651C425 651.3 424.8 652.2 424.9 652.6C425.1 653 425.2 653.9 425.8 653.6C426.3 653.3 427.4 652 428 650.7C428.7 649.4 429.5 646.8 429.7 646C429.9 645.2 429.5 645.2 429.3 646C429 646.8 428.2 649.4 428.1 650.7C428 652 428.4 652.9 428.7 653.6C428.9 654.3 429.6 654.3 429.7 654.9C429.8 655.5 429.4 656.7 429.3 657.1C429.2 657.4 428.8 657.4 428.9 657.1C428.9 656.7 429.3 655.5 429.8 654.9C430.2 654.3 430.9 654.2 431.6 653.6C432.2 653 433.1 652.4 433.6 651.4C434.2 650.5 434.8 648.5 435 647.9C435.1 647.3 434.7 647.3 434.5 647.9C434.3 648.5 433.7 650.5 433.7 651.4C433.7 652.4 434.2 653.4 434.5 653.6C434.9 653.7 435.4 652.8 435.8 652.2C436.2 651.7 436.7 650.4 436.9 650.1C437.1 649.7 437.1 649.7 437.1 650.1C437.1 650.4 436.9 651.7 436.9 652.2C437 652.8 437.1 653.5 437.4 653.6C437.7 653.6 438.5 653 438.9 652.6C439.3 652.1 439.6 651.2 439.7 650.9C439.9 650.7 439.7 650.7 439.6 650.9C439.6 651.2 439.4 652.1 439.5 652.6C439.6 653 440 653.6 440.3 653.6C440.7 653.6 441 653 441.4 652.6C441.7 652.2 442.1 651.3 442.4 651.1C442.6 650.8 442.7 650.8 442.7 651.1C442.8 651.3 442.7 652.2 442.8 652.6C442.9 653 442.9 653.6 443.3 653.6C443.6 653.6 444.3 653.1 444.6 652.7C445 652.3 445.3 651.4 445.5 651.2C445.6 651 445.4 651 445.4 651.2C445.4 651.4 445.2 652.3 445.3 652.7C445.5 653.1 445.8 653.6 446.2 653.6C446.5 653.6 447.1 653 447.5 652.6C447.8 652.1 448.2 651.2 448.4 651C448.5 650.7 448.4 650.7 448.5 651C448.5 651.2 448.3 652.1 448.4 652.6C448.5 653 448.8 653.6 449.1 653.6C449.4 653.6 449.9 652.9 450.2 652.4C450.6 651.9 451.1 650.9 451.3 650.6C451.5 650.2 451.6 650.2 451.6 650.6C451.7 650.9 451.5 651.9 451.6 652.4C451.6 652.9 451.7 653.6 452 653.6C452.3 653.6 453.1 653 453.4 652.5C453.8 652.1 454.2 651.1 454.3 650.8C454.5 650.6 454.3 650.6 454.2 650.8C454.2 651.1 454 652.1 454.1 652.5C454.2 653 454.4 653.9 454.9 653.6C455.4 653.3 456.5 652 457.2 650.8C457.8 649.6 458.6 647 458.8 646.3C459 645.5 458.6 645.5 458.3 646.3C458.1 647 457.3 649.6 457.3 650.8C457.2 652 457.6 653.3 457.8 653.6C458.1 653.9 458.5 653 458.9 652.5C459.3 652 459.7 651.1 459.9 650.8C460.2 650.5 460.3 650.5 460.3 650.8C460.4 651.1 460.3 652 460.3 652.5C460.4 653 460.5 653.6 460.8 653.6C461 653.6 461.6 652.9 461.9 652.4C462.3 651.9 462.8 650.8 463 650.5C463.2 650.1 463.3 650.1 463.3 650.5C463.3 650.8 463.1 651.9 463.2 652.4C463.3 652.9 463.4 653.5 463.7 653.6C464 653.6 464.5 653.1 464.9 652.6C465.3 652.2 465.6 651.4 465.8 651.1C466 650.9 465.9 650.9 465.9 651.1C466 651.4 465.8 652.2 465.9 652.6C466 653.1 466.5 653.4 466.6 653.6" stroke="#242424" stroke-width="0.6400000000000001" fill="none" stroke-linecap="round" stroke-linejoin="round" opacity="0.7"/>
<path d="M415 664C415.2 663.9 415.8 663.6 416.1 663.2C416.4 662.9 416.7 662.2 416.8 662C416.9 661.8 416.8 661.8 416.8 662C416.8 662.2 416.6 662.9 416.7 663.2C416.8 663.6 417 664.3 417.4 664C417.8 663.8 418.7 662.7 419.3 661.7C419.8 660.6 420.5 658.5 420.6 657.8C420.8 657.2 420.5 657.2 420.3 657.8C420 658.5 419.4 660.6 419.3 661.7C419.2 662.7 419.5 663.8 419.8 664C420 664.2 420.6 663.4 420.9 662.9C421.2 662.5 421.6 661.5 421.8 661.2C421.9 660.9 421.9 660.9 421.9 661.2C421.9 661.5 421.6 662.5 421.7 662.9C421.7 663.4 421.9 664 422.2 664C422.4 664.1 423 663.5 423.3 663.2C423.6 662.8 423.9 662 424 661.8C424.2 661.5 424 661.5 424 661.8C424 662 423.8 662.8 423.9 663.2C424 663.5 424.3 664.1 424.5 664C424.8 664 425.2 663.4 425.5 662.9C425.8 662.5 426.2 661.5 426.4 661.2C426.7 660.9 426.7 660.9 426.7 661.2C426.8 661.5 426.6 662.5 426.6 662.9C426.7 663.4 426.7 664 426.9 664C427.2 664 427.7 663.4 428.1 663C428.4 662.5 428.8 661.5 428.9 661.2C429.1 661 429 661 429 661.2C429 661.5 428.8 662.5 428.8 663C428.9 663.4 429.1 664 429.3 664C429.6 664.1 429.9 663.6 430.2 663.3C430.5 662.9 430.8 662.2 431 662C431.2 661.8 431.2 661.8 431.2 662C431.3 662.2 431.2 662.9 431.3 663.3C431.4 663.6 431.5 663.7 431.7 664C431.9 664.3 432.5 664.6 432.5 665.1C432.6 665.6 432.3 666.6 432.2 666.9C432.1 667.2 431.8 667.2 431.9 666.9C431.9 666.6 432.2 665.6 432.6 665.1C433 664.6 433.8 664.2 434.1 664M439.1 664C439.2 664.2 439.8 664.6 439.9 665.1C440 665.6 439.7 666.6 439.6 666.9C439.5 667.2 439.2 667.2 439.2 666.9C439.3 666.6 439.6 665.6 440 665.1C440.4 664.6 441.1 664.3 441.5 664C441.9 663.7 442.2 663.6 442.5 663.3C442.8 663 443.1 662.3 443.2 662.1C443.4 661.9 443.3 661.9 443.3 662.1C443.3 662.3 443.2 663 443.3 663.3C443.4 663.6 443.6 664 443.9 664C444.2 664 444.8 663.5 445.1 663.2C445.4 662.8 445.7 662 445.8 661.8C445.9 661.5 445.7 661.5 445.7 661.8C445.6 662 445.5 662.8 445.6 663.2C445.6 663.5 446 664 446.3 664C446.5 664 446.9 663.6 447.2 663.3C447.5 662.9 447.8 662.3 447.9 662.1C448.1 661.9 448.1 661.9 448.1 662.1C448.2 662.3 448.1 662.9 448.1 663.3C448.2 663.6 448.4 664 448.6 664C448.9 664 449.5 663.6 449.8 663.2C450.1 662.8 450.4 662.1 450.5 661.9C450.6 661.6 450.5 661.6 450.5 661.9C450.5 662.1 450.3 662.8 450.4 663.2C450.5 663.6 450.8 663.7 451 664C451.3 664.3 451.8 664.6 451.9 665.1C451.9 665.6 451.7 666.6 451.5 666.9C451.4 667.2 451.1 667.2 451.2 666.9C451.2 666.6 451.6 665.6 451.9 665.1C452.3 664.6 453 664.3 453.4 664C453.8 663.7 454 663.5 454.3 663.2C454.6 662.8 454.9 662 455.1 661.8C455.3 661.6 455.4 661.6 455.4 661.8C455.5 662 455.4 662.8 455.4 663.2C455.5 663.5 455.6 664 455.8 664C456 664 456.5 663.6 456.8 663.3C457.1 662.9 457.4 662.2 457.6 662C457.7 661.8 457.6 661.8 457.6 662C457.6 662.2 457.5 662.9 457.6 663.3C457.7 663.6 457.9 664.1 458.2 664C458.5 664 458.9 663.5 459.2 663.1C459.6 662.6 459.9 661.8 460.1 661.5C460.2 661.3 460.2 661.3 460.2 661.5C460.2 661.8 460 662.6 460.1 663.1C460.2 663.5 460.2 664.2 460.6 664C460.9 663.8 461.9 662.9 462.4 661.9C462.9 661 463.4 659.2 463.6 658.6C463.7 658 463.4 658 463.2 658.6C463 659.2 462.5 661 462.4 661.9C462.4 662.9 462.9 663.7 463 664M466.1 664C466.4 663.7 467.3 662.8 467.8 661.9C468.4 661 468.9 659 469.1 658.5C469.2 657.9 468.9 657.9 468.7 658.5C468.5 659 468 661 467.9 661.9C467.9 662.8 468.2 663.8 468.4 664C468.7 664.2 469.2 663.5 469.5 663.1C469.9 662.8 470.2 662 470.3 661.7C470.4 661.5 470.3 661.5 470.3 661.7C470.3 662 470.2 662.8 470.2 663.1C470.3 663.5 470.6 663.7 470.8 664C471.1 664.3 471.6 664.6 471.7 665.1C471.7 665.6 471.5 666.6 471.3 666.9C471.2 667.2 470.9 667.2 471 666.9C471 666.6 471.4 665.6 471.7 665.1C472.1 664.6 472.8 664 473.2 664C473.6 664 474 664.6 474 665.1C474.1 665.6 473.8 666.6 473.7 666.9C473.6 667.2 473.3 667.2 473.4 666.9C473.4 666.6 473.7 665.6 474.1 665.1C474.5 664.6 475.4 664.2 475.6 664" stroke="#242424" stroke-width="0.6400000000000001" fill="none" stroke-linecap="round" stroke-linejoin="round" opacity="0.7"/>
<path d="M413 672.2C413.3 671.9 414.5 671 415.1 670.1C415.6 669.2 416.1 667.3 416.2 666.7C416.2 666.1 415.7 666.1 415.4 666.7C415.1 667.3 414.5 669.2 414.5 670.1C414.5 671 415 672 415.3 672.2C415.6 672.5 415.9 671.8 416.1 671.5C416.4 671.2 416.7 670.6 416.9 670.4C417 670.2 417.1 670.2 417.1 670.4C417.2 670.6 417.1 671.2 417.2 671.5C417.3 671.8 417.4 672.2 417.6 672.2C417.8 672.2 418.3 671.9 418.6 671.6C418.8 671.3 419.1 670.6 419.2 670.4C419.4 670.3 419.3 670.3 419.3 670.4C419.4 670.6 419.3 671.3 419.4 671.6C419.4 671.9 419.7 672.2 419.9 672.2C420.1 672.2 420.6 671.9 420.8 671.6C421.1 671.3 421.4 670.6 421.5 670.4C421.7 670.3 421.6 670.3 421.6 670.4C421.7 670.6 421.6 671.3 421.7 671.6C421.8 671.9 422 672 422.2 672.2C422.4 672.5 422.9 672.8 423 673.2C423.1 673.6 422.9 674.5 422.8 674.8C422.7 675 422.4 675 422.4 674.8C422.5 674.5 422.7 673.6 423.1 673.2C423.4 672.8 424.1 672.5 424.5 672.2C424.9 671.9 425.2 671.8 425.5 671.4C425.7 671.1 426.1 670.3 426.2 670.1C426.4 669.9 426.4 669.9 426.4 670.1C426.4 670.3 426.3 671.1 426.3 671.4C426.4 671.8 426.6 671.9 426.8 672.2C427 672.5 427.5 672.8 427.6 673.2C427.7 673.6 427.5 674.5 427.4 674.8C427.3 675 427 675 427 674.8C427.1 674.5 427.3 673.6 427.7 673.2C428 672.8 428.9 672.4 429.1 672.2M432.8 672.2C433.1 671.9 434.3 671.2 434.8 670.3C435.3 669.5 435.8 667.8 435.8 667.2C435.9 666.7 435.3 666.7 435.1 667.2C434.8 667.8 434.2 669.5 434.2 670.3C434.2 671.2 434.8 672.1 435.1 672.2C435.4 672.4 435.9 671.8 436.2 671.4C436.5 671.1 436.8 670.3 436.9 670.1C437 669.9 436.9 669.9 436.8 670.1C436.8 670.3 436.6 671.1 436.7 671.4C436.8 671.8 437 672.5 437.4 672.2C437.8 672 438.6 671 439.1 670.1C439.6 669.2 440.2 667.3 440.4 666.7C440.5 666.1 440.2 666.1 440 666.7C439.8 667.3 439.3 669.2 439.2 670.1C439.2 671 439.4 672 439.7 672.2C439.9 672.4 440.4 671.7 440.7 671.3C441.1 670.9 441.4 670.1 441.5 669.8C441.7 669.6 441.6 669.6 441.6 669.8C441.6 670.1 441.4 670.9 441.5 671.3C441.5 671.7 441.7 672.2 442 672.2C442.3 672.3 442.8 671.8 443.1 671.5C443.3 671.2 443.6 670.5 443.7 670.3C443.8 670.1 443.7 670.1 443.7 670.3C443.7 670.5 443.6 671.2 443.7 671.5C443.8 671.8 443.9 672.4 444.3 672.2C444.7 672.1 445.5 671.3 445.9 670.6C446.3 669.8 446.8 668.3 446.9 667.8C447 667.4 446.7 667.4 446.6 667.8C446.4 668.3 446 669.8 446 670.6C446 671.3 446.5 672 446.6 672.2M449.4 672.2C449.8 671.9 450.9 671.2 451.4 670.3C451.9 669.5 452.4 667.7 452.5 667.2C452.5 666.7 452 666.7 451.7 667.2C451.4 667.7 450.9 669.5 450.9 670.3C450.9 671.2 451.4 672 451.7 672.2C452 672.4 452.4 671.9 452.7 671.6C453 671.3 453.3 670.7 453.4 670.5C453.5 670.3 453.4 670.3 453.4 670.5C453.4 670.7 453.3 671.3 453.4 671.6C453.5 671.9 453.8 672 454 672.2C454.3 672.5 454.8 672.8 454.8 673.2C454.9 673.6 454.7 674.5 454.6 674.8C454.5 675 454.2 675 454.2 674.8C454.3 674.5 454.6 673.6 454.9 673.2C455.3 672.8 455.9 672.6 456.3 672.2C456.7 671.9 457.1 671.7 457.4 671.3C457.7 670.9 458.1 670.1 458.2 669.8C458.3 669.6 458.2 669.6 458.2 669.8C458.2 670.1 458 670.9 458.1 671.3C458.1 671.7 458.3 672.4 458.6 672.2C459 672.1 459.8 671.3 460.2 670.6C460.7 669.8 461.1 668.3 461.3 667.9C461.4 667.4 461.1 667.4 460.9 667.9C460.7 668.3 460.3 669.8 460.3 670.6C460.3 671.3 460.7 672.1 460.9 672.2C461.2 672.4 461.5 671.7 461.8 671.3C462.1 670.8 462.5 669.9 462.7 669.7C462.9 669.4 463 669.4 463 669.7C463 669.9 462.9 670.8 462.9 671.3C463 671.7 463 672.2 463.2 672.2C463.5 672.3 464 671.7 464.4 671.4C464.7 671 465 670.2 465.1 669.9C465.2 669.7 465.1 669.7 465 669.9C465 670.2 464.8 671 464.9 671.4C465 671.7 465.4 672.1 465.5 672.2" stroke="#242424" stroke-width="0.6400000000000001" fill="none" stroke-linecap="round" stroke-linejoin="round" opacity="0.7"/>
<path d="M415 684.2C415.3 683.9 416.5 683 417.1 682.1C417.6 681.2 418.1 679.2 418.2 678.7C418.3 678.1 417.7 678.1 417.4 678.7C417.2 679.2 416.5 681.2 416.5 682.1C416.5 683 416.9 684.2 417.3 684.2C417.7 684.2 418.6 683 419.1 682.1C419.5 681.2 420.1 679.3 420.3 678.7C420.4 678.1 420.1 678.1 419.9 678.7C419.7 679.3 419.2 681.2 419.1 682.1C419.1 683 419.4 684 419.6 684.2C419.8 684.5 420.2 683.8 420.4 683.5C420.7 683.1 421 682.4 421.2 682.2C421.4 682 421.5 682 421.5 682.2C421.6 682.4 421.5 683.1 421.5 683.5C421.6 683.8 421.7 683.9 421.9 684.2C422.1 684.5 422.6 684.8 422.7 685.2C422.8 685.6 422.6 686.5 422.5 686.8C422.4 687 422.1 687 422.1 686.8C422.2 686.5 422.4 685.6 422.8 685.2C423.1 684.8 423.8 684.5 424.2 684.2C424.6 683.9 424.8 683.7 425.1 683.4C425.4 683 425.7 682.2 425.9 681.9C426.1 681.7 426.1 681.7 426.2 681.9C426.2 682.2 426.1 683 426.1 683.4C426.2 683.7 426.3 684.2 426.5 684.2C426.7 684.3 427.1 683.8 427.4 683.5C427.6 683.2 427.9 682.6 428.1 682.4C428.2 682.2 428.3 682.2 428.3 682.4C428.4 682.6 428.3 683.2 428.4 683.5C428.4 683.8 428.6 684 428.8 684.2C429 684.5 429.5 684.8 429.6 685.2C429.7 685.6 429.5 686.5 429.4 686.8C429.3 687 429 687 429 686.8C429.1 686.5 429.3 685.6 429.7 685.2C430 684.8 430.7 684.6 431.1 684.2C431.5 683.9 432 683.7 432.3 683.3C432.7 682.8 433 681.9 433.1 681.7C433.2 681.4 433 681.4 433 681.7C432.9 681.9 432.7 682.8 432.8 683.3C432.8 683.7 433.1 684.2 433.4 684.2C433.7 684.3 434.1 683.8 434.4 683.4C434.7 683.1 435 682.3 435.1 682.1C435.3 681.9 435.2 681.9 435.2 682.1C435.2 682.3 435.1 683.1 435.2 683.4C435.3 683.8 435.4 684.3 435.7 684.2C436 684.2 436.5 683.7 436.8 683.3C437.2 682.9 437.5 682 437.6 681.7C437.7 681.5 437.6 681.5 437.6 681.7C437.6 682 437.4 682.9 437.4 683.3C437.5 683.7 437.9 684.1 438 684.2M442.2 684.2C442.6 683.9 443.8 683.1 444.3 682.1C444.8 681.2 445.3 679.3 445.4 678.7C445.5 678.2 444.9 678.2 444.6 678.7C444.4 679.3 443.7 681.2 443.7 682.1C443.7 683.1 444.2 684 444.5 684.2C444.8 684.5 445.3 683.9 445.6 683.6C445.8 683.3 446.1 682.6 446.2 682.5C446.3 682.3 446.2 682.3 446.2 682.5C446.2 682.6 446.1 683.3 446.2 683.6C446.3 683.9 446.5 684.2 446.8 684.2C447.1 684.2 447.7 683.8 448 683.5C448.3 683.2 448.5 682.6 448.6 682.4C448.7 682.2 448.5 682.2 448.5 682.4C448.4 682.6 448.3 683.2 448.4 683.5C448.5 683.8 448.9 684.3 449.1 684.2C449.4 684.2 449.7 683.7 450 683.3C450.3 682.9 450.7 682.1 450.9 681.9C451 681.6 451.1 681.6 451.1 681.9C451.2 682.1 451 682.9 451.1 683.3C451.1 683.7 451.2 684.3 451.4 684.2C451.7 684.2 452.3 683.7 452.6 683.3C452.9 682.8 453.3 682 453.4 681.7C453.5 681.4 453.3 681.4 453.3 681.7C453.2 682 453 682.8 453.1 683.3C453.2 683.7 453.4 684.2 453.7 684.2C454 684.2 454.6 683.7 454.9 683.3C455.2 682.9 455.5 682 455.6 681.8C455.7 681.5 455.6 681.5 455.6 681.8C455.6 682 455.4 682.9 455.4 683.3C455.5 683.7 455.9 684.1 456 684.2M460.1 684.2C460.5 683.9 461.7 683.1 462.2 682.2C462.7 681.2 463.3 679.3 463.3 678.8C463.4 678.2 462.8 678.2 462.6 678.8C462.3 679.3 461.6 681.2 461.6 682.2C461.6 683.1 462.1 684 462.4 684.2C462.8 684.5 463.3 683.8 463.6 683.5C463.9 683.2 464.2 682.5 464.2 682.3C464.3 682.1 464.2 682.1 464.1 682.3C464.1 682.5 463.9 683.2 464 683.5C464.1 683.8 464.5 684.3 464.7 684.2C465 684.2 465.3 683.7 465.6 683.3C465.9 682.8 466.3 682 466.5 681.7C466.7 681.4 466.8 681.4 466.8 681.7C466.8 682 466.7 682.8 466.7 683.3C466.8 683.7 466.8 684.2 467 684.2C467.3 684.2 467.7 683.7 468 683.3C468.3 682.9 468.6 682.1 468.8 681.8C469 681.6 469 681.6 469 681.8C469 682.1 468.9 682.9 469 683.3C469 683.7 469.1 684.2 469.3 684.2C469.5 684.3 469.9 683.8 470.2 683.5C470.5 683.2 470.8 682.5 470.9 682.3C471.1 682.1 471.1 682.1 471.2 682.3C471.2 682.5 471.1 683.2 471.2 683.5C471.3 683.8 471.4 684.2 471.6 684.2C471.9 684.2 472.3 683.8 472.6 683.5C472.9 683.2 473.2 682.5 473.3 682.3C473.4 682.1 473.4 682.1 473.4 682.3C473.4 682.5 473.3 683.2 473.4 683.5C473.5 683.8 473.9 684.1 473.9 684.2" stroke="#242424" stroke-width="0.6400000000000001" fill="none" stroke-linecap="round" stroke-linejoin="round" opacity="0.7"/>
<path d="M433 692.7C433.2 692.6 433.6 692.3 433.9 692C434.2 691.7 434.5 691.1 434.6 690.9C434.7 690.7 434.7 690.7 434.7 690.9C434.8 691.1 434.7 691.7 434.8 692C434.9 692.3 435 692.7 435.3 692.7C435.6 692.7 436 692.3 436.3 692C436.6 691.7 436.9 691.1 437 690.9C437.1 690.7 437 690.7 437 690.9C437 691.1 436.9 691.7 437 692C437.1 692.3 437.5 692.6 437.6 692.7" stroke="#242424" stroke-width="0.6400000000000001" fill="none" stroke-linecap="round" stroke-linejoin="round" opacity="0.6"/>
<path d="M421 734C422.6 732.3 428.3 728.3 430.8 723.9C433.4 719.5 435.8 710.3 436.1 707.6C436.4 704.9 433.9 704.9 432.6 707.6C431.2 710.3 428.2 719.5 428.1 723.9C428 728.3 429.9 734 431.9 734C433.9 734 437.8 728.4 440.1 724.1C442.5 719.8 445.2 710.7 445.9 708.1C446.6 705.4 445.2 705.4 444.3 708.1C443.3 710.7 440.7 719.8 440.4 724.1C440.2 728.4 441.5 733 442.7 734C443.9 735 446.3 731.8 447.7 730.1C449.1 728.4 450.5 724.8 451.1 723.7C451.8 722.7 451.4 722.7 451.4 723.7C451.4 724.8 450.7 728.4 451.1 730.1C451.4 731.8 452.5 734.1 453.6 734C454.7 733.8 456.3 731.3 457.7 729.3C459.1 727.2 461 722.9 462 721.6C463 720.4 463.3 720.4 463.5 721.6C463.7 722.9 463 727.2 463.2 729.3C463.4 731.3 464.3 733.2 464.5 734" stroke="#242424" stroke-width="0.6400000000000001" fill="none" stroke-linecap="round" stroke-linejoin="round" opacity="0.6"/>
<path d="M482 664.7C482.6 664 484.7 662.5 485.7 660.8C486.6 659.1 487.6 655.5 487.7 654.4C487.9 653.4 486.9 653.4 486.4 654.4C485.9 655.5 484.7 659.1 484.7 660.8C484.6 662.5 485.5 664.3 486 664.7C486.5 665.1 487.2 663.8 487.7 663.1C488.3 662.4 488.9 660.9 489.1 660.5C489.4 660.1 489.3 660.1 489.3 660.5C489.3 660.9 489.1 662.4 489.2 663.1C489.3 663.8 489.6 664.7 490 664.7C490.4 664.7 491.1 663.9 491.6 663.3C492.1 662.8 492.6 661.5 492.9 661.2C493.1 660.8 493.1 660.8 493.1 661.2C493.2 661.5 493 662.8 493.1 663.3C493.3 663.9 493.5 664.7 493.9 664.7C494.3 664.7 495.1 663.8 495.6 663.1C496.1 662.4 496.7 660.9 497 660.5C497.3 660 497.3 660 497.4 660.5C497.4 660.9 497.1 662.4 497.2 663.1C497.3 663.8 497.3 665 497.9 664.7C498.5 664.4 500 662.9 500.8 661.5C501.6 660.2 502.5 657.3 502.7 656.4C502.9 655.6 502.4 655.6 502.1 656.4C501.8 657.3 500.9 660.2 500.9 661.5C500.9 662.9 501.7 664.2 501.9 664.7M509.5 664.7C510.1 664 512.2 662.5 513.1 660.8C514.1 659.1 515.1 655.5 515.2 654.4C515.3 653.4 514.4 653.4 513.9 654.4C513.4 655.5 512.2 659.1 512.1 660.8C512 662.5 512.7 664.7 513.4 664.7C514.2 664.7 515.6 662.6 516.5 661C517.3 659.4 518.3 656.1 518.6 655.1C518.9 654.1 518.3 654.1 518 655.1C517.7 656.1 516.7 659.4 516.6 661C516.5 662.6 516.8 664.7 517.4 664.7C518.1 664.7 519.6 662.5 520.5 660.9C521.4 659.2 522.4 655.7 522.7 654.7C523 653.6 522.5 653.6 522.1 654.7C521.7 655.7 520.7 659.2 520.6 660.9C520.5 662.5 521 663.8 521.4 664.7C521.7 665.6 522.6 665.7 522.8 666.5C522.9 667.3 522.4 669 522.3 669.5C522.1 670 521.5 670 521.6 669.5C521.7 669 522.3 667.3 522.9 666.5C523.5 665.7 524.7 664.7 525.4 664.7C526 664.7 526.6 665.7 526.7 666.5C526.9 667.3 526.4 669 526.2 669.5C526 670 525.5 670 525.6 669.5C525.7 669 526.2 667.3 526.9 666.5C527.5 665.7 528.7 665.2 529.3 664.7C530 664.2 530.4 663.9 530.9 663.3C531.4 662.6 532 661.3 532.3 660.9C532.6 660.5 532.6 660.5 532.7 660.9C532.7 661.3 532.5 662.6 532.6 663.3C532.7 663.9 532.9 664.7 533.3 664.7C533.8 664.7 534.8 663.8 535.4 663.1C535.9 662.4 536.5 660.9 536.6 660.5C536.8 660.1 536.6 660.1 536.5 660.5C536.4 660.9 536.1 662.4 536.2 663.1C536.4 663.8 537.1 664.4 537.3 664.7" stroke="#242424" stroke-width="0.6400000000000001" fill="none" stroke-linecap="round" stroke-linejoin="round" opacity="0.65"/>
<path d="M487 678.2C487.2 678.1 487.7 677.7 488.1 677.3C488.4 676.8 488.7 675.9 488.9 675.7C489 675.4 489 675.4 489 675.7C489 675.9 488.8 676.8 488.8 677.3C488.9 677.7 489 678.2 489.3 678.2C489.6 678.3 490.1 677.8 490.4 677.5C490.7 677.2 490.9 676.6 491 676.4C491.1 676.2 491 676.2 491 676.4C491 676.6 490.8 677.2 490.9 677.5C491 677.8 491.4 678 491.6 678.2C491.8 678.5 492.3 678.8 492.4 679.2C492.5 679.6 492.3 680.5 492.2 680.8C492.1 681 491.8 681 491.8 680.8C491.9 680.5 492.1 679.6 492.5 679.2C492.8 678.8 493.5 678.5 493.9 678.2C494.3 678 494.5 677.9 494.7 677.6C495 677.3 495.3 676.7 495.4 676.5C495.6 676.4 495.6 676.4 495.7 676.5C495.7 676.7 495.7 677.3 495.8 677.6C495.8 677.9 495.9 678.3 496.2 678.2C496.5 678.2 497 677.8 497.3 677.4C497.6 677.1 497.9 676.4 498 676.1C498.1 675.9 498 675.9 498 676.1C497.9 676.4 497.8 677.1 497.9 677.4C498 677.8 498.3 677.9 498.5 678.2C498.7 678.5 499.2 678.8 499.3 679.2C499.4 679.6 499.2 680.5 499.1 680.8C499 681 498.7 681 498.7 680.8C498.8 680.5 499 679.6 499.4 679.2C499.7 678.8 500.4 678.5 500.8 678.2C501.2 678 501.5 677.9 501.8 677.6C502.1 677.3 502.3 676.6 502.4 676.5C502.6 676.3 502.5 676.3 502.5 676.5C502.5 676.6 502.4 677.3 502.5 677.6C502.6 677.9 502.8 678.3 503.1 678.2C503.4 678.2 503.8 677.8 504.1 677.4C504.3 677.1 504.7 676.3 504.8 676.1C505 675.9 505 675.9 505 676.1C505 676.3 504.9 677.1 504.9 677.4C505 677.8 505.1 678.3 505.4 678.2C505.7 678.2 506.2 677.7 506.5 677.3C506.8 676.9 507.2 676 507.3 675.7C507.4 675.5 507.3 675.5 507.3 675.7C507.3 676 507.1 676.9 507.2 677.3C507.2 677.7 507.3 678.4 507.7 678.2C508.1 678.1 508.9 677.2 509.4 676.3C509.9 675.5 510.4 673.7 510.5 673.2C510.7 672.7 510.4 672.7 510.2 673.2C510 673.7 509.5 675.5 509.5 676.3C509.4 677.2 509.7 678.1 510 678.2C510.3 678.4 510.7 677.7 511 677.3C511.3 676.8 511.7 675.9 511.8 675.7C512 675.4 512 675.4 512 675.7C512 675.9 511.8 676.8 511.9 677.3C511.9 677.7 512.1 678.2 512.3 678.2C512.5 678.3 513 677.8 513.3 677.4C513.6 677 513.9 676.2 514.1 676C514.2 675.7 514.2 675.7 514.2 676C514.2 676.2 514.1 677 514.2 677.4C514.2 677.8 514.3 678.2 514.6 678.2C514.9 678.2 515.5 677.7 515.8 677.4C516.1 677 516.4 676.2 516.5 675.9C516.6 675.7 516.4 675.7 516.4 675.9C516.4 676.2 516.2 677 516.3 677.4C516.3 677.7 516.6 678.2 516.9 678.2C517.2 678.3 517.8 677.8 518.1 677.5C518.4 677.1 518.6 676.4 518.7 676.2C518.8 676 518.6 676 518.6 676.2C518.6 676.4 518.4 677.1 518.5 677.5C518.6 677.8 518.8 678.5 519.2 678.2C519.6 678 520.4 677.1 520.9 676.2C521.4 675.3 522 673.4 522.1 672.9C522.3 672.3 522 672.3 521.8 672.9C521.6 673.4 521 675.3 521 676.2C521 677.1 521.4 677.9 521.5 678.2" stroke="#242424" stroke-width="0.6400000000000001" fill="none" stroke-linecap="round" stroke-linejoin="round" opacity="0.65"/>
<path d="M606 678.3C607.4 676.9 612.3 673.4 614.4 669.6C616.6 665.9 618.7 658 619 655.7C619.2 653.3 617.1 653.3 615.9 655.7C614.8 658 612.2 665.9 612 669.6C611.9 673.4 614 677.6 615.3 678.3C616.6 679 618.6 675.9 619.9 674.1C621.2 672.3 622.7 668.5 623.2 667.4C623.8 666.2 623.3 666.2 623.2 667.4C623 668.5 622.2 672.3 622.4 674.1C622.7 675.9 623.6 678.1 624.6 678.3C625.5 678.5 627.1 676.7 628.2 675.4C629.3 674.2 630.5 671.5 631.1 670.8C631.7 670 631.7 670 631.8 670.8C632 671.5 631.6 674.2 631.9 675.4C632.3 676.7 632.3 679.4 633.8 678.3C635.4 677.2 639 673.1 641.1 669C643.2 664.9 645.8 656.5 646.5 654C647.2 651.4 645.9 651.4 645.1 654C644.2 656.5 641.7 664.9 641.4 669C641.1 673.1 642.2 677.3 643.1 678.3C644.1 679.3 646.1 676.6 647.2 675.3C648.4 673.9 649.5 671.1 650.1 670.3C650.6 669.5 650.3 669.5 650.3 670.3C650.3 671.1 649.8 673.9 650.1 675.3C650.5 676.6 652 677.8 652.4 678.3" stroke="#242424" stroke-width="0.6400000000000001" fill="none" stroke-linecap="round" stroke-linejoin="round" opacity="0.6"/>
<path d="M694 624.5C694.6 623.8 696.9 622.3 697.8 620.6C698.8 618.9 699.8 615.3 699.9 614.2C700 613.2 699 613.2 698.5 614.2C698 615.3 696.8 618.9 696.8 620.6C696.7 622.3 697.7 624.1 698.2 624.5C698.8 624.8 699.5 623.5 700 622.7C700.6 622 701.2 620.4 701.5 619.9C701.9 619.5 701.9 619.5 701.9 619.9C701.9 620.4 701.7 622 701.8 622.7C701.9 623.5 702.1 624.4 702.5 624.5C702.9 624.5 703.8 623.6 704.4 623C704.9 622.3 705.5 621 705.7 620.6C706 620.2 705.8 620.2 705.9 620.6C705.9 621 705.6 622.3 705.8 623C705.9 623.6 706.2 624.6 706.7 624.5C707.2 624.4 708.2 623.4 708.8 622.5C709.4 621.7 710.1 619.9 710.4 619.3C710.6 618.8 710.5 618.8 710.4 619.3C710.4 619.9 710 621.7 710.1 622.5C710.2 623.4 710.5 624.4 711 624.5C711.4 624.5 712.3 623.5 712.8 622.7C713.4 622 714 620.3 714.3 619.9C714.6 619.4 714.6 619.4 714.6 619.9C714.6 620.3 714.3 622 714.4 622.7C714.5 623.5 714.7 624.5 715.2 624.5C715.7 624.5 716.7 623.5 717.3 622.7C717.9 621.9 718.5 620.3 718.7 619.8C719 619.3 718.8 619.3 718.7 619.8C718.7 620.3 718.4 621.9 718.5 622.7C718.6 623.5 719 623.9 719.5 624.5C719.9 625.1 720.8 625.6 720.9 626.4C721.1 627.3 720.6 629 720.4 629.6C720.2 630.1 719.6 630.1 719.7 629.6C719.8 629 720.4 627.3 721.1 626.4C721.7 625.6 723 624.5 723.7 624.5C724.4 624.5 725 625.6 725.2 626.4C725.3 627.3 724.8 629 724.6 629.6C724.4 630.1 723.9 630.1 724 629.6C724.1 629 724.6 627.3 725.3 626.4C726 625.6 727.1 625.1 727.9 624.5C728.7 623.8 729.5 623.4 730.1 622.6C730.7 621.8 731.3 620.1 731.6 619.6C731.8 619.1 731.6 619.1 731.5 619.6C731.4 620.1 731 621.8 731.2 622.6C731.3 623.4 731.7 624.4 732.2 624.5C732.7 624.6 733.5 623.7 734 623.1C734.5 622.5 735.1 621.2 735.3 620.8C735.6 620.5 735.5 620.5 735.5 620.8C735.5 621.2 735.3 622.5 735.4 623.1C735.6 623.7 735.9 624.5 736.4 624.5C736.9 624.5 737.9 623.7 738.4 623.1C739 622.5 739.5 621.2 739.7 620.8C739.9 620.4 739.7 620.4 739.6 620.8C739.6 621.2 739.4 622.5 739.5 623.1C739.7 623.7 740.5 624.2 740.7 624.5" stroke="#242424" stroke-width="0.5599999999999999" fill="none" stroke-linecap="round" stroke-linejoin="round" opacity="0.5"/>
<path d="M694 641.7C694.3 641.5 695.1 641 695.6 640.5C696 639.9 696.5 638.8 696.8 638.4C697.1 638.1 697.1 638.1 697.1 638.4C697.2 638.8 697 639.9 697.2 640.5C697.3 641 697.5 641.8 698 641.7C698.5 641.6 699.5 640.7 700.1 639.9C700.7 639.1 701.3 637.4 701.5 636.9C701.7 636.4 701.4 636.4 701.3 636.9C701.2 637.4 700.8 639.1 700.9 639.9C701 640.7 701.5 641.1 702 641.7C702.4 642.3 703.2 642.7 703.3 643.5C703.5 644.3 703 646 702.8 646.5C702.6 647 702.1 647 702.2 646.5C702.3 646 702.8 644.3 703.5 643.5C704.1 642.7 705.2 642.3 705.9 641.7C706.6 641.1 707.1 640.7 707.6 639.9C708.1 639.1 708.8 637.4 709.2 636.9C709.5 636.4 709.5 636.4 709.6 636.9C709.6 637.4 709.3 639.1 709.3 639.9C709.4 640.7 709.6 641.6 709.9 641.7C710.3 641.8 710.9 640.9 711.4 640.2C711.9 639.6 712.5 638.2 712.8 637.8C713.2 637.4 713.2 637.4 713.3 637.8C713.4 638.2 713.2 639.6 713.3 640.2C713.4 640.9 713.6 641.1 713.9 641.7C714.2 642.3 715.1 642.7 715.3 643.5C715.4 644.3 714.9 646 714.8 646.5C714.6 647 714 647 714.1 646.5C714.3 646 714.8 644.3 715.4 643.5C716 642.7 717.1 642.2 717.9 641.7C718.6 641.2 719.4 640.9 719.9 640.2C720.5 639.6 720.9 638.3 721.1 637.9C721.3 637.5 721 637.5 720.9 637.9C720.8 638.3 720.5 639.6 720.7 640.2C720.8 640.9 721.4 641.2 721.8 641.7C722.3 642.2 723.1 642.7 723.2 643.5C723.4 644.3 722.9 646 722.7 646.5C722.5 647 722 647 722.1 646.5C722.2 646 722.7 644.3 723.3 643.5C724 642.7 725.2 641.7 725.8 641.7C726.5 641.7 727.1 642.7 727.2 643.5C727.4 644.3 726.9 646 726.7 646.5C726.5 647 726 647 726.1 646.5C726.2 646 726.7 644.3 727.3 643.5C727.9 642.7 729.1 642.3 729.8 641.7C730.5 641.1 731.2 640.9 731.8 640.2C732.3 639.5 732.8 638.2 733 637.8C733.2 637.4 733 637.4 732.9 637.8C732.9 638.2 732.6 639.5 732.7 640.2C732.9 640.9 733.6 641.4 733.8 641.7" stroke="#242424" stroke-width="0.5599999999999999" fill="none" stroke-linecap="round" stroke-linejoin="round" opacity="0.5"/>
<path d="M694 658.3C694.7 657.6 697 655.9 698.1 654.1C699.1 652.4 700.1 648.6 700.2 647.5C700.3 646.4 699.3 646.4 698.7 647.5C698.2 648.6 696.9 652.4 696.9 654.1C696.9 655.9 697.7 658.3 698.5 658.3C699.4 658.2 701 655.9 702 654C703 652.2 704.1 648.3 704.4 647.1C704.7 646 704.1 646 703.8 647.1C703.4 648.3 702.2 652.2 702.1 654C702 655.9 702.5 657.8 703 658.3C703.5 658.7 704.6 657.3 705.2 656.5C705.8 655.7 706.4 654.1 706.7 653.6C706.9 653.1 706.7 653.1 706.7 653.6C706.7 654.1 706.3 655.7 706.5 656.5C706.6 657.3 707 658.2 707.5 658.3C708 658.3 708.8 657.4 709.4 656.7C709.9 656 710.6 654.6 710.9 654.1C711.2 653.7 711.1 653.7 711.2 654.1C711.2 654.6 711 656 711.1 656.7C711.3 657.4 711.6 658.3 712 658.3C712.5 658.2 713.3 657.3 713.9 656.5C714.5 655.7 715.2 654.1 715.5 653.6C715.8 653.2 715.8 653.2 715.9 653.6C715.9 654.1 715.6 655.7 715.7 656.5C715.9 657.3 716.1 658.2 716.5 658.3C717 658.3 718.1 657.4 718.7 656.7C719.3 656 719.8 654.6 720.1 654.2C720.3 653.7 720 653.7 720 654.2C720 654.6 719.7 656 719.8 656.7C720 657.4 720.3 658.7 721.1 658.3C721.8 657.8 723.5 655.8 724.5 653.9C725.5 652 726.8 648.1 727.1 646.9C727.4 645.7 726.8 645.7 726.4 646.9C726 648.1 724.8 652 724.7 653.9C724.5 655.8 725 657.8 725.6 658.3C726.1 658.7 727.2 657.3 727.9 656.6C728.5 655.9 729 654.4 729.2 654C729.4 653.5 729.1 653.5 729 654C728.9 654.4 728.6 655.9 728.8 656.6C728.9 657.3 729.6 657.6 730.1 658.3C730.5 658.9 731.5 659.4 731.6 660.3C731.8 661.2 731.3 663.1 731 663.7C730.8 664.2 730.2 664.2 730.4 663.7C730.5 663.1 731.1 661.2 731.8 660.3C732.5 659.4 733.8 658.3 734.6 658.3C735.3 658.3 736 659.4 736.1 660.3C736.3 661.2 735.8 663.1 735.6 663.7C735.3 664.2 734.7 664.2 734.9 663.7C735 663.1 735.6 661.2 736.3 660.3C737 659.4 738.6 658.6 739.1 658.3" stroke="#242424" stroke-width="0.5599999999999999" fill="none" stroke-linecap="round" stroke-linejoin="round" opacity="0.5"/>
<path d="M2 171 H799 V820 H2 Z M31 220 L300 220 L300 214.5 L746 214.5 L746 434.5 L177 434.5 L177 455.5 L31 455.5 Z" fill="#000" fill-opacity="0.41" fill-rule="evenodd"/>
<path d="M31 220 L300 220 L300 214.5 L746 214.5 L746 434.5 L177 434.5 L177 455.5 L31 455.5 Z" fill="none" stroke="#dea23a" stroke-width="2.2" stroke-dasharray="7.6 5.8" stroke-dashoffset="1.3" stroke-linecap="butt"/>
<path d="M798 171 V820 M2 819.5 H799" stroke="#bdbdbd" stroke-width="1.2" opacity="0.75"/>
</svg>

<div id="tabs">
  <div class="tab" style="left:0;width:320px">
    <div class="dot" style="left:14px"></div>
    <div class="badge" style="left:36px;width:62px;background:#1d2533;border-color:#3b4b62;color:#e6eef8">DEATH</div>
    <div class="fname" style="left:107.5px;color:#8a8a8f">PL_1_300_1972_003…</div>
  </div>
  <div class="tab" style="left:320px;width:323px;background:#202023">
    <div class="dot" style="left:17px"></div>
    <div class="badge" style="left:38.5px;width:61.5px;background:#173b39;border-color:#0f6b62;color:#5ff0d2">BIRTH</div>
    <div class="fname" style="left:110px;color:#f3f3f3">PL_1_300_2379_001…</div>
    <div style="position:absolute;left:0;top:49px;width:323px;height:3px;background:#f5a00b"></div>
  </div>
  <svg style="position:absolute;left:657px;top:14px" width="22" height="20" viewBox="0 0 22 20">
    <path d="M4.9 14.6 A6 6 0 1 1 14.1 7.4 A4.3 4.3 0 0 1 17.5 15.8" fill="none" stroke="#6c6c74" stroke-width="1.5" stroke-linecap="round"/>
    <path d="M7.6 15.2 L11.2 11.8 L14.8 15.2 M11.2 12 V18.8" fill="none" stroke="#6c6c74" stroke-width="1.5" stroke-linecap="round" stroke-linejoin="round"/>
  </svg>
</div>

<div id="panel">
  <div id="banner">
    <svg style="position:absolute;left:22px;top:17.2px" width="20" height="20" viewBox="0 0 20 20">
      <path d="M17.2 9.2 A8 8 0 1 1 13.6 3.3" fill="none" stroke="#14c98c" stroke-width="1.9" stroke-linecap="round"/>
      <path d="M6.2 9.6 L9 12.4 L17.2 4.2" fill="none" stroke="#14c98c" stroke-width="1.9" stroke-linecap="round" stroke-linejoin="round"/>
    </svg>
    <div class="txt">Saved to Knowledge Base</div>
  </div>
  <div class="lbl" style="left:24px;top:80px">RECORD TYPE</div>
  <div class="badge" style="left:23.2px;top:106px;width:62px;height:28.3px;line-height:26.6px;border-width:1.6px;background:#173b39;border-color:#0f6b62;color:#5ff0d2">BIRTH</div>
  <div class="lbl" style="left:24px;top:164px">PRIMARY SUBJECT</div>

  <div class="lbl" style="left:24px;top:206px">FIRST NAME</div>
  <div class="val" style="left:24px;top:235px">Fradel</div>
  <div class="dl" style="left:24px;top:276px"></div>
  <div class="lbl" style="left:407px;top:206px">LAST NAME</div>
  <div class="val" style="left:407px;top:235px">Blaustein</div>
  <div class="dl" style="left:407px;top:276px"></div>

  <div class="lbl" style="left:24px;top:293px">BIRTH DATE</div>
  <div class="val" style="left:24px;top:322px">1893-06-23</div>
  <div class="dl" style="left:24px;top:363px"></div>
  <div class="lbl" style="left:407px;top:293px">BIRTH PLACE</div>
  <div class="val" style="left:407px;top:322px">Bialy Kamien</div>
  <div class="dl" style="left:407px;top:363px"></div>

  <div class="lbl" style="left:24px;top:380px">GENDER</div>
  <div class="val" style="left:24px;top:409px">Female</div>
  <div class="dl" style="left:24px;top:450px;width:736px"></div>

  <div class="lbl" style="left:24px;top:481px">RELATED PEOPLE</div>
  <div id="people">
<div class="prow" style="top:0px;"><div class="role" style="width:69.5px">FATHER</div><div class="pname" style="left:98.0px">Wolf Blaustein</div><svg class="chev" width="14" height="10" viewBox="0 0 14 10"><path d="M1.6 3.2 L6.4 7.6 L11.2 3.2" fill="none" stroke="#6a6a73" stroke-width="1.4" stroke-linecap="round" stroke-linejoin="round"/></svg></div>
<div class="prow" style="top:51.5px;"><div class="role" style="width:69.5px">MOTHER</div><div class="pname" style="left:98.0px">Feige Bardach</div><svg class="chev" width="14" height="10" viewBox="0 0 14 10"><path d="M1.6 3.2 L6.4 7.6 L11.2 3.2" fill="none" stroke="#6a6a73" stroke-width="1.4" stroke-linecap="round" stroke-linejoin="round"/></svg></div>
<div class="prow" style="top:103px;"><div class="role" style="width:111.5px">GRANDFATHER</div><div class="pname" style="left:140.6px">Fawis Bardach</div><svg class="chev" width="14" height="10" viewBox="0 0 14 10"><path d="M1.6 3.2 L6.4 7.6 L11.2 3.2" fill="none" stroke="#6a6a73" stroke-width="1.4" stroke-linecap="round" stroke-linejoin="round"/></svg></div>
<div class="prow" style="top:154.7px;"><div class="role" style="width:111.5px">GRANDMOTHER</div><div class="pname" style="left:140.6px">Perie Bardach</div><svg class="chev" width="14" height="10" viewBox="0 0 14 10"><path d="M1.6 3.2 L6.4 7.6 L11.2 3.2" fill="none" stroke="#6a6a73" stroke-width="1.4" stroke-linecap="round" stroke-linejoin="round"/></svg></div>
<div class="prow" style="top:206.4px;border-bottom:none;"><div class="role" style="width:76.8px">MIDWIFE</div><div class="pname" style="left:106px">Maria Rak</div></div>
  </div>
  <div class="lbl" style="left:24px;top:795px">EVENT</div>

  <div id="sb">
    <svg style="position:absolute;left:3px;top:6px" width="14" height="11" viewBox="0 0 14 11"><path d="M7 1.2 L12.6 9.6 L1.4 9.6 Z" fill="#a5a5a5" stroke="#a5a5a5" stroke-width="1.2" stroke-linejoin="round"/></svg>
    <div style="position:absolute;left:4px;top:25px;width:12.5px;height:243px;border-radius:6.5px;background:#a7a7a7"></div>
    <svg style="position:absolute;left:3px;top:733px" width="14" height="11" viewBox="0 0 14 11"><path d="M7 9.8 L12.6 1.4 L1.4 1.4 Z" fill="#a5a5a5" stroke="#a5a5a5" stroke-width="1.2" stroke-linejoin="round"/></svg>
  </div>
  <div id="footer">
    <div id="btn">View in Knowledge Base</div>
  </div>
</div>
</body></html>
